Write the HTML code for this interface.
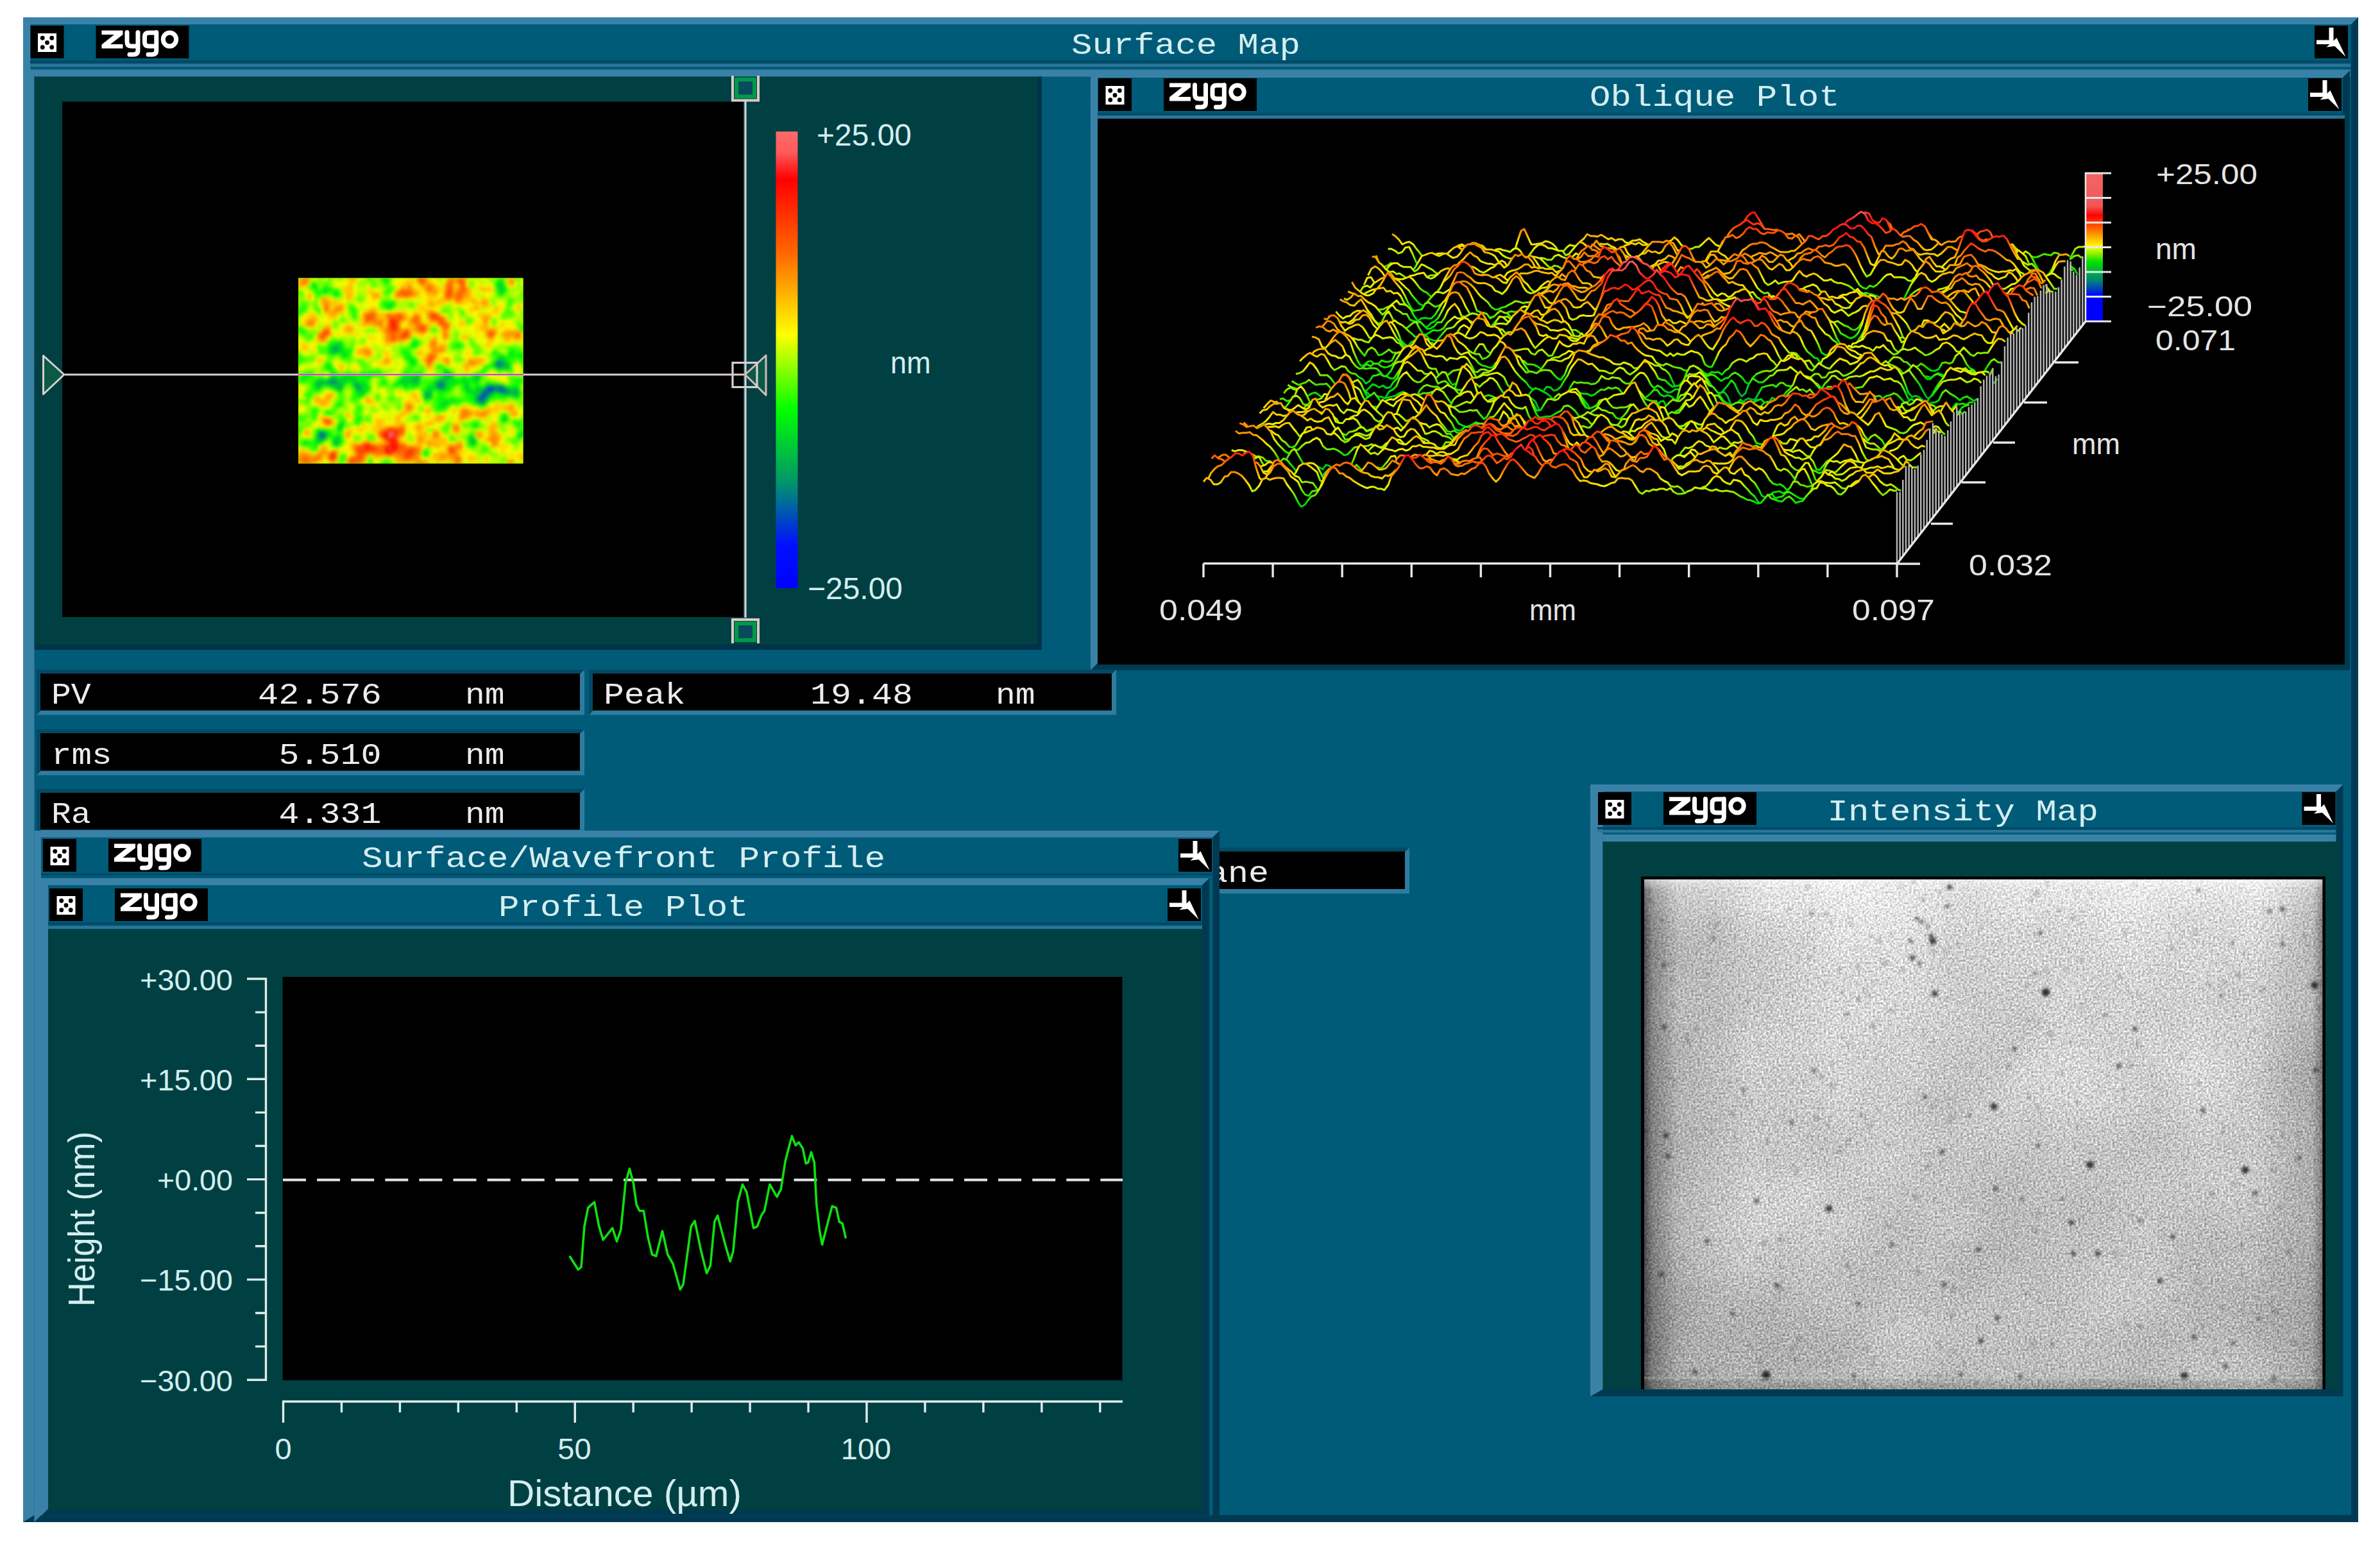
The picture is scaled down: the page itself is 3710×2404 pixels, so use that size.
<!DOCTYPE html>
<html><head><meta charset="utf-8"><title>Surface Map</title><style>html,body{margin:0;padding:0;background:#fff;overflow:hidden}svg{display:block}</style></head><body>
<svg width="3710" height="2404" viewBox="0 0 3710 2404" font-family="Liberation Sans, sans-serif">
<defs><clipPath id="hmc"><rect x="465" y="433.5" width="350.5" height="289.0"/></clipPath>
<filter id="hmb" x="-5%" y="-5%" width="110%" height="110%" color-interpolation-filters="sRGB"><feGaussianBlur stdDeviation="2.6"/></filter>
<linearGradient id="cb1" x1="0" y1="0" x2="0" y2="1"><stop offset="0" stop-color="#ff6a6a"/><stop offset="0.045" stop-color="#ff5a5a"/><stop offset="0.105" stop-color="#ff0000"/><stop offset="0.27" stop-color="#ff6a00"/><stop offset="0.445" stop-color="#ffff00"/><stop offset="0.61" stop-color="#00ff00"/><stop offset="0.775" stop-color="#009070"/><stop offset="0.905" stop-color="#0010ff"/><stop offset="1" stop-color="#0000ff"/></linearGradient>
<linearGradient id="zg" gradientUnits="userSpaceOnUse" x1="0" y1="0" x2="0" y2="-231"><stop offset="0" stop-color="#0000ff"/><stop offset="0.17" stop-color="#0000ff"/><stop offset="0.27" stop-color="#008070"/><stop offset="0.415" stop-color="#00e000"/><stop offset="0.525" stop-color="#f0f000"/><stop offset="0.63" stop-color="#ff7800"/><stop offset="0.73" stop-color="#ff1010"/><stop offset="0.81" stop-color="#f45050"/><stop offset="1" stop-color="#f46464"/></linearGradient>
<linearGradient id="cb2" x1="0" y1="0" x2="0" y2="1"><stop offset="0" stop-color="#f46464"/><stop offset="0.22" stop-color="#f05858"/><stop offset="0.285" stop-color="#ff0000"/><stop offset="0.39" stop-color="#ff7800"/><stop offset="0.495" stop-color="#ffff00"/><stop offset="0.6" stop-color="#00e000"/><stop offset="0.73" stop-color="#00807a"/><stop offset="0.83" stop-color="#0000ff"/><stop offset="1" stop-color="#0000ff"/></linearGradient>
<linearGradient id="ig" x1="0" y1="0" x2="0" y2="1"><stop offset="0" stop-color="#e4e4e4"/><stop offset="0.12" stop-color="#d6d6d6"/><stop offset="0.5" stop-color="#c8c8c8"/><stop offset="1" stop-color="#b8b8b8"/></linearGradient>
<linearGradient id="ivl" x1="0" y1="0" x2="1" y2="0"><stop offset="0" stop-color="#000" stop-opacity="0.62"/><stop offset="0.012" stop-color="#000" stop-opacity="0.36"/><stop offset="0.05" stop-color="#000" stop-opacity="0.12"/><stop offset="0.16" stop-color="#000" stop-opacity="0"/><stop offset="0.90" stop-color="#000" stop-opacity="0"/><stop offset="0.985" stop-color="#000" stop-opacity="0.14"/><stop offset="1" stop-color="#000" stop-opacity="0.4"/></linearGradient>
<linearGradient id="ivt" x1="0" y1="0" x2="0" y2="1"><stop offset="0" stop-color="#fff" stop-opacity="0.55"/><stop offset="0.02" stop-color="#fff" stop-opacity="0.15"/><stop offset="0.08" stop-color="#fff" stop-opacity="0"/><stop offset="0.97" stop-color="#000" stop-opacity="0"/><stop offset="1" stop-color="#000" stop-opacity="0.18"/></linearGradient>
<filter id="inz" x="0" y="0" width="100%" height="100%" color-interpolation-filters="sRGB"><feTurbulence type="fractalNoise" baseFrequency="0.3" numOctaves="2" seed="4" result="n"/><feColorMatrix in="n" type="matrix" values="1 0 0 0 0 1 0 0 0 0 1 0 0 0 0 0 0 0 0 1" result="g"/><feGaussianBlur in="g" stdDeviation="0.6" result="gb"/><feComposite in="SourceGraphic" in2="gb" operator="arithmetic" k1="0" k2="1" k3="0.66" k4="-0.33" result="c1"/><feTurbulence type="fractalNoise" baseFrequency="0.005" numOctaves="3" seed="9" result="n2"/><feColorMatrix in="n2" type="matrix" values="1 0 0 0 0 1 0 0 0 0 1 0 0 0 0 0 0 0 0 1" result="g2"/><feComposite in="c1" in2="g2" operator="arithmetic" k1="0" k2="1" k3="0.16" k4="-0.08"/></filter>
<filter id="idb" x="-50%" y="-50%" width="200%" height="200%"><feGaussianBlur stdDeviation="2"/></filter>
<clipPath id="icp"><rect x="2563" y="1371" width="1057.5" height="795"/></clipPath></defs>
<rect x="0" y="0" width="3710" height="2404" fill="#fff"/>
<rect x="36" y="27" width="3640" height="2346" fill="#005b78"/>
<path d="M36 27H3676L3665 38H47V2362L36 2373Z" fill="#3a81a8"/>
<path d="M3676 2373H36L47 2362H3665V38L3676 27Z" fill="#003a52"/>
<rect x="36" y="27" width="11.5" height="2335" fill="#3a81a8"/>
<rect x="36" y="108.5" width="17.5" height="2253.5" fill="#3a81a8"/>
<path d="M36 2373L53.5 2362V2333H36Z" fill="#3a81a8"/>
<rect x="47" y="94" width="3617" height="4.5" fill="#034a66"/>
<rect x="47" y="99.5" width="3617" height="4.5" fill="#2a7698"/>
<rect x="53.5" y="108.5" width="3610.5" height="11" fill="#3a81a8"/>
<rect x="47.5" y="40" width="52" height="51" fill="#000"/>
<rect x="59" y="52" width="29" height="29" fill="#fff"/>
<circle cx="66.25" cy="59.25" r="3.4" fill="#000"/>
<circle cx="80.75" cy="59.25" r="3.4" fill="#000"/>
<circle cx="73.5" cy="66.5" r="3.4" fill="#000"/>
<circle cx="66.25" cy="73.75" r="3.4" fill="#000"/>
<circle cx="80.75" cy="73.75" r="3.4" fill="#000"/>
<rect x="149.5" y="40" width="145" height="51" fill="#000"/>
<g transform="translate(149.5,40)" fill="none" stroke="#fff" stroke-width="7" stroke-linejoin="round" stroke-linecap="round"><path d="M9 7.5H42V14L22.5 29H42V35.5H9V29.5L28.5 14H9Z" fill="#fff" stroke="none"/><path d="M48.5 10.5V25Q48.5 32 55 32H64M65.5 10.5V38.5Q65.5 45 58 45H52.5"/><path d="M94 32H82.5Q76 32 76 26V17Q76 11 82.5 11H94M94.3 10.5V38.5Q94.3 45 87 45H81.5"/><ellipse cx="115" cy="21.5" rx="10.2" ry="10.6"/></g>
<rect x="3608" y="40" width="52" height="51" fill="#000"/>
<g transform="translate(3608,40) scale(1)" fill="#fff"><path d="M22.5 3H29.5V29H3V22.5H22.5Z"/><path d="M34.5 19L48.5 48.5L31.5 32L18.5 33.5Z"/></g>
<text x="1670" y="84" font-family="Liberation Mono, monospace" font-size="46" fill="#d4eef0" textLength="356.864" lengthAdjust="spacingAndGlyphs">Surface Map</text>
<rect x="53.5" y="119.5" width="1569.5" height="892.5" fill="#004042"/>
<path d="M1617 119.5H1624V1013H53.5L60 1005H1617Z" fill="#00324a"/>
<rect x="97" y="158.5" width="1061.5" height="803.5" fill="#000"/>
<rect x="465" y="433.5" width="350.5" height="289" fill="#a0e800"/>
<g clip-path="url(#hmc)"><g filter="url(#hmb)">
<rect x="453" y="421.5" width="374.5" height="313" fill="#a0e800"/>
<path fill="#002ee1" d="M760.4 602.9h5.6v5.6h-5.6z"/>
<path fill="#0048c3" d="M765.4 602.9h5.6v5.6h-5.6zM775.4 602.9h10.6v5.6h-10.6zM750.4 612.9h5.6v5.6h-5.6zM750.4 617.9h5.6v5.6h-5.6z"/>
<path fill="#0062a6" d="M775.4 563.1h5.6v5.6h-5.6zM685.3 597.9h5.6v5.6h-5.6zM755.4 607.9h10.6v5.6h-10.6zM755.4 612.9h5.6v5.6h-5.6zM745.4 617.9h5.6v5.6h-5.6zM500.1 672.7h5.6v5.6h-5.6zM500.1 677.7h5.6v5.6h-5.6z"/>
<path fill="#007b88" d="M775.4 568.0h5.6v5.6h-5.6zM515.1 592.9h5.6v5.6h-5.6zM680.3 597.9h5.6v5.6h-5.6zM755.4 602.9h5.6v5.6h-5.6zM770.4 602.9h5.6v5.6h-5.6zM750.4 607.9h5.6v5.6h-5.6zM765.4 607.9h5.6v5.6h-5.6zM780.5 607.9h10.6v5.6h-10.6zM745.4 622.8h10.6v5.6h-10.6z"/>
<path fill="#00936d" d="M780.5 563.1h5.6v5.6h-5.6zM520.1 592.9h5.6v5.6h-5.6zM685.3 592.9h5.6v5.6h-5.6zM555.1 602.9h5.6v5.6h-5.6zM685.3 602.9h5.6v5.6h-5.6zM785.5 602.9h5.6v5.6h-5.6zM775.4 607.9h5.6v5.6h-5.6zM790.5 607.9h5.6v5.6h-5.6zM665.3 612.9h5.6v5.6h-5.6zM755.4 617.9h5.6v5.6h-5.6zM495.0 672.7h5.6v5.6h-5.6zM495.0 677.7h5.6v5.6h-5.6z"/>
<path fill="#00a45c" d="M520.1 543.1h5.6v5.6h-5.6zM770.4 563.1h5.6v5.6h-5.6zM780.5 568.0h5.6v5.6h-5.6zM515.1 588.0h5.6v5.6h-5.6zM510.1 592.9h5.6v5.6h-5.6zM680.3 592.9h5.6v5.6h-5.6zM555.1 597.9h5.6v5.6h-5.6zM690.3 597.9h5.6v5.6h-5.6zM760.4 597.9h5.6v5.6h-5.6zM525.1 602.9h5.6v5.6h-5.6zM800.5 607.9h5.6v5.6h-5.6zM745.4 612.9h5.6v5.6h-5.6zM760.4 612.9h5.6v5.6h-5.6zM740.4 617.9h5.6v5.6h-5.6zM505.1 677.7h5.6v5.6h-5.6zM495.0 682.6h10.6v5.6h-10.6zM520.1 687.6h5.6v5.6h-5.6z"/>
<path fill="#00b44c" d="M520.1 538.1h5.6v5.6h-5.6zM515.1 543.1h5.6v5.6h-5.6zM525.1 543.1h5.6v5.6h-5.6zM780.5 558.1h5.6v5.6h-5.6zM770.4 568.0h5.6v5.6h-5.6zM785.5 568.0h5.6v5.6h-5.6zM695.3 583.0h5.6v5.6h-5.6zM520.1 588.0h5.6v5.6h-5.6zM640.2 588.0h10.6v5.6h-10.6zM495.0 592.9h15.6v5.6h-15.6zM645.3 592.9h5.6v5.6h-5.6zM690.3 592.9h5.6v5.6h-5.6zM495.0 597.9h5.6v5.6h-5.6zM515.1 597.9h5.6v5.6h-5.6zM525.1 597.9h5.6v5.6h-5.6zM550.1 597.9h5.6v5.6h-5.6zM765.4 597.9h15.6v5.6h-15.6zM560.1 602.9h5.6v5.6h-5.6zM680.3 602.9h5.6v5.6h-5.6zM690.3 602.9h5.6v5.6h-5.6zM665.3 607.9h5.6v5.6h-5.6zM770.4 607.9h5.6v5.6h-5.6zM795.5 607.9h5.6v5.6h-5.6zM660.3 612.9h5.6v5.6h-5.6zM800.5 612.9h5.6v5.6h-5.6zM740.4 622.8h5.6v5.6h-5.6zM505.1 672.7h5.6v5.6h-5.6zM735.4 682.6h5.6v5.6h-5.6zM735.4 687.6h5.6v5.6h-5.6z"/>
<path fill="#00c43b" d="M525.1 533.2h5.6v5.6h-5.6zM515.1 538.1h5.6v5.6h-5.6zM525.1 538.1h5.6v5.6h-5.6zM775.4 558.1h5.6v5.6h-5.6zM785.5 563.1h5.6v5.6h-5.6zM790.5 568.0h5.6v5.6h-5.6zM650.3 583.0h5.6v5.6h-5.6zM700.3 583.0h5.6v5.6h-5.6zM740.4 583.0h5.6v5.6h-5.6zM535.1 588.0h5.6v5.6h-5.6zM650.3 588.0h5.6v5.6h-5.6zM685.3 588.0h15.6v5.6h-15.6zM740.4 588.0h5.6v5.6h-5.6zM525.1 592.9h10.6v5.6h-10.6zM550.1 592.9h5.6v5.6h-5.6zM625.2 592.9h5.6v5.6h-5.6zM490.0 597.9h5.6v5.6h-5.6zM520.1 597.9h5.6v5.6h-5.6zM530.1 597.9h5.6v5.6h-5.6zM560.1 597.9h5.6v5.6h-5.6zM675.3 597.9h5.6v5.6h-5.6zM725.4 597.9h5.6v5.6h-5.6zM780.5 597.9h5.6v5.6h-5.6zM530.1 602.9h5.6v5.6h-5.6zM725.4 602.9h5.6v5.6h-5.6zM750.4 602.9h5.6v5.6h-5.6zM790.5 602.9h5.6v5.6h-5.6zM800.5 602.9h5.6v5.6h-5.6zM560.1 607.9h5.6v5.6h-5.6zM745.4 607.9h5.6v5.6h-5.6zM805.5 607.9h5.6v5.6h-5.6zM740.4 612.9h5.6v5.6h-5.6zM785.5 612.9h5.6v5.6h-5.6zM805.5 612.9h5.6v5.6h-5.6zM660.3 617.9h10.6v5.6h-10.6zM755.4 622.8h5.6v5.6h-5.6zM750.4 627.8h5.6v5.6h-5.6zM520.1 682.6h5.6v5.6h-5.6zM730.4 682.6h5.6v5.6h-5.6zM525.1 687.6h5.6v5.6h-5.6z"/>
<path fill="#00d52b" d="M775.4 438.5h5.6v5.6h-5.6zM775.4 443.5h10.6v5.6h-10.6zM780.5 448.4h5.6v5.6h-5.6zM780.5 453.4h5.6v5.6h-5.6zM605.2 473.4h5.6v5.6h-5.6zM530.1 543.1h5.6v5.6h-5.6zM515.1 548.1h10.6v5.6h-10.6zM795.5 548.1h5.6v5.6h-5.6zM780.5 553.1h5.6v5.6h-5.6zM640.2 558.1h5.6v5.6h-5.6zM775.4 573.0h5.6v5.6h-5.6zM690.3 578.0h10.6v5.6h-10.6zM645.3 583.0h5.6v5.6h-5.6zM690.3 583.0h5.6v5.6h-5.6zM510.1 588.0h5.6v5.6h-5.6zM540.1 588.0h15.6v5.6h-15.6zM625.2 588.0h10.6v5.6h-10.6zM700.3 588.0h5.6v5.6h-5.6zM720.4 588.0h5.6v5.6h-5.6zM735.4 588.0h5.6v5.6h-5.6zM490.0 592.9h5.6v5.6h-5.6zM535.1 592.9h5.6v5.6h-5.6zM555.1 592.9h5.6v5.6h-5.6zM620.2 592.9h5.6v5.6h-5.6zM630.2 592.9h15.6v5.6h-15.6zM650.3 592.9h5.6v5.6h-5.6zM675.3 592.9h5.6v5.6h-5.6zM695.3 592.9h5.6v5.6h-5.6zM500.1 597.9h5.6v5.6h-5.6zM510.1 597.9h5.6v5.6h-5.6zM630.2 597.9h5.6v5.6h-5.6zM645.3 597.9h5.6v5.6h-5.6zM755.4 597.9h5.6v5.6h-5.6zM495.0 602.9h5.6v5.6h-5.6zM520.1 602.9h5.6v5.6h-5.6zM665.3 602.9h10.6v5.6h-10.6zM740.4 602.9h10.6v5.6h-10.6zM555.1 607.9h5.6v5.6h-5.6zM565.1 607.9h5.6v5.6h-5.6zM660.3 607.9h5.6v5.6h-5.6zM730.4 607.9h15.6v5.6h-15.6zM560.1 612.9h5.6v5.6h-5.6zM765.4 612.9h5.6v5.6h-5.6zM780.5 612.9h5.6v5.6h-5.6zM790.5 612.9h10.6v5.6h-10.6zM690.3 627.8h5.6v5.6h-5.6zM745.4 627.8h5.6v5.6h-5.6zM785.5 647.8h5.6v5.6h-5.6zM530.1 657.7h5.6v5.6h-5.6zM525.1 662.7h10.6v5.6h-10.6zM810.5 672.7h5.6v5.6h-5.6zM525.1 677.7h5.6v5.6h-5.6zM525.1 682.6h5.6v5.6h-5.6z"/>
<path fill="#00e51a" d="M595.2 433.5h10.6v5.6h-10.6zM780.5 438.5h5.6v5.6h-5.6zM485.0 443.5h5.6v5.6h-5.6zM505.1 448.4h5.6v5.6h-5.6zM775.4 448.4h5.6v5.6h-5.6zM505.1 453.4h5.6v5.6h-5.6zM520.1 453.4h5.6v5.6h-5.6zM775.4 453.4h5.6v5.6h-5.6zM600.2 473.4h5.6v5.6h-5.6zM605.2 478.3h5.6v5.6h-5.6zM520.1 533.2h5.6v5.6h-5.6zM645.3 533.2h5.6v5.6h-5.6zM530.1 538.1h5.6v5.6h-5.6zM510.1 543.1h5.6v5.6h-5.6zM530.1 548.1h10.6v5.6h-10.6zM535.1 553.1h5.6v5.6h-5.6zM775.4 553.1h5.6v5.6h-5.6zM810.5 553.1h5.6v5.6h-5.6zM785.5 558.1h5.6v5.6h-5.6zM640.2 563.1h5.6v5.6h-5.6zM790.5 563.1h5.6v5.6h-5.6zM510.1 568.0h5.6v5.6h-5.6zM765.4 568.0h5.6v5.6h-5.6zM690.3 573.0h5.6v5.6h-5.6zM780.5 573.0h15.6v5.6h-15.6zM515.1 578.0h5.6v5.6h-5.6zM475.0 583.0h5.6v5.6h-5.6zM515.1 583.0h5.6v5.6h-5.6zM535.1 583.0h20.6v5.6h-20.6zM570.1 583.0h5.6v5.6h-5.6zM630.2 583.0h15.6v5.6h-15.6zM745.4 583.0h5.6v5.6h-5.6zM470.0 588.0h5.6v5.6h-5.6zM500.1 588.0h5.6v5.6h-5.6zM525.1 588.0h10.6v5.6h-10.6zM635.2 588.0h5.6v5.6h-5.6zM705.3 588.0h5.6v5.6h-5.6zM725.4 588.0h5.6v5.6h-5.6zM745.4 588.0h5.6v5.6h-5.6zM560.1 592.9h10.6v5.6h-10.6zM700.3 592.9h15.6v5.6h-15.6zM720.4 592.9h10.6v5.6h-10.6zM740.4 592.9h5.6v5.6h-5.6zM505.1 597.9h5.6v5.6h-5.6zM565.1 597.9h10.6v5.6h-10.6zM615.2 597.9h5.6v5.6h-5.6zM640.2 597.9h5.6v5.6h-5.6zM695.3 597.9h5.6v5.6h-5.6zM740.4 597.9h5.6v5.6h-5.6zM490.0 602.9h5.6v5.6h-5.6zM565.1 602.9h10.6v5.6h-10.6zM675.3 602.9h5.6v5.6h-5.6zM695.3 602.9h5.6v5.6h-5.6zM730.4 602.9h5.6v5.6h-5.6zM795.5 602.9h5.6v5.6h-5.6zM805.5 602.9h5.6v5.6h-5.6zM670.3 607.9h5.6v5.6h-5.6zM725.4 607.9h5.6v5.6h-5.6zM670.3 612.9h5.6v5.6h-5.6zM735.4 612.9h5.6v5.6h-5.6zM670.3 617.9h5.6v5.6h-5.6zM760.4 617.9h5.6v5.6h-5.6zM690.3 622.8h20.6v5.6h-20.6zM525.1 627.8h5.6v5.6h-5.6zM685.3 627.8h5.6v5.6h-5.6zM695.3 627.8h5.6v5.6h-5.6zM685.3 632.8h5.6v5.6h-5.6zM780.5 652.7h10.6v5.6h-10.6zM495.0 667.7h5.6v5.6h-5.6zM525.1 667.7h5.6v5.6h-5.6zM510.1 672.7h5.6v5.6h-5.6zM490.0 677.7h5.6v5.6h-5.6zM730.4 677.7h5.6v5.6h-5.6zM805.5 677.7h10.6v5.6h-10.6zM490.0 682.6h5.6v5.6h-5.6zM505.1 682.6h5.6v5.6h-5.6zM470.0 687.6h10.6v5.6h-10.6zM490.0 687.6h10.6v5.6h-10.6zM730.4 687.6h5.6v5.6h-5.6zM490.0 692.6h5.6v5.6h-5.6zM520.1 692.6h5.6v5.6h-5.6zM660.3 702.6h5.6v5.6h-5.6z"/>
<path fill="#00f50a" d="M780.5 433.5h5.6v5.6h-5.6zM490.0 443.5h5.6v5.6h-5.6zM490.0 448.4h5.6v5.6h-5.6zM510.1 448.4h5.6v5.6h-5.6zM785.5 448.4h5.6v5.6h-5.6zM525.1 453.4h5.6v5.6h-5.6zM520.1 458.4h5.6v5.6h-5.6zM610.2 468.4h5.6v5.6h-5.6zM610.2 473.4h5.6v5.6h-5.6zM470.0 478.3h5.6v5.6h-5.6zM465.0 483.3h5.6v5.6h-5.6zM550.1 488.3h5.6v5.6h-5.6zM810.5 508.2h5.6v5.6h-5.6zM465.0 513.2h10.6v5.6h-10.6zM645.3 528.2h5.6v5.6h-5.6zM515.1 533.2h5.6v5.6h-5.6zM530.1 533.2h5.6v5.6h-5.6zM640.2 533.2h5.6v5.6h-5.6zM510.1 538.1h5.6v5.6h-5.6zM640.2 538.1h5.6v5.6h-5.6zM710.4 538.1h5.6v5.6h-5.6zM540.1 543.1h5.6v5.6h-5.6zM795.5 543.1h5.6v5.6h-5.6zM510.1 548.1h5.6v5.6h-5.6zM525.1 548.1h5.6v5.6h-5.6zM540.1 548.1h5.6v5.6h-5.6zM770.4 548.1h5.6v5.6h-5.6zM810.5 548.1h5.6v5.6h-5.6zM530.1 553.1h5.6v5.6h-5.6zM630.2 553.1h10.6v5.6h-10.6zM790.5 553.1h10.6v5.6h-10.6zM805.5 553.1h5.6v5.6h-5.6zM635.2 558.1h5.6v5.6h-5.6zM770.4 558.1h5.6v5.6h-5.6zM645.3 563.1h5.6v5.6h-5.6zM765.4 563.1h5.6v5.6h-5.6zM505.1 568.0h5.6v5.6h-5.6zM510.1 573.0h10.6v5.6h-10.6zM520.1 578.0h5.6v5.6h-5.6zM575.2 578.0h5.6v5.6h-5.6zM585.2 578.0h5.6v5.6h-5.6zM700.3 578.0h5.6v5.6h-5.6zM470.0 583.0h5.6v5.6h-5.6zM480.0 583.0h5.6v5.6h-5.6zM520.1 583.0h5.6v5.6h-5.6zM530.1 583.0h5.6v5.6h-5.6zM555.1 583.0h15.6v5.6h-15.6zM575.2 583.0h5.6v5.6h-5.6zM735.4 583.0h5.6v5.6h-5.6zM495.0 588.0h5.6v5.6h-5.6zM570.1 588.0h5.6v5.6h-5.6zM680.3 588.0h5.6v5.6h-5.6zM715.4 588.0h5.6v5.6h-5.6zM730.4 588.0h5.6v5.6h-5.6zM540.1 592.9h10.6v5.6h-10.6zM595.2 592.9h5.6v5.6h-5.6zM715.4 592.9h5.6v5.6h-5.6zM735.4 592.9h5.6v5.6h-5.6zM625.2 597.9h5.6v5.6h-5.6zM635.2 597.9h5.6v5.6h-5.6zM650.3 597.9h5.6v5.6h-5.6zM665.3 597.9h10.6v5.6h-10.6zM700.3 597.9h10.6v5.6h-10.6zM720.4 597.9h5.6v5.6h-5.6zM800.5 597.9h5.6v5.6h-5.6zM550.1 602.9h5.6v5.6h-5.6zM630.2 602.9h5.6v5.6h-5.6zM700.3 602.9h5.6v5.6h-5.6zM720.4 602.9h5.6v5.6h-5.6zM525.1 607.9h5.6v5.6h-5.6zM570.1 607.9h5.6v5.6h-5.6zM685.3 607.9h10.6v5.6h-10.6zM555.1 612.9h5.6v5.6h-5.6zM565.1 612.9h5.6v5.6h-5.6zM730.4 612.9h5.6v5.6h-5.6zM775.4 612.9h5.6v5.6h-5.6zM685.3 617.9h5.6v5.6h-5.6zM735.4 617.9h5.6v5.6h-5.6zM800.5 617.9h5.6v5.6h-5.6zM685.3 622.8h5.6v5.6h-5.6zM710.4 622.8h5.6v5.6h-5.6zM735.4 622.8h5.6v5.6h-5.6zM530.1 627.8h5.6v5.6h-5.6zM740.4 627.8h5.6v5.6h-5.6zM680.3 632.8h5.6v5.6h-5.6zM690.3 632.8h5.6v5.6h-5.6zM510.1 642.8h5.6v5.6h-5.6zM555.1 647.8h5.6v5.6h-5.6zM780.5 647.8h5.6v5.6h-5.6zM530.1 652.7h5.6v5.6h-5.6zM555.1 652.7h5.6v5.6h-5.6zM735.4 657.7h10.6v5.6h-10.6zM805.5 657.7h5.6v5.6h-5.6zM740.4 662.7h5.6v5.6h-5.6zM500.1 667.7h5.6v5.6h-5.6zM530.1 667.7h5.6v5.6h-5.6zM510.1 677.7h5.6v5.6h-5.6zM520.1 677.7h5.6v5.6h-5.6zM480.0 687.6h5.6v5.6h-5.6zM735.4 692.6h5.6v5.6h-5.6zM575.2 717.5h5.6v5.6h-5.6zM600.2 717.5h5.6v5.6h-5.6z"/>
<path fill="#0fff00" d="M775.4 433.5h5.6v5.6h-5.6zM485.0 438.5h5.6v5.6h-5.6zM600.2 438.5h5.6v5.6h-5.6zM770.4 438.5h5.6v5.6h-5.6zM505.1 443.5h5.6v5.6h-5.6zM770.4 443.5h5.6v5.6h-5.6zM500.1 448.4h5.6v5.6h-5.6zM515.1 448.4h5.6v5.6h-5.6zM605.2 448.4h5.6v5.6h-5.6zM490.0 453.4h15.6v5.6h-15.6zM600.2 453.4h5.6v5.6h-5.6zM525.1 458.4h5.6v5.6h-5.6zM595.2 468.4h15.6v5.6h-15.6zM595.2 473.4h5.6v5.6h-5.6zM790.5 473.4h5.6v5.6h-5.6zM490.0 478.3h5.6v5.6h-5.6zM545.1 478.3h10.6v5.6h-10.6zM600.2 478.3h5.6v5.6h-5.6zM550.1 483.3h5.6v5.6h-5.6zM550.1 493.3h5.6v5.6h-5.6zM465.0 508.2h5.6v5.6h-5.6zM470.0 518.2h5.6v5.6h-5.6zM480.0 523.2h5.6v5.6h-5.6zM515.1 528.2h5.6v5.6h-5.6zM510.1 533.2h5.6v5.6h-5.6zM650.3 533.2h5.6v5.6h-5.6zM710.4 533.2h10.6v5.6h-10.6zM535.1 538.1h5.6v5.6h-5.6zM645.3 538.1h5.6v5.6h-5.6zM705.3 538.1h5.6v5.6h-5.6zM715.4 538.1h5.6v5.6h-5.6zM535.1 543.1h5.6v5.6h-5.6zM545.1 543.1h5.6v5.6h-5.6zM625.2 543.1h10.6v5.6h-10.6zM625.2 548.1h15.6v5.6h-15.6zM765.4 548.1h5.6v5.6h-5.6zM790.5 548.1h5.6v5.6h-5.6zM800.5 548.1h10.6v5.6h-10.6zM465.0 553.1h5.6v5.6h-5.6zM540.1 553.1h5.6v5.6h-5.6zM785.5 553.1h5.6v5.6h-5.6zM800.5 553.1h5.6v5.6h-5.6zM465.0 558.1h10.6v5.6h-10.6zM630.2 558.1h5.6v5.6h-5.6zM645.3 558.1h5.6v5.6h-5.6zM790.5 558.1h5.6v5.6h-5.6zM800.5 558.1h5.6v5.6h-5.6zM810.5 558.1h5.6v5.6h-5.6zM465.0 563.1h5.6v5.6h-5.6zM510.1 563.1h5.6v5.6h-5.6zM635.2 563.1h5.6v5.6h-5.6zM810.5 563.1h5.6v5.6h-5.6zM640.2 568.0h5.6v5.6h-5.6zM680.3 568.0h10.6v5.6h-10.6zM755.4 568.0h10.6v5.6h-10.6zM505.1 573.0h5.6v5.6h-5.6zM750.4 573.0h10.6v5.6h-10.6zM770.4 573.0h5.6v5.6h-5.6zM480.0 578.0h5.6v5.6h-5.6zM565.1 578.0h5.6v5.6h-5.6zM580.2 578.0h5.6v5.6h-5.6zM590.2 578.0h5.6v5.6h-5.6zM630.2 578.0h5.6v5.6h-5.6zM650.3 578.0h5.6v5.6h-5.6zM750.4 578.0h5.6v5.6h-5.6zM525.1 583.0h5.6v5.6h-5.6zM580.2 583.0h5.6v5.6h-5.6zM625.2 583.0h5.6v5.6h-5.6zM685.3 583.0h5.6v5.6h-5.6zM465.0 588.0h5.6v5.6h-5.6zM475.0 588.0h5.6v5.6h-5.6zM490.0 588.0h5.6v5.6h-5.6zM505.1 588.0h5.6v5.6h-5.6zM555.1 588.0h15.6v5.6h-15.6zM595.2 588.0h5.6v5.6h-5.6zM620.2 588.0h5.6v5.6h-5.6zM710.4 588.0h5.6v5.6h-5.6zM800.5 588.0h10.6v5.6h-10.6zM470.0 592.9h5.6v5.6h-5.6zM485.0 592.9h5.6v5.6h-5.6zM570.1 592.9h5.6v5.6h-5.6zM615.2 592.9h5.6v5.6h-5.6zM660.3 592.9h5.6v5.6h-5.6zM670.3 592.9h5.6v5.6h-5.6zM730.4 592.9h5.6v5.6h-5.6zM760.4 592.9h5.6v5.6h-5.6zM805.5 592.9h10.6v5.6h-10.6zM485.0 597.9h5.6v5.6h-5.6zM535.1 597.9h5.6v5.6h-5.6zM545.1 597.9h5.6v5.6h-5.6zM595.2 597.9h5.6v5.6h-5.6zM610.2 597.9h5.6v5.6h-5.6zM620.2 597.9h5.6v5.6h-5.6zM730.4 597.9h5.6v5.6h-5.6zM745.4 597.9h5.6v5.6h-5.6zM795.5 597.9h5.6v5.6h-5.6zM805.5 597.9h5.6v5.6h-5.6zM485.0 602.9h5.6v5.6h-5.6zM515.1 602.9h5.6v5.6h-5.6zM640.2 602.9h5.6v5.6h-5.6zM660.3 602.9h5.6v5.6h-5.6zM735.4 602.9h5.6v5.6h-5.6zM530.1 607.9h5.6v5.6h-5.6zM550.1 607.9h5.6v5.6h-5.6zM680.3 607.9h5.6v5.6h-5.6zM695.3 607.9h5.6v5.6h-5.6zM720.4 607.9h5.6v5.6h-5.6zM475.0 612.9h10.6v5.6h-10.6zM550.1 612.9h5.6v5.6h-5.6zM680.3 612.9h10.6v5.6h-10.6zM725.4 612.9h5.6v5.6h-5.6zM770.4 612.9h5.6v5.6h-5.6zM550.1 617.9h10.6v5.6h-10.6zM585.2 617.9h5.6v5.6h-5.6zM680.3 617.9h5.6v5.6h-5.6zM690.3 617.9h5.6v5.6h-5.6zM700.3 617.9h10.6v5.6h-10.6zM725.4 617.9h10.6v5.6h-10.6zM765.4 617.9h20.6v5.6h-20.6zM805.5 617.9h5.6v5.6h-5.6zM660.3 622.8h5.6v5.6h-5.6zM680.3 622.8h5.6v5.6h-5.6zM715.4 622.8h5.6v5.6h-5.6zM730.4 622.8h5.6v5.6h-5.6zM680.3 627.8h5.6v5.6h-5.6zM755.4 627.8h5.6v5.6h-5.6zM555.1 632.8h10.6v5.6h-10.6zM485.0 637.8h10.6v5.6h-10.6zM490.0 642.8h5.6v5.6h-5.6zM785.5 642.8h5.6v5.6h-5.6zM465.0 647.8h5.6v5.6h-5.6zM485.0 647.8h5.6v5.6h-5.6zM560.1 647.8h5.6v5.6h-5.6zM645.3 647.8h5.6v5.6h-5.6zM800.5 652.7h5.6v5.6h-5.6zM525.1 657.7h5.6v5.6h-5.6zM555.1 657.7h5.6v5.6h-5.6zM800.5 657.7h5.6v5.6h-5.6zM735.4 662.7h5.6v5.6h-5.6zM805.5 662.7h5.6v5.6h-5.6zM465.0 667.7h5.6v5.6h-5.6zM505.1 667.7h5.6v5.6h-5.6zM810.5 667.7h5.6v5.6h-5.6zM490.0 672.7h5.6v5.6h-5.6zM525.1 672.7h5.6v5.6h-5.6zM805.5 672.7h5.6v5.6h-5.6zM515.1 677.7h5.6v5.6h-5.6zM530.1 677.7h5.6v5.6h-5.6zM735.4 677.7h5.6v5.6h-5.6zM515.1 682.6h5.6v5.6h-5.6zM530.1 682.6h5.6v5.6h-5.6zM485.0 687.6h5.6v5.6h-5.6zM500.1 687.6h5.6v5.6h-5.6zM515.1 687.6h5.6v5.6h-5.6zM530.1 687.6h5.6v5.6h-5.6zM740.4 687.6h5.6v5.6h-5.6zM525.1 692.6h5.6v5.6h-5.6zM730.4 692.6h5.6v5.6h-5.6zM490.0 697.6h5.6v5.6h-5.6zM530.1 707.6h5.6v5.6h-5.6zM660.3 707.6h5.6v5.6h-5.6zM530.1 712.5h5.6v5.6h-5.6zM595.2 717.5h5.6v5.6h-5.6z"/>
<path fill="#34ff00" d="M575.2 433.5h5.6v5.6h-5.6zM605.2 433.5h5.6v5.6h-5.6zM490.0 438.5h5.6v5.6h-5.6zM580.2 438.5h5.6v5.6h-5.6zM595.2 438.5h5.6v5.6h-5.6zM580.2 443.5h5.6v5.6h-5.6zM785.5 443.5h5.6v5.6h-5.6zM485.0 448.4h5.6v5.6h-5.6zM520.1 448.4h5.6v5.6h-5.6zM465.0 453.4h5.6v5.6h-5.6zM510.1 453.4h10.6v5.6h-10.6zM605.2 453.4h5.6v5.6h-5.6zM785.5 453.4h5.6v5.6h-5.6zM490.0 458.4h10.6v5.6h-10.6zM775.4 458.4h10.6v5.6h-10.6zM560.1 463.4h5.6v5.6h-5.6zM790.5 463.4h5.6v5.6h-5.6zM490.0 468.4h5.6v5.6h-5.6zM790.5 468.4h10.6v5.6h-10.6zM470.0 473.4h10.6v5.6h-10.6zM545.1 473.4h5.6v5.6h-5.6zM640.2 473.4h5.6v5.6h-5.6zM465.0 478.3h5.6v5.6h-5.6zM475.0 478.3h5.6v5.6h-5.6zM470.0 483.3h5.6v5.6h-5.6zM495.0 483.3h5.6v5.6h-5.6zM545.1 483.3h5.6v5.6h-5.6zM715.4 483.3h5.6v5.6h-5.6zM785.5 483.3h10.6v5.6h-10.6zM465.0 488.3h5.6v5.6h-5.6zM795.5 488.3h5.6v5.6h-5.6zM730.4 498.3h5.6v5.6h-5.6zM520.1 503.3h5.6v5.6h-5.6zM475.0 513.2h5.6v5.6h-5.6zM675.3 513.2h5.6v5.6h-5.6zM520.1 528.2h15.6v5.6h-15.6zM640.2 528.2h5.6v5.6h-5.6zM545.1 533.2h5.6v5.6h-5.6zM705.3 533.2h5.6v5.6h-5.6zM735.4 533.2h5.6v5.6h-5.6zM495.0 538.1h5.6v5.6h-5.6zM545.1 538.1h5.6v5.6h-5.6zM635.2 538.1h5.6v5.6h-5.6zM740.4 538.1h5.6v5.6h-5.6zM795.5 538.1h5.6v5.6h-5.6zM500.1 543.1h10.6v5.6h-10.6zM635.2 543.1h5.6v5.6h-5.6zM770.4 543.1h5.6v5.6h-5.6zM790.5 543.1h5.6v5.6h-5.6zM800.5 543.1h10.6v5.6h-10.6zM500.1 548.1h5.6v5.6h-5.6zM545.1 548.1h5.6v5.6h-5.6zM740.4 548.1h5.6v5.6h-5.6zM775.4 548.1h5.6v5.6h-5.6zM515.1 553.1h5.6v5.6h-5.6zM640.2 553.1h5.6v5.6h-5.6zM770.4 553.1h5.6v5.6h-5.6zM475.0 558.1h5.6v5.6h-5.6zM485.0 558.1h5.6v5.6h-5.6zM540.1 558.1h5.6v5.6h-5.6zM795.5 558.1h5.6v5.6h-5.6zM505.1 563.1h5.6v5.6h-5.6zM560.1 563.1h5.6v5.6h-5.6zM795.5 563.1h5.6v5.6h-5.6zM515.1 568.0h5.6v5.6h-5.6zM565.1 568.0h5.6v5.6h-5.6zM635.2 568.0h5.6v5.6h-5.6zM645.3 568.0h5.6v5.6h-5.6zM585.2 573.0h5.6v5.6h-5.6zM630.2 573.0h15.6v5.6h-15.6zM655.3 573.0h5.6v5.6h-5.6zM680.3 573.0h5.6v5.6h-5.6zM695.3 573.0h5.6v5.6h-5.6zM795.5 573.0h5.6v5.6h-5.6zM475.0 578.0h5.6v5.6h-5.6zM485.0 578.0h5.6v5.6h-5.6zM540.1 578.0h5.6v5.6h-5.6zM560.1 578.0h5.6v5.6h-5.6zM570.1 578.0h5.6v5.6h-5.6zM635.2 578.0h5.6v5.6h-5.6zM645.3 578.0h5.6v5.6h-5.6zM655.3 578.0h5.6v5.6h-5.6zM745.4 578.0h5.6v5.6h-5.6zM485.0 583.0h5.6v5.6h-5.6zM585.2 583.0h10.6v5.6h-10.6zM655.3 583.0h5.6v5.6h-5.6zM680.3 583.0h5.6v5.6h-5.6zM705.3 583.0h5.6v5.6h-5.6zM720.4 583.0h5.6v5.6h-5.6zM480.0 588.0h10.6v5.6h-10.6zM575.2 588.0h5.6v5.6h-5.6zM675.3 588.0h5.6v5.6h-5.6zM795.5 588.0h5.6v5.6h-5.6zM810.5 588.0h5.6v5.6h-5.6zM465.0 592.9h5.6v5.6h-5.6zM475.0 592.9h10.6v5.6h-10.6zM600.2 592.9h5.6v5.6h-5.6zM655.3 592.9h5.6v5.6h-5.6zM665.3 592.9h5.6v5.6h-5.6zM745.4 592.9h5.6v5.6h-5.6zM755.4 592.9h5.6v5.6h-5.6zM795.5 592.9h10.6v5.6h-10.6zM590.2 597.9h5.6v5.6h-5.6zM600.2 597.9h5.6v5.6h-5.6zM660.3 597.9h5.6v5.6h-5.6zM710.4 597.9h10.6v5.6h-10.6zM735.4 597.9h5.6v5.6h-5.6zM750.4 597.9h5.6v5.6h-5.6zM785.5 597.9h10.6v5.6h-10.6zM500.1 602.9h5.6v5.6h-5.6zM575.2 602.9h5.6v5.6h-5.6zM635.2 602.9h5.6v5.6h-5.6zM655.3 602.9h5.6v5.6h-5.6zM480.0 607.9h20.6v5.6h-20.6zM655.3 607.9h5.6v5.6h-5.6zM675.3 607.9h5.6v5.6h-5.6zM700.3 607.9h5.6v5.6h-5.6zM530.1 612.9h5.6v5.6h-5.6zM690.3 612.9h5.6v5.6h-5.6zM480.0 617.9h5.6v5.6h-5.6zM530.1 617.9h5.6v5.6h-5.6zM545.1 617.9h5.6v5.6h-5.6zM560.1 617.9h5.6v5.6h-5.6zM605.2 617.9h10.6v5.6h-10.6zM695.3 617.9h5.6v5.6h-5.6zM710.4 617.9h15.6v5.6h-15.6zM785.5 617.9h5.6v5.6h-5.6zM795.5 617.9h5.6v5.6h-5.6zM475.0 622.8h5.6v5.6h-5.6zM525.1 622.8h10.6v5.6h-10.6zM550.1 622.8h5.6v5.6h-5.6zM665.3 622.8h5.6v5.6h-5.6zM675.3 622.8h5.6v5.6h-5.6zM720.4 622.8h10.6v5.6h-10.6zM760.4 622.8h5.6v5.6h-5.6zM520.1 627.8h5.6v5.6h-5.6zM675.3 627.8h5.6v5.6h-5.6zM700.3 627.8h5.6v5.6h-5.6zM710.4 627.8h5.6v5.6h-5.6zM735.4 627.8h5.6v5.6h-5.6zM490.0 632.8h5.6v5.6h-5.6zM520.1 632.8h10.6v5.6h-10.6zM620.2 632.8h5.6v5.6h-5.6zM675.3 632.8h5.6v5.6h-5.6zM695.3 632.8h5.6v5.6h-5.6zM505.1 637.8h15.6v5.6h-15.6zM555.1 637.8h10.6v5.6h-10.6zM680.3 637.8h10.6v5.6h-10.6zM485.0 642.8h5.6v5.6h-5.6zM505.1 642.8h5.6v5.6h-5.6zM515.1 642.8h5.6v5.6h-5.6zM555.1 642.8h5.6v5.6h-5.6zM780.5 642.8h5.6v5.6h-5.6zM470.0 647.8h10.6v5.6h-10.6zM490.0 647.8h5.6v5.6h-5.6zM530.1 647.8h5.6v5.6h-5.6zM570.1 647.8h5.6v5.6h-5.6zM465.0 652.7h10.6v5.6h-10.6zM535.1 652.7h5.6v5.6h-5.6zM550.1 652.7h5.6v5.6h-5.6zM560.1 652.7h5.6v5.6h-5.6zM570.1 652.7h5.6v5.6h-5.6zM810.5 652.7h5.6v5.6h-5.6zM535.1 657.7h5.6v5.6h-5.6zM695.3 657.7h5.6v5.6h-5.6zM730.4 657.7h5.6v5.6h-5.6zM780.5 657.7h5.6v5.6h-5.6zM810.5 657.7h5.6v5.6h-5.6zM465.0 662.7h5.6v5.6h-5.6zM695.3 662.7h5.6v5.6h-5.6zM810.5 662.7h5.6v5.6h-5.6zM490.0 667.7h5.6v5.6h-5.6zM510.1 667.7h5.6v5.6h-5.6zM690.3 667.7h5.6v5.6h-5.6zM465.0 672.7h5.6v5.6h-5.6zM515.1 672.7h5.6v5.6h-5.6zM730.4 672.7h5.6v5.6h-5.6zM575.2 677.7h5.6v5.6h-5.6zM475.0 682.6h5.6v5.6h-5.6zM700.3 682.6h10.6v5.6h-10.6zM740.4 682.6h5.6v5.6h-5.6zM805.5 682.6h5.6v5.6h-5.6zM465.0 687.6h5.6v5.6h-5.6zM800.5 687.6h5.6v5.6h-5.6zM470.0 692.6h20.6v5.6h-20.6zM485.0 697.6h5.6v5.6h-5.6zM750.4 697.6h10.6v5.6h-10.6zM665.3 702.6h5.6v5.6h-5.6zM535.1 707.6h5.6v5.6h-5.6zM575.2 712.5h5.6v5.6h-5.6zM530.1 717.5h5.6v5.6h-5.6zM605.2 717.5h5.6v5.6h-5.6z"/>
<path fill="#5aff00" d="M510.1 433.5h5.6v5.6h-5.6zM570.1 433.5h5.6v5.6h-5.6zM590.2 433.5h5.6v5.6h-5.6zM805.5 433.5h5.6v5.6h-5.6zM505.1 438.5h10.6v5.6h-10.6zM605.2 438.5h5.6v5.6h-5.6zM730.4 438.5h5.6v5.6h-5.6zM480.0 443.5h5.6v5.6h-5.6zM500.1 443.5h5.6v5.6h-5.6zM510.1 443.5h5.6v5.6h-5.6zM600.2 443.5h10.6v5.6h-10.6zM495.0 448.4h5.6v5.6h-5.6zM525.1 448.4h5.6v5.6h-5.6zM600.2 448.4h5.6v5.6h-5.6zM610.2 448.4h5.6v5.6h-5.6zM770.4 448.4h5.6v5.6h-5.6zM595.2 453.4h5.6v5.6h-5.6zM770.4 453.4h5.6v5.6h-5.6zM810.5 453.4h5.6v5.6h-5.6zM515.1 458.4h5.6v5.6h-5.6zM600.2 458.4h5.6v5.6h-5.6zM810.5 458.4h5.6v5.6h-5.6zM490.0 463.4h5.6v5.6h-5.6zM555.1 463.4h5.6v5.6h-5.6zM795.5 463.4h5.6v5.6h-5.6zM470.0 468.4h10.6v5.6h-10.6zM465.0 473.4h5.6v5.6h-5.6zM490.0 473.4h5.6v5.6h-5.6zM590.2 473.4h5.6v5.6h-5.6zM615.2 473.4h5.6v5.6h-5.6zM635.2 473.4h5.6v5.6h-5.6zM495.0 478.3h5.6v5.6h-5.6zM595.2 478.3h5.6v5.6h-5.6zM610.2 478.3h5.6v5.6h-5.6zM690.3 478.3h5.6v5.6h-5.6zM790.5 478.3h5.6v5.6h-5.6zM690.3 483.3h10.6v5.6h-10.6zM720.4 483.3h5.6v5.6h-5.6zM795.5 483.3h5.6v5.6h-5.6zM545.1 488.3h5.6v5.6h-5.6zM720.4 488.3h5.6v5.6h-5.6zM780.5 488.3h15.6v5.6h-15.6zM530.1 493.3h5.6v5.6h-5.6zM700.3 493.3h5.6v5.6h-5.6zM780.5 493.3h10.6v5.6h-10.6zM530.1 498.3h10.6v5.6h-10.6zM725.4 498.3h5.6v5.6h-5.6zM765.4 498.3h5.6v5.6h-5.6zM805.5 503.3h10.6v5.6h-10.6zM675.3 508.2h5.6v5.6h-5.6zM580.2 513.2h5.6v5.6h-5.6zM670.3 513.2h5.6v5.6h-5.6zM810.5 513.2h5.6v5.6h-5.6zM475.0 518.2h15.6v5.6h-15.6zM710.4 518.2h5.6v5.6h-5.6zM475.0 523.2h5.6v5.6h-5.6zM485.0 523.2h5.6v5.6h-5.6zM565.1 528.2h5.6v5.6h-5.6zM650.3 528.2h5.6v5.6h-5.6zM730.4 528.2h5.6v5.6h-5.6zM535.1 533.2h5.6v5.6h-5.6zM700.3 533.2h5.6v5.6h-5.6zM500.1 538.1h10.6v5.6h-10.6zM625.2 538.1h5.6v5.6h-5.6zM700.3 538.1h5.6v5.6h-5.6zM720.4 538.1h5.6v5.6h-5.6zM735.4 538.1h5.6v5.6h-5.6zM785.5 538.1h10.6v5.6h-10.6zM800.5 538.1h10.6v5.6h-10.6zM495.0 543.1h5.6v5.6h-5.6zM710.4 543.1h5.6v5.6h-5.6zM740.4 543.1h10.6v5.6h-10.6zM810.5 543.1h5.6v5.6h-5.6zM465.0 548.1h5.6v5.6h-5.6zM495.0 548.1h5.6v5.6h-5.6zM505.1 548.1h5.6v5.6h-5.6zM620.2 548.1h5.6v5.6h-5.6zM780.5 548.1h5.6v5.6h-5.6zM470.0 553.1h5.6v5.6h-5.6zM485.0 553.1h5.6v5.6h-5.6zM510.1 553.1h5.6v5.6h-5.6zM520.1 553.1h5.6v5.6h-5.6zM545.1 553.1h5.6v5.6h-5.6zM625.2 553.1h5.6v5.6h-5.6zM765.4 553.1h5.6v5.6h-5.6zM480.0 558.1h5.6v5.6h-5.6zM510.1 558.1h5.6v5.6h-5.6zM530.1 558.1h10.6v5.6h-10.6zM545.1 558.1h5.6v5.6h-5.6zM555.1 558.1h10.6v5.6h-10.6zM710.4 558.1h10.6v5.6h-10.6zM765.4 558.1h5.6v5.6h-5.6zM805.5 558.1h5.6v5.6h-5.6zM565.1 563.1h5.6v5.6h-5.6zM560.1 568.0h5.6v5.6h-5.6zM570.1 568.0h5.6v5.6h-5.6zM655.3 568.0h5.6v5.6h-5.6zM795.5 568.0h5.6v5.6h-5.6zM500.1 573.0h5.6v5.6h-5.6zM540.1 573.0h5.6v5.6h-5.6zM565.1 573.0h5.6v5.6h-5.6zM575.2 573.0h5.6v5.6h-5.6zM685.3 573.0h5.6v5.6h-5.6zM760.4 573.0h5.6v5.6h-5.6zM470.0 578.0h5.6v5.6h-5.6zM525.1 578.0h5.6v5.6h-5.6zM535.1 578.0h5.6v5.6h-5.6zM545.1 578.0h5.6v5.6h-5.6zM625.2 578.0h5.6v5.6h-5.6zM640.2 578.0h5.6v5.6h-5.6zM740.4 578.0h5.6v5.6h-5.6zM775.4 578.0h5.6v5.6h-5.6zM795.5 578.0h5.6v5.6h-5.6zM465.0 583.0h5.6v5.6h-5.6zM495.0 583.0h5.6v5.6h-5.6zM595.2 583.0h5.6v5.6h-5.6zM675.3 583.0h5.6v5.6h-5.6zM730.4 583.0h5.6v5.6h-5.6zM750.4 583.0h5.6v5.6h-5.6zM590.2 588.0h5.6v5.6h-5.6zM655.3 588.0h20.6v5.6h-20.6zM790.5 588.0h5.6v5.6h-5.6zM590.2 592.9h5.6v5.6h-5.6zM765.4 592.9h10.6v5.6h-10.6zM480.0 597.9h5.6v5.6h-5.6zM540.1 597.9h5.6v5.6h-5.6zM575.2 597.9h5.6v5.6h-5.6zM655.3 597.9h5.6v5.6h-5.6zM480.0 602.9h5.6v5.6h-5.6zM510.1 602.9h5.6v5.6h-5.6zM535.1 602.9h5.6v5.6h-5.6zM545.1 602.9h5.6v5.6h-5.6zM605.2 602.9h10.6v5.6h-10.6zM625.2 602.9h5.6v5.6h-5.6zM645.3 602.9h5.6v5.6h-5.6zM705.3 602.9h5.6v5.6h-5.6zM715.4 602.9h5.6v5.6h-5.6zM475.0 607.9h5.6v5.6h-5.6zM715.4 607.9h5.6v5.6h-5.6zM810.5 607.9h5.6v5.6h-5.6zM485.0 612.9h5.6v5.6h-5.6zM525.1 612.9h5.6v5.6h-5.6zM585.2 612.9h5.6v5.6h-5.6zM655.3 612.9h5.6v5.6h-5.6zM695.3 612.9h5.6v5.6h-5.6zM720.4 612.9h5.6v5.6h-5.6zM810.5 612.9h5.6v5.6h-5.6zM475.0 617.9h5.6v5.6h-5.6zM525.1 617.9h5.6v5.6h-5.6zM675.3 617.9h5.6v5.6h-5.6zM790.5 617.9h5.6v5.6h-5.6zM465.0 622.8h10.6v5.6h-10.6zM480.0 622.8h5.6v5.6h-5.6zM545.1 622.8h5.6v5.6h-5.6zM555.1 622.8h5.6v5.6h-5.6zM605.2 622.8h10.6v5.6h-10.6zM780.5 622.8h5.6v5.6h-5.6zM810.5 622.8h5.6v5.6h-5.6zM475.0 627.8h5.6v5.6h-5.6zM555.1 627.8h5.6v5.6h-5.6zM620.2 627.8h5.6v5.6h-5.6zM670.3 627.8h5.6v5.6h-5.6zM705.3 627.8h5.6v5.6h-5.6zM485.0 632.8h5.6v5.6h-5.6zM595.2 632.8h10.6v5.6h-10.6zM655.3 632.8h5.6v5.6h-5.6zM750.4 632.8h5.6v5.6h-5.6zM520.1 637.8h5.6v5.6h-5.6zM550.1 637.8h5.6v5.6h-5.6zM580.2 637.8h5.6v5.6h-5.6zM675.3 637.8h5.6v5.6h-5.6zM690.3 637.8h5.6v5.6h-5.6zM475.0 642.8h5.6v5.6h-5.6zM550.1 642.8h5.6v5.6h-5.6zM560.1 642.8h5.6v5.6h-5.6zM525.1 647.8h5.6v5.6h-5.6zM640.2 647.8h5.6v5.6h-5.6zM650.3 647.8h5.6v5.6h-5.6zM790.5 647.8h5.6v5.6h-5.6zM485.0 652.7h5.6v5.6h-5.6zM740.4 652.7h5.6v5.6h-5.6zM790.5 652.7h5.6v5.6h-5.6zM805.5 652.7h5.6v5.6h-5.6zM475.0 657.7h10.6v5.6h-10.6zM550.1 657.7h5.6v5.6h-5.6zM720.4 657.7h10.6v5.6h-10.6zM745.4 657.7h5.6v5.6h-5.6zM470.0 662.7h5.6v5.6h-5.6zM535.1 662.7h5.6v5.6h-5.6zM690.3 662.7h5.6v5.6h-5.6zM720.4 662.7h5.6v5.6h-5.6zM745.4 662.7h10.6v5.6h-10.6zM800.5 662.7h5.6v5.6h-5.6zM515.1 667.7h10.6v5.6h-10.6zM695.3 667.7h5.6v5.6h-5.6zM805.5 667.7h5.6v5.6h-5.6zM520.1 672.7h5.6v5.6h-5.6zM530.1 672.7h5.6v5.6h-5.6zM735.4 672.7h5.6v5.6h-5.6zM580.2 677.7h5.6v5.6h-5.6zM700.3 677.7h5.6v5.6h-5.6zM725.4 677.7h5.6v5.6h-5.6zM470.0 682.6h5.6v5.6h-5.6zM480.0 682.6h10.6v5.6h-10.6zM555.1 682.6h5.6v5.6h-5.6zM575.2 682.6h5.6v5.6h-5.6zM725.4 682.6h5.6v5.6h-5.6zM790.5 682.6h15.6v5.6h-15.6zM725.4 687.6h5.6v5.6h-5.6zM795.5 687.6h5.6v5.6h-5.6zM515.1 692.6h5.6v5.6h-5.6zM725.4 692.6h5.6v5.6h-5.6zM740.4 692.6h5.6v5.6h-5.6zM750.4 692.6h10.6v5.6h-10.6zM480.0 697.6h5.6v5.6h-5.6zM660.3 697.6h5.6v5.6h-5.6zM750.4 702.6h10.6v5.6h-10.6zM665.3 707.6h5.6v5.6h-5.6zM535.1 712.5h5.6v5.6h-5.6zM785.5 712.5h5.6v5.6h-5.6zM780.5 717.5h5.6v5.6h-5.6z"/>
<path fill="#80ff00" d="M495.0 433.5h10.6v5.6h-10.6zM515.1 433.5h5.6v5.6h-5.6zM525.1 433.5h5.6v5.6h-5.6zM580.2 433.5h10.6v5.6h-10.6zM765.4 433.5h10.6v5.6h-10.6zM495.0 438.5h10.6v5.6h-10.6zM560.1 438.5h10.6v5.6h-10.6zM575.2 438.5h5.6v5.6h-5.6zM735.4 438.5h5.6v5.6h-5.6zM785.5 438.5h5.6v5.6h-5.6zM805.5 438.5h5.6v5.6h-5.6zM495.0 443.5h5.6v5.6h-5.6zM515.1 443.5h5.6v5.6h-5.6zM585.2 443.5h5.6v5.6h-5.6zM595.2 443.5h5.6v5.6h-5.6zM610.2 443.5h5.6v5.6h-5.6zM735.4 443.5h5.6v5.6h-5.6zM805.5 443.5h5.6v5.6h-5.6zM480.0 448.4h5.6v5.6h-5.6zM790.5 448.4h5.6v5.6h-5.6zM800.5 448.4h5.6v5.6h-5.6zM470.0 453.4h5.6v5.6h-5.6zM465.0 458.4h10.6v5.6h-10.6zM500.1 458.4h5.6v5.6h-5.6zM530.1 458.4h5.6v5.6h-5.6zM770.4 458.4h5.6v5.6h-5.6zM785.5 458.4h10.6v5.6h-10.6zM465.0 463.4h10.6v5.6h-10.6zM565.1 463.4h5.6v5.6h-5.6zM595.2 463.4h15.6v5.6h-15.6zM765.4 463.4h5.6v5.6h-5.6zM800.5 463.4h15.6v5.6h-15.6zM465.0 468.4h5.6v5.6h-5.6zM480.0 468.4h5.6v5.6h-5.6zM560.1 468.4h5.6v5.6h-5.6zM590.2 468.4h5.6v5.6h-5.6zM615.2 468.4h5.6v5.6h-5.6zM635.2 468.4h5.6v5.6h-5.6zM765.4 468.4h5.6v5.6h-5.6zM800.5 468.4h5.6v5.6h-5.6zM810.5 468.4h5.6v5.6h-5.6zM485.0 473.4h5.6v5.6h-5.6zM540.1 473.4h5.6v5.6h-5.6zM695.3 473.4h5.6v5.6h-5.6zM795.5 473.4h5.6v5.6h-5.6zM540.1 478.3h5.6v5.6h-5.6zM590.2 478.3h5.6v5.6h-5.6zM695.3 478.3h5.6v5.6h-5.6zM710.4 478.3h10.6v5.6h-10.6zM785.5 478.3h5.6v5.6h-5.6zM475.0 483.3h5.6v5.6h-5.6zM490.0 483.3h5.6v5.6h-5.6zM555.1 483.3h5.6v5.6h-5.6zM685.3 483.3h5.6v5.6h-5.6zM700.3 483.3h5.6v5.6h-5.6zM810.5 483.3h5.6v5.6h-5.6zM495.0 488.3h5.6v5.6h-5.6zM555.1 488.3h5.6v5.6h-5.6zM700.3 488.3h5.6v5.6h-5.6zM715.4 488.3h5.6v5.6h-5.6zM810.5 488.3h5.6v5.6h-5.6zM545.1 493.3h5.6v5.6h-5.6zM555.1 493.3h5.6v5.6h-5.6zM725.4 493.3h10.6v5.6h-10.6zM790.5 493.3h5.6v5.6h-5.6zM520.1 498.3h5.6v5.6h-5.6zM770.4 498.3h5.6v5.6h-5.6zM805.5 498.3h5.6v5.6h-5.6zM765.4 503.3h5.6v5.6h-5.6zM470.0 508.2h5.6v5.6h-5.6zM495.0 508.2h5.6v5.6h-5.6zM520.1 508.2h5.6v5.6h-5.6zM670.3 508.2h5.6v5.6h-5.6zM805.5 508.2h5.6v5.6h-5.6zM480.0 513.2h15.6v5.6h-15.6zM570.1 513.2h10.6v5.6h-10.6zM465.0 518.2h5.6v5.6h-5.6zM705.3 518.2h5.6v5.6h-5.6zM470.0 523.2h5.6v5.6h-5.6zM645.3 523.2h5.6v5.6h-5.6zM705.3 523.2h10.6v5.6h-10.6zM475.0 528.2h10.6v5.6h-10.6zM545.1 528.2h10.6v5.6h-10.6zM560.1 528.2h5.6v5.6h-5.6zM705.3 528.2h10.6v5.6h-10.6zM735.4 528.2h5.6v5.6h-5.6zM550.1 533.2h5.6v5.6h-5.6zM560.1 533.2h5.6v5.6h-5.6zM635.2 533.2h5.6v5.6h-5.6zM655.3 533.2h5.6v5.6h-5.6zM720.4 533.2h5.6v5.6h-5.6zM730.4 533.2h5.6v5.6h-5.6zM540.1 538.1h5.6v5.6h-5.6zM620.2 538.1h5.6v5.6h-5.6zM630.2 538.1h5.6v5.6h-5.6zM650.3 538.1h5.6v5.6h-5.6zM745.4 538.1h5.6v5.6h-5.6zM780.5 538.1h5.6v5.6h-5.6zM610.2 543.1h5.6v5.6h-5.6zM620.2 543.1h5.6v5.6h-5.6zM640.2 543.1h5.6v5.6h-5.6zM700.3 543.1h10.6v5.6h-10.6zM715.4 543.1h5.6v5.6h-5.6zM765.4 543.1h5.6v5.6h-5.6zM640.2 548.1h5.6v5.6h-5.6zM715.4 548.1h5.6v5.6h-5.6zM735.4 548.1h5.6v5.6h-5.6zM745.4 548.1h5.6v5.6h-5.6zM475.0 553.1h10.6v5.6h-10.6zM525.1 553.1h5.6v5.6h-5.6zM585.2 553.1h10.6v5.6h-10.6zM645.3 553.1h5.6v5.6h-5.6zM710.4 553.1h5.6v5.6h-5.6zM760.4 553.1h5.6v5.6h-5.6zM515.1 558.1h5.6v5.6h-5.6zM550.1 558.1h5.6v5.6h-5.6zM705.3 558.1h5.6v5.6h-5.6zM720.4 558.1h5.6v5.6h-5.6zM470.0 563.1h10.6v5.6h-10.6zM515.1 563.1h5.6v5.6h-5.6zM540.1 563.1h5.6v5.6h-5.6zM555.1 563.1h5.6v5.6h-5.6zM570.1 563.1h5.6v5.6h-5.6zM650.3 563.1h5.6v5.6h-5.6zM760.4 563.1h5.6v5.6h-5.6zM800.5 563.1h5.6v5.6h-5.6zM500.1 568.0h5.6v5.6h-5.6zM630.2 568.0h5.6v5.6h-5.6zM650.3 568.0h5.6v5.6h-5.6zM675.3 568.0h5.6v5.6h-5.6zM690.3 568.0h5.6v5.6h-5.6zM810.5 568.0h5.6v5.6h-5.6zM485.0 573.0h5.6v5.6h-5.6zM520.1 573.0h5.6v5.6h-5.6zM570.1 573.0h5.6v5.6h-5.6zM580.2 573.0h5.6v5.6h-5.6zM590.2 573.0h5.6v5.6h-5.6zM645.3 573.0h10.6v5.6h-10.6zM660.3 573.0h5.6v5.6h-5.6zM765.4 573.0h5.6v5.6h-5.6zM465.0 578.0h5.6v5.6h-5.6zM500.1 578.0h5.6v5.6h-5.6zM510.1 578.0h5.6v5.6h-5.6zM550.1 578.0h5.6v5.6h-5.6zM595.2 578.0h10.6v5.6h-10.6zM680.3 578.0h10.6v5.6h-10.6zM705.3 578.0h5.6v5.6h-5.6zM755.4 578.0h5.6v5.6h-5.6zM790.5 578.0h5.6v5.6h-5.6zM500.1 583.0h5.6v5.6h-5.6zM510.1 583.0h5.6v5.6h-5.6zM620.2 583.0h5.6v5.6h-5.6zM715.4 583.0h5.6v5.6h-5.6zM725.4 583.0h5.6v5.6h-5.6zM790.5 583.0h10.6v5.6h-10.6zM805.5 583.0h5.6v5.6h-5.6zM600.2 588.0h5.6v5.6h-5.6zM615.2 588.0h5.6v5.6h-5.6zM750.4 588.0h10.6v5.6h-10.6zM575.2 592.9h5.6v5.6h-5.6zM585.2 592.9h5.6v5.6h-5.6zM610.2 592.9h5.6v5.6h-5.6zM750.4 592.9h5.6v5.6h-5.6zM775.4 592.9h5.6v5.6h-5.6zM585.2 597.9h5.6v5.6h-5.6zM605.2 597.9h5.6v5.6h-5.6zM810.5 597.9h5.6v5.6h-5.6zM505.1 602.9h5.6v5.6h-5.6zM600.2 602.9h5.6v5.6h-5.6zM615.2 602.9h10.6v5.6h-10.6zM650.3 602.9h5.6v5.6h-5.6zM520.1 607.9h5.6v5.6h-5.6zM545.1 607.9h5.6v5.6h-5.6zM575.2 607.9h5.6v5.6h-5.6zM605.2 607.9h10.6v5.6h-10.6zM630.2 607.9h5.6v5.6h-5.6zM535.1 612.9h5.6v5.6h-5.6zM545.1 612.9h5.6v5.6h-5.6zM590.2 612.9h5.6v5.6h-5.6zM605.2 612.9h10.6v5.6h-10.6zM675.3 612.9h5.6v5.6h-5.6zM700.3 612.9h10.6v5.6h-10.6zM715.4 612.9h5.6v5.6h-5.6zM535.1 617.9h5.6v5.6h-5.6zM590.2 617.9h5.6v5.6h-5.6zM600.2 617.9h5.6v5.6h-5.6zM615.2 617.9h10.6v5.6h-10.6zM655.3 617.9h5.6v5.6h-5.6zM810.5 617.9h5.6v5.6h-5.6zM520.1 622.8h5.6v5.6h-5.6zM535.1 622.8h5.6v5.6h-5.6zM585.2 622.8h5.6v5.6h-5.6zM615.2 622.8h10.6v5.6h-10.6zM670.3 622.8h5.6v5.6h-5.6zM765.4 622.8h10.6v5.6h-10.6zM785.5 622.8h5.6v5.6h-5.6zM805.5 622.8h5.6v5.6h-5.6zM480.0 627.8h5.6v5.6h-5.6zM535.1 627.8h5.6v5.6h-5.6zM550.1 627.8h5.6v5.6h-5.6zM560.1 627.8h5.6v5.6h-5.6zM595.2 627.8h5.6v5.6h-5.6zM615.2 627.8h5.6v5.6h-5.6zM715.4 627.8h5.6v5.6h-5.6zM730.4 627.8h5.6v5.6h-5.6zM805.5 627.8h10.6v5.6h-10.6zM480.0 632.8h5.6v5.6h-5.6zM515.1 632.8h5.6v5.6h-5.6zM530.1 632.8h10.6v5.6h-10.6zM615.2 632.8h5.6v5.6h-5.6zM650.3 632.8h5.6v5.6h-5.6zM670.3 632.8h5.6v5.6h-5.6zM745.4 632.8h5.6v5.6h-5.6zM480.0 637.8h5.6v5.6h-5.6zM495.0 637.8h5.6v5.6h-5.6zM535.1 637.8h5.6v5.6h-5.6zM655.3 637.8h5.6v5.6h-5.6zM465.0 642.8h10.6v5.6h-10.6zM480.0 642.8h5.6v5.6h-5.6zM520.1 642.8h15.6v5.6h-15.6zM480.0 647.8h5.6v5.6h-5.6zM520.1 647.8h5.6v5.6h-5.6zM535.1 647.8h5.6v5.6h-5.6zM550.1 647.8h5.6v5.6h-5.6zM565.1 647.8h5.6v5.6h-5.6zM575.2 647.8h5.6v5.6h-5.6zM775.4 647.8h5.6v5.6h-5.6zM810.5 647.8h5.6v5.6h-5.6zM475.0 652.7h5.6v5.6h-5.6zM490.0 652.7h5.6v5.6h-5.6zM525.1 652.7h5.6v5.6h-5.6zM565.1 652.7h5.6v5.6h-5.6zM575.2 652.7h5.6v5.6h-5.6zM645.3 652.7h10.6v5.6h-10.6zM735.4 652.7h5.6v5.6h-5.6zM775.4 652.7h5.6v5.6h-5.6zM795.5 652.7h5.6v5.6h-5.6zM465.0 657.7h10.6v5.6h-10.6zM540.1 657.7h10.6v5.6h-10.6zM560.1 657.7h5.6v5.6h-5.6zM785.5 657.7h5.6v5.6h-5.6zM795.5 657.7h5.6v5.6h-5.6zM475.0 662.7h5.6v5.6h-5.6zM520.1 662.7h5.6v5.6h-5.6zM540.1 662.7h5.6v5.6h-5.6zM725.4 662.7h10.6v5.6h-10.6zM780.5 662.7h5.6v5.6h-5.6zM665.3 667.7h10.6v5.6h-10.6zM685.3 667.7h5.6v5.6h-5.6zM735.4 667.7h5.6v5.6h-5.6zM780.5 667.7h10.6v5.6h-10.6zM690.3 672.7h10.6v5.6h-10.6zM465.0 677.7h5.6v5.6h-5.6zM485.0 677.7h5.6v5.6h-5.6zM550.1 677.7h10.6v5.6h-10.6zM570.1 677.7h5.6v5.6h-5.6zM635.2 677.7h5.6v5.6h-5.6zM720.4 677.7h5.6v5.6h-5.6zM800.5 677.7h5.6v5.6h-5.6zM465.0 682.6h5.6v5.6h-5.6zM510.1 682.6h5.6v5.6h-5.6zM550.1 682.6h5.6v5.6h-5.6zM580.2 682.6h5.6v5.6h-5.6zM635.2 682.6h10.6v5.6h-10.6zM810.5 682.6h5.6v5.6h-5.6zM535.1 687.6h5.6v5.6h-5.6zM805.5 687.6h5.6v5.6h-5.6zM530.1 692.6h5.6v5.6h-5.6zM800.5 692.6h5.6v5.6h-5.6zM665.3 697.6h5.6v5.6h-5.6zM735.4 697.6h5.6v5.6h-5.6zM745.4 697.6h5.6v5.6h-5.6zM760.4 697.6h5.6v5.6h-5.6zM655.3 702.6h5.6v5.6h-5.6zM745.4 702.6h5.6v5.6h-5.6zM760.4 702.6h5.6v5.6h-5.6zM765.4 707.6h10.6v5.6h-10.6zM780.5 712.5h5.6v5.6h-5.6zM525.1 717.5h5.6v5.6h-5.6zM590.2 717.5h5.6v5.6h-5.6z"/>
<path fill="#a5ff00" d="M530.1 433.5h5.6v5.6h-5.6zM610.2 433.5h5.6v5.6h-5.6zM685.3 433.5h5.6v5.6h-5.6zM745.4 433.5h5.6v5.6h-5.6zM760.4 433.5h5.6v5.6h-5.6zM785.5 433.5h5.6v5.6h-5.6zM800.5 433.5h5.6v5.6h-5.6zM515.1 438.5h5.6v5.6h-5.6zM555.1 438.5h5.6v5.6h-5.6zM570.1 438.5h5.6v5.6h-5.6zM585.2 438.5h10.6v5.6h-10.6zM685.3 438.5h5.6v5.6h-5.6zM750.4 438.5h5.6v5.6h-5.6zM765.4 438.5h5.6v5.6h-5.6zM560.1 443.5h10.6v5.6h-10.6zM575.2 443.5h5.6v5.6h-5.6zM590.2 443.5h5.6v5.6h-5.6zM730.4 443.5h5.6v5.6h-5.6zM810.5 443.5h5.6v5.6h-5.6zM465.0 448.4h5.6v5.6h-5.6zM595.2 448.4h5.6v5.6h-5.6zM795.5 448.4h5.6v5.6h-5.6zM805.5 448.4h10.6v5.6h-10.6zM485.0 453.4h5.6v5.6h-5.6zM530.1 453.4h5.6v5.6h-5.6zM555.1 453.4h15.6v5.6h-15.6zM790.5 453.4h10.6v5.6h-10.6zM505.1 458.4h10.6v5.6h-10.6zM555.1 458.4h15.6v5.6h-15.6zM595.2 458.4h5.6v5.6h-5.6zM605.2 458.4h5.6v5.6h-5.6zM745.4 458.4h10.6v5.6h-10.6zM795.5 458.4h5.6v5.6h-5.6zM805.5 458.4h5.6v5.6h-5.6zM520.1 463.4h5.6v5.6h-5.6zM530.1 463.4h5.6v5.6h-5.6zM550.1 463.4h5.6v5.6h-5.6zM590.2 463.4h5.6v5.6h-5.6zM760.4 463.4h5.6v5.6h-5.6zM775.4 463.4h15.6v5.6h-15.6zM485.0 468.4h5.6v5.6h-5.6zM540.1 468.4h5.6v5.6h-5.6zM625.2 468.4h10.6v5.6h-10.6zM640.2 468.4h5.6v5.6h-5.6zM770.4 468.4h5.6v5.6h-5.6zM785.5 468.4h5.6v5.6h-5.6zM805.5 468.4h5.6v5.6h-5.6zM480.0 473.4h5.6v5.6h-5.6zM550.1 473.4h5.6v5.6h-5.6zM620.2 473.4h15.6v5.6h-15.6zM645.3 473.4h5.6v5.6h-5.6zM700.3 473.4h5.6v5.6h-5.6zM765.4 473.4h5.6v5.6h-5.6zM785.5 473.4h5.6v5.6h-5.6zM485.0 478.3h5.6v5.6h-5.6zM555.1 478.3h5.6v5.6h-5.6zM625.2 478.3h5.6v5.6h-5.6zM640.2 478.3h5.6v5.6h-5.6zM685.3 478.3h5.6v5.6h-5.6zM700.3 478.3h5.6v5.6h-5.6zM750.4 478.3h5.6v5.6h-5.6zM795.5 478.3h5.6v5.6h-5.6zM540.1 483.3h5.6v5.6h-5.6zM800.5 483.3h5.6v5.6h-5.6zM530.1 488.3h5.6v5.6h-5.6zM695.3 488.3h5.6v5.6h-5.6zM725.4 488.3h5.6v5.6h-5.6zM800.5 488.3h5.6v5.6h-5.6zM465.0 493.3h5.6v5.6h-5.6zM535.1 493.3h5.6v5.6h-5.6zM715.4 493.3h5.6v5.6h-5.6zM735.4 493.3h5.6v5.6h-5.6zM765.4 493.3h10.6v5.6h-10.6zM795.5 493.3h5.6v5.6h-5.6zM805.5 493.3h10.6v5.6h-10.6zM525.1 498.3h5.6v5.6h-5.6zM540.1 498.3h5.6v5.6h-5.6zM550.1 498.3h10.6v5.6h-10.6zM735.4 498.3h5.6v5.6h-5.6zM800.5 498.3h5.6v5.6h-5.6zM810.5 498.3h5.6v5.6h-5.6zM465.0 503.3h5.6v5.6h-5.6zM495.0 503.3h5.6v5.6h-5.6zM515.1 503.3h5.6v5.6h-5.6zM525.1 503.3h5.6v5.6h-5.6zM725.4 503.3h10.6v5.6h-10.6zM770.4 503.3h5.6v5.6h-5.6zM800.5 503.3h5.6v5.6h-5.6zM525.1 508.2h5.6v5.6h-5.6zM580.2 508.2h5.6v5.6h-5.6zM705.3 508.2h5.6v5.6h-5.6zM565.1 513.2h5.6v5.6h-5.6zM680.3 513.2h5.6v5.6h-5.6zM705.3 513.2h10.6v5.6h-10.6zM490.0 518.2h5.6v5.6h-5.6zM515.1 523.2h10.6v5.6h-10.6zM530.1 523.2h10.6v5.6h-10.6zM545.1 523.2h10.6v5.6h-10.6zM640.2 523.2h5.6v5.6h-5.6zM665.3 523.2h5.6v5.6h-5.6zM730.4 523.2h5.6v5.6h-5.6zM510.1 528.2h5.6v5.6h-5.6zM535.1 528.2h10.6v5.6h-10.6zM655.3 528.2h5.6v5.6h-5.6zM700.3 528.2h5.6v5.6h-5.6zM715.4 528.2h5.6v5.6h-5.6zM495.0 533.2h5.6v5.6h-5.6zM540.1 533.2h5.6v5.6h-5.6zM620.2 533.2h5.6v5.6h-5.6zM740.4 533.2h5.6v5.6h-5.6zM780.5 533.2h5.6v5.6h-5.6zM800.5 533.2h5.6v5.6h-5.6zM490.0 538.1h5.6v5.6h-5.6zM550.1 538.1h5.6v5.6h-5.6zM580.2 538.1h10.6v5.6h-10.6zM595.2 538.1h5.6v5.6h-5.6zM610.2 538.1h10.6v5.6h-10.6zM695.3 538.1h5.6v5.6h-5.6zM730.4 538.1h5.6v5.6h-5.6zM770.4 538.1h10.6v5.6h-10.6zM810.5 538.1h5.6v5.6h-5.6zM585.2 543.1h10.6v5.6h-10.6zM615.2 543.1h5.6v5.6h-5.6zM645.3 543.1h5.6v5.6h-5.6zM735.4 543.1h5.6v5.6h-5.6zM750.4 543.1h5.6v5.6h-5.6zM775.4 543.1h5.6v5.6h-5.6zM785.5 543.1h5.6v5.6h-5.6zM490.0 548.1h5.6v5.6h-5.6zM585.2 548.1h10.6v5.6h-10.6zM615.2 548.1h5.6v5.6h-5.6zM710.4 548.1h5.6v5.6h-5.6zM750.4 548.1h15.6v5.6h-15.6zM785.5 548.1h5.6v5.6h-5.6zM490.0 553.1h5.6v5.6h-5.6zM505.1 553.1h5.6v5.6h-5.6zM610.2 553.1h15.6v5.6h-15.6zM705.3 553.1h5.6v5.6h-5.6zM715.4 553.1h5.6v5.6h-5.6zM505.1 558.1h5.6v5.6h-5.6zM525.1 558.1h5.6v5.6h-5.6zM565.1 558.1h5.6v5.6h-5.6zM575.2 558.1h15.6v5.6h-15.6zM625.2 558.1h5.6v5.6h-5.6zM650.3 558.1h5.6v5.6h-5.6zM485.0 563.1h5.6v5.6h-5.6zM535.1 563.1h5.6v5.6h-5.6zM545.1 563.1h5.6v5.6h-5.6zM575.2 563.1h5.6v5.6h-5.6zM630.2 563.1h5.6v5.6h-5.6zM680.3 563.1h5.6v5.6h-5.6zM715.4 563.1h5.6v5.6h-5.6zM805.5 563.1h5.6v5.6h-5.6zM465.0 568.0h5.6v5.6h-5.6zM540.1 568.0h5.6v5.6h-5.6zM575.2 568.0h5.6v5.6h-5.6zM750.4 568.0h5.6v5.6h-5.6zM475.0 573.0h10.6v5.6h-10.6zM490.0 573.0h10.6v5.6h-10.6zM560.1 573.0h5.6v5.6h-5.6zM595.2 573.0h5.6v5.6h-5.6zM605.2 573.0h10.6v5.6h-10.6zM625.2 573.0h5.6v5.6h-5.6zM675.3 573.0h5.6v5.6h-5.6zM700.3 573.0h10.6v5.6h-10.6zM495.0 578.0h5.6v5.6h-5.6zM530.1 578.0h5.6v5.6h-5.6zM555.1 578.0h5.6v5.6h-5.6zM605.2 578.0h5.6v5.6h-5.6zM660.3 578.0h5.6v5.6h-5.6zM735.4 578.0h5.6v5.6h-5.6zM780.5 578.0h10.6v5.6h-10.6zM810.5 578.0h5.6v5.6h-5.6zM490.0 583.0h5.6v5.6h-5.6zM660.3 583.0h15.6v5.6h-15.6zM710.4 583.0h5.6v5.6h-5.6zM755.4 583.0h5.6v5.6h-5.6zM800.5 583.0h5.6v5.6h-5.6zM810.5 583.0h5.6v5.6h-5.6zM585.2 588.0h5.6v5.6h-5.6zM760.4 588.0h5.6v5.6h-5.6zM605.2 592.9h5.6v5.6h-5.6zM780.5 592.9h5.6v5.6h-5.6zM790.5 592.9h5.6v5.6h-5.6zM470.0 597.9h10.6v5.6h-10.6zM475.0 602.9h5.6v5.6h-5.6zM540.1 602.9h5.6v5.6h-5.6zM585.2 602.9h10.6v5.6h-10.6zM810.5 602.9h5.6v5.6h-5.6zM500.1 607.9h5.6v5.6h-5.6zM535.1 607.9h5.6v5.6h-5.6zM600.2 607.9h5.6v5.6h-5.6zM705.3 607.9h10.6v5.6h-10.6zM470.0 612.9h5.6v5.6h-5.6zM490.0 612.9h5.6v5.6h-5.6zM570.1 612.9h5.6v5.6h-5.6zM580.2 612.9h5.6v5.6h-5.6zM710.4 612.9h5.6v5.6h-5.6zM485.0 617.9h5.6v5.6h-5.6zM520.1 617.9h5.6v5.6h-5.6zM540.1 617.9h5.6v5.6h-5.6zM580.2 617.9h5.6v5.6h-5.6zM540.1 622.8h5.6v5.6h-5.6zM590.2 622.8h5.6v5.6h-5.6zM600.2 622.8h5.6v5.6h-5.6zM790.5 622.8h5.6v5.6h-5.6zM800.5 622.8h5.6v5.6h-5.6zM465.0 627.8h10.6v5.6h-10.6zM590.2 627.8h5.6v5.6h-5.6zM600.2 627.8h15.6v5.6h-15.6zM660.3 627.8h5.6v5.6h-5.6zM475.0 632.8h5.6v5.6h-5.6zM495.0 632.8h5.6v5.6h-5.6zM540.1 632.8h5.6v5.6h-5.6zM550.1 632.8h5.6v5.6h-5.6zM565.1 632.8h20.6v5.6h-20.6zM605.2 632.8h5.6v5.6h-5.6zM710.4 632.8h5.6v5.6h-5.6zM805.5 632.8h5.6v5.6h-5.6zM475.0 637.8h5.6v5.6h-5.6zM500.1 637.8h5.6v5.6h-5.6zM525.1 637.8h5.6v5.6h-5.6zM575.2 637.8h5.6v5.6h-5.6zM585.2 637.8h5.6v5.6h-5.6zM600.2 637.8h5.6v5.6h-5.6zM620.2 637.8h5.6v5.6h-5.6zM575.2 642.8h5.6v5.6h-5.6zM645.3 642.8h5.6v5.6h-5.6zM680.3 642.8h5.6v5.6h-5.6zM605.2 647.8h5.6v5.6h-5.6zM635.2 647.8h5.6v5.6h-5.6zM700.3 647.8h5.6v5.6h-5.6zM480.0 652.7h5.6v5.6h-5.6zM630.2 652.7h15.6v5.6h-15.6zM745.4 652.7h5.6v5.6h-5.6zM755.4 652.7h5.6v5.6h-5.6zM485.0 657.7h5.6v5.6h-5.6zM575.2 657.7h5.6v5.6h-5.6zM700.3 657.7h5.6v5.6h-5.6zM715.4 657.7h5.6v5.6h-5.6zM775.4 657.7h5.6v5.6h-5.6zM790.5 657.7h5.6v5.6h-5.6zM480.0 662.7h5.6v5.6h-5.6zM495.0 662.7h5.6v5.6h-5.6zM555.1 662.7h5.6v5.6h-5.6zM685.3 662.7h5.6v5.6h-5.6zM700.3 662.7h5.6v5.6h-5.6zM775.4 662.7h5.6v5.6h-5.6zM470.0 667.7h5.6v5.6h-5.6zM485.0 667.7h5.6v5.6h-5.6zM730.4 667.7h5.6v5.6h-5.6zM485.0 672.7h5.6v5.6h-5.6zM575.2 672.7h5.6v5.6h-5.6zM635.2 672.7h5.6v5.6h-5.6zM720.4 672.7h5.6v5.6h-5.6zM800.5 672.7h5.6v5.6h-5.6zM560.1 677.7h5.6v5.6h-5.6zM705.3 677.7h15.6v5.6h-15.6zM535.1 682.6h5.6v5.6h-5.6zM570.1 682.6h5.6v5.6h-5.6zM720.4 682.6h5.6v5.6h-5.6zM785.5 682.6h5.6v5.6h-5.6zM745.4 687.6h10.6v5.6h-10.6zM465.0 692.6h5.6v5.6h-5.6zM495.0 692.6h5.6v5.6h-5.6zM745.4 692.6h5.6v5.6h-5.6zM805.5 692.6h5.6v5.6h-5.6zM730.4 697.6h5.6v5.6h-5.6zM740.4 697.6h5.6v5.6h-5.6zM800.5 697.6h5.6v5.6h-5.6zM740.4 702.6h5.6v5.6h-5.6zM765.4 702.6h10.6v5.6h-10.6zM655.3 707.6h5.6v5.6h-5.6zM745.4 707.6h10.6v5.6h-10.6zM760.4 707.6h5.6v5.6h-5.6zM775.4 707.6h5.6v5.6h-5.6zM785.5 707.6h5.6v5.6h-5.6zM525.1 712.5h5.6v5.6h-5.6zM600.2 712.5h5.6v5.6h-5.6zM745.4 712.5h5.6v5.6h-5.6zM770.4 712.5h5.6v5.6h-5.6zM535.1 717.5h5.6v5.6h-5.6zM570.1 717.5h5.6v5.6h-5.6zM610.2 717.5h5.6v5.6h-5.6zM765.4 717.5h5.6v5.6h-5.6zM775.4 717.5h5.6v5.6h-5.6z"/>
<path fill="#caff00" d="M485.0 433.5h10.6v5.6h-10.6zM505.1 433.5h5.6v5.6h-5.6zM520.1 433.5h5.6v5.6h-5.6zM535.1 433.5h5.6v5.6h-5.6zM560.1 433.5h10.6v5.6h-10.6zM730.4 433.5h15.6v5.6h-15.6zM810.5 433.5h5.6v5.6h-5.6zM480.0 438.5h5.6v5.6h-5.6zM745.4 438.5h5.6v5.6h-5.6zM755.4 438.5h10.6v5.6h-10.6zM530.1 443.5h5.6v5.6h-5.6zM555.1 443.5h5.6v5.6h-5.6zM615.2 443.5h5.6v5.6h-5.6zM645.3 443.5h5.6v5.6h-5.6zM475.0 448.4h5.6v5.6h-5.6zM530.1 448.4h5.6v5.6h-5.6zM555.1 448.4h15.6v5.6h-15.6zM590.2 448.4h5.6v5.6h-5.6zM615.2 448.4h5.6v5.6h-5.6zM740.4 448.4h5.6v5.6h-5.6zM610.2 453.4h5.6v5.6h-5.6zM740.4 453.4h5.6v5.6h-5.6zM800.5 453.4h10.6v5.6h-10.6zM570.1 458.4h5.6v5.6h-5.6zM740.4 458.4h5.6v5.6h-5.6zM765.4 458.4h5.6v5.6h-5.6zM800.5 458.4h5.6v5.6h-5.6zM475.0 463.4h5.6v5.6h-5.6zM495.0 463.4h5.6v5.6h-5.6zM525.1 463.4h5.6v5.6h-5.6zM610.2 463.4h5.6v5.6h-5.6zM650.3 463.4h10.6v5.6h-10.6zM770.4 463.4h5.6v5.6h-5.6zM545.1 468.4h15.6v5.6h-15.6zM565.1 468.4h5.6v5.6h-5.6zM620.2 468.4h5.6v5.6h-5.6zM645.3 468.4h10.6v5.6h-10.6zM700.3 468.4h5.6v5.6h-5.6zM495.0 473.4h5.6v5.6h-5.6zM560.1 473.4h5.6v5.6h-5.6zM690.3 473.4h5.6v5.6h-5.6zM770.4 473.4h5.6v5.6h-5.6zM480.0 478.3h5.6v5.6h-5.6zM560.1 478.3h15.6v5.6h-15.6zM585.2 478.3h5.6v5.6h-5.6zM615.2 478.3h10.6v5.6h-10.6zM630.2 478.3h10.6v5.6h-10.6zM645.3 478.3h5.6v5.6h-5.6zM705.3 478.3h5.6v5.6h-5.6zM755.4 478.3h5.6v5.6h-5.6zM810.5 478.3h5.6v5.6h-5.6zM480.0 483.3h5.6v5.6h-5.6zM705.3 483.3h10.6v5.6h-10.6zM750.4 483.3h5.6v5.6h-5.6zM780.5 483.3h5.6v5.6h-5.6zM470.0 488.3h5.6v5.6h-5.6zM500.1 488.3h5.6v5.6h-5.6zM535.1 488.3h10.6v5.6h-10.6zM705.3 488.3h5.6v5.6h-5.6zM775.4 488.3h5.6v5.6h-5.6zM805.5 488.3h5.6v5.6h-5.6zM500.1 493.3h5.6v5.6h-5.6zM540.1 493.3h5.6v5.6h-5.6zM660.3 493.3h5.6v5.6h-5.6zM695.3 493.3h5.6v5.6h-5.6zM720.4 493.3h5.6v5.6h-5.6zM800.5 493.3h5.6v5.6h-5.6zM465.0 498.3h5.6v5.6h-5.6zM515.1 498.3h5.6v5.6h-5.6zM545.1 498.3h5.6v5.6h-5.6zM700.3 498.3h5.6v5.6h-5.6zM500.1 503.3h5.6v5.6h-5.6zM550.1 503.3h10.6v5.6h-10.6zM705.3 503.3h5.6v5.6h-5.6zM475.0 508.2h5.6v5.6h-5.6zM500.1 508.2h5.6v5.6h-5.6zM515.1 508.2h5.6v5.6h-5.6zM555.1 508.2h5.6v5.6h-5.6zM570.1 508.2h10.6v5.6h-10.6zM775.4 508.2h5.6v5.6h-5.6zM495.0 513.2h5.6v5.6h-5.6zM520.1 513.2h5.6v5.6h-5.6zM560.1 513.2h5.6v5.6h-5.6zM585.2 513.2h5.6v5.6h-5.6zM700.3 513.2h5.6v5.6h-5.6zM720.4 513.2h10.6v5.6h-10.6zM545.1 518.2h5.6v5.6h-5.6zM570.1 518.2h5.6v5.6h-5.6zM670.3 518.2h15.6v5.6h-15.6zM700.3 518.2h5.6v5.6h-5.6zM715.4 518.2h5.6v5.6h-5.6zM730.4 518.2h5.6v5.6h-5.6zM465.0 523.2h5.6v5.6h-5.6zM540.1 523.2h5.6v5.6h-5.6zM560.1 523.2h15.6v5.6h-15.6zM680.3 523.2h5.6v5.6h-5.6zM700.3 523.2h5.6v5.6h-5.6zM735.4 523.2h10.6v5.6h-10.6zM750.4 523.2h5.6v5.6h-5.6zM775.4 523.2h5.6v5.6h-5.6zM470.0 528.2h5.6v5.6h-5.6zM485.0 528.2h5.6v5.6h-5.6zM555.1 528.2h5.6v5.6h-5.6zM660.3 528.2h10.6v5.6h-10.6zM725.4 528.2h5.6v5.6h-5.6zM810.5 528.2h5.6v5.6h-5.6zM480.0 533.2h5.6v5.6h-5.6zM500.1 533.2h10.6v5.6h-10.6zM555.1 533.2h5.6v5.6h-5.6zM565.1 533.2h5.6v5.6h-5.6zM580.2 533.2h5.6v5.6h-5.6zM625.2 533.2h10.6v5.6h-10.6zM660.3 533.2h5.6v5.6h-5.6zM695.3 533.2h5.6v5.6h-5.6zM745.4 533.2h5.6v5.6h-5.6zM775.4 533.2h5.6v5.6h-5.6zM795.5 533.2h5.6v5.6h-5.6zM805.5 533.2h10.6v5.6h-10.6zM750.4 538.1h5.6v5.6h-5.6zM765.4 538.1h5.6v5.6h-5.6zM465.0 543.1h5.6v5.6h-5.6zM480.0 543.1h5.6v5.6h-5.6zM550.1 543.1h5.6v5.6h-5.6zM595.2 543.1h5.6v5.6h-5.6zM695.3 543.1h5.6v5.6h-5.6zM720.4 543.1h5.6v5.6h-5.6zM780.5 543.1h5.6v5.6h-5.6zM480.0 548.1h10.6v5.6h-10.6zM610.2 548.1h5.6v5.6h-5.6zM645.3 548.1h5.6v5.6h-5.6zM660.3 548.1h5.6v5.6h-5.6zM695.3 548.1h15.6v5.6h-15.6zM550.1 553.1h5.6v5.6h-5.6zM580.2 553.1h5.6v5.6h-5.6zM735.4 553.1h10.6v5.6h-10.6zM755.4 553.1h5.6v5.6h-5.6zM490.0 558.1h5.6v5.6h-5.6zM520.1 558.1h5.6v5.6h-5.6zM570.1 558.1h5.6v5.6h-5.6zM590.2 558.1h5.6v5.6h-5.6zM610.2 558.1h10.6v5.6h-10.6zM760.4 558.1h5.6v5.6h-5.6zM480.0 563.1h5.6v5.6h-5.6zM500.1 563.1h5.6v5.6h-5.6zM530.1 563.1h5.6v5.6h-5.6zM550.1 563.1h5.6v5.6h-5.6zM615.2 563.1h10.6v5.6h-10.6zM685.3 563.1h5.6v5.6h-5.6zM705.3 563.1h10.6v5.6h-10.6zM720.4 563.1h5.6v5.6h-5.6zM755.4 563.1h5.6v5.6h-5.6zM475.0 568.0h10.6v5.6h-10.6zM490.0 568.0h10.6v5.6h-10.6zM545.1 568.0h5.6v5.6h-5.6zM585.2 568.0h5.6v5.6h-5.6zM615.2 568.0h5.6v5.6h-5.6zM625.2 568.0h5.6v5.6h-5.6zM660.3 568.0h5.6v5.6h-5.6zM695.3 568.0h10.6v5.6h-10.6zM710.4 568.0h5.6v5.6h-5.6zM470.0 573.0h5.6v5.6h-5.6zM600.2 573.0h5.6v5.6h-5.6zM615.2 573.0h5.6v5.6h-5.6zM710.4 573.0h10.6v5.6h-10.6zM745.4 573.0h5.6v5.6h-5.6zM810.5 573.0h5.6v5.6h-5.6zM490.0 578.0h5.6v5.6h-5.6zM505.1 578.0h5.6v5.6h-5.6zM610.2 578.0h5.6v5.6h-5.6zM620.2 578.0h5.6v5.6h-5.6zM675.3 578.0h5.6v5.6h-5.6zM715.4 578.0h10.6v5.6h-10.6zM770.4 578.0h5.6v5.6h-5.6zM600.2 583.0h5.6v5.6h-5.6zM615.2 583.0h5.6v5.6h-5.6zM775.4 583.0h5.6v5.6h-5.6zM580.2 588.0h5.6v5.6h-5.6zM605.2 588.0h10.6v5.6h-10.6zM765.4 588.0h10.6v5.6h-10.6zM465.0 597.9h5.6v5.6h-5.6zM710.4 602.9h5.6v5.6h-5.6zM470.0 607.9h5.6v5.6h-5.6zM515.1 607.9h5.6v5.6h-5.6zM540.1 607.9h5.6v5.6h-5.6zM585.2 607.9h5.6v5.6h-5.6zM635.2 607.9h10.6v5.6h-10.6zM495.0 612.9h5.6v5.6h-5.6zM540.1 612.9h5.6v5.6h-5.6zM575.2 612.9h5.6v5.6h-5.6zM600.2 612.9h5.6v5.6h-5.6zM635.2 612.9h5.6v5.6h-5.6zM465.0 617.9h10.6v5.6h-10.6zM565.1 617.9h5.6v5.6h-5.6zM595.2 617.9h5.6v5.6h-5.6zM625.2 617.9h5.6v5.6h-5.6zM515.1 622.8h5.6v5.6h-5.6zM560.1 622.8h5.6v5.6h-5.6zM595.2 622.8h5.6v5.6h-5.6zM625.2 622.8h5.6v5.6h-5.6zM775.4 622.8h5.6v5.6h-5.6zM795.5 622.8h5.6v5.6h-5.6zM515.1 627.8h5.6v5.6h-5.6zM540.1 627.8h10.6v5.6h-10.6zM565.1 627.8h5.6v5.6h-5.6zM625.2 627.8h5.6v5.6h-5.6zM655.3 627.8h5.6v5.6h-5.6zM665.3 627.8h5.6v5.6h-5.6zM720.4 627.8h10.6v5.6h-10.6zM780.5 627.8h5.6v5.6h-5.6zM800.5 627.8h5.6v5.6h-5.6zM585.2 632.8h10.6v5.6h-10.6zM610.2 632.8h5.6v5.6h-5.6zM625.2 632.8h5.6v5.6h-5.6zM645.3 632.8h5.6v5.6h-5.6zM700.3 632.8h5.6v5.6h-5.6zM755.4 632.8h5.6v5.6h-5.6zM810.5 632.8h5.6v5.6h-5.6zM530.1 637.8h5.6v5.6h-5.6zM540.1 637.8h10.6v5.6h-10.6zM565.1 637.8h5.6v5.6h-5.6zM605.2 637.8h5.6v5.6h-5.6zM615.2 637.8h5.6v5.6h-5.6zM650.3 637.8h5.6v5.6h-5.6zM670.3 637.8h5.6v5.6h-5.6zM695.3 637.8h5.6v5.6h-5.6zM495.0 642.8h10.6v5.6h-10.6zM535.1 642.8h5.6v5.6h-5.6zM565.1 642.8h10.6v5.6h-10.6zM595.2 642.8h5.6v5.6h-5.6zM605.2 642.8h5.6v5.6h-5.6zM635.2 642.8h10.6v5.6h-10.6zM650.3 642.8h5.6v5.6h-5.6zM675.3 642.8h5.6v5.6h-5.6zM775.4 642.8h5.6v5.6h-5.6zM790.5 642.8h5.6v5.6h-5.6zM810.5 642.8h5.6v5.6h-5.6zM515.1 647.8h5.6v5.6h-5.6zM595.2 647.8h5.6v5.6h-5.6zM660.3 647.8h10.6v5.6h-10.6zM705.3 647.8h5.6v5.6h-5.6zM760.4 647.8h10.6v5.6h-10.6zM520.1 652.7h5.6v5.6h-5.6zM605.2 652.7h5.6v5.6h-5.6zM695.3 652.7h10.6v5.6h-10.6zM730.4 652.7h5.6v5.6h-5.6zM760.4 652.7h5.6v5.6h-5.6zM630.2 657.7h5.6v5.6h-5.6zM690.3 657.7h5.6v5.6h-5.6zM750.4 657.7h10.6v5.6h-10.6zM485.0 662.7h5.6v5.6h-5.6zM515.1 662.7h5.6v5.6h-5.6zM545.1 662.7h5.6v5.6h-5.6zM680.3 662.7h5.6v5.6h-5.6zM755.4 662.7h5.6v5.6h-5.6zM785.5 662.7h15.6v5.6h-15.6zM570.1 667.7h5.6v5.6h-5.6zM720.4 667.7h10.6v5.6h-10.6zM740.4 667.7h5.6v5.6h-5.6zM750.4 667.7h10.6v5.6h-10.6zM775.4 667.7h5.6v5.6h-5.6zM800.5 667.7h5.6v5.6h-5.6zM570.1 672.7h5.6v5.6h-5.6zM665.3 672.7h5.6v5.6h-5.6zM700.3 672.7h5.6v5.6h-5.6zM715.4 672.7h5.6v5.6h-5.6zM725.4 672.7h5.6v5.6h-5.6zM780.5 672.7h10.6v5.6h-10.6zM565.1 677.7h5.6v5.6h-5.6zM640.2 677.7h5.6v5.6h-5.6zM695.3 677.7h5.6v5.6h-5.6zM785.5 677.7h15.6v5.6h-15.6zM560.1 682.6h5.6v5.6h-5.6zM585.2 682.6h5.6v5.6h-5.6zM630.2 682.6h5.6v5.6h-5.6zM710.4 682.6h10.6v5.6h-10.6zM505.1 687.6h10.6v5.6h-10.6zM785.5 687.6h10.6v5.6h-10.6zM810.5 687.6h5.6v5.6h-5.6zM510.1 692.6h5.6v5.6h-5.6zM760.4 692.6h5.6v5.6h-5.6zM475.0 697.6h5.6v5.6h-5.6zM520.1 697.6h10.6v5.6h-10.6zM670.3 697.6h5.6v5.6h-5.6zM725.4 697.6h5.6v5.6h-5.6zM765.4 697.6h5.6v5.6h-5.6zM795.5 697.6h5.6v5.6h-5.6zM805.5 697.6h5.6v5.6h-5.6zM485.0 702.6h10.6v5.6h-10.6zM530.1 702.6h10.6v5.6h-10.6zM670.3 702.6h5.6v5.6h-5.6zM735.4 702.6h5.6v5.6h-5.6zM525.1 707.6h5.6v5.6h-5.6zM575.2 707.6h5.6v5.6h-5.6zM740.4 707.6h5.6v5.6h-5.6zM780.5 707.6h5.6v5.6h-5.6zM570.1 712.5h5.6v5.6h-5.6zM595.2 712.5h5.6v5.6h-5.6zM605.2 712.5h5.6v5.6h-5.6zM720.4 712.5h5.6v5.6h-5.6zM765.4 712.5h5.6v5.6h-5.6zM775.4 712.5h5.6v5.6h-5.6zM580.2 717.5h5.6v5.6h-5.6zM745.4 717.5h5.6v5.6h-5.6zM760.4 717.5h5.6v5.6h-5.6zM770.4 717.5h5.6v5.6h-5.6zM785.5 717.5h5.6v5.6h-5.6zM800.5 717.5h10.6v5.6h-10.6z"/>
<path fill="#f0ff00" d="M555.1 433.5h5.6v5.6h-5.6zM615.2 433.5h5.6v5.6h-5.6zM690.3 433.5h5.6v5.6h-5.6zM750.4 433.5h5.6v5.6h-5.6zM520.1 438.5h20.6v5.6h-20.6zM610.2 438.5h5.6v5.6h-5.6zM680.3 438.5h5.6v5.6h-5.6zM740.4 438.5h5.6v5.6h-5.6zM800.5 438.5h5.6v5.6h-5.6zM810.5 438.5h5.6v5.6h-5.6zM520.1 443.5h5.6v5.6h-5.6zM550.1 443.5h5.6v5.6h-5.6zM570.1 443.5h5.6v5.6h-5.6zM685.3 443.5h5.6v5.6h-5.6zM740.4 443.5h5.6v5.6h-5.6zM750.4 443.5h10.6v5.6h-10.6zM765.4 443.5h5.6v5.6h-5.6zM790.5 443.5h5.6v5.6h-5.6zM800.5 443.5h5.6v5.6h-5.6zM470.0 448.4h5.6v5.6h-5.6zM550.1 448.4h5.6v5.6h-5.6zM580.2 448.4h10.6v5.6h-10.6zM735.4 448.4h5.6v5.6h-5.6zM475.0 453.4h5.6v5.6h-5.6zM550.1 453.4h5.6v5.6h-5.6zM685.3 453.4h5.6v5.6h-5.6zM745.4 453.4h5.6v5.6h-5.6zM485.0 458.4h5.6v5.6h-5.6zM550.1 458.4h5.6v5.6h-5.6zM610.2 458.4h5.6v5.6h-5.6zM655.3 458.4h5.6v5.6h-5.6zM685.3 458.4h5.6v5.6h-5.6zM755.4 458.4h10.6v5.6h-10.6zM485.0 463.4h5.6v5.6h-5.6zM515.1 463.4h5.6v5.6h-5.6zM645.3 463.4h5.6v5.6h-5.6zM495.0 468.4h5.6v5.6h-5.6zM535.1 468.4h5.6v5.6h-5.6zM575.2 468.4h5.6v5.6h-5.6zM585.2 468.4h5.6v5.6h-5.6zM655.3 468.4h5.6v5.6h-5.6zM760.4 468.4h5.6v5.6h-5.6zM775.4 468.4h5.6v5.6h-5.6zM555.1 473.4h5.6v5.6h-5.6zM565.1 473.4h15.6v5.6h-15.6zM585.2 473.4h5.6v5.6h-5.6zM705.3 473.4h5.6v5.6h-5.6zM725.4 473.4h10.6v5.6h-10.6zM800.5 473.4h5.6v5.6h-5.6zM810.5 473.4h5.6v5.6h-5.6zM680.3 478.3h5.6v5.6h-5.6zM720.4 478.3h5.6v5.6h-5.6zM765.4 478.3h5.6v5.6h-5.6zM500.1 483.3h5.6v5.6h-5.6zM535.1 483.3h5.6v5.6h-5.6zM560.1 483.3h5.6v5.6h-5.6zM595.2 483.3h15.6v5.6h-15.6zM635.2 483.3h5.6v5.6h-5.6zM725.4 483.3h5.6v5.6h-5.6zM735.4 483.3h5.6v5.6h-5.6zM755.4 483.3h10.6v5.6h-10.6zM805.5 483.3h5.6v5.6h-5.6zM490.0 488.3h5.6v5.6h-5.6zM525.1 488.3h5.6v5.6h-5.6zM560.1 488.3h5.6v5.6h-5.6zM635.2 488.3h5.6v5.6h-5.6zM735.4 488.3h10.6v5.6h-10.6zM765.4 488.3h5.6v5.6h-5.6zM495.0 493.3h5.6v5.6h-5.6zM505.1 493.3h5.6v5.6h-5.6zM525.1 493.3h5.6v5.6h-5.6zM705.3 493.3h10.6v5.6h-10.6zM740.4 493.3h5.6v5.6h-5.6zM775.4 493.3h5.6v5.6h-5.6zM500.1 498.3h15.6v5.6h-15.6zM660.3 498.3h5.6v5.6h-5.6zM705.3 498.3h10.6v5.6h-10.6zM760.4 498.3h5.6v5.6h-5.6zM775.4 498.3h25.6v5.6h-25.6zM530.1 503.3h10.6v5.6h-10.6zM625.2 503.3h10.6v5.6h-10.6zM710.4 503.3h5.6v5.6h-5.6zM760.4 503.3h5.6v5.6h-5.6zM775.4 503.3h5.6v5.6h-5.6zM480.0 508.2h5.6v5.6h-5.6zM490.0 508.2h5.6v5.6h-5.6zM550.1 508.2h5.6v5.6h-5.6zM560.1 508.2h5.6v5.6h-5.6zM680.3 508.2h5.6v5.6h-5.6zM710.4 508.2h5.6v5.6h-5.6zM720.4 508.2h20.6v5.6h-20.6zM785.5 508.2h5.6v5.6h-5.6zM795.5 508.2h10.6v5.6h-10.6zM515.1 513.2h5.6v5.6h-5.6zM525.1 513.2h10.6v5.6h-10.6zM555.1 513.2h5.6v5.6h-5.6zM715.4 513.2h5.6v5.6h-5.6zM730.4 513.2h10.6v5.6h-10.6zM775.4 513.2h5.6v5.6h-5.6zM520.1 518.2h5.6v5.6h-5.6zM530.1 518.2h5.6v5.6h-5.6zM560.1 518.2h10.6v5.6h-10.6zM575.2 518.2h20.6v5.6h-20.6zM665.3 518.2h5.6v5.6h-5.6zM735.4 518.2h5.6v5.6h-5.6zM745.4 518.2h5.6v5.6h-5.6zM525.1 523.2h5.6v5.6h-5.6zM590.2 523.2h5.6v5.6h-5.6zM650.3 523.2h5.6v5.6h-5.6zM660.3 523.2h5.6v5.6h-5.6zM715.4 523.2h5.6v5.6h-5.6zM770.4 523.2h5.6v5.6h-5.6zM465.0 528.2h5.6v5.6h-5.6zM570.1 528.2h5.6v5.6h-5.6zM585.2 528.2h10.6v5.6h-10.6zM685.3 528.2h5.6v5.6h-5.6zM695.3 528.2h5.6v5.6h-5.6zM720.4 528.2h5.6v5.6h-5.6zM740.4 528.2h5.6v5.6h-5.6zM750.4 528.2h10.6v5.6h-10.6zM770.4 528.2h10.6v5.6h-10.6zM490.0 533.2h5.6v5.6h-5.6zM575.2 533.2h5.6v5.6h-5.6zM585.2 533.2h5.6v5.6h-5.6zM615.2 533.2h5.6v5.6h-5.6zM725.4 533.2h5.6v5.6h-5.6zM750.4 533.2h5.6v5.6h-5.6zM770.4 533.2h5.6v5.6h-5.6zM785.5 533.2h5.6v5.6h-5.6zM480.0 538.1h5.6v5.6h-5.6zM555.1 538.1h10.6v5.6h-10.6zM575.2 538.1h5.6v5.6h-5.6zM590.2 538.1h5.6v5.6h-5.6zM600.2 538.1h10.6v5.6h-10.6zM725.4 538.1h5.6v5.6h-5.6zM490.0 543.1h5.6v5.6h-5.6zM605.2 543.1h5.6v5.6h-5.6zM660.3 543.1h5.6v5.6h-5.6zM755.4 543.1h10.6v5.6h-10.6zM470.0 548.1h10.6v5.6h-10.6zM550.1 548.1h5.6v5.6h-5.6zM580.2 548.1h5.6v5.6h-5.6zM720.4 548.1h5.6v5.6h-5.6zM495.0 553.1h10.6v5.6h-10.6zM555.1 553.1h5.6v5.6h-5.6zM595.2 553.1h5.6v5.6h-5.6zM650.3 553.1h5.6v5.6h-5.6zM685.3 553.1h5.6v5.6h-5.6zM695.3 553.1h10.6v5.6h-10.6zM720.4 553.1h5.6v5.6h-5.6zM745.4 553.1h10.6v5.6h-10.6zM620.2 558.1h5.6v5.6h-5.6zM490.0 563.1h5.6v5.6h-5.6zM625.2 563.1h5.6v5.6h-5.6zM655.3 563.1h5.6v5.6h-5.6zM675.3 563.1h5.6v5.6h-5.6zM470.0 568.0h5.6v5.6h-5.6zM485.0 568.0h5.6v5.6h-5.6zM520.1 568.0h5.6v5.6h-5.6zM535.1 568.0h5.6v5.6h-5.6zM580.2 568.0h5.6v5.6h-5.6zM605.2 568.0h5.6v5.6h-5.6zM620.2 568.0h5.6v5.6h-5.6zM705.3 568.0h5.6v5.6h-5.6zM715.4 568.0h5.6v5.6h-5.6zM745.4 568.0h5.6v5.6h-5.6zM465.0 573.0h5.6v5.6h-5.6zM525.1 573.0h5.6v5.6h-5.6zM535.1 573.0h5.6v5.6h-5.6zM545.1 573.0h5.6v5.6h-5.6zM620.2 573.0h5.6v5.6h-5.6zM735.4 573.0h5.6v5.6h-5.6zM800.5 573.0h5.6v5.6h-5.6zM615.2 578.0h5.6v5.6h-5.6zM665.3 578.0h5.6v5.6h-5.6zM760.4 578.0h10.6v5.6h-10.6zM800.5 578.0h10.6v5.6h-10.6zM505.1 583.0h5.6v5.6h-5.6zM605.2 583.0h10.6v5.6h-10.6zM770.4 583.0h5.6v5.6h-5.6zM785.5 583.0h5.6v5.6h-5.6zM775.4 588.0h5.6v5.6h-5.6zM785.5 588.0h5.6v5.6h-5.6zM580.2 597.9h5.6v5.6h-5.6zM580.2 602.9h5.6v5.6h-5.6zM595.2 602.9h5.6v5.6h-5.6zM505.1 607.9h10.6v5.6h-10.6zM580.2 607.9h5.6v5.6h-5.6zM590.2 607.9h5.6v5.6h-5.6zM625.2 607.9h5.6v5.6h-5.6zM650.3 607.9h5.6v5.6h-5.6zM465.0 612.9h5.6v5.6h-5.6zM500.1 612.9h5.6v5.6h-5.6zM520.1 612.9h5.6v5.6h-5.6zM595.2 612.9h5.6v5.6h-5.6zM615.2 612.9h10.6v5.6h-10.6zM630.2 612.9h5.6v5.6h-5.6zM635.2 617.9h5.6v5.6h-5.6zM485.0 622.8h5.6v5.6h-5.6zM655.3 622.8h5.6v5.6h-5.6zM485.0 627.8h10.6v5.6h-10.6zM570.1 627.8h5.6v5.6h-5.6zM585.2 627.8h5.6v5.6h-5.6zM645.3 627.8h5.6v5.6h-5.6zM760.4 627.8h10.6v5.6h-10.6zM785.5 627.8h5.6v5.6h-5.6zM500.1 632.8h15.6v5.6h-15.6zM545.1 632.8h5.6v5.6h-5.6zM660.3 632.8h5.6v5.6h-5.6zM705.3 632.8h5.6v5.6h-5.6zM715.4 632.8h5.6v5.6h-5.6zM740.4 632.8h5.6v5.6h-5.6zM465.0 637.8h10.6v5.6h-10.6zM570.1 637.8h5.6v5.6h-5.6zM590.2 637.8h10.6v5.6h-10.6zM610.2 637.8h5.6v5.6h-5.6zM645.3 637.8h5.6v5.6h-5.6zM710.4 637.8h5.6v5.6h-5.6zM780.5 637.8h5.6v5.6h-5.6zM810.5 637.8h5.6v5.6h-5.6zM545.1 642.8h5.6v5.6h-5.6zM580.2 642.8h5.6v5.6h-5.6zM590.2 642.8h5.6v5.6h-5.6zM600.2 642.8h5.6v5.6h-5.6zM610.2 642.8h10.6v5.6h-10.6zM655.3 642.8h5.6v5.6h-5.6zM670.3 642.8h5.6v5.6h-5.6zM685.3 642.8h5.6v5.6h-5.6zM695.3 642.8h20.6v5.6h-20.6zM510.1 647.8h5.6v5.6h-5.6zM590.2 647.8h5.6v5.6h-5.6zM630.2 647.8h5.6v5.6h-5.6zM655.3 647.8h5.6v5.6h-5.6zM695.3 647.8h5.6v5.6h-5.6zM735.4 647.8h5.6v5.6h-5.6zM800.5 647.8h10.6v5.6h-10.6zM540.1 652.7h10.6v5.6h-10.6zM625.2 652.7h5.6v5.6h-5.6zM655.3 652.7h10.6v5.6h-10.6zM705.3 652.7h5.6v5.6h-5.6zM725.4 652.7h5.6v5.6h-5.6zM750.4 652.7h5.6v5.6h-5.6zM770.4 652.7h5.6v5.6h-5.6zM520.1 657.7h5.6v5.6h-5.6zM570.1 657.7h5.6v5.6h-5.6zM580.2 657.7h5.6v5.6h-5.6zM600.2 657.7h10.6v5.6h-10.6zM635.2 657.7h5.6v5.6h-5.6zM675.3 657.7h10.6v5.6h-10.6zM490.0 662.7h5.6v5.6h-5.6zM510.1 662.7h5.6v5.6h-5.6zM550.1 662.7h5.6v5.6h-5.6zM560.1 662.7h5.6v5.6h-5.6zM670.3 662.7h10.6v5.6h-10.6zM715.4 662.7h5.6v5.6h-5.6zM535.1 667.7h5.6v5.6h-5.6zM635.2 667.7h10.6v5.6h-10.6zM700.3 667.7h5.6v5.6h-5.6zM745.4 667.7h5.6v5.6h-5.6zM790.5 667.7h5.6v5.6h-5.6zM550.1 672.7h5.6v5.6h-5.6zM565.1 672.7h5.6v5.6h-5.6zM580.2 672.7h5.6v5.6h-5.6zM630.2 672.7h5.6v5.6h-5.6zM640.2 672.7h5.6v5.6h-5.6zM685.3 672.7h5.6v5.6h-5.6zM755.4 672.7h5.6v5.6h-5.6zM480.0 677.7h5.6v5.6h-5.6zM545.1 677.7h5.6v5.6h-5.6zM630.2 677.7h5.6v5.6h-5.6zM755.4 677.7h5.6v5.6h-5.6zM545.1 682.6h5.6v5.6h-5.6zM565.1 682.6h5.6v5.6h-5.6zM695.3 682.6h5.6v5.6h-5.6zM745.4 682.6h5.6v5.6h-5.6zM540.1 687.6h5.6v5.6h-5.6zM635.2 687.6h5.6v5.6h-5.6zM700.3 687.6h10.6v5.6h-10.6zM720.4 687.6h5.6v5.6h-5.6zM755.4 687.6h5.6v5.6h-5.6zM780.5 687.6h5.6v5.6h-5.6zM535.1 692.6h10.6v5.6h-10.6zM660.3 692.6h5.6v5.6h-5.6zM720.4 692.6h5.6v5.6h-5.6zM795.5 692.6h5.6v5.6h-5.6zM810.5 692.6h5.6v5.6h-5.6zM495.0 697.6h5.6v5.6h-5.6zM510.1 697.6h10.6v5.6h-10.6zM675.3 697.6h5.6v5.6h-5.6zM770.4 697.6h5.6v5.6h-5.6zM790.5 697.6h5.6v5.6h-5.6zM810.5 697.6h5.6v5.6h-5.6zM545.1 702.6h5.6v5.6h-5.6zM675.3 702.6h5.6v5.6h-5.6zM725.4 702.6h10.6v5.6h-10.6zM775.4 702.6h5.6v5.6h-5.6zM790.5 702.6h15.6v5.6h-15.6zM810.5 702.6h5.6v5.6h-5.6zM720.4 707.6h5.6v5.6h-5.6zM755.4 707.6h5.6v5.6h-5.6zM590.2 712.5h5.6v5.6h-5.6zM610.2 712.5h5.6v5.6h-5.6zM660.3 712.5h5.6v5.6h-5.6zM750.4 712.5h5.6v5.6h-5.6zM760.4 712.5h5.6v5.6h-5.6zM790.5 712.5h5.6v5.6h-5.6zM505.1 717.5h5.6v5.6h-5.6zM585.2 717.5h5.6v5.6h-5.6zM675.3 717.5h5.6v5.6h-5.6zM720.4 717.5h10.6v5.6h-10.6z"/>
<path fill="#fff100" d="M620.2 433.5h15.6v5.6h-15.6zM670.3 433.5h10.6v5.6h-10.6zM755.4 433.5h5.6v5.6h-5.6zM540.1 438.5h5.6v5.6h-5.6zM550.1 438.5h5.6v5.6h-5.6zM615.2 438.5h15.6v5.6h-15.6zM645.3 438.5h5.6v5.6h-5.6zM675.3 438.5h5.6v5.6h-5.6zM690.3 438.5h5.6v5.6h-5.6zM725.4 438.5h5.6v5.6h-5.6zM525.1 443.5h5.6v5.6h-5.6zM535.1 443.5h5.6v5.6h-5.6zM620.2 443.5h5.6v5.6h-5.6zM650.3 443.5h5.6v5.6h-5.6zM760.4 443.5h5.6v5.6h-5.6zM655.3 448.4h5.6v5.6h-5.6zM480.0 453.4h5.6v5.6h-5.6zM570.1 453.4h5.6v5.6h-5.6zM590.2 453.4h5.6v5.6h-5.6zM655.3 453.4h5.6v5.6h-5.6zM735.4 453.4h5.6v5.6h-5.6zM750.4 453.4h20.6v5.6h-20.6zM475.0 458.4h5.6v5.6h-5.6zM535.1 458.4h5.6v5.6h-5.6zM575.2 458.4h5.6v5.6h-5.6zM660.3 458.4h5.6v5.6h-5.6zM680.3 458.4h5.6v5.6h-5.6zM735.4 458.4h5.6v5.6h-5.6zM535.1 463.4h5.6v5.6h-5.6zM570.1 463.4h10.6v5.6h-10.6zM585.2 463.4h5.6v5.6h-5.6zM625.2 463.4h5.6v5.6h-5.6zM635.2 463.4h10.6v5.6h-10.6zM660.3 463.4h5.6v5.6h-5.6zM675.3 463.4h5.6v5.6h-5.6zM740.4 463.4h10.6v5.6h-10.6zM530.1 468.4h5.6v5.6h-5.6zM570.1 468.4h5.6v5.6h-5.6zM580.2 468.4h5.6v5.6h-5.6zM660.3 468.4h5.6v5.6h-5.6zM695.3 468.4h5.6v5.6h-5.6zM780.5 468.4h5.6v5.6h-5.6zM580.2 473.4h5.6v5.6h-5.6zM660.3 473.4h5.6v5.6h-5.6zM710.4 473.4h15.6v5.6h-15.6zM735.4 473.4h5.6v5.6h-5.6zM775.4 473.4h10.6v5.6h-10.6zM500.1 478.3h5.6v5.6h-5.6zM535.1 478.3h5.6v5.6h-5.6zM665.3 478.3h15.6v5.6h-15.6zM725.4 478.3h5.6v5.6h-5.6zM760.4 478.3h5.6v5.6h-5.6zM780.5 478.3h5.6v5.6h-5.6zM800.5 478.3h5.6v5.6h-5.6zM485.0 483.3h5.6v5.6h-5.6zM590.2 483.3h5.6v5.6h-5.6zM610.2 483.3h5.6v5.6h-5.6zM630.2 483.3h5.6v5.6h-5.6zM640.2 483.3h5.6v5.6h-5.6zM655.3 483.3h5.6v5.6h-5.6zM680.3 483.3h5.6v5.6h-5.6zM740.4 483.3h10.6v5.6h-10.6zM775.4 483.3h5.6v5.6h-5.6zM475.0 488.3h5.6v5.6h-5.6zM505.1 488.3h5.6v5.6h-5.6zM655.3 488.3h10.6v5.6h-10.6zM690.3 488.3h5.6v5.6h-5.6zM710.4 488.3h5.6v5.6h-5.6zM730.4 488.3h5.6v5.6h-5.6zM770.4 488.3h5.6v5.6h-5.6zM470.0 493.3h5.6v5.6h-5.6zM745.4 493.3h5.6v5.6h-5.6zM470.0 498.3h5.6v5.6h-5.6zM495.0 498.3h5.6v5.6h-5.6zM630.2 498.3h5.6v5.6h-5.6zM740.4 498.3h10.6v5.6h-10.6zM490.0 503.3h5.6v5.6h-5.6zM545.1 503.3h5.6v5.6h-5.6zM675.3 503.3h5.6v5.6h-5.6zM735.4 503.3h5.6v5.6h-5.6zM745.4 503.3h5.6v5.6h-5.6zM785.5 503.3h15.6v5.6h-15.6zM530.1 508.2h5.6v5.6h-5.6zM565.1 508.2h5.6v5.6h-5.6zM585.2 508.2h5.6v5.6h-5.6zM625.2 508.2h5.6v5.6h-5.6zM700.3 508.2h5.6v5.6h-5.6zM715.4 508.2h5.6v5.6h-5.6zM740.4 508.2h5.6v5.6h-5.6zM780.5 508.2h5.6v5.6h-5.6zM790.5 508.2h5.6v5.6h-5.6zM745.4 513.2h5.6v5.6h-5.6zM780.5 513.2h5.6v5.6h-5.6zM535.1 518.2h5.6v5.6h-5.6zM550.1 518.2h5.6v5.6h-5.6zM645.3 518.2h5.6v5.6h-5.6zM660.3 518.2h5.6v5.6h-5.6zM685.3 518.2h5.6v5.6h-5.6zM720.4 518.2h10.6v5.6h-10.6zM740.4 518.2h5.6v5.6h-5.6zM750.4 518.2h5.6v5.6h-5.6zM775.4 518.2h5.6v5.6h-5.6zM490.0 523.2h5.6v5.6h-5.6zM510.1 523.2h5.6v5.6h-5.6zM555.1 523.2h5.6v5.6h-5.6zM585.2 523.2h5.6v5.6h-5.6zM670.3 523.2h5.6v5.6h-5.6zM685.3 523.2h5.6v5.6h-5.6zM745.4 523.2h5.6v5.6h-5.6zM575.2 528.2h10.6v5.6h-10.6zM635.2 528.2h5.6v5.6h-5.6zM680.3 528.2h5.6v5.6h-5.6zM745.4 528.2h5.6v5.6h-5.6zM780.5 528.2h5.6v5.6h-5.6zM795.5 528.2h5.6v5.6h-5.6zM465.0 533.2h5.6v5.6h-5.6zM475.0 533.2h5.6v5.6h-5.6zM485.0 533.2h5.6v5.6h-5.6zM570.1 533.2h5.6v5.6h-5.6zM590.2 533.2h10.6v5.6h-10.6zM765.4 533.2h5.6v5.6h-5.6zM790.5 533.2h5.6v5.6h-5.6zM465.0 538.1h5.6v5.6h-5.6zM485.0 538.1h5.6v5.6h-5.6zM655.3 538.1h10.6v5.6h-10.6zM580.2 543.1h5.6v5.6h-5.6zM600.2 543.1h5.6v5.6h-5.6zM650.3 543.1h5.6v5.6h-5.6zM665.3 543.1h5.6v5.6h-5.6zM725.4 543.1h10.6v5.6h-10.6zM605.2 548.1h5.6v5.6h-5.6zM690.3 548.1h5.6v5.6h-5.6zM730.4 548.1h5.6v5.6h-5.6zM560.1 553.1h5.6v5.6h-5.6zM605.2 553.1h5.6v5.6h-5.6zM690.3 553.1h5.6v5.6h-5.6zM725.4 553.1h10.6v5.6h-10.6zM700.3 558.1h5.6v5.6h-5.6zM725.4 558.1h5.6v5.6h-5.6zM755.4 558.1h5.6v5.6h-5.6zM520.1 563.1h10.6v5.6h-10.6zM580.2 563.1h10.6v5.6h-10.6zM610.2 563.1h5.6v5.6h-5.6zM700.3 563.1h5.6v5.6h-5.6zM550.1 568.0h10.6v5.6h-10.6zM590.2 568.0h15.6v5.6h-15.6zM610.2 568.0h5.6v5.6h-5.6zM800.5 568.0h10.6v5.6h-10.6zM555.1 573.0h5.6v5.6h-5.6zM720.4 573.0h5.6v5.6h-5.6zM730.4 573.0h5.6v5.6h-5.6zM740.4 573.0h5.6v5.6h-5.6zM805.5 573.0h5.6v5.6h-5.6zM670.3 578.0h5.6v5.6h-5.6zM710.4 578.0h5.6v5.6h-5.6zM730.4 578.0h5.6v5.6h-5.6zM760.4 583.0h10.6v5.6h-10.6zM780.5 583.0h5.6v5.6h-5.6zM780.5 588.0h5.6v5.6h-5.6zM580.2 592.9h5.6v5.6h-5.6zM785.5 592.9h5.6v5.6h-5.6zM465.0 602.9h10.6v5.6h-10.6zM595.2 607.9h5.6v5.6h-5.6zM615.2 607.9h5.6v5.6h-5.6zM645.3 607.9h5.6v5.6h-5.6zM625.2 612.9h5.6v5.6h-5.6zM650.3 612.9h5.6v5.6h-5.6zM500.1 617.9h5.6v5.6h-5.6zM515.1 617.9h5.6v5.6h-5.6zM575.2 617.9h5.6v5.6h-5.6zM630.2 617.9h5.6v5.6h-5.6zM650.3 617.9h5.6v5.6h-5.6zM565.1 622.8h5.6v5.6h-5.6zM580.2 622.8h5.6v5.6h-5.6zM630.2 622.8h5.6v5.6h-5.6zM640.2 622.8h5.6v5.6h-5.6zM575.2 627.8h5.6v5.6h-5.6zM650.3 627.8h5.6v5.6h-5.6zM465.0 632.8h10.6v5.6h-10.6zM730.4 632.8h10.6v5.6h-10.6zM765.4 632.8h5.6v5.6h-5.6zM800.5 632.8h5.6v5.6h-5.6zM625.2 637.8h5.6v5.6h-5.6zM700.3 637.8h5.6v5.6h-5.6zM785.5 637.8h5.6v5.6h-5.6zM805.5 637.8h5.6v5.6h-5.6zM585.2 642.8h5.6v5.6h-5.6zM660.3 642.8h5.6v5.6h-5.6zM690.3 642.8h5.6v5.6h-5.6zM765.4 642.8h10.6v5.6h-10.6zM805.5 642.8h5.6v5.6h-5.6zM495.0 647.8h5.6v5.6h-5.6zM580.2 647.8h10.6v5.6h-10.6zM600.2 647.8h5.6v5.6h-5.6zM610.2 647.8h5.6v5.6h-5.6zM625.2 647.8h5.6v5.6h-5.6zM670.3 647.8h5.6v5.6h-5.6zM710.4 647.8h5.6v5.6h-5.6zM740.4 647.8h5.6v5.6h-5.6zM770.4 647.8h5.6v5.6h-5.6zM795.5 647.8h5.6v5.6h-5.6zM495.0 652.7h5.6v5.6h-5.6zM580.2 652.7h5.6v5.6h-5.6zM600.2 652.7h5.6v5.6h-5.6zM610.2 652.7h5.6v5.6h-5.6zM665.3 652.7h5.6v5.6h-5.6zM690.3 652.7h5.6v5.6h-5.6zM710.4 652.7h5.6v5.6h-5.6zM720.4 652.7h5.6v5.6h-5.6zM765.4 652.7h5.6v5.6h-5.6zM490.0 657.7h10.6v5.6h-10.6zM610.2 657.7h5.6v5.6h-5.6zM640.2 657.7h10.6v5.6h-10.6zM685.3 657.7h5.6v5.6h-5.6zM760.4 657.7h5.6v5.6h-5.6zM500.1 662.7h5.6v5.6h-5.6zM570.1 662.7h10.6v5.6h-10.6zM635.2 662.7h10.6v5.6h-10.6zM665.3 662.7h5.6v5.6h-5.6zM480.0 667.7h5.6v5.6h-5.6zM550.1 667.7h5.6v5.6h-5.6zM565.1 667.7h5.6v5.6h-5.6zM575.2 667.7h5.6v5.6h-5.6zM660.3 667.7h5.6v5.6h-5.6zM680.3 667.7h5.6v5.6h-5.6zM470.0 672.7h5.6v5.6h-5.6zM555.1 672.7h10.6v5.6h-10.6zM645.3 672.7h5.6v5.6h-5.6zM670.3 672.7h5.6v5.6h-5.6zM775.4 672.7h5.6v5.6h-5.6zM790.5 672.7h10.6v5.6h-10.6zM470.0 677.7h10.6v5.6h-10.6zM585.2 677.7h5.6v5.6h-5.6zM690.3 677.7h5.6v5.6h-5.6zM780.5 677.7h5.6v5.6h-5.6zM540.1 682.6h5.6v5.6h-5.6zM590.2 682.6h5.6v5.6h-5.6zM625.2 682.6h5.6v5.6h-5.6zM645.3 682.6h5.6v5.6h-5.6zM750.4 682.6h5.6v5.6h-5.6zM780.5 682.6h5.6v5.6h-5.6zM555.1 687.6h5.6v5.6h-5.6zM640.2 687.6h5.6v5.6h-5.6zM760.4 687.6h5.6v5.6h-5.6zM790.5 692.6h5.6v5.6h-5.6zM465.0 697.6h5.6v5.6h-5.6zM530.1 697.6h15.6v5.6h-15.6zM680.3 697.6h15.6v5.6h-15.6zM720.4 697.6h5.6v5.6h-5.6zM775.4 697.6h5.6v5.6h-5.6zM785.5 697.6h5.6v5.6h-5.6zM540.1 702.6h5.6v5.6h-5.6zM785.5 702.6h5.6v5.6h-5.6zM805.5 702.6h5.6v5.6h-5.6zM540.1 707.6h5.6v5.6h-5.6zM670.3 707.6h5.6v5.6h-5.6zM725.4 707.6h5.6v5.6h-5.6zM735.4 707.6h5.6v5.6h-5.6zM790.5 707.6h5.6v5.6h-5.6zM800.5 707.6h5.6v5.6h-5.6zM505.1 712.5h5.6v5.6h-5.6zM580.2 712.5h5.6v5.6h-5.6zM655.3 712.5h5.6v5.6h-5.6zM665.3 712.5h5.6v5.6h-5.6zM725.4 712.5h5.6v5.6h-5.6zM800.5 712.5h10.6v5.6h-10.6zM500.1 717.5h5.6v5.6h-5.6zM510.1 717.5h5.6v5.6h-5.6zM670.3 717.5h5.6v5.6h-5.6zM685.3 717.5h5.6v5.6h-5.6zM730.4 717.5h15.6v5.6h-15.6zM750.4 717.5h10.6v5.6h-10.6zM810.5 717.5h5.6v5.6h-5.6z"/>
<path fill="#ffda00" d="M540.1 433.5h5.6v5.6h-5.6zM635.2 433.5h15.6v5.6h-15.6zM665.3 433.5h5.6v5.6h-5.6zM680.3 433.5h5.6v5.6h-5.6zM725.4 433.5h5.6v5.6h-5.6zM475.0 443.5h5.6v5.6h-5.6zM640.2 443.5h5.6v5.6h-5.6zM680.3 443.5h5.6v5.6h-5.6zM710.4 443.5h5.6v5.6h-5.6zM725.4 443.5h5.6v5.6h-5.6zM745.4 443.5h5.6v5.6h-5.6zM795.5 443.5h5.6v5.6h-5.6zM570.1 448.4h10.6v5.6h-10.6zM645.3 448.4h10.6v5.6h-10.6zM685.3 448.4h5.6v5.6h-5.6zM745.4 448.4h5.6v5.6h-5.6zM765.4 448.4h5.6v5.6h-5.6zM535.1 453.4h5.6v5.6h-5.6zM585.2 453.4h5.6v5.6h-5.6zM660.3 453.4h5.6v5.6h-5.6zM590.2 458.4h5.6v5.6h-5.6zM650.3 458.4h5.6v5.6h-5.6zM730.4 458.4h5.6v5.6h-5.6zM480.0 463.4h5.6v5.6h-5.6zM510.1 463.4h5.6v5.6h-5.6zM545.1 463.4h5.6v5.6h-5.6zM615.2 463.4h10.6v5.6h-10.6zM630.2 463.4h5.6v5.6h-5.6zM665.3 463.4h10.6v5.6h-10.6zM680.3 463.4h5.6v5.6h-5.6zM755.4 463.4h5.6v5.6h-5.6zM525.1 468.4h5.6v5.6h-5.6zM675.3 468.4h5.6v5.6h-5.6zM690.3 468.4h5.6v5.6h-5.6zM705.3 468.4h5.6v5.6h-5.6zM725.4 468.4h10.6v5.6h-10.6zM745.4 468.4h5.6v5.6h-5.6zM500.1 473.4h5.6v5.6h-5.6zM515.1 473.4h5.6v5.6h-5.6zM535.1 473.4h5.6v5.6h-5.6zM650.3 473.4h10.6v5.6h-10.6zM680.3 473.4h10.6v5.6h-10.6zM745.4 473.4h5.6v5.6h-5.6zM760.4 473.4h5.6v5.6h-5.6zM805.5 473.4h5.6v5.6h-5.6zM515.1 478.3h5.6v5.6h-5.6zM575.2 478.3h5.6v5.6h-5.6zM650.3 478.3h5.6v5.6h-5.6zM660.3 478.3h5.6v5.6h-5.6zM730.4 478.3h5.6v5.6h-5.6zM745.4 478.3h5.6v5.6h-5.6zM775.4 478.3h5.6v5.6h-5.6zM565.1 483.3h5.6v5.6h-5.6zM585.2 483.3h5.6v5.6h-5.6zM615.2 483.3h15.6v5.6h-15.6zM645.3 483.3h10.6v5.6h-10.6zM730.4 483.3h5.6v5.6h-5.6zM765.4 483.3h5.6v5.6h-5.6zM480.0 488.3h5.6v5.6h-5.6zM640.2 488.3h5.6v5.6h-5.6zM685.3 488.3h5.6v5.6h-5.6zM475.0 493.3h10.6v5.6h-10.6zM510.1 493.3h15.6v5.6h-15.6zM560.1 493.3h5.6v5.6h-5.6zM635.2 493.3h5.6v5.6h-5.6zM655.3 493.3h5.6v5.6h-5.6zM560.1 498.3h5.6v5.6h-5.6zM655.3 498.3h5.6v5.6h-5.6zM665.3 498.3h5.6v5.6h-5.6zM695.3 498.3h5.6v5.6h-5.6zM715.4 498.3h10.6v5.6h-10.6zM470.0 503.3h5.6v5.6h-5.6zM505.1 503.3h10.6v5.6h-10.6zM540.1 503.3h5.6v5.6h-5.6zM560.1 503.3h5.6v5.6h-5.6zM670.3 503.3h5.6v5.6h-5.6zM700.3 503.3h5.6v5.6h-5.6zM720.4 503.3h5.6v5.6h-5.6zM740.4 503.3h5.6v5.6h-5.6zM485.0 508.2h5.6v5.6h-5.6zM760.4 508.2h15.6v5.6h-15.6zM550.1 513.2h5.6v5.6h-5.6zM590.2 513.2h5.6v5.6h-5.6zM665.3 513.2h5.6v5.6h-5.6zM685.3 513.2h5.6v5.6h-5.6zM740.4 513.2h5.6v5.6h-5.6zM750.4 513.2h5.6v5.6h-5.6zM515.1 518.2h5.6v5.6h-5.6zM525.1 518.2h5.6v5.6h-5.6zM540.1 518.2h5.6v5.6h-5.6zM555.1 518.2h5.6v5.6h-5.6zM595.2 518.2h5.6v5.6h-5.6zM640.2 518.2h5.6v5.6h-5.6zM650.3 518.2h5.6v5.6h-5.6zM810.5 518.2h5.6v5.6h-5.6zM575.2 523.2h10.6v5.6h-10.6zM595.2 523.2h5.6v5.6h-5.6zM655.3 523.2h5.6v5.6h-5.6zM755.4 523.2h5.6v5.6h-5.6zM780.5 523.2h5.6v5.6h-5.6zM810.5 523.2h5.6v5.6h-5.6zM490.0 528.2h5.6v5.6h-5.6zM595.2 528.2h5.6v5.6h-5.6zM630.2 528.2h5.6v5.6h-5.6zM690.3 528.2h5.6v5.6h-5.6zM760.4 528.2h10.6v5.6h-10.6zM800.5 528.2h10.6v5.6h-10.6zM470.0 533.2h5.6v5.6h-5.6zM610.2 533.2h5.6v5.6h-5.6zM665.3 533.2h5.6v5.6h-5.6zM680.3 533.2h15.6v5.6h-15.6zM755.4 533.2h5.6v5.6h-5.6zM565.1 538.1h10.6v5.6h-10.6zM665.3 538.1h5.6v5.6h-5.6zM755.4 538.1h10.6v5.6h-10.6zM470.0 543.1h10.6v5.6h-10.6zM485.0 543.1h5.6v5.6h-5.6zM555.1 543.1h5.6v5.6h-5.6zM655.3 543.1h5.6v5.6h-5.6zM595.2 548.1h5.6v5.6h-5.6zM655.3 548.1h5.6v5.6h-5.6zM685.3 548.1h5.6v5.6h-5.6zM725.4 548.1h5.6v5.6h-5.6zM565.1 553.1h5.6v5.6h-5.6zM575.2 553.1h5.6v5.6h-5.6zM600.2 553.1h5.6v5.6h-5.6zM655.3 553.1h10.6v5.6h-10.6zM680.3 553.1h5.6v5.6h-5.6zM500.1 558.1h5.6v5.6h-5.6zM595.2 558.1h5.6v5.6h-5.6zM655.3 558.1h5.6v5.6h-5.6zM680.3 558.1h10.6v5.6h-10.6zM495.0 563.1h5.6v5.6h-5.6zM590.2 563.1h5.6v5.6h-5.6zM605.2 563.1h5.6v5.6h-5.6zM690.3 563.1h5.6v5.6h-5.6zM750.4 563.1h5.6v5.6h-5.6zM525.1 568.0h5.6v5.6h-5.6zM670.3 568.0h5.6v5.6h-5.6zM730.4 568.0h5.6v5.6h-5.6zM740.4 568.0h5.6v5.6h-5.6zM550.1 573.0h5.6v5.6h-5.6zM665.3 573.0h10.6v5.6h-10.6zM725.4 578.0h5.6v5.6h-5.6zM465.0 607.9h5.6v5.6h-5.6zM620.2 607.9h5.6v5.6h-5.6zM505.1 612.9h5.6v5.6h-5.6zM640.2 617.9h5.6v5.6h-5.6zM510.1 622.8h5.6v5.6h-5.6zM635.2 622.8h5.6v5.6h-5.6zM645.3 622.8h5.6v5.6h-5.6zM495.0 627.8h5.6v5.6h-5.6zM510.1 627.8h5.6v5.6h-5.6zM580.2 627.8h5.6v5.6h-5.6zM770.4 627.8h10.6v5.6h-10.6zM790.5 627.8h5.6v5.6h-5.6zM665.3 632.8h5.6v5.6h-5.6zM725.4 632.8h5.6v5.6h-5.6zM775.4 632.8h5.6v5.6h-5.6zM640.2 637.8h5.6v5.6h-5.6zM660.3 637.8h5.6v5.6h-5.6zM735.4 637.8h5.6v5.6h-5.6zM745.4 637.8h5.6v5.6h-5.6zM765.4 637.8h5.6v5.6h-5.6zM775.4 637.8h5.6v5.6h-5.6zM620.2 642.8h5.6v5.6h-5.6zM630.2 642.8h5.6v5.6h-5.6zM665.3 642.8h5.6v5.6h-5.6zM760.4 642.8h5.6v5.6h-5.6zM505.1 647.8h5.6v5.6h-5.6zM540.1 647.8h10.6v5.6h-10.6zM675.3 647.8h5.6v5.6h-5.6zM730.4 647.8h5.6v5.6h-5.6zM755.4 647.8h5.6v5.6h-5.6zM595.2 652.7h5.6v5.6h-5.6zM670.3 652.7h5.6v5.6h-5.6zM500.1 657.7h5.6v5.6h-5.6zM565.1 657.7h5.6v5.6h-5.6zM595.2 657.7h5.6v5.6h-5.6zM615.2 657.7h5.6v5.6h-5.6zM650.3 657.7h15.6v5.6h-15.6zM710.4 657.7h5.6v5.6h-5.6zM505.1 662.7h5.6v5.6h-5.6zM565.1 662.7h5.6v5.6h-5.6zM580.2 662.7h5.6v5.6h-5.6zM630.2 662.7h5.6v5.6h-5.6zM660.3 662.7h5.6v5.6h-5.6zM475.0 667.7h5.6v5.6h-5.6zM540.1 667.7h10.6v5.6h-10.6zM555.1 667.7h5.6v5.6h-5.6zM585.2 667.7h5.6v5.6h-5.6zM630.2 667.7h5.6v5.6h-5.6zM645.3 667.7h5.6v5.6h-5.6zM655.3 667.7h5.6v5.6h-5.6zM715.4 667.7h5.6v5.6h-5.6zM770.4 667.7h5.6v5.6h-5.6zM795.5 667.7h5.6v5.6h-5.6zM480.0 672.7h5.6v5.6h-5.6zM535.1 672.7h5.6v5.6h-5.6zM545.1 672.7h5.6v5.6h-5.6zM705.3 672.7h10.6v5.6h-10.6zM750.4 672.7h5.6v5.6h-5.6zM535.1 677.7h5.6v5.6h-5.6zM645.3 677.7h5.6v5.6h-5.6zM665.3 677.7h5.6v5.6h-5.6zM685.3 677.7h5.6v5.6h-5.6zM740.4 677.7h5.6v5.6h-5.6zM750.4 677.7h5.6v5.6h-5.6zM660.3 682.6h15.6v5.6h-15.6zM545.1 687.6h10.6v5.6h-10.6zM560.1 687.6h5.6v5.6h-5.6zM580.2 687.6h10.6v5.6h-10.6zM630.2 687.6h5.6v5.6h-5.6zM645.3 687.6h5.6v5.6h-5.6zM660.3 687.6h5.6v5.6h-5.6zM695.3 687.6h5.6v5.6h-5.6zM775.4 687.6h5.6v5.6h-5.6zM500.1 692.6h10.6v5.6h-10.6zM655.3 692.6h5.6v5.6h-5.6zM685.3 692.6h10.6v5.6h-10.6zM775.4 692.6h15.6v5.6h-15.6zM470.0 697.6h5.6v5.6h-5.6zM545.1 697.6h5.6v5.6h-5.6zM655.3 697.6h5.6v5.6h-5.6zM780.5 697.6h5.6v5.6h-5.6zM475.0 702.6h10.6v5.6h-10.6zM525.1 702.6h5.6v5.6h-5.6zM680.3 702.6h5.6v5.6h-5.6zM690.3 702.6h5.6v5.6h-5.6zM715.4 702.6h10.6v5.6h-10.6zM780.5 702.6h5.6v5.6h-5.6zM545.1 707.6h5.6v5.6h-5.6zM715.4 707.6h5.6v5.6h-5.6zM730.4 707.6h5.6v5.6h-5.6zM795.5 707.6h5.6v5.6h-5.6zM805.5 707.6h5.6v5.6h-5.6zM585.2 712.5h5.6v5.6h-5.6zM670.3 712.5h5.6v5.6h-5.6zM740.4 712.5h5.6v5.6h-5.6zM795.5 712.5h5.6v5.6h-5.6zM495.0 717.5h5.6v5.6h-5.6zM520.1 717.5h5.6v5.6h-5.6zM615.2 717.5h5.6v5.6h-5.6zM665.3 717.5h5.6v5.6h-5.6zM690.3 717.5h15.6v5.6h-15.6z"/>
<path fill="#ffc200" d="M465.0 433.5h5.6v5.6h-5.6zM480.0 433.5h5.6v5.6h-5.6zM550.1 433.5h5.6v5.6h-5.6zM790.5 433.5h5.6v5.6h-5.6zM545.1 438.5h5.6v5.6h-5.6zM630.2 438.5h15.6v5.6h-15.6zM670.3 438.5h5.6v5.6h-5.6zM790.5 438.5h5.6v5.6h-5.6zM465.0 443.5h10.6v5.6h-10.6zM540.1 443.5h10.6v5.6h-10.6zM625.2 443.5h10.6v5.6h-10.6zM675.3 443.5h5.6v5.6h-5.6zM690.3 443.5h5.6v5.6h-5.6zM705.3 443.5h5.6v5.6h-5.6zM535.1 448.4h15.6v5.6h-15.6zM620.2 448.4h5.6v5.6h-5.6zM680.3 448.4h5.6v5.6h-5.6zM690.3 448.4h5.6v5.6h-5.6zM730.4 448.4h5.6v5.6h-5.6zM755.4 448.4h10.6v5.6h-10.6zM540.1 453.4h10.6v5.6h-10.6zM575.2 453.4h10.6v5.6h-10.6zM650.3 453.4h5.6v5.6h-5.6zM680.3 453.4h5.6v5.6h-5.6zM730.4 453.4h5.6v5.6h-5.6zM545.1 458.4h5.6v5.6h-5.6zM665.3 458.4h15.6v5.6h-15.6zM540.1 463.4h5.6v5.6h-5.6zM580.2 463.4h5.6v5.6h-5.6zM685.3 463.4h5.6v5.6h-5.6zM720.4 463.4h20.6v5.6h-20.6zM750.4 463.4h5.6v5.6h-5.6zM515.1 468.4h10.6v5.6h-10.6zM665.3 468.4h5.6v5.6h-5.6zM680.3 468.4h10.6v5.6h-10.6zM720.4 468.4h5.6v5.6h-5.6zM740.4 468.4h5.6v5.6h-5.6zM520.1 473.4h10.6v5.6h-10.6zM665.3 473.4h5.6v5.6h-5.6zM675.3 473.4h5.6v5.6h-5.6zM740.4 473.4h5.6v5.6h-5.6zM750.4 473.4h5.6v5.6h-5.6zM580.2 478.3h5.6v5.6h-5.6zM655.3 478.3h5.6v5.6h-5.6zM735.4 478.3h5.6v5.6h-5.6zM770.4 478.3h5.6v5.6h-5.6zM805.5 478.3h5.6v5.6h-5.6zM530.1 483.3h5.6v5.6h-5.6zM570.1 483.3h5.6v5.6h-5.6zM660.3 483.3h5.6v5.6h-5.6zM675.3 483.3h5.6v5.6h-5.6zM770.4 483.3h5.6v5.6h-5.6zM485.0 488.3h5.6v5.6h-5.6zM510.1 488.3h5.6v5.6h-5.6zM590.2 488.3h10.6v5.6h-10.6zM745.4 488.3h20.6v5.6h-20.6zM490.0 493.3h5.6v5.6h-5.6zM590.2 493.3h10.6v5.6h-10.6zM760.4 493.3h5.6v5.6h-5.6zM475.0 498.3h5.6v5.6h-5.6zM490.0 498.3h5.6v5.6h-5.6zM600.2 498.3h5.6v5.6h-5.6zM625.2 498.3h5.6v5.6h-5.6zM750.4 498.3h5.6v5.6h-5.6zM570.1 503.3h10.6v5.6h-10.6zM595.2 503.3h10.6v5.6h-10.6zM635.2 503.3h5.6v5.6h-5.6zM665.3 503.3h5.6v5.6h-5.6zM715.4 503.3h5.6v5.6h-5.6zM750.4 503.3h5.6v5.6h-5.6zM780.5 503.3h5.6v5.6h-5.6zM535.1 508.2h5.6v5.6h-5.6zM630.2 508.2h15.6v5.6h-15.6zM665.3 508.2h5.6v5.6h-5.6zM685.3 508.2h5.6v5.6h-5.6zM745.4 508.2h5.6v5.6h-5.6zM755.4 508.2h5.6v5.6h-5.6zM535.1 513.2h5.6v5.6h-5.6zM640.2 513.2h5.6v5.6h-5.6zM695.3 513.2h5.6v5.6h-5.6zM785.5 513.2h5.6v5.6h-5.6zM795.5 513.2h5.6v5.6h-5.6zM805.5 513.2h5.6v5.6h-5.6zM655.3 518.2h5.6v5.6h-5.6zM770.4 518.2h5.6v5.6h-5.6zM675.3 523.2h5.6v5.6h-5.6zM725.4 523.2h5.6v5.6h-5.6zM795.5 523.2h5.6v5.6h-5.6zM495.0 528.2h5.6v5.6h-5.6zM505.1 528.2h5.6v5.6h-5.6zM785.5 528.2h10.6v5.6h-10.6zM600.2 533.2h10.6v5.6h-10.6zM760.4 533.2h5.6v5.6h-5.6zM470.0 538.1h10.6v5.6h-10.6zM680.3 538.1h5.6v5.6h-5.6zM575.2 543.1h5.6v5.6h-5.6zM555.1 548.1h10.6v5.6h-10.6zM600.2 548.1h5.6v5.6h-5.6zM665.3 548.1h5.6v5.6h-5.6zM680.3 548.1h5.6v5.6h-5.6zM570.1 553.1h5.6v5.6h-5.6zM495.0 558.1h5.6v5.6h-5.6zM605.2 558.1h5.6v5.6h-5.6zM675.3 558.1h5.6v5.6h-5.6zM735.4 558.1h5.6v5.6h-5.6zM750.4 558.1h5.6v5.6h-5.6zM595.2 563.1h5.6v5.6h-5.6zM660.3 563.1h5.6v5.6h-5.6zM725.4 563.1h5.6v5.6h-5.6zM530.1 568.0h5.6v5.6h-5.6zM720.4 568.0h5.6v5.6h-5.6zM735.4 568.0h5.6v5.6h-5.6zM530.1 573.0h5.6v5.6h-5.6zM640.2 612.9h10.6v5.6h-10.6zM490.0 617.9h10.6v5.6h-10.6zM505.1 617.9h5.6v5.6h-5.6zM570.1 617.9h5.6v5.6h-5.6zM645.3 617.9h5.6v5.6h-5.6zM650.3 622.8h5.6v5.6h-5.6zM505.1 627.8h5.6v5.6h-5.6zM640.2 627.8h5.6v5.6h-5.6zM795.5 627.8h5.6v5.6h-5.6zM720.4 632.8h5.6v5.6h-5.6zM760.4 632.8h5.6v5.6h-5.6zM770.4 632.8h5.6v5.6h-5.6zM780.5 632.8h5.6v5.6h-5.6zM705.3 637.8h5.6v5.6h-5.6zM740.4 637.8h5.6v5.6h-5.6zM750.4 637.8h5.6v5.6h-5.6zM770.4 637.8h5.6v5.6h-5.6zM790.5 637.8h15.6v5.6h-15.6zM540.1 642.8h5.6v5.6h-5.6zM735.4 642.8h5.6v5.6h-5.6zM500.1 647.8h5.6v5.6h-5.6zM615.2 647.8h10.6v5.6h-10.6zM690.3 647.8h5.6v5.6h-5.6zM745.4 647.8h10.6v5.6h-10.6zM515.1 652.7h5.6v5.6h-5.6zM585.2 652.7h10.6v5.6h-10.6zM615.2 652.7h10.6v5.6h-10.6zM675.3 652.7h5.6v5.6h-5.6zM685.3 652.7h5.6v5.6h-5.6zM715.4 652.7h5.6v5.6h-5.6zM585.2 657.7h10.6v5.6h-10.6zM620.2 657.7h10.6v5.6h-10.6zM670.3 657.7h5.6v5.6h-5.6zM705.3 657.7h5.6v5.6h-5.6zM765.4 657.7h10.6v5.6h-10.6zM585.2 662.7h20.6v5.6h-20.6zM645.3 662.7h5.6v5.6h-5.6zM655.3 662.7h5.6v5.6h-5.6zM760.4 662.7h5.6v5.6h-5.6zM770.4 662.7h5.6v5.6h-5.6zM560.1 667.7h5.6v5.6h-5.6zM580.2 667.7h5.6v5.6h-5.6zM675.3 667.7h5.6v5.6h-5.6zM760.4 667.7h5.6v5.6h-5.6zM585.2 672.7h5.6v5.6h-5.6zM650.3 672.7h15.6v5.6h-15.6zM760.4 672.7h5.6v5.6h-5.6zM625.2 677.7h5.6v5.6h-5.6zM660.3 677.7h5.6v5.6h-5.6zM670.3 677.7h5.6v5.6h-5.6zM760.4 677.7h5.6v5.6h-5.6zM620.2 682.6h5.6v5.6h-5.6zM675.3 682.6h20.6v5.6h-20.6zM755.4 682.6h5.6v5.6h-5.6zM775.4 682.6h5.6v5.6h-5.6zM575.2 687.6h5.6v5.6h-5.6zM590.2 687.6h10.6v5.6h-10.6zM650.3 687.6h5.6v5.6h-5.6zM680.3 687.6h15.6v5.6h-15.6zM710.4 687.6h5.6v5.6h-5.6zM545.1 692.6h5.6v5.6h-5.6zM645.3 692.6h5.6v5.6h-5.6zM665.3 692.6h15.6v5.6h-15.6zM695.3 692.6h5.6v5.6h-5.6zM770.4 692.6h5.6v5.6h-5.6zM465.0 702.6h5.6v5.6h-5.6zM510.1 702.6h5.6v5.6h-5.6zM685.3 702.6h5.6v5.6h-5.6zM485.0 707.6h5.6v5.6h-5.6zM505.1 707.6h5.6v5.6h-5.6zM570.1 707.6h5.6v5.6h-5.6zM580.2 707.6h5.6v5.6h-5.6zM680.3 707.6h5.6v5.6h-5.6zM810.5 707.6h5.6v5.6h-5.6zM540.1 712.5h5.6v5.6h-5.6zM675.3 712.5h10.6v5.6h-10.6zM695.3 712.5h5.6v5.6h-5.6zM735.4 712.5h5.6v5.6h-5.6zM755.4 712.5h5.6v5.6h-5.6zM810.5 712.5h5.6v5.6h-5.6zM565.1 717.5h5.6v5.6h-5.6zM625.2 717.5h20.6v5.6h-20.6zM680.3 717.5h5.6v5.6h-5.6z"/>
<path fill="#ffab00" d="M545.1 433.5h5.6v5.6h-5.6zM695.3 433.5h5.6v5.6h-5.6zM795.5 433.5h5.6v5.6h-5.6zM465.0 438.5h5.6v5.6h-5.6zM650.3 438.5h5.6v5.6h-5.6zM665.3 438.5h5.6v5.6h-5.6zM705.3 438.5h10.6v5.6h-10.6zM655.3 443.5h10.6v5.6h-10.6zM630.2 448.4h5.6v5.6h-5.6zM640.2 448.4h5.6v5.6h-5.6zM660.3 448.4h5.6v5.6h-5.6zM675.3 448.4h5.6v5.6h-5.6zM705.3 448.4h10.6v5.6h-10.6zM750.4 448.4h5.6v5.6h-5.6zM615.2 453.4h5.6v5.6h-5.6zM645.3 453.4h5.6v5.6h-5.6zM665.3 453.4h10.6v5.6h-10.6zM690.3 453.4h5.6v5.6h-5.6zM705.3 453.4h5.6v5.6h-5.6zM725.4 453.4h5.6v5.6h-5.6zM480.0 458.4h5.6v5.6h-5.6zM540.1 458.4h5.6v5.6h-5.6zM580.2 458.4h5.6v5.6h-5.6zM645.3 458.4h5.6v5.6h-5.6zM690.3 458.4h5.6v5.6h-5.6zM500.1 463.4h10.6v5.6h-10.6zM690.3 463.4h5.6v5.6h-5.6zM700.3 463.4h10.6v5.6h-10.6zM500.1 468.4h5.6v5.6h-5.6zM510.1 468.4h5.6v5.6h-5.6zM670.3 468.4h5.6v5.6h-5.6zM715.4 468.4h5.6v5.6h-5.6zM735.4 468.4h5.6v5.6h-5.6zM510.1 473.4h5.6v5.6h-5.6zM530.1 473.4h5.6v5.6h-5.6zM670.3 473.4h5.6v5.6h-5.6zM755.4 473.4h5.6v5.6h-5.6zM510.1 478.3h5.6v5.6h-5.6zM740.4 478.3h5.6v5.6h-5.6zM505.1 483.3h15.6v5.6h-15.6zM525.1 483.3h5.6v5.6h-5.6zM665.3 483.3h5.6v5.6h-5.6zM515.1 488.3h10.6v5.6h-10.6zM585.2 488.3h5.6v5.6h-5.6zM630.2 488.3h5.6v5.6h-5.6zM650.3 488.3h5.6v5.6h-5.6zM485.0 493.3h5.6v5.6h-5.6zM565.1 493.3h5.6v5.6h-5.6zM585.2 493.3h5.6v5.6h-5.6zM600.2 493.3h5.6v5.6h-5.6zM630.2 493.3h5.6v5.6h-5.6zM665.3 493.3h5.6v5.6h-5.6zM690.3 493.3h5.6v5.6h-5.6zM750.4 493.3h5.6v5.6h-5.6zM565.1 498.3h5.6v5.6h-5.6zM595.2 498.3h5.6v5.6h-5.6zM635.2 498.3h5.6v5.6h-5.6zM670.3 498.3h10.6v5.6h-10.6zM475.0 503.3h5.6v5.6h-5.6zM565.1 503.3h5.6v5.6h-5.6zM580.2 503.3h5.6v5.6h-5.6zM620.2 503.3h5.6v5.6h-5.6zM640.2 503.3h5.6v5.6h-5.6zM660.3 503.3h5.6v5.6h-5.6zM680.3 503.3h5.6v5.6h-5.6zM755.4 503.3h5.6v5.6h-5.6zM505.1 508.2h10.6v5.6h-10.6zM540.1 508.2h10.6v5.6h-10.6zM590.2 508.2h10.6v5.6h-10.6zM750.4 508.2h5.6v5.6h-5.6zM500.1 513.2h5.6v5.6h-5.6zM540.1 513.2h10.6v5.6h-10.6zM595.2 513.2h5.6v5.6h-5.6zM645.3 513.2h5.6v5.6h-5.6zM755.4 513.2h5.6v5.6h-5.6zM770.4 513.2h5.6v5.6h-5.6zM790.5 513.2h5.6v5.6h-5.6zM800.5 513.2h5.6v5.6h-5.6zM695.3 518.2h5.6v5.6h-5.6zM755.4 518.2h5.6v5.6h-5.6zM780.5 518.2h5.6v5.6h-5.6zM695.3 523.2h5.6v5.6h-5.6zM720.4 523.2h5.6v5.6h-5.6zM785.5 523.2h10.6v5.6h-10.6zM620.2 528.2h10.6v5.6h-10.6zM670.3 528.2h5.6v5.6h-5.6zM690.3 538.1h5.6v5.6h-5.6zM560.1 543.1h5.6v5.6h-5.6zM670.3 543.1h5.6v5.6h-5.6zM690.3 543.1h5.6v5.6h-5.6zM565.1 548.1h5.6v5.6h-5.6zM575.2 548.1h5.6v5.6h-5.6zM650.3 548.1h5.6v5.6h-5.6zM660.3 558.1h5.6v5.6h-5.6zM730.4 558.1h5.6v5.6h-5.6zM740.4 558.1h10.6v5.6h-10.6zM600.2 563.1h5.6v5.6h-5.6zM740.4 563.1h10.6v5.6h-10.6zM725.4 568.0h5.6v5.6h-5.6zM725.4 573.0h5.6v5.6h-5.6zM510.1 612.9h10.6v5.6h-10.6zM490.0 622.8h20.6v5.6h-20.6zM570.1 622.8h10.6v5.6h-10.6zM500.1 627.8h5.6v5.6h-5.6zM630.2 627.8h5.6v5.6h-5.6zM630.2 632.8h5.6v5.6h-5.6zM640.2 632.8h5.6v5.6h-5.6zM785.5 632.8h10.6v5.6h-10.6zM630.2 637.8h10.6v5.6h-10.6zM665.3 637.8h5.6v5.6h-5.6zM715.4 637.8h5.6v5.6h-5.6zM730.4 637.8h5.6v5.6h-5.6zM755.4 637.8h10.6v5.6h-10.6zM625.2 642.8h5.6v5.6h-5.6zM715.4 642.8h5.6v5.6h-5.6zM795.5 642.8h5.6v5.6h-5.6zM680.3 647.8h5.6v5.6h-5.6zM725.4 647.8h5.6v5.6h-5.6zM500.1 652.7h5.6v5.6h-5.6zM680.3 652.7h5.6v5.6h-5.6zM515.1 657.7h5.6v5.6h-5.6zM665.3 657.7h5.6v5.6h-5.6zM605.2 662.7h15.6v5.6h-15.6zM765.4 662.7h5.6v5.6h-5.6zM590.2 667.7h5.6v5.6h-5.6zM650.3 667.7h5.6v5.6h-5.6zM765.4 667.7h5.6v5.6h-5.6zM740.4 672.7h5.6v5.6h-5.6zM770.4 672.7h5.6v5.6h-5.6zM540.1 677.7h5.6v5.6h-5.6zM650.3 677.7h10.6v5.6h-10.6zM680.3 677.7h5.6v5.6h-5.6zM775.4 677.7h5.6v5.6h-5.6zM625.2 687.6h5.6v5.6h-5.6zM655.3 687.6h5.6v5.6h-5.6zM670.3 687.6h10.6v5.6h-10.6zM715.4 687.6h5.6v5.6h-5.6zM635.2 692.6h10.6v5.6h-10.6zM650.3 692.6h5.6v5.6h-5.6zM680.3 692.6h5.6v5.6h-5.6zM765.4 692.6h5.6v5.6h-5.6zM505.1 697.6h5.6v5.6h-5.6zM715.4 697.6h5.6v5.6h-5.6zM470.0 702.6h5.6v5.6h-5.6zM495.0 702.6h5.6v5.6h-5.6zM505.1 702.6h5.6v5.6h-5.6zM550.1 702.6h5.6v5.6h-5.6zM695.3 702.6h5.6v5.6h-5.6zM710.4 702.6h5.6v5.6h-5.6zM490.0 707.6h5.6v5.6h-5.6zM500.1 707.6h5.6v5.6h-5.6zM550.1 707.6h5.6v5.6h-5.6zM590.2 707.6h15.6v5.6h-15.6zM610.2 707.6h5.6v5.6h-5.6zM650.3 707.6h5.6v5.6h-5.6zM675.3 707.6h5.6v5.6h-5.6zM695.3 707.6h5.6v5.6h-5.6zM500.1 712.5h5.6v5.6h-5.6zM615.2 712.5h10.6v5.6h-10.6zM650.3 712.5h5.6v5.6h-5.6zM690.3 712.5h5.6v5.6h-5.6zM700.3 712.5h5.6v5.6h-5.6zM730.4 712.5h5.6v5.6h-5.6zM490.0 717.5h5.6v5.6h-5.6zM620.2 717.5h5.6v5.6h-5.6zM645.3 717.5h5.6v5.6h-5.6zM705.3 717.5h5.6v5.6h-5.6zM715.4 717.5h5.6v5.6h-5.6z"/>
<path fill="#ff9400" d="M470.0 433.5h5.6v5.6h-5.6zM705.3 433.5h5.6v5.6h-5.6zM475.0 438.5h5.6v5.6h-5.6zM660.3 438.5h5.6v5.6h-5.6zM635.2 443.5h5.6v5.6h-5.6zM670.3 443.5h5.6v5.6h-5.6zM725.4 448.4h5.6v5.6h-5.6zM675.3 453.4h5.6v5.6h-5.6zM585.2 458.4h5.6v5.6h-5.6zM615.2 458.4h5.6v5.6h-5.6zM640.2 458.4h5.6v5.6h-5.6zM705.3 458.4h5.6v5.6h-5.6zM720.4 458.4h10.6v5.6h-10.6zM505.1 468.4h5.6v5.6h-5.6zM710.4 468.4h5.6v5.6h-5.6zM750.4 468.4h10.6v5.6h-10.6zM520.1 478.3h5.6v5.6h-5.6zM530.1 478.3h5.6v5.6h-5.6zM520.1 483.3h5.6v5.6h-5.6zM575.2 483.3h10.6v5.6h-10.6zM670.3 483.3h5.6v5.6h-5.6zM565.1 488.3h5.6v5.6h-5.6zM600.2 488.3h5.6v5.6h-5.6zM610.2 488.3h5.6v5.6h-5.6zM625.2 488.3h5.6v5.6h-5.6zM645.3 488.3h5.6v5.6h-5.6zM665.3 488.3h5.6v5.6h-5.6zM640.2 493.3h5.6v5.6h-5.6zM755.4 493.3h5.6v5.6h-5.6zM485.0 498.3h5.6v5.6h-5.6zM575.2 498.3h5.6v5.6h-5.6zM585.2 498.3h5.6v5.6h-5.6zM755.4 498.3h5.6v5.6h-5.6zM485.0 503.3h5.6v5.6h-5.6zM585.2 503.3h5.6v5.6h-5.6zM645.3 503.3h5.6v5.6h-5.6zM655.3 503.3h5.6v5.6h-5.6zM600.2 508.2h5.6v5.6h-5.6zM645.3 508.2h5.6v5.6h-5.6zM625.2 513.2h5.6v5.6h-5.6zM635.2 513.2h5.6v5.6h-5.6zM495.0 518.2h5.6v5.6h-5.6zM600.2 518.2h5.6v5.6h-5.6zM620.2 518.2h5.6v5.6h-5.6zM785.5 518.2h20.6v5.6h-20.6zM505.1 523.2h5.6v5.6h-5.6zM600.2 523.2h5.6v5.6h-5.6zM635.2 523.2h5.6v5.6h-5.6zM765.4 523.2h5.6v5.6h-5.6zM800.5 523.2h5.6v5.6h-5.6zM500.1 528.2h5.6v5.6h-5.6zM600.2 528.2h10.6v5.6h-10.6zM615.2 528.2h5.6v5.6h-5.6zM675.3 528.2h5.6v5.6h-5.6zM670.3 538.1h10.6v5.6h-10.6zM685.3 538.1h5.6v5.6h-5.6zM565.1 543.1h10.6v5.6h-10.6zM680.3 543.1h5.6v5.6h-5.6zM670.3 548.1h10.6v5.6h-10.6zM600.2 558.1h5.6v5.6h-5.6zM690.3 558.1h10.6v5.6h-10.6zM670.3 563.1h5.6v5.6h-5.6zM695.3 563.1h5.6v5.6h-5.6zM665.3 568.0h5.6v5.6h-5.6zM510.1 617.9h5.6v5.6h-5.6zM635.2 627.8h5.6v5.6h-5.6zM795.5 632.8h5.6v5.6h-5.6zM725.4 637.8h5.6v5.6h-5.6zM730.4 642.8h5.6v5.6h-5.6zM740.4 642.8h10.6v5.6h-10.6zM755.4 642.8h5.6v5.6h-5.6zM800.5 642.8h5.6v5.6h-5.6zM685.3 647.8h5.6v5.6h-5.6zM715.4 647.8h5.6v5.6h-5.6zM620.2 662.7h5.6v5.6h-5.6zM650.3 662.7h5.6v5.6h-5.6zM705.3 662.7h5.6v5.6h-5.6zM705.3 667.7h5.6v5.6h-5.6zM475.0 672.7h5.6v5.6h-5.6zM540.1 672.7h5.6v5.6h-5.6zM680.3 672.7h5.6v5.6h-5.6zM745.4 672.7h5.6v5.6h-5.6zM765.4 672.7h5.6v5.6h-5.6zM620.2 677.7h5.6v5.6h-5.6zM745.4 677.7h5.6v5.6h-5.6zM765.4 677.7h10.6v5.6h-10.6zM595.2 682.6h5.6v5.6h-5.6zM650.3 682.6h10.6v5.6h-10.6zM760.4 682.6h5.6v5.6h-5.6zM770.4 682.6h5.6v5.6h-5.6zM565.1 687.6h5.6v5.6h-5.6zM600.2 687.6h5.6v5.6h-5.6zM620.2 687.6h5.6v5.6h-5.6zM665.3 687.6h5.6v5.6h-5.6zM765.4 687.6h5.6v5.6h-5.6zM630.2 692.6h5.6v5.6h-5.6zM700.3 692.6h10.6v5.6h-10.6zM500.1 697.6h5.6v5.6h-5.6zM550.1 697.6h5.6v5.6h-5.6zM695.3 697.6h5.6v5.6h-5.6zM710.4 697.6h5.6v5.6h-5.6zM500.1 702.6h5.6v5.6h-5.6zM650.3 702.6h5.6v5.6h-5.6zM465.0 707.6h10.6v5.6h-10.6zM480.0 707.6h5.6v5.6h-5.6zM585.2 707.6h5.6v5.6h-5.6zM605.2 707.6h5.6v5.6h-5.6zM615.2 707.6h5.6v5.6h-5.6zM685.3 707.6h10.6v5.6h-10.6zM700.3 707.6h10.6v5.6h-10.6zM480.0 712.5h5.6v5.6h-5.6zM565.1 712.5h5.6v5.6h-5.6zM645.3 712.5h5.6v5.6h-5.6zM685.3 712.5h5.6v5.6h-5.6zM705.3 712.5h5.6v5.6h-5.6zM715.4 712.5h5.6v5.6h-5.6zM465.0 717.5h5.6v5.6h-5.6zM485.0 717.5h5.6v5.6h-5.6zM515.1 717.5h5.6v5.6h-5.6zM540.1 717.5h5.6v5.6h-5.6zM655.3 717.5h10.6v5.6h-10.6zM790.5 717.5h10.6v5.6h-10.6z"/>
<path fill="#ff7d00" d="M475.0 433.5h5.6v5.6h-5.6zM660.3 433.5h5.6v5.6h-5.6zM700.3 433.5h5.6v5.6h-5.6zM710.4 433.5h5.6v5.6h-5.6zM720.4 433.5h5.6v5.6h-5.6zM470.0 438.5h5.6v5.6h-5.6zM695.3 438.5h5.6v5.6h-5.6zM795.5 438.5h5.6v5.6h-5.6zM665.3 443.5h5.6v5.6h-5.6zM715.4 443.5h5.6v5.6h-5.6zM625.2 448.4h5.6v5.6h-5.6zM635.2 448.4h5.6v5.6h-5.6zM670.3 448.4h5.6v5.6h-5.6zM640.2 453.4h5.6v5.6h-5.6zM710.4 453.4h5.6v5.6h-5.6zM720.4 453.4h5.6v5.6h-5.6zM620.2 458.4h10.6v5.6h-10.6zM635.2 458.4h5.6v5.6h-5.6zM695.3 463.4h5.6v5.6h-5.6zM715.4 463.4h5.6v5.6h-5.6zM505.1 473.4h5.6v5.6h-5.6zM525.1 478.3h5.6v5.6h-5.6zM615.2 488.3h5.6v5.6h-5.6zM680.3 488.3h5.6v5.6h-5.6zM625.2 493.3h5.6v5.6h-5.6zM650.3 493.3h5.6v5.6h-5.6zM480.0 498.3h5.6v5.6h-5.6zM580.2 498.3h5.6v5.6h-5.6zM590.2 498.3h5.6v5.6h-5.6zM620.2 498.3h5.6v5.6h-5.6zM640.2 498.3h5.6v5.6h-5.6zM650.3 498.3h5.6v5.6h-5.6zM680.3 498.3h5.6v5.6h-5.6zM690.3 498.3h5.6v5.6h-5.6zM480.0 503.3h5.6v5.6h-5.6zM590.2 503.3h5.6v5.6h-5.6zM620.2 508.2h5.6v5.6h-5.6zM695.3 508.2h5.6v5.6h-5.6zM510.1 513.2h5.6v5.6h-5.6zM600.2 513.2h5.6v5.6h-5.6zM620.2 513.2h5.6v5.6h-5.6zM650.3 513.2h5.6v5.6h-5.6zM660.3 513.2h5.6v5.6h-5.6zM690.3 513.2h5.6v5.6h-5.6zM760.4 513.2h10.6v5.6h-10.6zM510.1 518.2h5.6v5.6h-5.6zM605.2 518.2h5.6v5.6h-5.6zM615.2 518.2h5.6v5.6h-5.6zM635.2 518.2h5.6v5.6h-5.6zM690.3 518.2h5.6v5.6h-5.6zM495.0 523.2h5.6v5.6h-5.6zM605.2 523.2h5.6v5.6h-5.6zM615.2 523.2h5.6v5.6h-5.6zM690.3 523.2h5.6v5.6h-5.6zM760.4 523.2h5.6v5.6h-5.6zM805.5 523.2h5.6v5.6h-5.6zM670.3 533.2h10.6v5.6h-10.6zM675.3 543.1h5.6v5.6h-5.6zM685.3 543.1h5.6v5.6h-5.6zM570.1 548.1h5.6v5.6h-5.6zM665.3 553.1h5.6v5.6h-5.6zM675.3 553.1h5.6v5.6h-5.6zM730.4 563.1h10.6v5.6h-10.6zM720.4 637.8h5.6v5.6h-5.6zM720.4 642.8h10.6v5.6h-10.6zM750.4 642.8h5.6v5.6h-5.6zM720.4 647.8h5.6v5.6h-5.6zM505.1 657.7h5.6v5.6h-5.6zM625.2 662.7h5.6v5.6h-5.6zM710.4 662.7h5.6v5.6h-5.6zM595.2 667.7h5.6v5.6h-5.6zM710.4 667.7h5.6v5.6h-5.6zM675.3 672.7h5.6v5.6h-5.6zM590.2 677.7h5.6v5.6h-5.6zM675.3 677.7h5.6v5.6h-5.6zM765.4 682.6h5.6v5.6h-5.6zM570.1 687.6h5.6v5.6h-5.6zM770.4 687.6h5.6v5.6h-5.6zM550.1 692.6h5.6v5.6h-5.6zM585.2 692.6h10.6v5.6h-10.6zM710.4 692.6h10.6v5.6h-10.6zM650.3 697.6h5.6v5.6h-5.6zM575.2 702.6h5.6v5.6h-5.6zM585.2 702.6h5.6v5.6h-5.6zM475.0 707.6h5.6v5.6h-5.6zM495.0 707.6h5.6v5.6h-5.6zM510.1 707.6h5.6v5.6h-5.6zM565.1 707.6h5.6v5.6h-5.6zM620.2 707.6h10.6v5.6h-10.6zM645.3 707.6h5.6v5.6h-5.6zM710.4 707.6h5.6v5.6h-5.6zM465.0 712.5h5.6v5.6h-5.6zM485.0 712.5h5.6v5.6h-5.6zM495.0 712.5h5.6v5.6h-5.6zM510.1 712.5h5.6v5.6h-5.6zM520.1 712.5h5.6v5.6h-5.6zM625.2 712.5h5.6v5.6h-5.6zM640.2 712.5h5.6v5.6h-5.6zM470.0 717.5h5.6v5.6h-5.6zM480.0 717.5h5.6v5.6h-5.6zM560.1 717.5h5.6v5.6h-5.6zM650.3 717.5h5.6v5.6h-5.6z"/>
<path fill="#ff6700" d="M650.3 433.5h5.6v5.6h-5.6zM715.4 433.5h5.6v5.6h-5.6zM655.3 438.5h5.6v5.6h-5.6zM700.3 438.5h5.6v5.6h-5.6zM720.4 438.5h5.6v5.6h-5.6zM695.3 443.5h10.6v5.6h-10.6zM720.4 443.5h5.6v5.6h-5.6zM665.3 448.4h5.6v5.6h-5.6zM695.3 448.4h5.6v5.6h-5.6zM715.4 448.4h5.6v5.6h-5.6zM620.2 453.4h5.6v5.6h-5.6zM715.4 453.4h5.6v5.6h-5.6zM630.2 458.4h5.6v5.6h-5.6zM700.3 458.4h5.6v5.6h-5.6zM710.4 458.4h10.6v5.6h-10.6zM710.4 463.4h5.6v5.6h-5.6zM570.1 488.3h5.6v5.6h-5.6zM580.2 488.3h5.6v5.6h-5.6zM605.2 488.3h5.6v5.6h-5.6zM580.2 493.3h5.6v5.6h-5.6zM615.2 493.3h5.6v5.6h-5.6zM685.3 493.3h5.6v5.6h-5.6zM570.1 498.3h5.6v5.6h-5.6zM645.3 498.3h5.6v5.6h-5.6zM650.3 503.3h5.6v5.6h-5.6zM685.3 503.3h15.6v5.6h-15.6zM650.3 508.2h5.6v5.6h-5.6zM660.3 508.2h5.6v5.6h-5.6zM690.3 508.2h5.6v5.6h-5.6zM610.2 518.2h5.6v5.6h-5.6zM805.5 518.2h5.6v5.6h-5.6zM620.2 523.2h5.6v5.6h-5.6zM610.2 528.2h5.6v5.6h-5.6zM670.3 558.1h5.6v5.6h-5.6zM665.3 563.1h5.6v5.6h-5.6zM635.2 632.8h5.6v5.6h-5.6zM510.1 657.7h5.6v5.6h-5.6zM590.2 672.7h5.6v5.6h-5.6zM625.2 672.7h5.6v5.6h-5.6zM555.1 692.6h10.6v5.6h-10.6zM580.2 692.6h5.6v5.6h-5.6zM595.2 692.6h5.6v5.6h-5.6zM590.2 697.6h10.6v5.6h-10.6zM620.2 697.6h5.6v5.6h-5.6zM630.2 697.6h5.6v5.6h-5.6zM645.3 697.6h5.6v5.6h-5.6zM705.3 697.6h5.6v5.6h-5.6zM515.1 702.6h10.6v5.6h-10.6zM570.1 702.6h5.6v5.6h-5.6zM580.2 702.6h5.6v5.6h-5.6zM590.2 702.6h10.6v5.6h-10.6zM615.2 702.6h15.6v5.6h-15.6zM645.3 702.6h5.6v5.6h-5.6zM705.3 702.6h5.6v5.6h-5.6zM555.1 707.6h5.6v5.6h-5.6zM640.2 707.6h5.6v5.6h-5.6zM470.0 712.5h10.6v5.6h-10.6zM490.0 712.5h5.6v5.6h-5.6zM550.1 712.5h5.6v5.6h-5.6zM635.2 712.5h5.6v5.6h-5.6zM710.4 712.5h5.6v5.6h-5.6zM475.0 717.5h5.6v5.6h-5.6zM555.1 717.5h5.6v5.6h-5.6zM710.4 717.5h5.6v5.6h-5.6z"/>
<path fill="#ff5700" d="M700.3 448.4h5.6v5.6h-5.6zM720.4 448.4h5.6v5.6h-5.6zM625.2 453.4h15.6v5.6h-15.6zM700.3 453.4h5.6v5.6h-5.6zM505.1 478.3h5.6v5.6h-5.6zM575.2 488.3h5.6v5.6h-5.6zM620.2 488.3h5.6v5.6h-5.6zM575.2 493.3h5.6v5.6h-5.6zM605.2 493.3h10.6v5.6h-10.6zM645.3 493.3h5.6v5.6h-5.6zM670.3 493.3h5.6v5.6h-5.6zM680.3 493.3h5.6v5.6h-5.6zM605.2 513.2h5.6v5.6h-5.6zM615.2 513.2h5.6v5.6h-5.6zM630.2 513.2h5.6v5.6h-5.6zM655.3 513.2h5.6v5.6h-5.6zM500.1 518.2h5.6v5.6h-5.6zM625.2 518.2h5.6v5.6h-5.6zM760.4 518.2h10.6v5.6h-10.6zM500.1 523.2h5.6v5.6h-5.6zM630.2 523.2h5.6v5.6h-5.6zM670.3 553.1h5.6v5.6h-5.6zM665.3 558.1h5.6v5.6h-5.6zM505.1 652.7h10.6v5.6h-10.6zM600.2 667.7h5.6v5.6h-5.6zM620.2 667.7h10.6v5.6h-10.6zM620.2 672.7h5.6v5.6h-5.6zM615.2 682.6h5.6v5.6h-5.6zM620.2 692.6h10.6v5.6h-10.6zM585.2 697.6h5.6v5.6h-5.6zM625.2 697.6h5.6v5.6h-5.6zM635.2 697.6h5.6v5.6h-5.6zM555.1 702.6h5.6v5.6h-5.6zM565.1 702.6h5.6v5.6h-5.6zM610.2 702.6h5.6v5.6h-5.6zM630.2 702.6h5.6v5.6h-5.6zM700.3 702.6h5.6v5.6h-5.6zM520.1 707.6h5.6v5.6h-5.6zM560.1 707.6h5.6v5.6h-5.6zM545.1 712.5h5.6v5.6h-5.6zM555.1 712.5h10.6v5.6h-10.6zM630.2 712.5h5.6v5.6h-5.6zM550.1 717.5h5.6v5.6h-5.6z"/>
<path fill="#ff4800" d="M655.3 433.5h5.6v5.6h-5.6zM715.4 438.5h5.6v5.6h-5.6zM695.3 453.4h5.6v5.6h-5.6zM695.3 458.4h5.6v5.6h-5.6zM670.3 488.3h10.6v5.6h-10.6zM570.1 493.3h5.6v5.6h-5.6zM620.2 493.3h5.6v5.6h-5.6zM675.3 493.3h5.6v5.6h-5.6zM605.2 498.3h5.6v5.6h-5.6zM615.2 498.3h5.6v5.6h-5.6zM685.3 498.3h5.6v5.6h-5.6zM605.2 503.3h5.6v5.6h-5.6zM615.2 503.3h5.6v5.6h-5.6zM605.2 508.2h5.6v5.6h-5.6zM655.3 508.2h5.6v5.6h-5.6zM505.1 513.2h5.6v5.6h-5.6zM610.2 513.2h5.6v5.6h-5.6zM505.1 518.2h5.6v5.6h-5.6zM610.2 523.2h5.6v5.6h-5.6zM625.2 523.2h5.6v5.6h-5.6zM615.2 667.7h5.6v5.6h-5.6zM595.2 672.7h5.6v5.6h-5.6zM615.2 677.7h5.6v5.6h-5.6zM600.2 682.6h5.6v5.6h-5.6zM605.2 687.6h5.6v5.6h-5.6zM600.2 692.6h5.6v5.6h-5.6zM555.1 697.6h10.6v5.6h-10.6zM640.2 697.6h5.6v5.6h-5.6zM560.1 702.6h5.6v5.6h-5.6zM640.2 702.6h5.6v5.6h-5.6zM630.2 707.6h10.6v5.6h-10.6zM545.1 717.5h5.6v5.6h-5.6z"/>
<path fill="#ff3800" d="M615.2 508.2h5.6v5.6h-5.6zM630.2 518.2h5.6v5.6h-5.6zM595.2 677.7h5.6v5.6h-5.6zM565.1 692.6h5.6v5.6h-5.6zM575.2 692.6h5.6v5.6h-5.6zM565.1 697.6h5.6v5.6h-5.6zM575.2 697.6h10.6v5.6h-10.6zM700.3 697.6h5.6v5.6h-5.6zM515.1 712.5h5.6v5.6h-5.6z"/>
<path fill="#ff2900" d="M605.2 667.7h10.6v5.6h-10.6zM615.2 672.7h5.6v5.6h-5.6zM615.2 687.6h5.6v5.6h-5.6zM605.2 692.6h5.6v5.6h-5.6zM570.1 697.6h5.6v5.6h-5.6zM615.2 697.6h5.6v5.6h-5.6zM600.2 702.6h5.6v5.6h-5.6zM635.2 702.6h5.6v5.6h-5.6zM515.1 707.6h5.6v5.6h-5.6z"/>
<path fill="#ff1900" d="M610.2 498.3h5.6v5.6h-5.6zM610.2 503.3h5.6v5.6h-5.6zM610.2 508.2h5.6v5.6h-5.6zM605.2 682.6h5.6v5.6h-5.6zM610.2 687.6h5.6v5.6h-5.6zM570.1 692.6h5.6v5.6h-5.6zM615.2 692.6h5.6v5.6h-5.6zM605.2 702.6h5.6v5.6h-5.6z"/>
<path fill="#ff0900" d="M610.2 682.6h5.6v5.6h-5.6zM610.2 692.6h5.6v5.6h-5.6zM600.2 697.6h5.6v5.6h-5.6zM610.2 697.6h5.6v5.6h-5.6z"/>
<path fill="#ff0d0d" d="M600.2 672.7h5.6v5.6h-5.6zM600.2 677.7h5.6v5.6h-5.6z"/>
<path fill="#ff2d2d" d="M610.2 677.7h5.6v5.6h-5.6zM605.2 697.6h5.6v5.6h-5.6z"/>
<path fill="#ff4d4d" d="M610.2 672.7h5.6v5.6h-5.6z"/>
<path fill="#ff6060" d="M605.2 672.7h5.6v5.6h-5.6zM605.2 677.7h5.6v5.6h-5.6z"/>
</g></g>
<path d="M101 584L1160 584" stroke="#d8d0d0" stroke-width="3.2" fill="none"/>
<path d="M465 584L815.5 584" stroke="#d040d0" stroke-width="2.2" fill="none"/>
<path d="M1162 158L1162 963" stroke="#d8d0d0" stroke-width="3.2" fill="none"/>
<path d="M67.5 554.5L100 584L67.5 614.5Z" fill="#0a5a46" stroke="#d8d0d0" stroke-width="3" stroke-linejoin="round"/>
<path d="M1194 554L1161.5 584L1194 616Z" fill="#0a5a46" stroke="#d8b8b8" stroke-width="3" stroke-linejoin="round"/>
<rect x="1142" y="565.5" width="38" height="38" fill="none" stroke="#d8d0d0" stroke-width="3.2"/>
<path d="M1142 118V156.5H1182V118" fill="none" stroke="#dccaca" stroke-width="4"/>
<rect x="1148" y="124" width="28" height="26.5" fill="#0a4a5e" stroke="#009a48" stroke-width="6"/>
<path d="M1142 1003V966H1182V1003" fill="none" stroke="#dccaca" stroke-width="4"/>
<rect x="1148" y="972" width="28" height="26" fill="#0a4a5e" stroke="#009a48" stroke-width="6"/>
<rect x="1209.5" y="205" width="34" height="712" fill="url(#cb1)"/>
<text x="1273" y="227" font-family="Liberation Sans" font-size="48" fill="#d4eef0" textLength="148" lengthAdjust="spacingAndGlyphs">+25.00</text>
<text x="1388" y="581.5" font-family="Liberation Sans" font-size="48" fill="#d4eef0" textLength="63" lengthAdjust="spacingAndGlyphs">nm</text>
<text x="1259" y="934" font-family="Liberation Sans" font-size="48" fill="#d4eef0" textLength="148" lengthAdjust="spacingAndGlyphs">&#8722;25.00</text>
<rect x="1700" y="110" width="1963" height="935" fill="#005b78"/>
<path d="M1700 110H3663L3652 121H1711V1034L1700 1045Z" fill="#3a81a8"/>
<path d="M3663 1045H1700L1711 1034H3652V121L3663 110Z" fill="#003a52"/>
<rect x="1712" y="122" width="52" height="51" fill="#000"/>
<rect x="1723.5" y="134" width="29" height="29" fill="#fff"/>
<circle cx="1730.75" cy="141.25" r="3.4" fill="#000"/>
<circle cx="1745.25" cy="141.25" r="3.4" fill="#000"/>
<circle cx="1738" cy="148.5" r="3.4" fill="#000"/>
<circle cx="1730.75" cy="155.75" r="3.4" fill="#000"/>
<circle cx="1745.25" cy="155.75" r="3.4" fill="#000"/>
<rect x="1814" y="122" width="145" height="51" fill="#000"/>
<g transform="translate(1814,122)" fill="none" stroke="#fff" stroke-width="7" stroke-linejoin="round" stroke-linecap="round"><path d="M9 7.5H42V14L22.5 29H42V35.5H9V29.5L28.5 14H9Z" fill="#fff" stroke="none"/><path d="M48.5 10.5V25Q48.5 32 55 32H64M65.5 10.5V38.5Q65.5 45 58 45H52.5"/><path d="M94 32H82.5Q76 32 76 26V17Q76 11 82.5 11H94M94.3 10.5V38.5Q94.3 45 87 45H81.5"/><ellipse cx="115" cy="21.5" rx="10.2" ry="10.6"/></g>
<rect x="3598" y="122" width="52" height="51" fill="#000"/>
<g transform="translate(3598,122) scale(1)" fill="#fff"><path d="M22.5 3H29.5V29H3V22.5H22.5Z"/><path d="M34.5 19L48.5 48.5L31.5 32L18.5 33.5Z"/></g>
<text x="2478" y="165" font-family="Liberation Mono, monospace" font-size="46" fill="#d4eef0" textLength="389.664" lengthAdjust="spacingAndGlyphs">Oblique Plot</text>
<rect x="1711" y="176.5" width="1944" height="3.5" fill="#034a66"/>
<rect x="1711" y="180" width="1944" height="5" fill="#2a7698"/>
<rect x="1711" y="185" width="1944" height="851" fill="#000"/>
<g stroke-linejoin="round">
<g transform="translate(2170.0,501.0)"><path d="M0 -136l5 3 6 6 5 7 6 -3 5 -1 6 4 5 7 5 6 6 8 5 3 6 -3 5 1 6 3 5 1 5 -3 6 -5 5 -4 6 -9 5 -3 6 -2 5 3 6 -2 5 -3 5 0 6 3 5 1 6 6 5 9 6 8 5 4 5 1 6 1 5 -5 6 -4 5 -9 6 -19 5 -15 5 -3 6 13 5 11 6 0 5 -1 6 -1 5 -3 5 1 6 3 5 5 6 9 5 -1 6 -7 5 -4 5 1 6 1 5 -7 6 -5 5 -7 6 3 5 0 5 1 6 -3 5 3 6 4 5 -2 6 4 5 -2 6 0 5 5 5 1 6 -4 5 0 6 -2 5 4 6 3 5 6 5 1 6 -3 5 -2 6 2 5 -7 6 -2 5 -5 5 4 6 8 5 3 6 3 5 0 6 -3 5 0 5 -4 6 -6 5 -4 6 6 5 5 6 2 5 -4 5 -3 6 2 5 -4 6 -14 5 -10 6 -6 5 -8 6 -5 5 -1 5 8 6 10 5 9 6 4 5 0 6 -4 5 1 5 8 6 6 5 5 6 -2 5 -3 6 1 5 1 5 0 6 7 5 2 6 -2 5 0 6 3 5 4 5 1 6 -3 5 -3 6 -6 5 -7 6 -6 5 3 5 2 6 -7 5 -5 6 -2 5 -4 6 -1 5 0 6 -3 5 -5 5 2 6 5 5 13 6 10 5 2 6 -9 5 -8 5 0 6 2 5 -1 6 4 5 -2 6 4 5 7 5 8 6 2 5 4 6 3 5 0 6 -4 5 -2 5 -5 6 -13 5 0 6 2 5 1 6 11 5 7 5 6 6 1 5 -8 6 -4 5 4 6 5 5 -3 5 -5 6 -1 5 6 6 5 5 4 6 3 5 -1 6 3 5 0 5 -2 6 -3 5 1 6 1 5 -4 6 1 5 4 5 5 6 0 5 -5 6 -11 5 -3 6 0 5 -1V0H0Z" fill="#000"/><path d="M0 -136l5 3 6 6 5 7 6 -3 5 -1 6 4 5 7 5 6 6 8 5 3 6 -3 5 1 6 3 5 1 5 -3 6 -5 5 -4 6 -9 5 -3 6 -2 5 3 6 -2 5 -3 5 0 6 3 5 1 6 6 5 9 6 8 5 4 5 1 6 1 5 -5 6 -4 5 -9 6 -19 5 -15 5 -3 6 13 5 11 6 0 5 -1 6 -1 5 -3 5 1 6 3 5 5 6 9 5 -1 6 -7 5 -4 5 1 6 1 5 -7 6 -5 5 -7 6 3 5 0 5 1 6 -3 5 3 6 4 5 -2 6 4 5 -2 6 0 5 5 5 1 6 -4 5 0 6 -2 5 4 6 3 5 6 5 1 6 -3 5 -2 6 2 5 -7 6 -2 5 -5 5 4 6 8 5 3 6 3 5 0 6 -3 5 0 5 -4 6 -6 5 -4 6 6 5 5 6 2 5 -4 5 -3 6 2 5 -4 6 -14 5 -10 6 -6 5 -8 6 -5 5 -1 5 8 6 10 5 9 6 4 5 0 6 -4 5 1 5 8 6 6 5 5 6 -2 5 -3 6 1 5 1 5 0 6 7 5 2 6 -2 5 0 6 3 5 4 5 1 6 -3 5 -3 6 -6 5 -7 6 -6 5 3 5 2 6 -7 5 -5 6 -2 5 -4 6 -1 5 0 6 -3 5 -5 5 2 6 5 5 13 6 10 5 2 6 -9 5 -8 5 0 6 2 5 -1 6 4 5 -2 6 4 5 7 5 8 6 2 5 4 6 3 5 0 6 -4 5 -2 5 -5 6 -13 5 0 6 2 5 1 6 11 5 7 5 6 6 1 5 -8 6 -4 5 4 6 5 5 -3 5 -5 6 -1 5 6 6 5 5 4 6 3 5 -1 6 3 5 0 5 -2 6 -3 5 1 6 1 5 -4 6 1 5 4 5 5 6 0 5 -5 6 -11 5 -3 6 0 5 -1" fill="none" stroke="url(#zg)" stroke-width="3"/></g>
<g transform="translate(2163.7,509.0)"><path d="M0 -121l5 0 6 3 5 4 6 -2 5 -7 6 -1 5 10 5 12 6 12 5 4 6 -2 5 0 6 -9 5 -2 5 -4 6 -2 5 -2 6 -4 5 -4 6 -7 5 -4 6 1 5 -2 5 3 6 -3 5 5 6 0 5 4 6 5 5 -2 5 -5 6 -1 5 2 6 1 5 2 6 -5 5 -1 5 4 6 9 5 2 6 -8 5 -7 6 -5 5 -1 5 2 6 4 5 0 6 2 5 2 6 0 5 7 5 -2 6 -7 5 -6 6 -6 5 2 6 5 5 1 5 1 6 -3 5 -3 6 1 5 -1 6 4 5 2 6 5 5 -4 5 -4 6 -2 5 -2 6 2 5 -3 6 4 5 0 5 -1 6 -1 5 5 6 0 5 3 6 -1 5 0 5 1 6 3 5 -1 6 3 5 10 6 6 5 2 5 -2 6 -1 5 3 6 -2 5 -3 6 -7 5 -10 5 -12 6 -5 5 -9 6 -7 5 -3 6 -3 5 -4 6 -3 5 4 5 3 6 -2 5 2 6 7 5 0 6 1 5 1 5 7 6 3 5 -4 6 0 5 -1 6 4 5 -3 5 6 6 9 5 14 6 5 5 2 6 0 5 -7 5 -9 6 -5 5 -1 6 -4 5 -3 6 3 5 -5 5 -13 6 -11 5 -7 6 -6 5 -2 6 2 5 10 6 4 5 0 5 -7 6 3 5 11 6 12 5 0 6 1 5 -5 5 -2 6 -3 5 -4 6 -1 5 -3 6 4 5 10 5 10 6 1 5 4 6 6 5 0 6 -3 5 4 5 -2 6 -6 5 -5 6 -5 5 3 6 3 5 2 5 -5 6 -1 5 -4 6 4 5 1 6 5 5 -1 5 0 6 7 5 4 6 4 5 3 6 4 5 -4 6 4 5 8 5 10 6 9 5 7 6 0 5 -4 6 -4 5 -2 5 -8 6 -5 5 -1 6 -3 5 -4 6 -1 5 4V0H0Z" fill="#000"/><path d="M0 -121l5 0 6 3 5 4 6 -2 5 -7 6 -1 5 10 5 12 6 12 5 4 6 -2 5 0 6 -9 5 -2 5 -4 6 -2 5 -2 6 -4 5 -4 6 -7 5 -4 6 1 5 -2 5 3 6 -3 5 5 6 0 5 4 6 5 5 -2 5 -5 6 -1 5 2 6 1 5 2 6 -5 5 -1 5 4 6 9 5 2 6 -8 5 -7 6 -5 5 -1 5 2 6 4 5 0 6 2 5 2 6 0 5 7 5 -2 6 -7 5 -6 6 -6 5 2 6 5 5 1 5 1 6 -3 5 -3 6 1 5 -1 6 4 5 2 6 5 5 -4 5 -4 6 -2 5 -2 6 2 5 -3 6 4 5 0 5 -1 6 -1 5 5 6 0 5 3 6 -1 5 0 5 1 6 3 5 -1 6 3 5 10 6 6 5 2 5 -2 6 -1 5 3 6 -2 5 -3 6 -7 5 -10 5 -12 6 -5 5 -9 6 -7 5 -3 6 -3 5 -4 6 -3 5 4 5 3 6 -2 5 2 6 7 5 0 6 1 5 1 5 7 6 3 5 -4 6 0 5 -1 6 4 5 -3 5 6 6 9 5 14 6 5 5 2 6 0 5 -7 5 -9 6 -5 5 -1 6 -4 5 -3 6 3 5 -5 5 -13 6 -11 5 -7 6 -6 5 -2 6 2 5 10 6 4 5 0 5 -7 6 3 5 11 6 12 5 0 6 1 5 -5 5 -2 6 -3 5 -4 6 -1 5 -3 6 4 5 10 5 10 6 1 5 4 6 6 5 0 6 -3 5 4 5 -2 6 -6 5 -5 6 -5 5 3 6 3 5 2 5 -5 6 -1 5 -4 6 4 5 1 6 5 5 -1 5 0 6 7 5 4 6 4 5 3 6 4 5 -4 6 4 5 8 5 10 6 9 5 7 6 0 5 -4 6 -4 5 -2 5 -8 6 -5 5 -1 6 -3 5 -4 6 -1 5 4" fill="none" stroke="url(#zg)" stroke-width="3"/></g>
<g transform="translate(2157.5,517.1)"><path d="M0 -101l5 -2 6 -4 5 6 6 5 5 -1 6 -4 5 4 5 9 6 7 5 0 6 -5 5 -9 6 -8 5 -8 5 -10 6 -1 5 0 6 1 5 -5 6 -5 5 -2 6 4 5 2 5 -2 6 -6 5 -2 6 1 5 2 6 6 5 0 5 0 6 2 5 1 6 6 5 3 6 2 5 0 5 0 6 -1 5 -2 6 1 5 -2 6 3 5 4 5 -4 6 1 5 2 6 0 5 -6 6 -2 5 3 5 2 6 2 5 -3 6 -6 5 2 6 1 5 0 5 -4 6 -12 5 -7 6 8 5 2 6 3 5 3 6 1 5 -2 5 -5 6 0 5 10 6 6 5 2 6 -2 5 -6 5 -6 6 -7 5 -5 6 0 5 0 6 1 5 -3 5 2 6 2 5 9 6 8 5 3 6 7 5 11 5 1 6 2 5 6 6 -3 5 -1 6 -8 5 -14 5 -10 6 -10 5 -10 6 -1 5 -3 6 5 5 -2 6 -5 5 -7 5 -3 6 3 5 0 6 6 5 2 6 -3 5 1 5 0 6 -4 5 1 6 4 5 7 6 1 5 -5 5 3 6 11 5 9 6 1 5 -5 6 0 5 -2 5 -4 6 -7 5 0 6 2 5 -4 6 -8 5 -12 5 -7 6 -3 5 -3 6 -5 5 -3 6 4 5 10 6 4 5 0 5 3 6 6 5 6 6 -2 5 -5 6 4 5 6 5 3 6 -1 5 0 6 6 5 3 6 7 5 5 5 1 6 -1 5 -4 6 -6 5 3 6 -4 5 -2 5 1 6 -1 5 -6 6 -2 5 -2 6 2 5 4 5 -5 6 -6 5 -1 6 -2 5 4 6 13 5 11 5 4 6 3 5 7 6 1 5 -4 6 -7 5 4 6 5 5 11 5 10 6 8 5 7 6 7 5 9 6 -2 5 -9 5 -12 6 -15 5 1 6 -1 5 2 6 4 5 9V0H0Z" fill="#000"/><path d="M0 -101l5 -2 6 -4 5 6 6 5 5 -1 6 -4 5 4 5 9 6 7 5 0 6 -5 5 -9 6 -8 5 -8 5 -10 6 -1 5 0 6 1 5 -5 6 -5 5 -2 6 4 5 2 5 -2 6 -6 5 -2 6 1 5 2 6 6 5 0 5 0 6 2 5 1 6 6 5 3 6 2 5 0 5 0 6 -1 5 -2 6 1 5 -2 6 3 5 4 5 -4 6 1 5 2 6 0 5 -6 6 -2 5 3 5 2 6 2 5 -3 6 -6 5 2 6 1 5 0 5 -4 6 -12 5 -7 6 8 5 2 6 3 5 3 6 1 5 -2 5 -5 6 0 5 10 6 6 5 2 6 -2 5 -6 5 -6 6 -7 5 -5 6 0 5 0 6 1 5 -3 5 2 6 2 5 9 6 8 5 3 6 7 5 11 5 1 6 2 5 6 6 -3 5 -1 6 -8 5 -14 5 -10 6 -10 5 -10 6 -1 5 -3 6 5 5 -2 6 -5 5 -7 5 -3 6 3 5 0 6 6 5 2 6 -3 5 1 5 0 6 -4 5 1 6 4 5 7 6 1 5 -5 5 3 6 11 5 9 6 1 5 -5 6 0 5 -2 5 -4 6 -7 5 0 6 2 5 -4 6 -8 5 -12 5 -7 6 -3 5 -3 6 -5 5 -3 6 4 5 10 6 4 5 0 5 3 6 6 5 6 6 -2 5 -5 6 4 5 6 5 3 6 -1 5 0 6 6 5 3 6 7 5 5 5 1 6 -1 5 -4 6 -6 5 3 6 -4 5 -2 5 1 6 -1 5 -6 6 -2 5 -2 6 2 5 4 5 -5 6 -6 5 -1 6 -2 5 4 6 13 5 11 5 4 6 3 5 7 6 1 5 -4 6 -7 5 4 6 5 5 11 5 10 6 8 5 7 6 7 5 9 6 -2 5 -9 5 -12 6 -15 5 1 6 -1 5 2 6 4 5 9" fill="none" stroke="url(#zg)" stroke-width="3"/></g>
<g transform="translate(2151.2,525.1)"><path d="M0 -111l5 6 6 0 5 1 6 8 5 -3 6 -7 5 -2 5 3 6 4 5 -6 6 -10 5 -9 6 -2 5 -2 5 -1 6 3 5 2 6 -3 5 -1 6 4 5 3 6 -2 5 -5 5 -8 6 -6 5 0 6 -1 5 3 6 3 5 7 5 1 6 2 5 3 6 9 5 4 6 4 5 0 5 -1 6 -2 5 -2 6 -5 5 -2 6 -4 5 0 5 1 6 2 5 5 6 6 5 4 6 -4 5 1 5 3 6 4 5 -2 6 1 5 -3 6 -8 5 -2 5 -8 6 -9 5 -10 6 4 5 4 6 1 5 -3 6 0 5 1 5 6 6 0 5 3 6 3 5 4 6 -3 5 -1 5 -4 6 -1 5 -5 6 3 5 -1 6 3 5 -3 5 -9 6 -5 5 6 6 11 5 9 6 7 5 4 5 10 6 5 5 -1 6 -7 5 -11 6 -11 5 -8 5 0 6 0 5 4 6 3 5 6 6 1 5 -1 6 -7 5 -8 5 -3 6 -5 5 -2 6 0 5 -2 6 0 5 2 5 4 6 3 5 3 6 3 5 0 6 0 5 -2 5 0 6 -5 5 -5 6 -5 5 -8 6 0 5 3 5 2 6 -5 5 0 6 -4 5 -6 6 -3 5 -4 5 -2 6 2 5 5 6 0 5 -4 6 0 5 5 6 8 5 4 5 14 6 13 5 -2 6 -11 5 0 6 0 5 -2 5 -1 6 -4 5 3 6 8 5 1 6 7 5 2 5 -1 6 -1 5 1 6 0 5 3 6 -4 5 -5 5 -5 6 0 5 3 6 3 5 -6 6 -12 5 -10 5 -4 6 5 5 8 6 3 5 -2 6 1 5 1 5 2 6 2 5 2 6 4 5 -3 6 6 5 11 6 8 5 3 5 3 6 -2 5 5 6 9 5 9 6 -2 5 -5 5 -8 6 -13 5 -2 6 5 5 6 6 5 5 1V0H0Z" fill="#000"/><path d="M0 -111l5 6 6 0 5 1 6 8 5 -3 6 -7 5 -2 5 3 6 4 5 -6 6 -10 5 -9 6 -2 5 -2 5 -1 6 3 5 2 6 -3 5 -1 6 4 5 3 6 -2 5 -5 5 -8 6 -6 5 0 6 -1 5 3 6 3 5 7 5 1 6 2 5 3 6 9 5 4 6 4 5 0 5 -1 6 -2 5 -2 6 -5 5 -2 6 -4 5 0 5 1 6 2 5 5 6 6 5 4 6 -4 5 1 5 3 6 4 5 -2 6 1 5 -3 6 -8 5 -2 5 -8 6 -9 5 -10 6 4 5 4 6 1 5 -3 6 0 5 1 5 6 6 0 5 3 6 3 5 4 6 -3 5 -1 5 -4 6 -1 5 -5 6 3 5 -1 6 3 5 -3 5 -9 6 -5 5 6 6 11 5 9 6 7 5 4 5 10 6 5 5 -1 6 -7 5 -11 6 -11 5 -8 5 0 6 0 5 4 6 3 5 6 6 1 5 -1 6 -7 5 -8 5 -3 6 -5 5 -2 6 0 5 -2 6 0 5 2 5 4 6 3 5 3 6 3 5 0 6 0 5 -2 5 0 6 -5 5 -5 6 -5 5 -8 6 0 5 3 5 2 6 -5 5 0 6 -4 5 -6 6 -3 5 -4 5 -2 6 2 5 5 6 0 5 -4 6 0 5 5 6 8 5 4 5 14 6 13 5 -2 6 -11 5 0 6 0 5 -2 5 -1 6 -4 5 3 6 8 5 1 6 7 5 2 5 -1 6 -1 5 1 6 0 5 3 6 -4 5 -5 5 -5 6 0 5 3 6 3 5 -6 6 -12 5 -10 5 -4 6 5 5 8 6 3 5 -2 6 1 5 1 5 2 6 2 5 2 6 4 5 -3 6 6 5 11 6 8 5 3 5 3 6 -2 5 5 6 9 5 9 6 -2 5 -5 5 -8 6 -13 5 -2 6 5 5 6 6 5 5 1" fill="none" stroke="url(#zg)" stroke-width="3"/></g>
<g transform="translate(2145.0,533.2)"><path d="M0 -135l5 13 6 6 5 3 6 -7 5 -3 6 0 5 4 5 2 6 0 5 0 6 7 5 -3 6 -8 5 2 5 3 6 3 5 4 6 4 5 0 6 -3 5 -2 6 -2 5 -6 5 -6 6 -5 5 -6 6 -5 5 5 6 3 5 6 5 2 6 2 5 0 6 2 5 -2 6 -5 5 3 5 9 6 1 5 -2 6 -4 5 -3 6 -7 5 -5 5 2 6 8 5 8 6 4 5 1 6 10 5 2 5 -3 6 -7 5 0 6 0 5 -4 6 -11 5 -9 5 -8 6 -4 5 -4 6 6 5 1 6 4 5 0 6 3 5 1 5 -5 6 -4 5 -2 6 8 5 10 6 -1 5 -3 5 -2 6 7 5 8 6 3 5 -2 6 -3 5 -6 5 0 6 -3 5 -5 6 2 5 4 6 3 5 0 5 3 6 3 5 -4 6 2 5 1 6 0 5 -7 5 -8 6 0 5 6 6 6 5 8 6 2 5 1 6 -2 5 -4 5 -4 6 -2 5 -5 6 -4 5 -2 6 -3 5 1 5 1 6 -3 5 2 6 4 5 1 6 3 5 4 5 -3 6 -3 5 -6 6 -1 5 -4 6 -3 5 2 5 2 6 -7 5 0 6 -2 5 2 6 -2 5 -5 5 -7 6 -3 5 -4 6 6 5 1 6 6 5 1 6 9 5 13 5 12 6 3 5 -10 6 -13 5 1 6 8 5 3 5 -5 6 -10 5 -1 6 4 5 -1 6 -1 5 6 5 7 6 6 5 1 6 -1 5 4 6 8 5 -2 5 -5 6 -6 5 -4 6 -2 5 -11 6 -17 5 -13 5 -2 6 2 5 6 6 7 5 3 6 0 5 -3 5 -3 6 -2 5 1 6 -2 5 5 6 12 5 9 6 10 5 1 5 10 6 5 5 3 6 11 5 4 6 1 5 -1 5 -2 6 -13 5 -15 6 -10 5 0 6 -1 5 3V0H0Z" fill="#000"/><path d="M0 -135l5 13 6 6 5 3 6 -7 5 -3 6 0 5 4 5 2 6 0 5 0 6 7 5 -3 6 -8 5 2 5 3 6 3 5 4 6 4 5 0 6 -3 5 -2 6 -2 5 -6 5 -6 6 -5 5 -6 6 -5 5 5 6 3 5 6 5 2 6 2 5 0 6 2 5 -2 6 -5 5 3 5 9 6 1 5 -2 6 -4 5 -3 6 -7 5 -5 5 2 6 8 5 8 6 4 5 1 6 10 5 2 5 -3 6 -7 5 0 6 0 5 -4 6 -11 5 -9 5 -8 6 -4 5 -4 6 6 5 1 6 4 5 0 6 3 5 1 5 -5 6 -4 5 -2 6 8 5 10 6 -1 5 -3 5 -2 6 7 5 8 6 3 5 -2 6 -3 5 -6 5 0 6 -3 5 -5 6 2 5 4 6 3 5 0 5 3 6 3 5 -4 6 2 5 1 6 0 5 -7 5 -8 6 0 5 6 6 6 5 8 6 2 5 1 6 -2 5 -4 5 -4 6 -2 5 -5 6 -4 5 -2 6 -3 5 1 5 1 6 -3 5 2 6 4 5 1 6 3 5 4 5 -3 6 -3 5 -6 6 -1 5 -4 6 -3 5 2 5 2 6 -7 5 0 6 -2 5 2 6 -2 5 -5 5 -7 6 -3 5 -4 6 6 5 1 6 6 5 1 6 9 5 13 5 12 6 3 5 -10 6 -13 5 1 6 8 5 3 5 -5 6 -10 5 -1 6 4 5 -1 6 -1 5 6 5 7 6 6 5 1 6 -1 5 4 6 8 5 -2 5 -5 6 -6 5 -4 6 -2 5 -11 6 -17 5 -13 5 -2 6 2 5 6 6 7 5 3 6 0 5 -3 5 -3 6 -2 5 1 6 -2 5 5 6 12 5 9 6 10 5 1 5 10 6 5 5 3 6 11 5 4 6 1 5 -1 5 -2 6 -13 5 -15 6 -10 5 0 6 -1 5 3" fill="none" stroke="url(#zg)" stroke-width="3"/></g>
<g transform="translate(2138.7,541.2)"><path d="M0 -141l5 0 6 9 5 4 6 7 5 4 6 -1 5 4 5 -1 6 4 5 4 6 4 5 -5 6 -5 5 2 5 1 6 0 5 -2 6 0 5 -3 6 1 5 -1 6 0 5 -3 5 1 6 1 5 -3 6 -5 5 -2 6 1 5 3 5 4 6 2 5 -3 6 -4 5 -2 6 -6 5 1 5 6 6 -4 5 -8 6 -8 5 2 6 -3 5 5 5 0 6 7 5 10 6 5 5 3 6 7 5 1 5 -6 6 -4 5 -2 6 -3 5 -1 6 -4 5 -4 5 -6 6 -4 5 -7 6 6 5 0 6 -1 5 -5 6 1 5 2 5 -1 6 -3 5 2 6 7 5 15 6 7 5 -4 5 -6 6 2 5 2 6 6 5 -3 6 -1 5 -4 5 -2 6 -3 5 -2 6 1 5 3 6 -9 5 -9 5 -9 6 -2 5 5 6 13 5 9 6 3 5 -6 5 0 6 6 5 -5 6 -2 5 -1 6 1 5 0 6 -6 5 -4 5 2 6 1 5 -4 6 3 5 4 6 6 5 -4 5 -6 6 4 5 6 6 0 5 -5 6 -6 5 1 5 7 6 5 5 8 6 -6 5 -10 6 -6 5 -1 5 -1 6 -5 5 3 6 6 5 3 6 -6 5 -3 5 -5 6 -3 5 0 6 -2 5 1 6 7 5 9 6 14 5 10 5 8 6 -3 5 -9 6 -9 5 -5 6 0 5 3 5 1 6 2 5 2 6 -1 5 -7 6 3 5 5 5 8 6 5 5 -12 6 -11 5 -3 6 9 5 6 5 0 6 3 5 5 6 3 5 -10 6 -15 5 -3 5 -7 6 -7 5 -5 6 4 5 4 6 3 5 2 5 -3 6 1 5 2 6 4 5 4 6 5 5 1 6 5 5 7 5 6 6 3 5 5 6 5 5 0 6 -2 5 -5 5 0 6 0 5 -4 6 -11 5 -7 6 -1 5 0V0H0Z" fill="#000"/><path d="M0 -141l5 0 6 9 5 4 6 7 5 4 6 -1 5 4 5 -1 6 4 5 4 6 4 5 -5 6 -5 5 2 5 1 6 0 5 -2 6 0 5 -3 6 1 5 -1 6 0 5 -3 5 1 6 1 5 -3 6 -5 5 -2 6 1 5 3 5 4 6 2 5 -3 6 -4 5 -2 6 -6 5 1 5 6 6 -4 5 -8 6 -8 5 2 6 -3 5 5 5 0 6 7 5 10 6 5 5 3 6 7 5 1 5 -6 6 -4 5 -2 6 -3 5 -1 6 -4 5 -4 5 -6 6 -4 5 -7 6 6 5 0 6 -1 5 -5 6 1 5 2 5 -1 6 -3 5 2 6 7 5 15 6 7 5 -4 5 -6 6 2 5 2 6 6 5 -3 6 -1 5 -4 5 -2 6 -3 5 -2 6 1 5 3 6 -9 5 -9 5 -9 6 -2 5 5 6 13 5 9 6 3 5 -6 5 0 6 6 5 -5 6 -2 5 -1 6 1 5 0 6 -6 5 -4 5 2 6 1 5 -4 6 3 5 4 6 6 5 -4 5 -6 6 4 5 6 6 0 5 -5 6 -6 5 1 5 7 6 5 5 8 6 -6 5 -10 6 -6 5 -1 5 -1 6 -5 5 3 6 6 5 3 6 -6 5 -3 5 -5 6 -3 5 0 6 -2 5 1 6 7 5 9 6 14 5 10 5 8 6 -3 5 -9 6 -9 5 -5 6 0 5 3 5 1 6 2 5 2 6 -1 5 -7 6 3 5 5 5 8 6 5 5 -12 6 -11 5 -3 6 9 5 6 5 0 6 3 5 5 6 3 5 -10 6 -15 5 -3 5 -7 6 -7 5 -5 6 4 5 4 6 3 5 2 5 -3 6 1 5 2 6 4 5 4 6 5 5 1 6 5 5 7 5 6 6 3 5 5 6 5 5 0 6 -2 5 -5 5 0 6 0 5 -4 6 -11 5 -7 6 -1 5 0" fill="none" stroke="url(#zg)" stroke-width="3"/></g>
<g transform="translate(2132.5,549.3)"><path d="M0 -120l5 -10 6 -4 5 3 6 6 5 8 6 7 5 1 5 -1 6 -1 5 3 6 -3 5 -8 6 -1 5 -2 5 -1 6 -1 5 7 6 2 5 -2 6 -5 5 -5 6 -3 5 -1 5 3 6 6 5 6 6 1 5 1 6 -1 5 -4 5 -2 6 2 5 -2 6 6 5 5 6 8 5 1 5 -9 6 -6 5 -8 6 -3 5 -1 6 -2 5 -3 5 -4 6 0 5 5 6 -1 5 2 6 -1 5 2 5 0 6 0 5 5 6 0 5 -6 6 -15 5 -5 5 5 6 1 5 4 6 0 5 -1 6 -3 5 -5 6 1 5 -12 5 -3 6 4 5 4 6 -1 5 11 6 11 5 11 5 -2 6 -3 5 -2 6 2 5 8 6 5 5 -6 5 -12 6 -3 5 9 6 8 5 -1 6 -2 5 -9 5 -9 6 -11 5 3 6 2 5 3 6 3 5 0 5 1 6 8 5 -3 6 -6 5 -5 6 4 5 5 6 -5 5 0 5 -2 6 -3 5 -5 6 5 5 8 6 -1 5 -2 5 -3 6 1 5 6 6 7 5 2 6 -5 5 -4 5 2 6 8 5 0 6 -5 5 -6 6 -5 5 -2 5 2 6 1 5 -5 6 -2 5 3 6 7 5 1 5 1 6 3 5 0 6 -2 5 0 6 6 5 8 6 10 5 8 5 4 6 2 5 -5 6 2 5 -3 6 -6 5 -6 5 -4 6 -1 5 5 6 0 5 0 6 1 5 4 5 1 6 -6 5 -11 6 -7 5 -7 6 4 5 7 5 5 6 0 5 0 6 -4 5 -6 6 0 5 0 5 -2 6 -11 5 -2 6 -1 5 5 6 10 5 1 5 2 6 4 5 2 6 2 5 1 6 -1 5 0 6 -2 5 1 5 -3 6 8 5 12 6 8 5 -8 6 -10 5 -3 5 3 6 4 5 -4 6 -3 5 1 6 5 5 2V0H0Z" fill="#000"/><path d="M0 -120l5 -10 6 -4 5 3 6 6 5 8 6 7 5 1 5 -1 6 -1 5 3 6 -3 5 -8 6 -1 5 -2 5 -1 6 -1 5 7 6 2 5 -2 6 -5 5 -5 6 -3 5 -1 5 3 6 6 5 6 6 1 5 1 6 -1 5 -4 5 -2 6 2 5 -2 6 6 5 5 6 8 5 1 5 -9 6 -6 5 -8 6 -3 5 -1 6 -2 5 -3 5 -4 6 0 5 5 6 -1 5 2 6 -1 5 2 5 0 6 0 5 5 6 0 5 -6 6 -15 5 -5 5 5 6 1 5 4 6 0 5 -1 6 -3 5 -5 6 1 5 -12 5 -3 6 4 5 4 6 -1 5 11 6 11 5 11 5 -2 6 -3 5 -2 6 2 5 8 6 5 5 -6 5 -12 6 -3 5 9 6 8 5 -1 6 -2 5 -9 5 -9 6 -11 5 3 6 2 5 3 6 3 5 0 5 1 6 8 5 -3 6 -6 5 -5 6 4 5 5 6 -5 5 0 5 -2 6 -3 5 -5 6 5 5 8 6 -1 5 -2 5 -3 6 1 5 6 6 7 5 2 6 -5 5 -4 5 2 6 8 5 0 6 -5 5 -6 6 -5 5 -2 5 2 6 1 5 -5 6 -2 5 3 6 7 5 1 5 1 6 3 5 0 6 -2 5 0 6 6 5 8 6 10 5 8 5 4 6 2 5 -5 6 2 5 -3 6 -6 5 -6 5 -4 6 -1 5 5 6 0 5 0 6 1 5 4 5 1 6 -6 5 -11 6 -7 5 -7 6 4 5 7 5 5 6 0 5 0 6 -4 5 -6 6 0 5 0 5 -2 6 -11 5 -2 6 -1 5 5 6 10 5 1 5 2 6 4 5 2 6 2 5 1 6 -1 5 0 6 -2 5 1 5 -3 6 8 5 12 6 8 5 -8 6 -10 5 -3 5 3 6 4 5 -4 6 -3 5 1 6 5 5 2" fill="none" stroke="url(#zg)" stroke-width="3"/></g>
<g transform="translate(2126.2,557.3)"><path d="M0 -113l5 -11 6 -1 5 8 6 3 5 -2 6 0 5 0 5 -5 6 -2 5 1 6 0 5 -2 6 -2 5 4 5 6 6 8 5 4 6 3 5 5 6 3 5 -6 6 -11 5 -11 5 -9 6 -10 5 -4 6 0 5 1 6 -3 5 1 5 8 6 8 5 1 6 8 5 3 6 -4 5 -2 5 -4 6 -2 5 3 6 5 5 0 6 -1 5 -5 5 -4 6 0 5 0 6 -2 5 -2 6 0 5 2 5 1 6 1 5 -1 6 5 5 -6 6 -6 5 -10 5 -1 6 7 5 6 6 -2 5 -7 6 -3 5 0 6 2 5 -2 5 -7 6 -2 5 5 6 -4 5 7 6 5 5 5 5 5 6 5 5 3 6 6 5 16 6 4 5 -3 5 -10 6 -7 5 3 6 4 5 3 6 -1 5 -1 5 -10 6 -11 5 -7 6 3 5 7 6 10 5 2 5 -3 6 -6 5 -4 6 -3 5 -2 6 -3 5 4 6 6 5 -1 5 -1 6 -6 5 -12 6 -1 5 4 6 1 5 -2 5 5 6 4 5 10 6 12 5 4 6 -3 5 -4 5 5 6 -2 5 -1 6 0 5 -2 6 -9 5 -6 5 6 6 3 5 -3 6 -2 5 2 6 5 5 4 5 0 6 -2 5 4 6 2 5 0 6 2 5 2 6 4 5 5 5 5 6 0 5 -3 6 2 5 1 6 2 5 2 5 8 6 6 5 1 6 -4 5 -4 6 -4 5 -1 5 -10 6 -12 5 -7 6 -8 5 -3 6 3 5 8 5 3 6 -3 5 -5 6 -4 5 -1 6 -2 5 1 5 -7 6 -3 5 -2 6 -3 5 4 6 3 5 -2 5 -1 6 5 5 5 6 3 5 5 6 3 5 -2 6 -2 5 -7 5 2 6 7 5 8 6 0 5 -8 6 -11 5 -1 5 -1 6 2 5 3 6 9 5 7 6 9 5 0V0H0Z" fill="#000"/><path d="M0 -113l5 -11 6 -1 5 8 6 3 5 -2 6 0 5 0 5 -5 6 -2 5 1 6 0 5 -2 6 -2 5 4 5 6 6 8 5 4 6 3 5 5 6 3 5 -6 6 -11 5 -11 5 -9 6 -10 5 -4 6 0 5 1 6 -3 5 1 5 8 6 8 5 1 6 8 5 3 6 -4 5 -2 5 -4 6 -2 5 3 6 5 5 0 6 -1 5 -5 5 -4 6 0 5 0 6 -2 5 -2 6 0 5 2 5 1 6 1 5 -1 6 5 5 -6 6 -6 5 -10 5 -1 6 7 5 6 6 -2 5 -7 6 -3 5 0 6 2 5 -2 5 -7 6 -2 5 5 6 -4 5 7 6 5 5 5 5 5 6 5 5 3 6 6 5 16 6 4 5 -3 5 -10 6 -7 5 3 6 4 5 3 6 -1 5 -1 5 -10 6 -11 5 -7 6 3 5 7 6 10 5 2 5 -3 6 -6 5 -4 6 -3 5 -2 6 -3 5 4 6 6 5 -1 5 -1 6 -6 5 -12 6 -1 5 4 6 1 5 -2 5 5 6 4 5 10 6 12 5 4 6 -3 5 -4 5 5 6 -2 5 -1 6 0 5 -2 6 -9 5 -6 5 6 6 3 5 -3 6 -2 5 2 6 5 5 4 5 0 6 -2 5 4 6 2 5 0 6 2 5 2 6 4 5 5 5 5 6 0 5 -3 6 2 5 1 6 2 5 2 5 8 6 6 5 1 6 -4 5 -4 6 -4 5 -1 5 -10 6 -12 5 -7 6 -8 5 -3 6 3 5 8 5 3 6 -3 5 -5 6 -4 5 -1 6 -2 5 1 5 -7 6 -3 5 -2 6 -3 5 4 6 3 5 -2 5 -1 6 5 5 5 6 3 5 5 6 3 5 -2 6 -2 5 -7 5 2 6 7 5 8 6 0 5 -8 6 -11 5 -1 5 -1 6 2 5 3 6 9 5 7 6 9 5 0" fill="none" stroke="url(#zg)" stroke-width="3"/></g>
<g transform="translate(2120.0,565.3)"><path d="M0 -110l5 -8 6 -2 5 3 6 -7 5 -3 6 -4 5 -2 5 -5 6 0 5 7 6 3 5 5 6 6 5 4 5 8 6 7 5 6 6 3 5 2 6 -6 5 -9 6 -8 5 -6 5 -10 6 -5 5 -5 6 -10 5 -4 6 -7 5 0 5 3 6 6 5 9 6 2 5 1 6 -1 5 1 5 3 6 0 5 3 6 5 5 1 6 -9 5 -4 5 -4 6 6 5 8 6 5 5 7 6 5 5 -3 5 -6 6 -5 5 -3 6 2 5 -1 6 -6 5 -6 5 4 6 2 5 -5 6 -10 5 -7 6 3 5 7 6 3 5 7 5 1 6 1 5 -3 6 3 5 2 6 0 5 4 5 3 6 6 5 8 6 8 5 8 6 1 5 -11 5 -18 6 -12 5 0 6 7 5 3 6 3 5 -3 5 -6 6 -5 5 -6 6 5 5 4 6 6 5 0 5 4 6 -3 5 -6 6 -3 5 -3 6 2 5 -3 6 -1 5 -1 5 5 6 3 5 -1 6 -7 5 -6 6 -1 5 2 5 8 6 10 5 9 6 6 5 3 6 -1 5 7 5 3 6 -8 5 -2 6 2 5 1 6 -4 5 -2 5 -2 6 -1 5 -3 6 -2 5 -2 6 3 5 7 5 4 6 5 5 2 6 4 5 5 6 1 5 -4 6 -4 5 0 5 -3 6 -2 5 -5 6 3 5 6 6 1 5 6 5 6 6 12 5 8 6 -5 5 -4 6 -5 5 -1 5 -5 6 -7 5 -11 6 -5 5 -3 6 -3 5 6 5 9 6 -2 5 -4 6 -7 5 -1 6 -2 5 -2 5 -4 6 -2 5 -2 6 -5 5 -6 6 -4 5 -8 5 -1 6 6 5 4 6 7 5 6 6 11 5 3 6 -1 5 0 5 -3 6 -4 5 -1 6 -5 5 -6 6 -4 5 -2 5 -2 6 -2 5 6 6 12 5 8 6 7 5 1V0H0Z" fill="#000"/><path d="M0 -110l5 -8 6 -2 5 3 6 -7 5 -3 6 -4 5 -2 5 -5 6 0 5 7 6 3 5 5 6 6 5 4 5 8 6 7 5 6 6 3 5 2 6 -6 5 -9 6 -8 5 -6 5 -10 6 -5 5 -5 6 -10 5 -4 6 -7 5 0 5 3 6 6 5 9 6 2 5 1 6 -1 5 1 5 3 6 0 5 3 6 5 5 1 6 -9 5 -4 5 -4 6 6 5 8 6 5 5 7 6 5 5 -3 5 -6 6 -5 5 -3 6 2 5 -1 6 -6 5 -6 5 4 6 2 5 -5 6 -10 5 -7 6 3 5 7 6 3 5 7 5 1 6 1 5 -3 6 3 5 2 6 0 5 4 5 3 6 6 5 8 6 8 5 8 6 1 5 -11 5 -18 6 -12 5 0 6 7 5 3 6 3 5 -3 5 -6 6 -5 5 -6 6 5 5 4 6 6 5 0 5 4 6 -3 5 -6 6 -3 5 -3 6 2 5 -3 6 -1 5 -1 5 5 6 3 5 -1 6 -7 5 -6 6 -1 5 2 5 8 6 10 5 9 6 6 5 3 6 -1 5 7 5 3 6 -8 5 -2 6 2 5 1 6 -4 5 -2 5 -2 6 -1 5 -3 6 -2 5 -2 6 3 5 7 5 4 6 5 5 2 6 4 5 5 6 1 5 -4 6 -4 5 0 5 -3 6 -2 5 -5 6 3 5 6 6 1 5 6 5 6 6 12 5 8 6 -5 5 -4 6 -5 5 -1 5 -5 6 -7 5 -11 6 -5 5 -3 6 -3 5 6 5 9 6 -2 5 -4 6 -7 5 -1 6 -2 5 -2 5 -4 6 -2 5 -2 6 -5 5 -6 6 -4 5 -8 5 -1 6 6 5 4 6 7 5 6 6 11 5 3 6 -1 5 0 5 -3 6 -4 5 -1 6 -5 5 -6 6 -4 5 -2 5 -2 6 -2 5 6 6 12 5 8 6 7 5 1" fill="none" stroke="url(#zg)" stroke-width="3"/></g>
<g transform="translate(2113.7,573.4)"><path d="M0 -120l5 4 6 2 5 -3 6 -3 5 -2 6 -1 5 -6 5 -8 6 -11 5 5 6 8 5 6 6 7 5 9 5 11 6 10 5 6 6 1 5 -8 6 -7 5 -6 6 -7 5 -5 5 0 6 2 5 -3 6 -4 5 -12 6 -13 5 -1 5 1 6 5 5 3 6 6 5 2 6 0 5 0 5 2 6 3 5 7 6 2 5 3 6 -6 5 -8 5 -9 6 -5 5 4 6 13 5 7 6 3 5 -1 5 -3 6 -4 5 -1 6 -1 5 -9 6 -5 5 -2 5 4 6 1 5 -10 6 -5 5 4 6 10 5 6 6 0 5 1 5 5 6 -2 5 -7 6 -9 5 -3 6 3 5 5 5 6 6 4 5 6 6 8 5 7 6 -3 5 -8 5 -5 6 -11 5 -8 6 -3 5 3 6 3 5 -6 5 -4 6 -4 5 9 6 8 5 -1 6 1 5 1 5 3 6 0 5 -2 6 -3 5 -1 6 -2 5 -4 6 -4 5 -1 5 6 6 6 5 6 6 -2 5 3 6 2 5 0 5 7 6 5 5 -1 6 8 5 3 6 5 5 -3 5 0 6 2 5 -3 6 4 5 4 6 0 5 -6 5 -5 6 -2 5 -3 6 -2 5 -4 6 5 5 8 5 8 6 4 5 -5 6 -6 5 8 6 1 5 -6 6 -5 5 -5 5 -2 6 -4 5 -4 6 7 5 11 6 3 5 0 5 3 6 6 5 11 6 4 5 0 6 -2 5 -2 5 -7 6 -4 5 -5 6 -7 5 -6 6 2 5 6 5 3 6 -4 5 -9 6 -1 5 -3 6 -1 5 -2 5 -5 6 -9 5 -8 6 -4 5 1 6 -3 5 5 5 1 6 -2 5 6 6 2 5 4 6 7 5 5 6 1 5 2 5 1 6 0 5 -7 6 -1 5 -3 6 3 5 -5 5 -7 6 -11 5 0 6 10 5 16 6 5 5 -6V0H0Z" fill="#000"/><path d="M0 -120l5 4 6 2 5 -3 6 -3 5 -2 6 -1 5 -6 5 -8 6 -11 5 5 6 8 5 6 6 7 5 9 5 11 6 10 5 6 6 1 5 -8 6 -7 5 -6 6 -7 5 -5 5 0 6 2 5 -3 6 -4 5 -12 6 -13 5 -1 5 1 6 5 5 3 6 6 5 2 6 0 5 0 5 2 6 3 5 7 6 2 5 3 6 -6 5 -8 5 -9 6 -5 5 4 6 13 5 7 6 3 5 -1 5 -3 6 -4 5 -1 6 -1 5 -9 6 -5 5 -2 5 4 6 1 5 -10 6 -5 5 4 6 10 5 6 6 0 5 1 5 5 6 -2 5 -7 6 -9 5 -3 6 3 5 5 5 6 6 4 5 6 6 8 5 7 6 -3 5 -8 5 -5 6 -11 5 -8 6 -3 5 3 6 3 5 -6 5 -4 6 -4 5 9 6 8 5 -1 6 1 5 1 5 3 6 0 5 -2 6 -3 5 -1 6 -2 5 -4 6 -4 5 -1 5 6 6 6 5 6 6 -2 5 3 6 2 5 0 5 7 6 5 5 -1 6 8 5 3 6 5 5 -3 5 0 6 2 5 -3 6 4 5 4 6 0 5 -6 5 -5 6 -2 5 -3 6 -2 5 -4 6 5 5 8 5 8 6 4 5 -5 6 -6 5 8 6 1 5 -6 6 -5 5 -5 5 -2 6 -4 5 -4 6 7 5 11 6 3 5 0 5 3 6 6 5 11 6 4 5 0 6 -2 5 -2 5 -7 6 -4 5 -5 6 -7 5 -6 6 2 5 6 5 3 6 -4 5 -9 6 -1 5 -3 6 -1 5 -2 5 -5 6 -9 5 -8 6 -4 5 1 6 -3 5 5 5 1 6 -2 5 6 6 2 5 4 6 7 5 5 6 1 5 2 5 1 6 0 5 -7 6 -1 5 -3 6 3 5 -5 5 -7 6 -11 5 0 6 10 5 16 6 5 5 -6" fill="none" stroke="url(#zg)" stroke-width="3"/></g>
<g transform="translate(2107.4,581.4)"><path d="M0 -142l5 9 6 5 5 4 6 3 5 0 6 -3 5 -7 5 -1 6 -1 5 6 6 -1 5 4 6 -1 5 5 5 10 6 7 5 5 6 1 5 -1 6 -1 5 -9 6 -2 5 4 5 3 6 -2 5 -3 6 -3 5 -7 6 -9 5 -9 5 -6 6 -1 5 1 6 4 5 5 6 8 5 6 5 4 6 5 5 7 6 4 5 0 6 -3 5 -1 5 -3 6 -3 5 -3 6 1 5 2 6 -1 5 0 5 -3 6 -3 5 -7 6 -3 5 -4 6 -6 5 -2 5 1 6 1 5 -3 6 -1 5 4 6 1 5 2 6 0 5 0 5 2 6 2 5 -8 6 -6 5 -3 6 2 5 -1 5 -3 6 1 5 3 6 5 5 6 6 -1 5 -5 5 -1 6 -2 5 -8 6 2 5 1 6 -1 5 -2 5 -11 6 -6 5 -4 6 4 5 8 6 10 5 7 5 -2 6 -5 5 -7 6 -6 5 6 6 12 5 5 6 8 5 7 5 4 6 -4 5 1 6 5 5 -2 6 -6 5 -1 5 -3 6 -1 5 6 6 10 5 12 6 1 5 -6 5 -5 6 -5 5 -2 6 5 5 10 6 4 5 0 5 -4 6 -6 5 -6 6 -7 5 -6 6 4 5 9 5 11 6 9 5 0 6 -9 5 -5 6 -1 5 -2 6 -6 5 -2 5 0 6 -3 5 -1 6 -1 5 7 6 1 5 0 5 -2 6 2 5 8 6 11 5 7 6 13 5 3 5 -7 6 -5 5 -1 6 1 5 -1 6 -6 5 -6 5 -3 6 -5 5 1 6 5 5 -4 6 -8 5 -7 5 -3 6 -4 5 -2 6 -10 5 -2 6 -4 5 4 5 5 6 2 5 -2 6 1 5 6 6 12 5 8 6 1 5 -3 5 -2 6 -6 5 -1 6 0 5 5 6 0 5 -3 5 -12 6 -13 5 -5 6 2 5 7 6 2 5 -5V0H0Z" fill="#000"/><path d="M0 -142l5 9 6 5 5 4 6 3 5 0 6 -3 5 -7 5 -1 6 -1 5 6 6 -1 5 4 6 -1 5 5 5 10 6 7 5 5 6 1 5 -1 6 -1 5 -9 6 -2 5 4 5 3 6 -2 5 -3 6 -3 5 -7 6 -9 5 -9 5 -6 6 -1 5 1 6 4 5 5 6 8 5 6 5 4 6 5 5 7 6 4 5 0 6 -3 5 -1 5 -3 6 -3 5 -3 6 1 5 2 6 -1 5 0 5 -3 6 -3 5 -7 6 -3 5 -4 6 -6 5 -2 5 1 6 1 5 -3 6 -1 5 4 6 1 5 2 6 0 5 0 5 2 6 2 5 -8 6 -6 5 -3 6 2 5 -1 5 -3 6 1 5 3 6 5 5 6 6 -1 5 -5 5 -1 6 -2 5 -8 6 2 5 1 6 -1 5 -2 5 -11 6 -6 5 -4 6 4 5 8 6 10 5 7 5 -2 6 -5 5 -7 6 -6 5 6 6 12 5 5 6 8 5 7 5 4 6 -4 5 1 6 5 5 -2 6 -6 5 -1 5 -3 6 -1 5 6 6 10 5 12 6 1 5 -6 5 -5 6 -5 5 -2 6 5 5 10 6 4 5 0 5 -4 6 -6 5 -6 6 -7 5 -6 6 4 5 9 5 11 6 9 5 0 6 -9 5 -5 6 -1 5 -2 6 -6 5 -2 5 0 6 -3 5 -1 6 -1 5 7 6 1 5 0 5 -2 6 2 5 8 6 11 5 7 6 13 5 3 5 -7 6 -5 5 -1 6 1 5 -1 6 -6 5 -6 5 -3 6 -5 5 1 6 5 5 -4 6 -8 5 -7 5 -3 6 -4 5 -2 6 -10 5 -2 6 -4 5 4 5 5 6 2 5 -2 6 1 5 6 6 12 5 8 6 1 5 -3 5 -2 6 -6 5 -1 6 0 5 5 6 0 5 -3 5 -12 6 -13 5 -5 6 2 5 7 6 2 5 -5" fill="none" stroke="url(#zg)" stroke-width="3"/></g>
<g transform="translate(2101.2,589.5)"><path d="M0 -135l5 2 6 2 5 5 6 9 5 0 6 3 5 5 5 2 6 0 5 0 6 -3 5 -2 6 -5 5 -4 5 6 6 0 5 2 6 6 5 10 6 8 5 -4 6 -1 5 1 5 0 6 -6 5 -8 6 -10 5 -5 6 -11 5 -11 5 -5 6 -1 5 4 6 4 5 9 6 14 5 14 5 2 6 5 5 3 6 0 5 -1 6 -2 5 0 5 1 6 -6 5 -1 6 1 5 -1 6 -6 5 -1 5 0 6 3 5 -7 6 -12 5 -5 6 -3 5 -1 5 2 6 -5 5 -7 6 1 5 -1 6 3 5 4 6 3 5 2 5 -1 6 -4 5 -3 6 -3 5 -5 6 -3 5 -7 5 -9 6 -2 5 7 6 0 5 0 6 -3 5 -6 5 1 6 1 5 8 6 4 5 -1 6 -1 5 -1 5 -3 6 0 5 -4 6 -7 5 -2 6 10 5 9 5 -7 6 -8 5 -1 6 8 5 6 6 7 5 5 6 12 5 9 5 5 6 0 5 2 6 0 5 -2 6 -1 5 -2 5 4 6 3 5 6 6 6 5 5 6 -1 5 -3 5 -6 6 -8 5 -10 6 7 5 11 6 9 5 -3 5 -7 6 -4 5 -4 6 0 5 -2 6 3 5 5 5 1 6 -4 5 -10 6 -7 5 0 6 9 5 -1 6 2 5 0 5 -2 6 5 5 5 6 0 5 -5 6 -4 5 -2 5 3 6 5 5 3 6 1 5 5 6 11 5 3 5 -4 6 -4 5 4 6 2 5 8 6 0 5 -9 5 -10 6 -3 5 3 6 0 5 -1 6 -3 5 -6 5 -10 6 1 5 3 6 -5 5 -3 6 -2 5 0 5 -1 6 3 5 -4 6 -2 5 10 6 11 5 8 6 1 5 0 5 -7 6 -3 5 1 6 -1 5 3 6 5 5 -4 5 -15 6 -13 5 -5 6 -3 5 -3 6 4 5 11V0H0Z" fill="#000"/><path d="M0 -135l5 2 6 2 5 5 6 9 5 0 6 3 5 5 5 2 6 0 5 0 6 -3 5 -2 6 -5 5 -4 5 6 6 0 5 2 6 6 5 10 6 8 5 -4 6 -1 5 1 5 0 6 -6 5 -8 6 -10 5 -5 6 -11 5 -11 5 -5 6 -1 5 4 6 4 5 9 6 14 5 14 5 2 6 5 5 3 6 0 5 -1 6 -2 5 0 5 1 6 -6 5 -1 6 1 5 -1 6 -6 5 -1 5 0 6 3 5 -7 6 -12 5 -5 6 -3 5 -1 5 2 6 -5 5 -7 6 1 5 -1 6 3 5 4 6 3 5 2 5 -1 6 -4 5 -3 6 -3 5 -5 6 -3 5 -7 5 -9 6 -2 5 7 6 0 5 0 6 -3 5 -6 5 1 6 1 5 8 6 4 5 -1 6 -1 5 -1 5 -3 6 0 5 -4 6 -7 5 -2 6 10 5 9 5 -7 6 -8 5 -1 6 8 5 6 6 7 5 5 6 12 5 9 5 5 6 0 5 2 6 0 5 -2 6 -1 5 -2 5 4 6 3 5 6 6 6 5 5 6 -1 5 -3 5 -6 6 -8 5 -10 6 7 5 11 6 9 5 -3 5 -7 6 -4 5 -4 6 0 5 -2 6 3 5 5 5 1 6 -4 5 -10 6 -7 5 0 6 9 5 -1 6 2 5 0 5 -2 6 5 5 5 6 0 5 -5 6 -4 5 -2 5 3 6 5 5 3 6 1 5 5 6 11 5 3 5 -4 6 -4 5 4 6 2 5 8 6 0 5 -9 5 -10 6 -3 5 3 6 0 5 -1 6 -3 5 -6 5 -10 6 1 5 3 6 -5 5 -3 6 -2 5 0 5 -1 6 3 5 -4 6 -2 5 10 6 11 5 8 6 1 5 0 5 -7 6 -3 5 1 6 -1 5 3 6 5 5 -4 5 -15 6 -13 5 -5 6 -3 5 -3 6 4 5 11" fill="none" stroke="url(#zg)" stroke-width="3"/></g>
<g transform="translate(2094.9,597.5)"><path d="M0 -132l5 2 6 -4 5 -6 6 4 5 0 6 6 5 4 5 2 6 4 5 6 6 7 5 -4 6 -8 5 -3 5 7 6 3 5 4 6 0 5 9 6 2 5 2 6 6 5 2 5 -1 6 -6 5 -2 6 -6 5 -9 6 -12 5 -13 5 -5 6 -1 5 2 6 10 5 11 6 10 5 7 5 4 6 -5 5 -7 6 2 5 7 6 -3 5 -5 5 -4 6 3 5 1 6 7 5 -5 6 -4 5 -7 5 -2 6 2 5 -6 6 -11 5 -6 6 5 5 4 5 6 6 2 5 -9 6 -11 5 -7 6 -2 5 5 6 8 5 8 5 3 6 -1 5 -7 6 -7 5 -1 6 -6 5 -5 5 -13 6 -7 5 -2 6 3 5 -4 6 -9 5 -2 5 -6 6 -1 5 2 6 4 5 4 6 2 5 5 5 4 6 2 5 2 6 -3 5 1 6 3 5 6 5 -2 6 -3 5 1 6 2 5 11 6 12 5 10 6 2 5 3 5 0 6 -2 5 0 6 4 5 3 6 3 5 2 5 3 6 10 5 4 6 0 5 -9 6 -8 5 1 5 1 6 -1 5 -4 6 -1 5 4 6 -2 5 -6 5 -2 6 1 5 -8 6 -5 5 -2 6 -2 5 1 5 6 6 0 5 4 6 1 5 0 6 1 5 2 6 -1 5 7 5 2 6 4 5 1 6 -1 5 -7 6 -7 5 -2 5 -3 6 1 5 2 6 9 5 4 6 0 5 -3 5 3 6 7 5 8 6 -1 5 -9 6 -5 5 1 5 -6 6 -3 5 0 6 -4 5 0 6 1 5 5 5 1 6 -3 5 -5 6 3 5 1 6 -4 5 -7 5 -3 6 1 5 6 6 7 5 7 6 5 5 4 6 4 5 -3 5 -7 6 0 5 6 6 4 5 1 6 -7 5 -14 5 -6 6 -7 5 -1 6 -3 5 -2 6 1 5 11V0H0Z" fill="#000"/><path d="M0 -132l5 2 6 -4 5 -6 6 4 5 0 6 6 5 4 5 2 6 4 5 6 6 7 5 -4 6 -8 5 -3 5 7 6 3 5 4 6 0 5 9 6 2 5 2 6 6 5 2 5 -1 6 -6 5 -2 6 -6 5 -9 6 -12 5 -13 5 -5 6 -1 5 2 6 10 5 11 6 10 5 7 5 4 6 -5 5 -7 6 2 5 7 6 -3 5 -5 5 -4 6 3 5 1 6 7 5 -5 6 -4 5 -7 5 -2 6 2 5 -6 6 -11 5 -6 6 5 5 4 5 6 6 2 5 -9 6 -11 5 -7 6 -2 5 5 6 8 5 8 5 3 6 -1 5 -7 6 -7 5 -1 6 -6 5 -5 5 -13 6 -7 5 -2 6 3 5 -4 6 -9 5 -2 5 -6 6 -1 5 2 6 4 5 4 6 2 5 5 5 4 6 2 5 2 6 -3 5 1 6 3 5 6 5 -2 6 -3 5 1 6 2 5 11 6 12 5 10 6 2 5 3 5 0 6 -2 5 0 6 4 5 3 6 3 5 2 5 3 6 10 5 4 6 0 5 -9 6 -8 5 1 5 1 6 -1 5 -4 6 -1 5 4 6 -2 5 -6 5 -2 6 1 5 -8 6 -5 5 -2 6 -2 5 1 5 6 6 0 5 4 6 1 5 0 6 1 5 2 6 -1 5 7 5 2 6 4 5 1 6 -1 5 -7 6 -7 5 -2 5 -3 6 1 5 2 6 9 5 4 6 0 5 -3 5 3 6 7 5 8 6 -1 5 -9 6 -5 5 1 5 -6 6 -3 5 0 6 -4 5 0 6 1 5 5 5 1 6 -3 5 -5 6 3 5 1 6 -4 5 -7 5 -3 6 1 5 6 6 7 5 7 6 5 5 4 6 4 5 -3 5 -7 6 0 5 6 6 4 5 1 6 -7 5 -14 5 -6 6 -7 5 -1 6 -3 5 -2 6 1 5 11" fill="none" stroke="url(#zg)" stroke-width="3"/></g>
<g transform="translate(2088.7,605.6)"><path d="M0 -139l5 3 6 2 5 4 6 1 5 -5 6 -5 5 8 5 9 6 7 5 9 6 5 5 -2 6 -12 5 -5 5 9 6 13 5 8 6 3 5 1 6 -5 5 -4 6 -7 5 -2 5 5 6 6 5 0 6 -4 5 -6 6 0 5 -7 5 -11 6 -7 5 -4 6 8 5 12 6 0 5 -3 5 -2 6 1 5 2 6 10 5 10 6 -1 5 -5 5 -6 6 -3 5 -2 6 -1 5 4 6 1 5 -5 5 -2 6 -5 5 -7 6 -11 5 -8 6 -1 5 10 5 10 6 0 5 -2 6 -3 5 -4 6 -4 5 0 6 5 5 7 5 1 6 -1 5 -5 6 -3 5 5 6 7 5 -3 5 -15 6 -21 5 -12 6 -9 5 -1 6 0 5 0 5 -4 6 -9 5 -1 6 6 5 11 6 6 5 4 5 -2 6 -5 5 -7 6 8 5 4 6 9 5 7 5 5 6 5 5 0 6 4 5 10 6 13 5 5 6 -7 5 -11 5 5 6 3 5 2 6 -1 5 3 6 4 5 -1 5 -2 6 2 5 7 6 3 5 2 6 -1 5 1 5 -3 6 3 5 -4 6 -1 5 -5 6 -11 5 -10 5 -9 6 -8 5 -8 6 -3 5 2 6 3 5 7 5 1 6 2 5 -1 6 4 5 2 6 7 5 6 6 4 5 7 5 3 6 -3 5 -2 6 5 5 5 6 -4 5 -2 5 -3 6 -6 5 -1 6 3 5 1 6 -3 5 -5 5 -9 6 1 5 1 6 0 5 2 6 -3 5 3 5 -3 6 -3 5 0 6 -5 5 -7 6 -2 5 3 5 5 6 -1 5 0 6 4 5 5 6 4 5 6 5 6 6 6 5 1 6 2 5 -7 6 -2 5 5 6 4 5 5 5 2 6 -2 5 2 6 -1 5 0 6 -14 5 -15 5 -11 6 -7 5 -3 6 2 5 7 6 4 5 3V0H0Z" fill="#000"/><path d="M0 -139l5 3 6 2 5 4 6 1 5 -5 6 -5 5 8 5 9 6 7 5 9 6 5 5 -2 6 -12 5 -5 5 9 6 13 5 8 6 3 5 1 6 -5 5 -4 6 -7 5 -2 5 5 6 6 5 0 6 -4 5 -6 6 0 5 -7 5 -11 6 -7 5 -4 6 8 5 12 6 0 5 -3 5 -2 6 1 5 2 6 10 5 10 6 -1 5 -5 5 -6 6 -3 5 -2 6 -1 5 4 6 1 5 -5 5 -2 6 -5 5 -7 6 -11 5 -8 6 -1 5 10 5 10 6 0 5 -2 6 -3 5 -4 6 -4 5 0 6 5 5 7 5 1 6 -1 5 -5 6 -3 5 5 6 7 5 -3 5 -15 6 -21 5 -12 6 -9 5 -1 6 0 5 0 5 -4 6 -9 5 -1 6 6 5 11 6 6 5 4 5 -2 6 -5 5 -7 6 8 5 4 6 9 5 7 5 5 6 5 5 0 6 4 5 10 6 13 5 5 6 -7 5 -11 5 5 6 3 5 2 6 -1 5 3 6 4 5 -1 5 -2 6 2 5 7 6 3 5 2 6 -1 5 1 5 -3 6 3 5 -4 6 -1 5 -5 6 -11 5 -10 5 -9 6 -8 5 -8 6 -3 5 2 6 3 5 7 5 1 6 2 5 -1 6 4 5 2 6 7 5 6 6 4 5 7 5 3 6 -3 5 -2 6 5 5 5 6 -4 5 -2 5 -3 6 -6 5 -1 6 3 5 1 6 -3 5 -5 5 -9 6 1 5 1 6 0 5 2 6 -3 5 3 5 -3 6 -3 5 0 6 -5 5 -7 6 -2 5 3 5 5 6 -1 5 0 6 4 5 5 6 4 5 6 5 6 6 6 5 1 6 2 5 -7 6 -2 5 5 6 4 5 5 5 2 6 -2 5 2 6 -1 5 0 6 -14 5 -15 5 -11 6 -7 5 -3 6 2 5 7 6 4 5 3" fill="none" stroke="url(#zg)" stroke-width="3"/></g>
<g transform="translate(2082.4,613.6)"><path d="M0 -128l5 6 6 5 5 -3 6 -1 5 -5 6 -3 5 0 5 3 6 9 5 10 6 3 5 -3 6 -3 5 0 5 5 6 3 5 4 6 1 5 1 6 -5 5 -4 6 -5 5 -2 5 10 6 10 5 0 6 -4 5 -3 6 1 5 -1 5 -3 6 -9 5 -4 6 -5 5 3 6 0 5 -1 5 4 6 2 5 5 6 12 5 8 6 7 5 -8 5 -10 6 -15 5 -7 6 1 5 5 6 4 5 7 5 -3 6 -12 5 -9 6 2 5 1 6 -5 5 -1 5 7 6 0 5 -7 6 -9 5 -2 6 -4 5 4 6 8 5 15 5 3 6 -2 5 -4 6 -1 5 1 6 0 5 -1 5 -12 6 -14 5 -11 6 -2 5 -3 6 -1 5 2 5 -3 6 -4 5 2 6 6 5 -1 6 -4 5 -4 5 -4 6 -2 5 4 6 10 5 4 6 3 5 1 5 7 6 1 5 1 6 9 5 12 6 7 5 -1 6 -4 5 -6 5 4 6 -1 5 -4 6 -4 5 -6 6 0 5 5 5 7 6 5 5 5 6 -2 5 -2 6 1 5 0 5 0 6 -7 5 -6 6 -5 5 -3 6 -1 5 -3 5 -3 6 -6 5 -7 6 -1 5 7 6 8 5 7 5 0 6 2 5 -3 6 -3 5 5 6 7 5 5 6 7 5 4 5 6 6 0 5 -2 6 4 5 3 6 2 5 4 5 1 6 -4 5 -8 6 -10 5 -12 6 -7 5 -6 5 -3 6 -7 5 4 6 12 5 8 6 5 5 1 5 -2 6 -12 5 -9 6 7 5 10 6 0 5 -10 5 -10 6 0 5 5 6 4 5 2 6 -1 5 4 5 7 6 8 5 4 6 6 5 -1 6 -6 5 -3 6 4 5 6 5 3 6 -5 5 -12 6 -8 5 -5 6 -6 5 -3 5 -6 6 0 5 0 6 1 5 8 6 2 5 11V0H0Z" fill="#000"/><path d="M0 -128l5 6 6 5 5 -3 6 -1 5 -5 6 -3 5 0 5 3 6 9 5 10 6 3 5 -3 6 -3 5 0 5 5 6 3 5 4 6 1 5 1 6 -5 5 -4 6 -5 5 -2 5 10 6 10 5 0 6 -4 5 -3 6 1 5 -1 5 -3 6 -9 5 -4 6 -5 5 3 6 0 5 -1 5 4 6 2 5 5 6 12 5 8 6 7 5 -8 5 -10 6 -15 5 -7 6 1 5 5 6 4 5 7 5 -3 6 -12 5 -9 6 2 5 1 6 -5 5 -1 5 7 6 0 5 -7 6 -9 5 -2 6 -4 5 4 6 8 5 15 5 3 6 -2 5 -4 6 -1 5 1 6 0 5 -1 5 -12 6 -14 5 -11 6 -2 5 -3 6 -1 5 2 5 -3 6 -4 5 2 6 6 5 -1 6 -4 5 -4 5 -4 6 -2 5 4 6 10 5 4 6 3 5 1 5 7 6 1 5 1 6 9 5 12 6 7 5 -1 6 -4 5 -6 5 4 6 -1 5 -4 6 -4 5 -6 6 0 5 5 5 7 6 5 5 5 6 -2 5 -2 6 1 5 0 5 0 6 -7 5 -6 6 -5 5 -3 6 -1 5 -3 5 -3 6 -6 5 -7 6 -1 5 7 6 8 5 7 5 0 6 2 5 -3 6 -3 5 5 6 7 5 5 6 7 5 4 5 6 6 0 5 -2 6 4 5 3 6 2 5 4 5 1 6 -4 5 -8 6 -10 5 -12 6 -7 5 -6 5 -3 6 -7 5 4 6 12 5 8 6 5 5 1 5 -2 6 -12 5 -9 6 7 5 10 6 0 5 -10 5 -10 6 0 5 5 6 4 5 2 6 -1 5 4 5 7 6 8 5 4 6 6 5 -1 6 -6 5 -3 6 4 5 6 5 3 6 -5 5 -12 6 -8 5 -5 6 -6 5 -3 5 -6 6 0 5 0 6 1 5 8 6 2 5 11" fill="none" stroke="url(#zg)" stroke-width="3"/></g>
<g transform="translate(2076.2,621.6)"><path d="M0 -124l5 1 6 3 5 3 6 1 5 -3 6 -4 5 -7 5 -4 6 -4 5 3 6 6 5 6 6 7 5 5 5 0 6 -2 5 -5 6 -4 5 4 6 3 5 4 6 6 5 4 5 5 6 -2 5 0 6 0 5 5 6 2 5 1 5 -6 6 -7 5 -6 6 -1 5 -2 6 -7 5 -4 5 -3 6 2 5 6 6 8 5 0 6 -3 5 2 5 2 6 -1 5 -6 6 -1 5 0 6 1 5 -5 5 -8 6 -5 5 -5 6 3 5 8 6 6 5 5 5 -3 6 -4 5 -7 6 -4 5 -4 6 -1 5 4 6 10 5 13 5 6 6 0 5 0 6 4 5 5 6 0 5 -3 5 -10 6 -6 5 -7 6 -12 5 -10 6 -2 5 -1 5 -3 6 -1 5 1 6 0 5 -6 6 -9 5 -4 5 7 6 -2 5 -2 6 4 5 2 6 1 5 10 5 9 6 2 5 3 6 1 5 2 6 2 5 6 6 -5 5 -9 5 -8 6 1 5 1 6 -2 5 -1 6 6 5 5 5 1 6 -2 5 -2 6 5 5 -3 6 2 5 0 5 -1 6 -4 5 -1 6 0 5 -5 6 -11 5 0 5 4 6 0 5 -3 6 5 5 7 6 8 5 7 5 3 6 2 5 -4 6 -6 5 1 6 1 5 1 6 -1 5 -1 5 6 6 8 5 2 6 8 5 9 6 3 5 3 5 2 6 -3 5 -5 6 -13 5 -18 6 -14 5 -6 5 2 6 -1 5 8 6 4 5 4 6 3 5 0 5 4 6 6 5 6 6 11 5 9 6 -2 5 -12 5 -11 6 0 5 3 6 1 5 -4 6 -8 5 -5 5 1 6 4 5 9 6 6 5 -1 6 -4 5 -11 6 -12 5 -3 5 1 6 -6 5 -10 6 -11 5 -6 6 -2 5 8 5 7 6 6 5 12 6 15 5 9 6 6 5 3V0H0Z" fill="#000"/><path d="M0 -124l5 1 6 3 5 3 6 1 5 -3 6 -4 5 -7 5 -4 6 -4 5 3 6 6 5 6 6 7 5 5 5 0 6 -2 5 -5 6 -4 5 4 6 3 5 4 6 6 5 4 5 5 6 -2 5 0 6 0 5 5 6 2 5 1 5 -6 6 -7 5 -6 6 -1 5 -2 6 -7 5 -4 5 -3 6 2 5 6 6 8 5 0 6 -3 5 2 5 2 6 -1 5 -6 6 -1 5 0 6 1 5 -5 5 -8 6 -5 5 -5 6 3 5 8 6 6 5 5 5 -3 6 -4 5 -7 6 -4 5 -4 6 -1 5 4 6 10 5 13 5 6 6 0 5 0 6 4 5 5 6 0 5 -3 5 -10 6 -6 5 -7 6 -12 5 -10 6 -2 5 -1 5 -3 6 -1 5 1 6 0 5 -6 6 -9 5 -4 5 7 6 -2 5 -2 6 4 5 2 6 1 5 10 5 9 6 2 5 3 6 1 5 2 6 2 5 6 6 -5 5 -9 5 -8 6 1 5 1 6 -2 5 -1 6 6 5 5 5 1 6 -2 5 -2 6 5 5 -3 6 2 5 0 5 -1 6 -4 5 -1 6 0 5 -5 6 -11 5 0 5 4 6 0 5 -3 6 5 5 7 6 8 5 7 5 3 6 2 5 -4 6 -6 5 1 6 1 5 1 6 -1 5 -1 5 6 6 8 5 2 6 8 5 9 6 3 5 3 5 2 6 -3 5 -5 6 -13 5 -18 6 -14 5 -6 5 2 6 -1 5 8 6 4 5 4 6 3 5 0 5 4 6 6 5 6 6 11 5 9 6 -2 5 -12 5 -11 6 0 5 3 6 1 5 -4 6 -8 5 -5 5 1 6 4 5 9 6 6 5 -1 6 -4 5 -11 6 -12 5 -3 5 1 6 -6 5 -10 6 -11 5 -6 6 -2 5 8 5 7 6 6 5 12 6 15 5 9 6 6 5 3" fill="none" stroke="url(#zg)" stroke-width="3"/></g>
<g transform="translate(2069.9,629.7)"><path d="M0 -136l5 0 6 2 5 5 6 2 5 -1 6 3 5 -1 5 -5 6 -1 5 -6 6 -1 5 5 6 11 5 5 5 2 6 -5 5 -3 6 -4 5 5 6 11 5 13 6 6 5 3 5 -6 6 -3 5 3 6 9 5 11 6 2 5 -6 5 -8 6 -6 5 3 6 -6 5 -2 6 -6 5 -5 5 -9 6 -4 5 3 6 5 5 -9 6 -10 5 -9 5 7 6 10 5 10 6 0 5 -1 6 1 5 6 5 -2 6 0 5 -7 6 -9 5 -9 6 -4 5 1 5 4 6 0 5 5 6 2 5 3 6 -3 5 -2 6 1 5 3 5 -2 6 5 5 9 6 14 5 4 6 -4 5 -5 5 -7 6 -9 5 -5 6 -8 5 -7 6 -5 5 -5 5 -8 6 -4 5 8 6 4 5 4 6 2 5 4 5 1 6 -8 5 -6 6 -5 5 -7 6 5 5 9 5 15 6 8 5 -1 6 5 5 0 6 -3 5 2 6 3 5 -10 5 -8 6 -4 5 1 6 -2 5 1 6 11 5 7 5 -2 6 -6 5 3 6 7 5 6 6 0 5 -5 5 -8 6 -7 5 -10 6 -1 5 -6 6 -1 5 -7 5 5 6 11 5 5 6 2 5 3 6 -2 5 -1 5 -1 6 1 5 7 6 0 5 -1 6 -4 5 -3 6 -1 5 -4 5 0 6 10 5 8 6 15 5 12 6 10 5 8 5 2 6 -4 5 -5 6 -6 5 -7 6 -11 5 -18 5 -17 6 -11 5 1 6 4 5 3 6 7 5 9 5 9 6 11 5 13 6 13 5 -1 6 2 5 -4 5 -1 6 -2 5 -2 6 -4 5 -5 6 -7 5 -4 5 -5 6 6 5 6 6 5 5 -4 6 -12 5 -11 6 -11 5 -6 5 -7 6 -7 5 -7 6 -2 5 9 6 11 5 8 5 1 6 3 5 9 6 11 5 9 6 0 5 -5V0H0Z" fill="#000"/><path d="M0 -136l5 0 6 2 5 5 6 2 5 -1 6 3 5 -1 5 -5 6 -1 5 -6 6 -1 5 5 6 11 5 5 5 2 6 -5 5 -3 6 -4 5 5 6 11 5 13 6 6 5 3 5 -6 6 -3 5 3 6 9 5 11 6 2 5 -6 5 -8 6 -6 5 3 6 -6 5 -2 6 -6 5 -5 5 -9 6 -4 5 3 6 5 5 -9 6 -10 5 -9 5 7 6 10 5 10 6 0 5 -1 6 1 5 6 5 -2 6 0 5 -7 6 -9 5 -9 6 -4 5 1 5 4 6 0 5 5 6 2 5 3 6 -3 5 -2 6 1 5 3 5 -2 6 5 5 9 6 14 5 4 6 -4 5 -5 5 -7 6 -9 5 -5 6 -8 5 -7 6 -5 5 -5 5 -8 6 -4 5 8 6 4 5 4 6 2 5 4 5 1 6 -8 5 -6 6 -5 5 -7 6 5 5 9 5 15 6 8 5 -1 6 5 5 0 6 -3 5 2 6 3 5 -10 5 -8 6 -4 5 1 6 -2 5 1 6 11 5 7 5 -2 6 -6 5 3 6 7 5 6 6 0 5 -5 5 -8 6 -7 5 -10 6 -1 5 -6 6 -1 5 -7 5 5 6 11 5 5 6 2 5 3 6 -2 5 -1 5 -1 6 1 5 7 6 0 5 -1 6 -4 5 -3 6 -1 5 -4 5 0 6 10 5 8 6 15 5 12 6 10 5 8 5 2 6 -4 5 -5 6 -6 5 -7 6 -11 5 -18 5 -17 6 -11 5 1 6 4 5 3 6 7 5 9 5 9 6 11 5 13 6 13 5 -1 6 2 5 -4 5 -1 6 -2 5 -2 6 -4 5 -5 6 -7 5 -4 5 -5 6 6 5 6 6 5 5 -4 6 -12 5 -11 6 -11 5 -6 5 -7 6 -7 5 -7 6 -2 5 9 6 11 5 8 5 1 6 3 5 9 6 11 5 9 6 0 5 -5" fill="none" stroke="url(#zg)" stroke-width="3"/></g>
<g transform="translate(2063.7,637.7)"><path d="M0 -141l5 1 6 -6 5 0 6 5 5 11 6 8 5 -4 5 -2 6 -3 5 -1 6 4 5 7 6 10 5 0 5 -10 6 -8 5 -6 6 -3 5 8 6 11 5 9 6 6 5 6 5 2 6 1 5 6 6 7 5 2 6 -3 5 -9 5 -11 6 3 5 -2 6 2 5 4 6 -1 5 -2 5 -2 6 -3 5 -4 6 -10 5 -8 6 -11 5 -5 5 1 6 2 5 9 6 2 5 -1 6 3 5 8 5 7 6 5 5 -4 6 -13 5 -10 6 -7 5 -1 5 0 6 4 5 4 6 1 5 2 6 2 5 5 6 0 5 1 5 -1 6 -2 5 3 6 7 5 1 6 1 5 -5 5 6 6 -5 5 -14 6 -11 5 -6 6 2 5 -2 5 -3 6 -2 5 3 6 -1 5 1 6 4 5 3 5 -4 6 -4 5 -4 6 -7 5 -2 6 4 5 12 5 15 6 7 5 3 6 6 5 5 6 -3 5 -1 6 -2 5 -4 5 -8 6 -5 5 -2 6 0 5 2 6 -2 5 -1 5 8 6 1 5 -4 6 -10 5 -1 6 3 5 0 5 -5 6 -5 5 -4 6 -4 5 2 6 4 5 0 5 4 6 10 5 3 6 -1 5 0 6 -2 5 3 5 0 6 6 5 2 6 -7 5 -11 6 -3 5 2 6 4 5 1 5 12 6 7 5 6 6 3 5 6 6 4 5 13 5 4 6 3 5 -1 6 1 5 -3 6 -12 5 -12 5 -18 6 -19 5 -14 6 3 5 10 6 6 5 15 5 7 6 5 5 6 6 -2 5 3 6 -2 5 -2 5 -3 6 2 5 2 6 -1 5 -3 6 -6 5 -1 5 -2 6 2 5 9 6 4 5 -8 6 -6 5 -10 6 -9 5 -14 5 -8 6 1 5 9 6 8 5 7 6 2 5 -2 5 -1 6 2 5 9 6 9 5 2 6 -5 5 -6V0H0Z" fill="#000"/><path d="M0 -141l5 1 6 -6 5 0 6 5 5 11 6 8 5 -4 5 -2 6 -3 5 -1 6 4 5 7 6 10 5 0 5 -10 6 -8 5 -6 6 -3 5 8 6 11 5 9 6 6 5 6 5 2 6 1 5 6 6 7 5 2 6 -3 5 -9 5 -11 6 3 5 -2 6 2 5 4 6 -1 5 -2 5 -2 6 -3 5 -4 6 -10 5 -8 6 -11 5 -5 5 1 6 2 5 9 6 2 5 -1 6 3 5 8 5 7 6 5 5 -4 6 -13 5 -10 6 -7 5 -1 5 0 6 4 5 4 6 1 5 2 6 2 5 5 6 0 5 1 5 -1 6 -2 5 3 6 7 5 1 6 1 5 -5 5 6 6 -5 5 -14 6 -11 5 -6 6 2 5 -2 5 -3 6 -2 5 3 6 -1 5 1 6 4 5 3 5 -4 6 -4 5 -4 6 -7 5 -2 6 4 5 12 5 15 6 7 5 3 6 6 5 5 6 -3 5 -1 6 -2 5 -4 5 -8 6 -5 5 -2 6 0 5 2 6 -2 5 -1 5 8 6 1 5 -4 6 -10 5 -1 6 3 5 0 5 -5 6 -5 5 -4 6 -4 5 2 6 4 5 0 5 4 6 10 5 3 6 -1 5 0 6 -2 5 3 5 0 6 6 5 2 6 -7 5 -11 6 -3 5 2 6 4 5 1 5 12 6 7 5 6 6 3 5 6 6 4 5 13 5 4 6 3 5 -1 6 1 5 -3 6 -12 5 -12 5 -18 6 -19 5 -14 6 3 5 10 6 6 5 15 5 7 6 5 5 6 6 -2 5 3 6 -2 5 -2 5 -3 6 2 5 2 6 -1 5 -3 6 -6 5 -1 5 -2 6 2 5 9 6 4 5 -8 6 -6 5 -10 6 -9 5 -14 5 -8 6 1 5 9 6 8 5 7 6 2 5 -2 5 -1 6 2 5 9 6 9 5 2 6 -5 5 -6" fill="none" stroke="url(#zg)" stroke-width="3"/></g>
<g transform="translate(2057.4,645.8)"><path d="M0 -133l5 -5 6 -7 5 0 6 4 5 8 6 5 5 1 5 6 6 2 5 1 6 2 5 0 6 3 5 1 5 -7 6 -5 5 2 6 4 5 -1 6 -1 5 1 6 7 5 2 5 7 6 5 5 2 6 10 5 10 6 -4 5 -13 5 -11 6 -2 5 -2 6 -3 5 2 6 3 5 -5 5 -11 6 -4 5 -1 6 3 5 4 6 2 5 -1 5 -3 6 -6 5 1 6 4 5 0 6 -1 5 2 5 5 6 0 5 -3 6 -4 5 -10 6 -8 5 -6 5 -3 6 -2 5 7 6 9 5 13 6 2 5 -2 6 6 5 5 5 1 6 -7 5 0 6 -1 5 0 6 2 5 1 5 -1 6 -5 5 -5 6 -6 5 -7 6 0 5 -10 5 -2 6 2 5 11 6 7 5 1 6 -3 5 0 5 -1 6 0 5 -1 6 -2 5 -3 6 5 5 7 5 2 6 -2 5 -7 6 -7 5 3 6 3 5 6 6 3 5 -7 5 -2 6 -7 5 1 6 5 5 5 6 -1 5 -5 5 0 6 4 5 -4 6 -4 5 -5 6 1 5 -5 5 -13 6 -9 5 -2 6 3 5 0 6 -4 5 2 5 11 6 10 5 0 6 -5 5 6 6 9 5 9 5 8 6 2 5 1 6 -10 5 -8 6 -3 5 9 6 5 5 2 5 9 6 12 5 13 6 4 5 -1 6 -2 5 3 5 4 6 4 5 0 6 -7 5 -5 6 -5 5 -8 5 -15 6 -8 5 -14 6 -8 5 2 6 9 5 4 5 -2 6 0 5 10 6 9 5 10 6 -3 5 -9 5 -5 6 -3 5 -6 6 2 5 -7 6 -1 5 2 5 4 6 3 5 9 6 -4 5 -3 6 -9 5 2 6 3 5 -1 5 -6 6 4 5 3 6 -2 5 -5 6 3 5 6 5 7 6 1 5 -1 6 -6 5 2 6 6 5 -1V0H0Z" fill="#000"/><path d="M0 -133l5 -5 6 -7 5 0 6 4 5 8 6 5 5 1 5 6 6 2 5 1 6 2 5 0 6 3 5 1 5 -7 6 -5 5 2 6 4 5 -1 6 -1 5 1 6 7 5 2 5 7 6 5 5 2 6 10 5 10 6 -4 5 -13 5 -11 6 -2 5 -2 6 -3 5 2 6 3 5 -5 5 -11 6 -4 5 -1 6 3 5 4 6 2 5 -1 5 -3 6 -6 5 1 6 4 5 0 6 -1 5 2 5 5 6 0 5 -3 6 -4 5 -10 6 -8 5 -6 5 -3 6 -2 5 7 6 9 5 13 6 2 5 -2 6 6 5 5 5 1 6 -7 5 0 6 -1 5 0 6 2 5 1 5 -1 6 -5 5 -5 6 -6 5 -7 6 0 5 -10 5 -2 6 2 5 11 6 7 5 1 6 -3 5 0 5 -1 6 0 5 -1 6 -2 5 -3 6 5 5 7 5 2 6 -2 5 -7 6 -7 5 3 6 3 5 6 6 3 5 -7 5 -2 6 -7 5 1 6 5 5 5 6 -1 5 -5 5 0 6 4 5 -4 6 -4 5 -5 6 1 5 -5 5 -13 6 -9 5 -2 6 3 5 0 6 -4 5 2 5 11 6 10 5 0 6 -5 5 6 6 9 5 9 5 8 6 2 5 1 6 -10 5 -8 6 -3 5 9 6 5 5 2 5 9 6 12 5 13 6 4 5 -1 6 -2 5 3 5 4 6 4 5 0 6 -7 5 -5 6 -5 5 -8 5 -15 6 -8 5 -14 6 -8 5 2 6 9 5 4 5 -2 6 0 5 10 6 9 5 10 6 -3 5 -9 5 -5 6 -3 5 -6 6 2 5 -7 6 -1 5 2 5 4 6 3 5 9 6 -4 5 -3 6 -9 5 2 6 3 5 -1 5 -6 6 4 5 3 6 -2 5 -5 6 3 5 6 5 7 6 1 5 -1 6 -6 5 2 6 6 5 -1" fill="none" stroke="url(#zg)" stroke-width="3"/></g>
<g transform="translate(2051.1,653.8)"><path d="M0 -143l5 -2 6 1 5 5 6 2 5 -3 6 3 5 4 5 -1 6 2 5 3 6 7 5 9 6 8 5 6 5 -9 6 -4 5 3 6 9 5 -1 6 -4 5 -4 6 5 5 0 5 3 6 2 5 -4 6 -3 5 -1 6 -3 5 -9 5 -6 6 0 5 7 6 6 5 0 6 -6 5 -8 5 -4 6 5 5 7 6 6 5 -3 6 5 5 10 5 2 6 -12 5 -7 6 0 5 9 6 5 5 -2 5 -10 6 -10 5 -5 6 -4 5 2 6 -7 5 -1 5 -2 6 4 5 9 6 11 5 7 6 -6 5 -5 6 -5 5 -2 5 3 6 0 5 -6 6 1 5 1 6 6 5 2 5 0 6 -6 5 -2 6 -1 5 -3 6 -8 5 -7 5 6 6 11 5 9 6 0 5 0 6 4 5 3 5 3 6 -6 5 -2 6 -11 5 -9 6 -1 5 5 5 -1 6 -1 5 -8 6 0 5 1 6 6 5 1 6 3 5 0 5 2 6 4 5 5 6 8 5 3 6 -9 5 -8 5 -2 6 -2 5 -2 6 -5 5 1 6 -9 5 -11 5 -12 6 -10 5 -6 6 5 5 -2 6 0 5 -2 5 6 6 11 5 -1 6 -1 5 7 6 12 5 8 5 5 6 3 5 2 6 2 5 -3 6 3 5 6 6 14 5 8 5 4 6 6 5 1 6 9 5 7 6 5 5 -4 5 -6 6 -8 5 -7 6 -6 5 -4 6 -9 5 -1 5 -3 6 -3 5 -8 6 -3 5 -2 6 1 5 1 5 2 6 11 5 1 6 12 5 5 6 -2 5 -14 5 -10 6 -7 5 2 6 2 5 4 6 3 5 0 5 -1 6 -3 5 7 6 -1 5 0 6 -3 5 -3 6 1 5 3 5 2 6 -3 5 -3 6 -3 5 2 6 1 5 8 5 4 6 0 5 -12 6 -12 5 -3 6 4 5 7V0H0Z" fill="#000"/><path d="M0 -143l5 -2 6 1 5 5 6 2 5 -3 6 3 5 4 5 -1 6 2 5 3 6 7 5 9 6 8 5 6 5 -9 6 -4 5 3 6 9 5 -1 6 -4 5 -4 6 5 5 0 5 3 6 2 5 -4 6 -3 5 -1 6 -3 5 -9 5 -6 6 0 5 7 6 6 5 0 6 -6 5 -8 5 -4 6 5 5 7 6 6 5 -3 6 5 5 10 5 2 6 -12 5 -7 6 0 5 9 6 5 5 -2 5 -10 6 -10 5 -5 6 -4 5 2 6 -7 5 -1 5 -2 6 4 5 9 6 11 5 7 6 -6 5 -5 6 -5 5 -2 5 3 6 0 5 -6 6 1 5 1 6 6 5 2 5 0 6 -6 5 -2 6 -1 5 -3 6 -8 5 -7 5 6 6 11 5 9 6 0 5 0 6 4 5 3 5 3 6 -6 5 -2 6 -11 5 -9 6 -1 5 5 5 -1 6 -1 5 -8 6 0 5 1 6 6 5 1 6 3 5 0 5 2 6 4 5 5 6 8 5 3 6 -9 5 -8 5 -2 6 -2 5 -2 6 -5 5 1 6 -9 5 -11 5 -12 6 -10 5 -6 6 5 5 -2 6 0 5 -2 5 6 6 11 5 -1 6 -1 5 7 6 12 5 8 5 5 6 3 5 2 6 2 5 -3 6 3 5 6 6 14 5 8 5 4 6 6 5 1 6 9 5 7 6 5 5 -4 5 -6 6 -8 5 -7 6 -6 5 -4 6 -9 5 -1 5 -3 6 -3 5 -8 6 -3 5 -2 6 1 5 1 5 2 6 11 5 1 6 12 5 5 6 -2 5 -14 5 -10 6 -7 5 2 6 2 5 4 6 3 5 0 5 -1 6 -3 5 7 6 -1 5 0 6 -3 5 -3 6 1 5 3 5 2 6 -3 5 -3 6 -3 5 2 6 1 5 8 5 4 6 0 5 -12 6 -12 5 -3 6 4 5 7" fill="none" stroke="url(#zg)" stroke-width="3"/></g>
<g transform="translate(2044.9,661.9)"><path d="M0 -137l5 1 6 3 5 12 6 2 5 -7 6 -9 5 -6 5 -4 6 3 5 5 6 8 5 15 6 14 5 8 5 0 6 -6 5 -1 6 5 5 0 6 -6 5 2 6 0 5 -2 5 -10 6 -3 5 1 6 -2 5 -6 6 -6 5 -8 5 -7 6 1 5 14 6 6 5 -4 6 -7 5 0 5 -1 6 -7 5 -2 6 4 5 7 6 4 5 4 5 6 6 4 5 2 6 0 5 8 6 -2 5 -4 5 -9 6 -6 5 -7 6 3 5 7 6 3 5 2 5 -1 6 -1 5 -1 6 0 5 7 6 2 5 -6 6 -2 5 5 5 5 6 -1 5 -10 6 -12 5 5 6 3 5 0 5 -4 6 0 5 -2 6 2 5 -10 6 -3 5 2 5 8 6 11 5 4 6 0 5 -2 6 -3 5 -1 5 -2 6 -4 5 -7 6 -8 5 -4 6 1 5 3 5 7 6 0 5 2 6 -2 5 0 6 5 5 6 6 -4 5 -5 5 -1 6 6 5 2 6 1 5 -7 6 -6 5 -3 5 5 6 9 5 6 6 3 5 -8 6 -10 5 -12 5 -8 6 -8 5 -4 6 6 5 3 6 -3 5 -2 5 1 6 8 5 0 6 -5 5 2 6 7 5 9 5 3 6 3 5 9 6 8 5 6 6 0 5 1 6 7 5 12 5 7 6 -3 5 -3 6 0 5 4 6 -2 5 -8 5 -7 6 -3 5 -2 6 -8 5 -2 6 -4 5 3 5 -2 6 1 5 -2 6 3 5 1 6 4 5 -6 5 1 6 -4 5 6 6 5 5 4 6 -2 5 -5 5 -2 6 2 5 -1 6 -3 5 4 6 4 5 4 5 -1 6 -3 5 -4 6 -3 5 -7 6 -2 5 2 6 5 5 7 5 1 6 -7 5 5 6 6 5 2 6 -5 5 1 5 -1 6 0 5 -8 6 -9 5 -5 6 1 5 4V0H0Z" fill="#000"/><path d="M0 -137l5 1 6 3 5 12 6 2 5 -7 6 -9 5 -6 5 -4 6 3 5 5 6 8 5 15 6 14 5 8 5 0 6 -6 5 -1 6 5 5 0 6 -6 5 2 6 0 5 -2 5 -10 6 -3 5 1 6 -2 5 -6 6 -6 5 -8 5 -7 6 1 5 14 6 6 5 -4 6 -7 5 0 5 -1 6 -7 5 -2 6 4 5 7 6 4 5 4 5 6 6 4 5 2 6 0 5 8 6 -2 5 -4 5 -9 6 -6 5 -7 6 3 5 7 6 3 5 2 5 -1 6 -1 5 -1 6 0 5 7 6 2 5 -6 6 -2 5 5 5 5 6 -1 5 -10 6 -12 5 5 6 3 5 0 5 -4 6 0 5 -2 6 2 5 -10 6 -3 5 2 5 8 6 11 5 4 6 0 5 -2 6 -3 5 -1 5 -2 6 -4 5 -7 6 -8 5 -4 6 1 5 3 5 7 6 0 5 2 6 -2 5 0 6 5 5 6 6 -4 5 -5 5 -1 6 6 5 2 6 1 5 -7 6 -6 5 -3 5 5 6 9 5 6 6 3 5 -8 6 -10 5 -12 5 -8 6 -8 5 -4 6 6 5 3 6 -3 5 -2 5 1 6 8 5 0 6 -5 5 2 6 7 5 9 5 3 6 3 5 9 6 8 5 6 6 0 5 1 6 7 5 12 5 7 6 -3 5 -3 6 0 5 4 6 -2 5 -8 5 -7 6 -3 5 -2 6 -8 5 -2 6 -4 5 3 5 -2 6 1 5 -2 6 3 5 1 6 4 5 -6 5 1 6 -4 5 6 6 5 5 4 6 -2 5 -5 5 -2 6 2 5 -1 6 -3 5 4 6 4 5 4 5 -1 6 -3 5 -4 6 -3 5 -7 6 -2 5 2 6 5 5 7 5 1 6 -7 5 5 6 6 5 2 6 -5 5 1 5 -1 6 0 5 -8 6 -9 5 -5 6 1 5 4" fill="none" stroke="url(#zg)" stroke-width="3"/></g>
<g transform="translate(2038.6,669.9)"><path d="M0 -108l5 -7 6 -1 5 1 6 -4 5 -8 6 -6 5 -4 5 -3 6 5 5 5 6 14 5 11 6 8 5 5 5 -2 6 -4 5 -4 6 3 5 -4 6 0 5 4 6 2 5 -1 5 -2 6 -6 5 -8 6 -10 5 -5 6 -2 5 4 5 -4 6 4 5 6 6 -4 5 -2 6 -3 5 4 5 -5 6 -8 5 -8 6 3 5 13 6 10 5 4 5 -2 6 -2 5 7 6 4 5 6 6 4 5 1 5 2 6 0 5 -7 6 -5 5 -3 6 2 5 -1 5 2 6 1 5 -1 6 2 5 5 6 0 5 1 6 3 5 4 5 -3 6 -8 5 -6 6 -2 5 0 6 -4 5 -2 5 -4 6 2 5 4 6 0 5 -2 6 -3 5 -2 5 -7 6 -3 5 -2 6 -1 5 0 6 -2 5 -5 5 -2 6 -3 5 -1 6 -2 5 -8 6 4 5 8 5 10 6 7 5 4 6 2 5 1 6 1 5 4 6 4 5 -4 5 4 6 -4 5 2 6 0 5 -3 6 -3 5 2 5 1 6 5 5 13 6 4 5 0 6 -12 5 -11 5 -7 6 -5 5 -10 6 -5 5 -7 6 3 5 7 5 9 6 6 5 -5 6 -7 5 -6 6 2 5 5 5 3 6 10 5 11 6 10 5 -2 6 -4 5 -6 6 3 5 10 5 2 6 5 5 0 6 2 5 1 6 9 5 -11 5 -13 6 -13 5 -5 6 -4 5 -1 6 1 5 6 5 3 6 2 5 4 6 2 5 4 6 5 5 9 5 7 6 0 5 -3 6 -6 5 -7 6 -6 5 0 5 1 6 6 5 1 6 6 5 2 6 -2 5 -4 5 3 6 5 5 3 6 0 5 -2 6 -10 5 -1 6 2 5 -2 5 -10 6 -5 5 6 6 12 5 6 6 3 5 6 5 1 6 -4 5 -8 6 -9 5 -3 6 5 5 0V0H0Z" fill="#000"/><path d="M0 -108l5 -7 6 -1 5 1 6 -4 5 -8 6 -6 5 -4 5 -3 6 5 5 5 6 14 5 11 6 8 5 5 5 -2 6 -4 5 -4 6 3 5 -4 6 0 5 4 6 2 5 -1 5 -2 6 -6 5 -8 6 -10 5 -5 6 -2 5 4 5 -4 6 4 5 6 6 -4 5 -2 6 -3 5 4 5 -5 6 -8 5 -8 6 3 5 13 6 10 5 4 5 -2 6 -2 5 7 6 4 5 6 6 4 5 1 5 2 6 0 5 -7 6 -5 5 -3 6 2 5 -1 5 2 6 1 5 -1 6 2 5 5 6 0 5 1 6 3 5 4 5 -3 6 -8 5 -6 6 -2 5 0 6 -4 5 -2 5 -4 6 2 5 4 6 0 5 -2 6 -3 5 -2 5 -7 6 -3 5 -2 6 -1 5 0 6 -2 5 -5 5 -2 6 -3 5 -1 6 -2 5 -8 6 4 5 8 5 10 6 7 5 4 6 2 5 1 6 1 5 4 6 4 5 -4 5 4 6 -4 5 2 6 0 5 -3 6 -3 5 2 5 1 6 5 5 13 6 4 5 0 6 -12 5 -11 5 -7 6 -5 5 -10 6 -5 5 -7 6 3 5 7 5 9 6 6 5 -5 6 -7 5 -6 6 2 5 5 5 3 6 10 5 11 6 10 5 -2 6 -4 5 -6 6 3 5 10 5 2 6 5 5 0 6 2 5 1 6 9 5 -11 5 -13 6 -13 5 -5 6 -4 5 -1 6 1 5 6 5 3 6 2 5 4 6 2 5 4 6 5 5 9 5 7 6 0 5 -3 6 -6 5 -7 6 -6 5 0 5 1 6 6 5 1 6 6 5 2 6 -2 5 -4 5 3 6 5 5 3 6 0 5 -2 6 -10 5 -1 6 2 5 -2 5 -10 6 -5 5 6 6 12 5 6 6 3 5 6 5 1 6 -4 5 -8 6 -9 5 -3 6 5 5 0" fill="none" stroke="url(#zg)" stroke-width="3"/></g>
<g transform="translate(2032.4,677.9)"><path d="M0 -100l5 -11 6 -12 5 -7 6 -3 5 -1 6 0 5 7 5 3 6 1 5 3 6 0 5 -5 6 3 5 9 5 6 6 4 5 -1 6 1 5 -1 6 0 5 1 6 6 5 7 5 -3 6 -7 5 -10 6 -4 5 0 6 -5 5 -5 5 -7 6 -5 5 1 6 2 5 8 6 0 5 2 5 1 6 -1 5 1 6 6 5 -4 6 1 5 1 5 -3 6 -1 5 3 6 10 5 10 6 7 5 2 5 3 6 2 5 -2 6 -9 5 -10 6 -5 5 -6 5 -4 6 -5 5 2 6 3 5 9 6 9 5 8 6 2 5 -4 5 -4 6 -8 5 -7 6 -1 5 0 6 2 5 0 5 -3 6 -2 5 -6 6 -1 5 -1 6 0 5 1 5 -3 6 -7 5 -2 6 -4 5 -3 6 -4 5 -6 5 2 6 2 5 5 6 0 5 5 6 -2 5 7 5 5 6 5 5 3 6 1 5 1 6 9 5 3 6 2 5 -3 5 2 6 3 5 1 6 1 5 3 6 1 5 -2 5 -5 6 2 5 4 6 5 5 2 6 -4 5 1 5 -1 6 4 5 -6 6 -4 5 -8 6 -4 5 -2 5 1 6 3 5 -4 6 -2 5 -5 6 -1 5 -1 5 1 6 9 5 4 6 8 5 -4 6 -9 5 -6 6 0 5 6 5 4 6 1 5 -2 6 -1 5 7 6 8 5 -6 5 -11 6 -3 5 -4 6 -5 5 -8 6 1 5 2 5 6 6 5 5 2 6 3 5 -4 6 -1 5 6 5 10 6 3 5 -2 6 -4 5 -4 6 5 5 2 5 2 6 4 5 6 6 8 5 -2 6 -8 5 -2 5 4 6 5 5 0 6 2 5 -4 6 -3 5 2 6 2 5 1 5 -7 6 0 5 5 6 -2 5 1 6 2 5 7 5 5 6 -7 5 -3 6 2 5 7 6 0 5 -6V0H0Z" fill="#000"/><path d="M0 -100l5 -11 6 -12 5 -7 6 -3 5 -1 6 0 5 7 5 3 6 1 5 3 6 0 5 -5 6 3 5 9 5 6 6 4 5 -1 6 1 5 -1 6 0 5 1 6 6 5 7 5 -3 6 -7 5 -10 6 -4 5 0 6 -5 5 -5 5 -7 6 -5 5 1 6 2 5 8 6 0 5 2 5 1 6 -1 5 1 6 6 5 -4 6 1 5 1 5 -3 6 -1 5 3 6 10 5 10 6 7 5 2 5 3 6 2 5 -2 6 -9 5 -10 6 -5 5 -6 5 -4 6 -5 5 2 6 3 5 9 6 9 5 8 6 2 5 -4 5 -4 6 -8 5 -7 6 -1 5 0 6 2 5 0 5 -3 6 -2 5 -6 6 -1 5 -1 6 0 5 1 5 -3 6 -7 5 -2 6 -4 5 -3 6 -4 5 -6 5 2 6 2 5 5 6 0 5 5 6 -2 5 7 5 5 6 5 5 3 6 1 5 1 6 9 5 3 6 2 5 -3 5 2 6 3 5 1 6 1 5 3 6 1 5 -2 5 -5 6 2 5 4 6 5 5 2 6 -4 5 1 5 -1 6 4 5 -6 6 -4 5 -8 6 -4 5 -2 5 1 6 3 5 -4 6 -2 5 -5 6 -1 5 -1 5 1 6 9 5 4 6 8 5 -4 6 -9 5 -6 6 0 5 6 5 4 6 1 5 -2 6 -1 5 7 6 8 5 -6 5 -11 6 -3 5 -4 6 -5 5 -8 6 1 5 2 5 6 6 5 5 2 6 3 5 -4 6 -1 5 6 5 10 6 3 5 -2 6 -4 5 -4 6 5 5 2 5 2 6 4 5 6 6 8 5 -2 6 -8 5 -2 5 4 6 5 5 0 6 2 5 -4 6 -3 5 2 6 2 5 1 5 -7 6 0 5 5 6 -2 5 1 6 2 5 7 5 5 6 -7 5 -3 6 2 5 7 6 0 5 -6" fill="none" stroke="url(#zg)" stroke-width="3"/></g>
<g transform="translate(2026.1,686.0)"><path d="M0 -123l5 -5 6 -5 5 -3 6 4 5 2 6 -4 5 1 5 8 6 11 5 5 6 -3 5 -3 6 1 5 7 5 3 6 1 5 5 6 3 5 7 6 -4 5 -8 6 -1 5 -2 5 3 6 1 5 3 6 0 5 -8 6 -9 5 -11 5 -4 6 -4 5 -4 6 -5 5 6 6 13 5 9 5 2 6 0 5 11 6 5 5 -4 6 -5 5 -4 5 -1 6 -1 5 -5 6 5 5 4 6 0 5 0 5 -4 6 0 5 2 6 2 5 -7 6 -14 5 -9 5 -9 6 1 5 4 6 9 5 13 6 7 5 6 6 -2 5 1 5 2 6 -4 5 -1 6 0 5 1 6 7 5 5 5 2 6 -8 5 -13 6 -9 5 -12 6 -4 5 1 5 1 6 3 5 2 6 2 5 2 6 0 5 3 5 2 6 5 5 1 6 0 5 -3 6 2 5 2 5 5 6 0 5 -5 6 -8 5 3 6 3 5 3 6 0 5 5 5 2 6 6 5 11 6 13 5 -2 6 -11 5 -13 5 -9 6 -2 5 3 6 4 5 8 6 1 5 -2 5 1 6 5 5 4 6 -4 5 -1 6 -6 5 -2 5 3 6 5 5 7 6 3 5 -10 6 -6 5 -2 5 -2 6 -1 5 1 6 -3 5 -5 6 -9 5 1 6 -3 5 -4 5 2 6 2 5 -1 6 7 5 9 6 3 5 -6 5 -6 6 4 5 3 6 2 5 -6 6 -6 5 -4 5 2 6 2 5 5 6 -2 5 -2 6 -6 5 -7 5 -1 6 0 5 6 6 7 5 12 6 8 5 2 5 -3 6 1 5 3 6 -1 5 -5 6 -5 5 -6 5 3 6 6 5 7 6 6 5 0 6 -6 5 -2 6 3 5 3 5 1 6 -3 5 -4 6 -2 5 -5 6 -2 5 5 5 -2 6 4 5 3 6 5 5 1 6 -6 5 -10V0H0Z" fill="#000"/><path d="M0 -123l5 -5 6 -5 5 -3 6 4 5 2 6 -4 5 1 5 8 6 11 5 5 6 -3 5 -3 6 1 5 7 5 3 6 1 5 5 6 3 5 7 6 -4 5 -8 6 -1 5 -2 5 3 6 1 5 3 6 0 5 -8 6 -9 5 -11 5 -4 6 -4 5 -4 6 -5 5 6 6 13 5 9 5 2 6 0 5 11 6 5 5 -4 6 -5 5 -4 5 -1 6 -1 5 -5 6 5 5 4 6 0 5 0 5 -4 6 0 5 2 6 2 5 -7 6 -14 5 -9 5 -9 6 1 5 4 6 9 5 13 6 7 5 6 6 -2 5 1 5 2 6 -4 5 -1 6 0 5 1 6 7 5 5 5 2 6 -8 5 -13 6 -9 5 -12 6 -4 5 1 5 1 6 3 5 2 6 2 5 2 6 0 5 3 5 2 6 5 5 1 6 0 5 -3 6 2 5 2 5 5 6 0 5 -5 6 -8 5 3 6 3 5 3 6 0 5 5 5 2 6 6 5 11 6 13 5 -2 6 -11 5 -13 5 -9 6 -2 5 3 6 4 5 8 6 1 5 -2 5 1 6 5 5 4 6 -4 5 -1 6 -6 5 -2 5 3 6 5 5 7 6 3 5 -10 6 -6 5 -2 5 -2 6 -1 5 1 6 -3 5 -5 6 -9 5 1 6 -3 5 -4 5 2 6 2 5 -1 6 7 5 9 6 3 5 -6 5 -6 6 4 5 3 6 2 5 -6 6 -6 5 -4 5 2 6 2 5 5 6 -2 5 -2 6 -6 5 -7 5 -1 6 0 5 6 6 7 5 12 6 8 5 2 5 -3 6 1 5 3 6 -1 5 -5 6 -5 5 -6 5 3 6 6 5 7 6 6 5 0 6 -6 5 -2 6 3 5 3 5 1 6 -3 5 -4 6 -2 5 -5 6 -2 5 5 5 -2 6 4 5 3 6 5 5 1 6 -6 5 -10" fill="none" stroke="url(#zg)" stroke-width="3"/></g>
<g transform="translate(2019.9,694.0)"><path d="M0 -111l5 -1 6 -3 5 -6 6 -8 5 3 6 8 5 9 5 0 6 0 5 4 6 8 5 10 6 2 5 -4 5 -2 6 -2 5 3 6 1 5 3 6 2 5 -5 6 -6 5 2 5 3 6 -3 5 4 6 -1 5 -8 6 -6 5 -12 5 -11 6 -3 5 3 6 6 5 5 6 0 5 5 5 0 6 5 5 3 6 -6 5 -5 6 1 5 12 5 7 6 -2 5 -9 6 -15 5 -7 6 6 5 8 5 8 6 -4 5 -4 6 0 5 -3 6 -4 5 -8 5 -9 6 -1 5 5 6 10 5 8 6 7 5 5 6 5 5 7 5 4 6 0 5 4 6 -1 5 -7 6 1 5 5 5 -1 6 -5 5 -9 6 -9 5 -11 6 -8 5 -6 5 1 6 4 5 3 6 -1 5 5 6 6 5 0 5 1 6 3 5 0 6 -6 5 -3 6 2 5 6 5 3 6 -4 5 -4 6 -7 5 -6 6 2 5 7 6 8 5 10 5 2 6 1 5 5 6 5 5 -1 6 -1 5 -6 5 -8 6 -4 5 1 6 -1 5 -1 6 2 5 6 5 8 6 9 5 6 6 -1 5 -5 6 -7 5 -7 5 5 6 13 5 7 6 -5 5 -14 6 -9 5 3 5 3 6 0 5 -4 6 -6 5 -1 6 -7 5 -1 6 0 5 -1 5 -4 6 5 5 4 6 7 5 4 6 -2 5 -3 5 -4 6 0 5 6 6 -1 5 -7 6 -1 5 -2 5 2 6 6 5 -1 6 -3 5 -3 6 -6 5 -6 5 -2 6 -6 5 -2 6 3 5 4 6 4 5 2 5 -1 6 5 5 8 6 0 5 1 6 -3 5 -3 5 7 6 8 5 7 6 11 5 9 6 5 5 -7 6 -12 5 -3 5 -8 6 -11 5 -7 6 -1 5 -1 6 1 5 2 5 2 6 2 5 1 6 -1 5 -1 6 -1 5 2V0H0Z" fill="#000"/><path d="M0 -111l5 -1 6 -3 5 -6 6 -8 5 3 6 8 5 9 5 0 6 0 5 4 6 8 5 10 6 2 5 -4 5 -2 6 -2 5 3 6 1 5 3 6 2 5 -5 6 -6 5 2 5 3 6 -3 5 4 6 -1 5 -8 6 -6 5 -12 5 -11 6 -3 5 3 6 6 5 5 6 0 5 5 5 0 6 5 5 3 6 -6 5 -5 6 1 5 12 5 7 6 -2 5 -9 6 -15 5 -7 6 6 5 8 5 8 6 -4 5 -4 6 0 5 -3 6 -4 5 -8 5 -9 6 -1 5 5 6 10 5 8 6 7 5 5 6 5 5 7 5 4 6 0 5 4 6 -1 5 -7 6 1 5 5 5 -1 6 -5 5 -9 6 -9 5 -11 6 -8 5 -6 5 1 6 4 5 3 6 -1 5 5 6 6 5 0 5 1 6 3 5 0 6 -6 5 -3 6 2 5 6 5 3 6 -4 5 -4 6 -7 5 -6 6 2 5 7 6 8 5 10 5 2 6 1 5 5 6 5 5 -1 6 -1 5 -6 5 -8 6 -4 5 1 6 -1 5 -1 6 2 5 6 5 8 6 9 5 6 6 -1 5 -5 6 -7 5 -7 5 5 6 13 5 7 6 -5 5 -14 6 -9 5 3 5 3 6 0 5 -4 6 -6 5 -1 6 -7 5 -1 6 0 5 -1 5 -4 6 5 5 4 6 7 5 4 6 -2 5 -3 5 -4 6 0 5 6 6 -1 5 -7 6 -1 5 -2 5 2 6 6 5 -1 6 -3 5 -3 6 -6 5 -6 5 -2 6 -6 5 -2 6 3 5 4 6 4 5 2 5 -1 6 5 5 8 6 0 5 1 6 -3 5 -3 5 7 6 8 5 7 6 11 5 9 6 5 5 -7 6 -12 5 -3 5 -8 6 -11 5 -7 6 -1 5 -1 6 1 5 2 5 2 6 2 5 1 6 -1 5 -1 6 -1 5 2" fill="none" stroke="url(#zg)" stroke-width="3"/></g>
<g transform="translate(2013.6,702.1)"><path d="M0 -108l5 3 6 3 5 -2 6 -2 5 -4 6 5 5 3 5 -1 6 0 5 -1 6 6 5 11 6 7 5 1 5 3 6 0 5 -3 6 -6 5 -8 6 -5 5 5 6 5 5 7 5 5 6 1 5 0 6 -9 5 -8 6 -3 5 -5 5 -12 6 -7 5 -3 6 8 5 5 6 3 5 -1 5 -5 6 -5 5 -5 6 7 5 11 6 -3 5 -1 5 4 6 11 5 -5 6 -20 5 -13 6 4 5 5 5 9 6 0 5 -2 6 -3 5 1 6 -2 5 -1 5 -1 6 3 5 4 6 13 5 4 6 4 5 7 6 3 5 4 5 -7 6 -8 5 -3 6 2 5 3 6 3 5 4 5 5 6 1 5 4 6 -2 5 -10 6 -13 5 -7 5 2 6 -1 5 1 6 0 5 2 6 -1 5 -4 5 -8 6 4 5 1 6 -3 5 1 6 1 5 5 5 3 6 0 5 -6 6 -7 5 -4 6 1 5 6 6 12 5 5 5 -4 6 3 5 5 6 3 5 -1 6 -4 5 0 5 -1 6 -1 5 -6 6 -8 5 -7 6 -4 5 5 5 6 6 11 5 4 6 7 5 0 6 -2 5 6 5 12 6 12 5 0 6 -4 5 -13 6 -3 5 2 5 0 6 -10 5 -9 6 -2 5 -1 6 -1 5 3 6 -6 5 0 5 4 6 1 5 -1 6 -5 5 -8 6 -2 5 1 5 2 6 7 5 3 6 7 5 -8 6 -6 5 -6 5 0 6 5 5 2 6 -2 5 -3 6 -1 5 -1 5 1 6 -2 5 -3 6 -3 5 0 6 -3 5 -3 5 2 6 2 5 -1 6 -4 5 4 6 10 5 12 5 14 6 7 5 -2 6 2 5 4 6 7 5 -6 6 -12 5 -9 5 -7 6 -7 5 -10 6 -6 5 3 6 2 5 2 5 -3 6 3 5 3 6 1 5 -3 6 -1 5 5V0H0Z" fill="#000"/><path d="M0 -108l5 3 6 3 5 -2 6 -2 5 -4 6 5 5 3 5 -1 6 0 5 -1 6 6 5 11 6 7 5 1 5 3 6 0 5 -3 6 -6 5 -8 6 -5 5 5 6 5 5 7 5 5 6 1 5 0 6 -9 5 -8 6 -3 5 -5 5 -12 6 -7 5 -3 6 8 5 5 6 3 5 -1 5 -5 6 -5 5 -5 6 7 5 11 6 -3 5 -1 5 4 6 11 5 -5 6 -20 5 -13 6 4 5 5 5 9 6 0 5 -2 6 -3 5 1 6 -2 5 -1 5 -1 6 3 5 4 6 13 5 4 6 4 5 7 6 3 5 4 5 -7 6 -8 5 -3 6 2 5 3 6 3 5 4 5 5 6 1 5 4 6 -2 5 -10 6 -13 5 -7 5 2 6 -1 5 1 6 0 5 2 6 -1 5 -4 5 -8 6 4 5 1 6 -3 5 1 6 1 5 5 5 3 6 0 5 -6 6 -7 5 -4 6 1 5 6 6 12 5 5 5 -4 6 3 5 5 6 3 5 -1 6 -4 5 0 5 -1 6 -1 5 -6 6 -8 5 -7 6 -4 5 5 5 6 6 11 5 4 6 7 5 0 6 -2 5 6 5 12 6 12 5 0 6 -4 5 -13 6 -3 5 2 5 0 6 -10 5 -9 6 -2 5 -1 6 -1 5 3 6 -6 5 0 5 4 6 1 5 -1 6 -5 5 -8 6 -2 5 1 5 2 6 7 5 3 6 7 5 -8 6 -6 5 -6 5 0 6 5 5 2 6 -2 5 -3 6 -1 5 -1 5 1 6 -2 5 -3 6 -3 5 0 6 -3 5 -3 5 2 6 2 5 -1 6 -4 5 4 6 10 5 12 5 14 6 7 5 -2 6 2 5 4 6 7 5 -6 6 -12 5 -9 5 -7 6 -7 5 -10 6 -6 5 3 6 2 5 2 5 -3 6 3 5 3 6 1 5 -3 6 -1 5 5" fill="none" stroke="url(#zg)" stroke-width="3"/></g>
<g transform="translate(2007.4,710.1)"><path d="M0 -110l5 3 6 2 5 2 6 5 5 6 6 -2 5 -3 5 -1 6 4 5 4 6 4 5 2 6 -2 5 -5 5 -16 6 -8 5 4 6 -1 5 -3 6 -3 5 6 6 13 5 9 5 0 6 -2 5 0 6 1 5 2 6 -2 5 -1 5 -1 6 -4 5 -2 6 2 5 3 6 2 5 0 5 -10 6 -6 5 -2 6 2 5 1 6 0 5 4 5 5 6 2 5 -4 6 -4 5 2 6 0 5 -5 5 -2 6 -2 5 -1 6 5 5 -5 6 -4 5 -5 5 1 6 6 5 9 6 9 5 6 6 5 5 6 6 5 5 0 5 -5 6 -9 5 -1 6 5 5 11 6 8 5 0 5 5 6 3 5 1 6 -4 5 -11 6 -6 5 -9 5 -3 6 -4 5 -4 6 1 5 0 6 3 5 -2 5 -4 6 -4 5 1 6 -4 5 2 6 -2 5 2 5 6 6 7 5 3 6 -6 5 -2 6 3 5 5 6 -4 5 -4 5 -6 6 0 5 7 6 3 5 -2 6 2 5 5 5 0 6 -8 5 -14 6 -14 5 -1 6 1 5 0 5 5 6 3 5 6 6 2 5 6 6 8 5 7 5 4 6 3 5 9 6 2 5 -1 6 -6 5 -1 5 -2 6 -8 5 -1 6 6 5 0 6 -2 5 -7 6 3 5 0 5 -4 6 -8 5 -4 6 -8 5 -14 6 -6 5 6 5 4 6 2 5 4 6 7 5 6 6 0 5 -5 5 0 6 4 5 9 6 1 5 -5 6 1 5 -6 5 -2 6 -1 5 -1 6 -8 5 -6 6 -1 5 -2 5 2 6 4 5 -1 6 -1 5 4 6 1 5 4 5 9 6 13 5 6 6 2 5 5 6 3 5 -4 6 -13 5 -4 5 -7 6 -8 5 -6 6 -2 5 -1 6 0 5 -1 5 -2 6 4 5 3 6 -2 5 -4 6 2 5 5V0H0Z" fill="#000"/><path d="M0 -110l5 3 6 2 5 2 6 5 5 6 6 -2 5 -3 5 -1 6 4 5 4 6 4 5 2 6 -2 5 -5 5 -16 6 -8 5 4 6 -1 5 -3 6 -3 5 6 6 13 5 9 5 0 6 -2 5 0 6 1 5 2 6 -2 5 -1 5 -1 6 -4 5 -2 6 2 5 3 6 2 5 0 5 -10 6 -6 5 -2 6 2 5 1 6 0 5 4 5 5 6 2 5 -4 6 -4 5 2 6 0 5 -5 5 -2 6 -2 5 -1 6 5 5 -5 6 -4 5 -5 5 1 6 6 5 9 6 9 5 6 6 5 5 6 6 5 5 0 5 -5 6 -9 5 -1 6 5 5 11 6 8 5 0 5 5 6 3 5 1 6 -4 5 -11 6 -6 5 -9 5 -3 6 -4 5 -4 6 1 5 0 6 3 5 -2 5 -4 6 -4 5 1 6 -4 5 2 6 -2 5 2 5 6 6 7 5 3 6 -6 5 -2 6 3 5 5 6 -4 5 -4 5 -6 6 0 5 7 6 3 5 -2 6 2 5 5 5 0 6 -8 5 -14 6 -14 5 -1 6 1 5 0 5 5 6 3 5 6 6 2 5 6 6 8 5 7 5 4 6 3 5 9 6 2 5 -1 6 -6 5 -1 5 -2 6 -8 5 -1 6 6 5 0 6 -2 5 -7 6 3 5 0 5 -4 6 -8 5 -4 6 -8 5 -14 6 -6 5 6 5 4 6 2 5 4 6 7 5 6 6 0 5 -5 5 0 6 4 5 9 6 1 5 -5 6 1 5 -6 5 -2 6 -1 5 -1 6 -8 5 -6 6 -1 5 -2 5 2 6 4 5 -1 6 -1 5 4 6 1 5 4 5 9 6 13 5 6 6 2 5 5 6 3 5 -4 6 -13 5 -4 5 -7 6 -8 5 -6 6 -2 5 -1 6 0 5 -1 5 -2 6 4 5 3 6 -2 5 -4 6 2 5 5" fill="none" stroke="url(#zg)" stroke-width="3"/></g>
<g transform="translate(2001.1,718.1)"><path d="M0 -105l5 -6 6 -3 5 3 6 1 5 3 6 6 5 8 5 3 6 6 5 3 6 4 5 -7 6 -10 5 -12 5 -6 6 -12 5 -10 6 0 5 5 6 12 5 13 6 8 5 2 5 -4 6 -4 5 -4 6 8 5 7 6 2 5 2 5 -2 6 0 5 6 6 4 5 4 6 -6 5 -8 5 -7 6 -7 5 -2 6 0 5 -1 6 -2 5 -3 5 0 6 -3 5 -4 6 3 5 3 6 7 5 4 5 -3 6 -1 5 -3 6 -2 5 5 6 7 5 -3 5 -1 6 2 5 3 6 1 5 2 6 3 5 3 6 1 5 1 5 -2 6 3 5 6 6 0 5 2 6 5 5 2 5 4 6 4 5 7 6 -5 5 -9 6 -4 5 -6 5 -7 6 -9 5 -3 6 -2 5 4 6 8 5 8 5 1 6 -3 5 -5 6 -2 5 -3 6 -5 5 -3 5 0 6 7 5 3 6 3 5 4 6 -1 5 -7 6 -3 5 5 5 5 6 5 5 -5 6 -8 5 -1 6 11 5 6 5 -4 6 -20 5 -17 6 -8 5 1 6 6 5 -1 5 -5 6 -4 5 9 6 12 5 8 6 7 5 2 5 0 6 0 5 3 6 0 5 -2 6 -6 5 4 5 8 6 -1 5 -7 6 -3 5 -2 6 6 5 7 6 5 5 -4 5 -8 6 -6 5 -3 6 -7 5 -4 6 -5 5 5 5 -1 6 4 5 -4 6 7 5 6 6 4 5 1 5 3 6 6 5 5 6 -5 5 0 6 0 5 -3 5 0 6 0 5 -5 6 -8 5 -3 6 3 5 1 5 -1 6 -1 5 4 6 -4 5 -1 6 -3 5 2 5 5 6 7 5 0 6 -5 5 3 6 3 5 6 6 -4 5 -1 5 -1 6 -1 5 -3 6 -12 5 -4 6 5 5 3 5 3 6 5 5 -4 6 -2 5 3 6 4 5 -3V0H0Z" fill="#000"/><path d="M0 -105l5 -6 6 -3 5 3 6 1 5 3 6 6 5 8 5 3 6 6 5 3 6 4 5 -7 6 -10 5 -12 5 -6 6 -12 5 -10 6 0 5 5 6 12 5 13 6 8 5 2 5 -4 6 -4 5 -4 6 8 5 7 6 2 5 2 5 -2 6 0 5 6 6 4 5 4 6 -6 5 -8 5 -7 6 -7 5 -2 6 0 5 -1 6 -2 5 -3 5 0 6 -3 5 -4 6 3 5 3 6 7 5 4 5 -3 6 -1 5 -3 6 -2 5 5 6 7 5 -3 5 -1 6 2 5 3 6 1 5 2 6 3 5 3 6 1 5 1 5 -2 6 3 5 6 6 0 5 2 6 5 5 2 5 4 6 4 5 7 6 -5 5 -9 6 -4 5 -6 5 -7 6 -9 5 -3 6 -2 5 4 6 8 5 8 5 1 6 -3 5 -5 6 -2 5 -3 6 -5 5 -3 5 0 6 7 5 3 6 3 5 4 6 -1 5 -7 6 -3 5 5 5 5 6 5 5 -5 6 -8 5 -1 6 11 5 6 5 -4 6 -20 5 -17 6 -8 5 1 6 6 5 -1 5 -5 6 -4 5 9 6 12 5 8 6 7 5 2 5 0 6 0 5 3 6 0 5 -2 6 -6 5 4 5 8 6 -1 5 -7 6 -3 5 -2 6 6 5 7 6 5 5 -4 5 -8 6 -6 5 -3 6 -7 5 -4 6 -5 5 5 5 -1 6 4 5 -4 6 7 5 6 6 4 5 1 5 3 6 6 5 5 6 -5 5 0 6 0 5 -3 5 0 6 0 5 -5 6 -8 5 -3 6 3 5 1 5 -1 6 -1 5 4 6 -4 5 -1 6 -3 5 2 5 5 6 7 5 0 6 -5 5 3 6 3 5 6 6 -4 5 -1 5 -1 6 -1 5 -3 6 -12 5 -4 6 5 5 3 5 3 6 5 5 -4 6 -2 5 3 6 4 5 -3" fill="none" stroke="url(#zg)" stroke-width="3"/></g>
<g transform="translate(1994.9,726.2)"><path d="M0 -104l5 -1 6 4 5 -1 6 -3 5 -14 6 -5 5 6 5 10 6 13 5 3 6 2 5 -9 6 -5 5 -5 5 -3 6 -10 5 -5 6 -3 5 3 6 5 5 -2 6 2 5 4 5 11 6 10 5 3 6 2 5 0 6 -3 5 -1 5 -1 6 -1 5 7 6 6 5 0 6 -11 5 -12 5 -3 6 2 5 4 6 7 5 -1 6 -8 5 -8 5 -5 6 2 5 3 6 9 5 7 6 3 5 -7 5 -11 6 -9 5 -8 6 -6 5 10 6 20 5 14 5 10 6 -5 5 -3 6 -4 5 -6 6 -5 5 -2 6 0 5 1 5 4 6 1 5 1 6 2 5 9 6 8 5 4 5 2 6 -3 5 -6 6 -12 5 -10 6 -5 5 4 5 -4 6 -4 5 -3 6 -1 5 6 6 13 5 11 5 7 6 -3 5 -1 6 -2 5 -3 6 -4 5 -2 5 -6 6 -2 5 -1 6 4 5 -5 6 -7 5 -3 6 1 5 6 5 7 6 2 5 1 6 0 5 9 6 7 5 2 5 -1 6 -9 5 -7 6 -10 5 -1 6 -5 5 -7 5 -6 6 7 5 13 6 7 5 -5 6 -1 5 -2 5 1 6 8 5 5 6 5 5 -5 6 1 5 2 5 -2 6 0 5 -1 6 5 5 -1 6 -1 5 -5 6 -2 5 7 5 12 6 6 5 -5 6 -4 5 -6 6 -6 5 -7 5 2 6 5 5 3 6 3 5 6 6 7 5 2 5 -1 6 0 5 1 6 -1 5 1 6 -1 5 -1 5 4 6 9 5 10 6 0 5 -5 6 -3 5 -4 5 -4 6 -4 5 3 6 -7 5 -1 6 -5 5 4 5 1 6 2 5 -1 6 8 5 7 6 7 5 -5 6 -9 5 2 5 6 6 3 5 -8 6 -10 5 -6 6 4 5 -1 5 -9 6 -8 5 1 6 -1 5 2 6 -4 5 0V0H0Z" fill="#000"/><path d="M0 -104l5 -1 6 4 5 -1 6 -3 5 -14 6 -5 5 6 5 10 6 13 5 3 6 2 5 -9 6 -5 5 -5 5 -3 6 -10 5 -5 6 -3 5 3 6 5 5 -2 6 2 5 4 5 11 6 10 5 3 6 2 5 0 6 -3 5 -1 5 -1 6 -1 5 7 6 6 5 0 6 -11 5 -12 5 -3 6 2 5 4 6 7 5 -1 6 -8 5 -8 5 -5 6 2 5 3 6 9 5 7 6 3 5 -7 5 -11 6 -9 5 -8 6 -6 5 10 6 20 5 14 5 10 6 -5 5 -3 6 -4 5 -6 6 -5 5 -2 6 0 5 1 5 4 6 1 5 1 6 2 5 9 6 8 5 4 5 2 6 -3 5 -6 6 -12 5 -10 6 -5 5 4 5 -4 6 -4 5 -3 6 -1 5 6 6 13 5 11 5 7 6 -3 5 -1 6 -2 5 -3 6 -4 5 -2 5 -6 6 -2 5 -1 6 4 5 -5 6 -7 5 -3 6 1 5 6 5 7 6 2 5 1 6 0 5 9 6 7 5 2 5 -1 6 -9 5 -7 6 -10 5 -1 6 -5 5 -7 5 -6 6 7 5 13 6 7 5 -5 6 -1 5 -2 5 1 6 8 5 5 6 5 5 -5 6 1 5 2 5 -2 6 0 5 -1 6 5 5 -1 6 -1 5 -5 6 -2 5 7 5 12 6 6 5 -5 6 -4 5 -6 6 -6 5 -7 5 2 6 5 5 3 6 3 5 6 6 7 5 2 5 -1 6 0 5 1 6 -1 5 1 6 -1 5 -1 5 4 6 9 5 10 6 0 5 -5 6 -3 5 -4 5 -4 6 -4 5 3 6 -7 5 -1 6 -5 5 4 5 1 6 2 5 -1 6 8 5 7 6 7 5 -5 6 -9 5 2 5 6 6 3 5 -8 6 -10 5 -6 6 4 5 -1 5 -9 6 -8 5 1 6 -1 5 2 6 -4 5 0" fill="none" stroke="url(#zg)" stroke-width="3"/></g>
<g transform="translate(1988.6,734.2)"><path d="M0 -109l5 6 6 4 5 -1 6 -8 5 -8 6 -1 5 4 5 9 6 1 5 -4 6 -2 5 -2 6 -2 5 -7 5 1 6 -3 5 -9 6 -8 5 -9 6 -2 5 4 6 13 5 16 5 12 6 13 5 8 6 4 5 2 6 2 5 1 5 -1 6 -10 5 -6 6 -10 5 -6 6 -10 5 -4 5 4 6 11 5 5 6 -1 5 -4 6 -5 5 -1 5 8 6 0 5 6 6 3 5 -1 6 -4 5 -10 5 -5 6 -2 5 -4 6 -2 5 1 6 10 5 6 5 3 6 -1 5 -4 6 -3 5 -2 6 1 5 -2 6 -1 5 -10 5 -12 6 4 5 9 6 13 5 0 6 2 5 7 5 9 6 -1 5 -8 6 -9 5 0 6 2 5 -2 5 -6 6 -3 5 -3 6 1 5 0 6 6 5 11 5 7 6 2 5 -2 6 -3 5 -8 6 -1 5 0 5 -3 6 -4 5 -1 6 -1 5 -1 6 -9 5 -6 6 -2 5 11 5 11 6 11 5 6 6 3 5 6 6 2 5 -4 5 -9 6 -6 5 -4 6 2 5 0 6 -5 5 -7 5 2 6 8 5 4 6 -2 5 -7 6 -5 5 -1 5 6 6 15 5 4 6 1 5 -6 6 -1 5 -3 5 -1 6 2 5 8 6 10 5 0 6 -3 5 -5 6 0 5 11 5 13 6 1 5 -4 6 -7 5 -6 6 -9 5 -8 5 3 6 7 5 8 6 0 5 -3 6 2 5 3 5 8 6 8 5 6 6 0 5 -11 6 -9 5 -2 5 4 6 3 5 3 6 1 5 -1 6 3 5 8 5 3 6 -4 5 -8 6 0 5 -2 6 1 5 1 5 3 6 6 5 0 6 -2 5 -2 6 6 5 -1 6 -6 5 -7 5 0 6 -5 5 -1 6 -3 5 -5 6 4 5 3 5 2 6 -3 5 -2 6 -7 5 -7 6 -3 5 -1V0H0Z" fill="#000"/><path d="M0 -109l5 6 6 4 5 -1 6 -8 5 -8 6 -1 5 4 5 9 6 1 5 -4 6 -2 5 -2 6 -2 5 -7 5 1 6 -3 5 -9 6 -8 5 -9 6 -2 5 4 6 13 5 16 5 12 6 13 5 8 6 4 5 2 6 2 5 1 5 -1 6 -10 5 -6 6 -10 5 -6 6 -10 5 -4 5 4 6 11 5 5 6 -1 5 -4 6 -5 5 -1 5 8 6 0 5 6 6 3 5 -1 6 -4 5 -10 5 -5 6 -2 5 -4 6 -2 5 1 6 10 5 6 5 3 6 -1 5 -4 6 -3 5 -2 6 1 5 -2 6 -1 5 -10 5 -12 6 4 5 9 6 13 5 0 6 2 5 7 5 9 6 -1 5 -8 6 -9 5 0 6 2 5 -2 5 -6 6 -3 5 -3 6 1 5 0 6 6 5 11 5 7 6 2 5 -2 6 -3 5 -8 6 -1 5 0 5 -3 6 -4 5 -1 6 -1 5 -1 6 -9 5 -6 6 -2 5 11 5 11 6 11 5 6 6 3 5 6 6 2 5 -4 5 -9 6 -6 5 -4 6 2 5 0 6 -5 5 -7 5 2 6 8 5 4 6 -2 5 -7 6 -5 5 -1 5 6 6 15 5 4 6 1 5 -6 6 -1 5 -3 5 -1 6 2 5 8 6 10 5 0 6 -3 5 -5 6 0 5 11 5 13 6 1 5 -4 6 -7 5 -6 6 -9 5 -8 5 3 6 7 5 8 6 0 5 -3 6 2 5 3 5 8 6 8 5 6 6 0 5 -11 6 -9 5 -2 5 4 6 3 5 3 6 1 5 -1 6 3 5 8 5 3 6 -4 5 -8 6 0 5 -2 6 1 5 1 5 3 6 6 5 0 6 -2 5 -2 6 6 5 -1 6 -6 5 -7 5 0 6 -5 5 -1 6 -3 5 -5 6 4 5 3 5 2 6 -3 5 -2 6 -7 5 -7 6 -3 5 -1" fill="none" stroke="url(#zg)" stroke-width="3"/></g>
<g transform="translate(1982.3,742.3)"><path d="M0 -109l5 -2 6 4 5 4 6 7 5 8 6 6 5 1 5 -8 6 -15 5 -7 6 3 5 8 6 0 5 -4 5 -9 6 -13 5 -9 6 -7 5 -5 6 0 5 3 6 13 5 17 5 13 6 5 5 6 6 3 5 4 6 6 5 -4 5 -14 6 -14 5 -9 6 -2 5 1 6 -4 5 -4 5 -1 6 4 5 -2 6 -2 5 2 6 4 5 4 5 2 6 0 5 4 6 0 5 1 6 0 5 1 5 3 6 -2 5 -2 6 -3 5 -2 6 2 5 -6 5 -8 6 -3 5 9 6 6 5 0 6 -3 5 -4 6 0 5 -8 5 -4 6 3 5 6 6 1 5 -1 6 -1 5 3 5 14 6 14 5 5 6 -1 5 -1 6 0 5 -3 5 -3 6 -3 5 -7 6 -1 5 3 6 5 5 7 5 9 6 4 5 -2 6 -6 5 -13 6 -10 5 -6 5 -2 6 9 5 5 6 1 5 -1 6 0 5 -1 6 -4 5 4 5 6 6 8 5 1 6 -3 5 -1 6 2 5 8 5 -4 6 -3 5 -3 6 0 5 -4 6 -3 5 -7 5 -7 6 -1 5 -4 6 -11 5 -8 6 5 5 9 5 11 6 11 5 2 6 0 5 4 6 1 5 -2 5 -3 6 3 5 1 6 -3 5 -3 6 4 5 1 6 -2 5 7 5 6 6 2 5 -2 6 1 5 0 6 -11 5 -4 5 5 6 6 5 1 6 1 5 -3 6 1 5 4 5 9 6 7 5 0 6 -3 5 -7 6 -11 5 -5 5 -2 6 -5 5 -9 6 -1 5 2 6 9 5 6 5 0 6 -4 5 1 6 4 5 5 6 4 5 7 5 6 6 4 5 -7 6 -21 5 -13 6 -2 5 4 6 -3 5 -6 5 1 6 4 5 4 6 0 5 1 6 6 5 0 5 4 6 4 5 -1 6 -3 5 0 6 3 5 -4V0H0Z" fill="#000"/><path d="M0 -109l5 -2 6 4 5 4 6 7 5 8 6 6 5 1 5 -8 6 -15 5 -7 6 3 5 8 6 0 5 -4 5 -9 6 -13 5 -9 6 -7 5 -5 6 0 5 3 6 13 5 17 5 13 6 5 5 6 6 3 5 4 6 6 5 -4 5 -14 6 -14 5 -9 6 -2 5 1 6 -4 5 -4 5 -1 6 4 5 -2 6 -2 5 2 6 4 5 4 5 2 6 0 5 4 6 0 5 1 6 0 5 1 5 3 6 -2 5 -2 6 -3 5 -2 6 2 5 -6 5 -8 6 -3 5 9 6 6 5 0 6 -3 5 -4 6 0 5 -8 5 -4 6 3 5 6 6 1 5 -1 6 -1 5 3 5 14 6 14 5 5 6 -1 5 -1 6 0 5 -3 5 -3 6 -3 5 -7 6 -1 5 3 6 5 5 7 5 9 6 4 5 -2 6 -6 5 -13 6 -10 5 -6 5 -2 6 9 5 5 6 1 5 -1 6 0 5 -1 6 -4 5 4 5 6 6 8 5 1 6 -3 5 -1 6 2 5 8 5 -4 6 -3 5 -3 6 0 5 -4 6 -3 5 -7 5 -7 6 -1 5 -4 6 -11 5 -8 6 5 5 9 5 11 6 11 5 2 6 0 5 4 6 1 5 -2 5 -3 6 3 5 1 6 -3 5 -3 6 4 5 1 6 -2 5 7 5 6 6 2 5 -2 6 1 5 0 6 -11 5 -4 5 5 6 6 5 1 6 1 5 -3 6 1 5 4 5 9 6 7 5 0 6 -3 5 -7 6 -11 5 -5 5 -2 6 -5 5 -9 6 -1 5 2 6 9 5 6 5 0 6 -4 5 1 6 4 5 5 6 4 5 7 5 6 6 4 5 -7 6 -21 5 -13 6 -2 5 4 6 -3 5 -6 5 1 6 4 5 4 6 0 5 1 6 6 5 0 5 4 6 4 5 -1 6 -3 5 0 6 3 5 -4" fill="none" stroke="url(#zg)" stroke-width="3"/></g>
<g transform="translate(1976.1,750.3)"><path d="M0 -100l5 2 6 -1 5 -5 6 -2 5 4 6 8 5 -1 5 -9 6 -4 5 -4 6 3 5 2 6 1 5 -8 5 -9 6 -1 5 -3 6 -4 5 -1 6 -5 5 5 6 8 5 4 5 -8 6 -2 5 6 6 6 5 6 6 7 5 0 5 -6 6 -9 5 -7 6 4 5 3 6 3 5 -7 5 -3 6 -4 5 -3 6 1 5 5 6 4 5 6 5 8 6 2 5 -5 6 -1 5 -1 6 2 5 0 5 -3 6 0 5 3 6 5 5 0 6 -1 5 -2 5 1 6 -1 5 7 6 7 5 -4 6 -11 5 -12 6 -6 5 -4 5 3 6 0 5 9 6 6 5 2 6 1 5 -3 5 14 6 8 5 2 6 -3 5 0 6 6 5 2 5 -2 6 -3 5 -4 6 0 5 2 6 2 5 3 5 1 6 2 5 -8 6 -8 5 -6 6 -4 5 -3 5 4 6 1 5 3 6 1 5 7 6 2 5 -4 6 -7 5 -9 5 -3 6 7 5 7 6 6 5 4 6 3 5 5 5 -1 6 -2 5 -7 6 -7 5 -3 6 2 5 -1 5 -6 6 -9 5 6 6 -3 5 -7 6 -6 5 6 5 9 6 9 5 6 6 9 5 10 6 5 5 1 5 -4 6 -7 5 -7 6 -9 5 1 6 5 5 -5 6 -6 5 2 5 7 6 5 5 7 6 8 5 2 6 -3 5 -7 5 -4 6 -7 5 0 6 -4 5 -7 6 -2 5 7 5 3 6 2 5 -3 6 -2 5 -1 6 -7 5 -4 5 -1 6 -5 5 -15 6 -9 5 -6 6 7 5 5 5 5 6 0 5 -1 6 1 5 2 6 15 5 14 5 8 6 5 5 -3 6 -10 5 -9 6 -3 5 7 6 0 5 -4 5 -2 6 1 5 7 6 2 5 2 6 -6 5 -5 5 -2 6 0 5 5 6 8 5 2 6 -2 5 -5V0H0Z" fill="#000"/><path d="M0 -100l5 2 6 -1 5 -5 6 -2 5 4 6 8 5 -1 5 -9 6 -4 5 -4 6 3 5 2 6 1 5 -8 5 -9 6 -1 5 -3 6 -4 5 -1 6 -5 5 5 6 8 5 4 5 -8 6 -2 5 6 6 6 5 6 6 7 5 0 5 -6 6 -9 5 -7 6 4 5 3 6 3 5 -7 5 -3 6 -4 5 -3 6 1 5 5 6 4 5 6 5 8 6 2 5 -5 6 -1 5 -1 6 2 5 0 5 -3 6 0 5 3 6 5 5 0 6 -1 5 -2 5 1 6 -1 5 7 6 7 5 -4 6 -11 5 -12 6 -6 5 -4 5 3 6 0 5 9 6 6 5 2 6 1 5 -3 5 14 6 8 5 2 6 -3 5 0 6 6 5 2 5 -2 6 -3 5 -4 6 0 5 2 6 2 5 3 5 1 6 2 5 -8 6 -8 5 -6 6 -4 5 -3 5 4 6 1 5 3 6 1 5 7 6 2 5 -4 6 -7 5 -9 5 -3 6 7 5 7 6 6 5 4 6 3 5 5 5 -1 6 -2 5 -7 6 -7 5 -3 6 2 5 -1 5 -6 6 -9 5 6 6 -3 5 -7 6 -6 5 6 5 9 6 9 5 6 6 9 5 10 6 5 5 1 5 -4 6 -7 5 -7 6 -9 5 1 6 5 5 -5 6 -6 5 2 5 7 6 5 5 7 6 8 5 2 6 -3 5 -7 5 -4 6 -7 5 0 6 -4 5 -7 6 -2 5 7 5 3 6 2 5 -3 6 -2 5 -1 6 -7 5 -4 5 -1 6 -5 5 -15 6 -9 5 -6 6 7 5 5 5 5 6 0 5 -1 6 1 5 2 6 15 5 14 5 8 6 5 5 -3 6 -10 5 -9 6 -3 5 7 6 0 5 -4 5 -2 6 1 5 7 6 2 5 2 6 -6 5 -5 5 -2 6 0 5 5 6 8 5 2 6 -2 5 -5" fill="none" stroke="url(#zg)" stroke-width="3"/></g>
<g transform="translate(1969.8,758.4)"><path d="M0 -122l5 -6 6 -6 5 2 6 1 5 8 6 1 5 2 5 1 6 -4 5 -4 6 4 5 3 6 -3 5 -12 5 -2 6 10 5 4 6 -3 5 -1 6 1 5 -2 6 10 5 4 5 -6 6 1 5 2 6 2 5 -10 6 -9 5 1 5 7 6 6 5 5 6 5 5 10 6 2 5 -6 5 -6 6 -16 5 -10 6 1 5 1 6 11 5 7 5 2 6 -7 5 -9 6 -2 5 -2 6 2 5 -1 5 2 6 6 5 13 6 6 5 8 6 3 5 2 5 -1 6 -3 5 -3 6 2 5 2 6 -6 5 -6 6 -1 5 -6 5 -7 6 -8 5 6 6 6 5 14 6 4 5 2 5 0 6 0 5 0 6 -2 5 0 6 4 5 0 5 -6 6 -2 5 6 6 4 5 -7 6 -5 5 -3 5 3 6 2 5 -5 6 -3 5 -4 6 3 5 2 5 0 6 3 5 5 6 8 5 2 6 3 5 -6 6 -3 5 -5 5 -3 6 0 5 -2 6 2 5 5 6 5 5 0 5 -6 6 -12 5 -9 6 1 5 11 6 13 5 8 5 -2 6 -2 5 2 6 1 5 -3 6 -2 5 0 5 5 6 -3 5 -4 6 -4 5 -1 6 -1 5 4 5 4 6 -1 5 -5 6 -8 5 -3 6 -7 5 -4 6 2 5 2 5 -2 6 -1 5 7 6 9 5 3 6 -5 5 -12 5 -9 6 -6 5 1 6 4 5 -2 6 2 5 1 5 7 6 1 5 -3 6 -2 5 -5 6 -1 5 5 5 -1 6 -12 5 -15 6 -9 5 2 6 13 5 13 5 6 6 0 5 1 6 -9 5 -8 6 7 5 13 5 7 6 3 5 3 6 1 5 -8 6 -2 5 9 6 9 5 4 5 -1 6 -1 5 -2 6 -8 5 -7 6 -4 5 7 5 8 6 11 5 5 6 -7 5 -11 6 -9 5 -6V0H0Z" fill="#000"/><path d="M0 -122l5 -6 6 -6 5 2 6 1 5 8 6 1 5 2 5 1 6 -4 5 -4 6 4 5 3 6 -3 5 -12 5 -2 6 10 5 4 6 -3 5 -1 6 1 5 -2 6 10 5 4 5 -6 6 1 5 2 6 2 5 -10 6 -9 5 1 5 7 6 6 5 5 6 5 5 10 6 2 5 -6 5 -6 6 -16 5 -10 6 1 5 1 6 11 5 7 5 2 6 -7 5 -9 6 -2 5 -2 6 2 5 -1 5 2 6 6 5 13 6 6 5 8 6 3 5 2 5 -1 6 -3 5 -3 6 2 5 2 6 -6 5 -6 6 -1 5 -6 5 -7 6 -8 5 6 6 6 5 14 6 4 5 2 5 0 6 0 5 0 6 -2 5 0 6 4 5 0 5 -6 6 -2 5 6 6 4 5 -7 6 -5 5 -3 5 3 6 2 5 -5 6 -3 5 -4 6 3 5 2 5 0 6 3 5 5 6 8 5 2 6 3 5 -6 6 -3 5 -5 5 -3 6 0 5 -2 6 2 5 5 6 5 5 0 5 -6 6 -12 5 -9 6 1 5 11 6 13 5 8 5 -2 6 -2 5 2 6 1 5 -3 6 -2 5 0 5 5 6 -3 5 -4 6 -4 5 -1 6 -1 5 4 5 4 6 -1 5 -5 6 -8 5 -3 6 -7 5 -4 6 2 5 2 5 -2 6 -1 5 7 6 9 5 3 6 -5 5 -12 5 -9 6 -6 5 1 6 4 5 -2 6 2 5 1 5 7 6 1 5 -3 6 -2 5 -5 6 -1 5 5 5 -1 6 -12 5 -15 6 -9 5 2 6 13 5 13 5 6 6 0 5 1 6 -9 5 -8 6 7 5 13 5 7 6 3 5 3 6 1 5 -8 6 -2 5 9 6 9 5 4 5 -1 6 -1 5 -2 6 -8 5 -7 6 -4 5 7 5 8 6 11 5 5 6 -7 5 -11 6 -9 5 -6" fill="none" stroke="url(#zg)" stroke-width="3"/></g>
<g transform="translate(1963.6,766.4)"><path d="M0 -122l5 -5 6 -1 5 -5 6 -4 5 0 6 -1 5 8 5 2 6 5 5 0 6 -1 5 0 6 -1 5 -1 5 3 6 -1 5 0 6 1 5 -2 6 1 5 6 6 5 5 8 5 1 6 -5 5 -6 6 -3 5 -1 6 -7 5 -2 5 3 6 5 5 7 6 4 5 -2 6 -1 5 -1 5 -6 6 -2 5 1 6 5 5 5 6 -2 5 -4 5 0 6 -8 5 -14 6 -13 5 0 6 9 5 11 5 7 6 2 5 7 6 7 5 10 6 3 5 -1 5 -5 6 0 5 1 6 -5 5 -1 6 0 5 6 6 4 5 1 5 -9 6 -10 5 -11 6 6 5 10 6 5 5 -2 5 -2 6 1 5 3 6 3 5 1 6 6 5 -1 5 -7 6 -6 5 -3 6 3 5 -4 6 -6 5 -4 5 2 6 5 5 0 6 -2 5 2 6 3 5 6 5 1 6 -3 5 -1 6 -1 5 1 6 4 5 3 6 -4 5 -7 5 0 6 3 5 -2 6 -3 5 2 6 -1 5 -10 5 -12 6 -4 5 4 6 11 5 13 6 12 5 7 5 -1 6 1 5 -2 6 -10 5 -3 6 -2 5 8 5 5 6 -4 5 -11 6 -11 5 -7 6 -2 5 1 5 -1 6 -3 5 2 6 3 5 6 6 -4 5 -8 6 -4 5 -1 5 4 6 4 5 5 6 -4 5 -6 6 -3 5 -2 5 -5 6 -2 5 2 6 -2 5 1 6 -2 5 0 5 6 6 -3 5 -4 6 1 5 -1 6 -3 5 -6 5 1 6 0 5 -5 6 2 5 9 6 18 5 10 5 7 6 1 5 -4 6 -6 5 -7 6 -9 5 1 5 2 6 5 5 -4 6 -4 5 -2 6 11 5 6 6 7 5 0 5 -3 6 -2 5 -3 6 -5 5 -3 6 -4 5 6 5 12 6 7 5 -3 6 -11 5 -8 6 9 5 6V0H0Z" fill="#000"/><path d="M0 -122l5 -5 6 -1 5 -5 6 -4 5 0 6 -1 5 8 5 2 6 5 5 0 6 -1 5 0 6 -1 5 -1 5 3 6 -1 5 0 6 1 5 -2 6 1 5 6 6 5 5 8 5 1 6 -5 5 -6 6 -3 5 -1 6 -7 5 -2 5 3 6 5 5 7 6 4 5 -2 6 -1 5 -1 5 -6 6 -2 5 1 6 5 5 5 6 -2 5 -4 5 0 6 -8 5 -14 6 -13 5 0 6 9 5 11 5 7 6 2 5 7 6 7 5 10 6 3 5 -1 5 -5 6 0 5 1 6 -5 5 -1 6 0 5 6 6 4 5 1 5 -9 6 -10 5 -11 6 6 5 10 6 5 5 -2 5 -2 6 1 5 3 6 3 5 1 6 6 5 -1 5 -7 6 -6 5 -3 6 3 5 -4 6 -6 5 -4 5 2 6 5 5 0 6 -2 5 2 6 3 5 6 5 1 6 -3 5 -1 6 -1 5 1 6 4 5 3 6 -4 5 -7 5 0 6 3 5 -2 6 -3 5 2 6 -1 5 -10 5 -12 6 -4 5 4 6 11 5 13 6 12 5 7 5 -1 6 1 5 -2 6 -10 5 -3 6 -2 5 8 5 5 6 -4 5 -11 6 -11 5 -7 6 -2 5 1 5 -1 6 -3 5 2 6 3 5 6 6 -4 5 -8 6 -4 5 -1 5 4 6 4 5 5 6 -4 5 -6 6 -3 5 -2 5 -5 6 -2 5 2 6 -2 5 1 6 -2 5 0 5 6 6 -3 5 -4 6 1 5 -1 6 -3 5 -6 5 1 6 0 5 -5 6 2 5 9 6 18 5 10 5 7 6 1 5 -4 6 -6 5 -7 6 -9 5 1 5 2 6 5 5 -4 6 -4 5 -2 6 11 5 6 6 7 5 0 5 -3 6 -2 5 -3 6 -5 5 -3 6 -4 5 6 5 12 6 7 5 -3 6 -11 5 -8 6 9 5 6" fill="none" stroke="url(#zg)" stroke-width="3"/></g>
<g transform="translate(1957.3,774.4)"><path d="M0 -107l5 -4 6 -3 5 -4 6 -7 5 -7 6 4 5 0 5 2 6 -1 5 -4 6 2 5 4 6 -1 5 -2 5 -5 6 -3 5 -1 6 4 5 4 6 -8 5 1 6 7 5 12 5 2 6 0 5 -6 6 0 5 -2 6 4 5 8 5 5 6 3 5 -2 6 -2 5 -4 6 -5 5 -10 5 -6 6 1 5 8 6 8 5 6 6 2 5 -3 5 -9 6 -6 5 -4 6 -7 5 -7 6 8 5 5 5 4 6 10 5 6 6 8 5 1 6 -2 5 4 5 -1 6 3 5 -4 6 -3 5 -5 6 2 5 7 6 11 5 2 5 -5 6 -8 5 -2 6 3 5 -7 6 -7 5 -10 5 -6 6 4 5 7 6 6 5 6 6 10 5 2 5 -5 6 -7 5 -1 6 1 5 2 6 1 5 1 5 -4 6 -2 5 2 6 -2 5 -1 6 -1 5 2 5 0 6 -7 5 -8 6 -5 5 2 6 5 5 9 6 0 5 1 5 3 6 -4 5 -11 6 -7 5 -1 6 -3 5 -2 5 -2 6 1 5 2 6 4 5 10 6 9 5 0 5 -4 6 -1 5 6 6 2 5 -2 6 -4 5 -2 5 1 6 3 5 1 6 -6 5 -8 6 -8 5 -7 5 -6 6 2 5 1 6 5 5 3 6 4 5 3 6 -4 5 -2 5 -4 6 3 5 6 6 2 5 -4 6 2 5 -4 5 -7 6 -2 5 1 6 -5 5 -7 6 -7 5 0 5 1 6 3 5 -1 6 4 5 -1 6 -5 5 -7 5 1 6 4 5 5 6 1 5 8 6 4 5 5 5 5 6 6 5 7 6 0 5 -3 6 -8 5 -7 5 -9 6 0 5 -2 6 -3 5 7 6 9 5 2 6 -1 5 6 5 6 6 0 5 5 6 -1 5 -10 6 -10 5 -4 5 8 6 9 5 -4 6 -4 5 7 6 13 5 5V0H0Z" fill="#000"/><path d="M0 -107l5 -4 6 -3 5 -4 6 -7 5 -7 6 4 5 0 5 2 6 -1 5 -4 6 2 5 4 6 -1 5 -2 5 -5 6 -3 5 -1 6 4 5 4 6 -8 5 1 6 7 5 12 5 2 6 0 5 -6 6 0 5 -2 6 4 5 8 5 5 6 3 5 -2 6 -2 5 -4 6 -5 5 -10 5 -6 6 1 5 8 6 8 5 6 6 2 5 -3 5 -9 6 -6 5 -4 6 -7 5 -7 6 8 5 5 5 4 6 10 5 6 6 8 5 1 6 -2 5 4 5 -1 6 3 5 -4 6 -3 5 -5 6 2 5 7 6 11 5 2 5 -5 6 -8 5 -2 6 3 5 -7 6 -7 5 -10 5 -6 6 4 5 7 6 6 5 6 6 10 5 2 5 -5 6 -7 5 -1 6 1 5 2 6 1 5 1 5 -4 6 -2 5 2 6 -2 5 -1 6 -1 5 2 5 0 6 -7 5 -8 6 -5 5 2 6 5 5 9 6 0 5 1 5 3 6 -4 5 -11 6 -7 5 -1 6 -3 5 -2 5 -2 6 1 5 2 6 4 5 10 6 9 5 0 5 -4 6 -1 5 6 6 2 5 -2 6 -4 5 -2 5 1 6 3 5 1 6 -6 5 -8 6 -8 5 -7 5 -6 6 2 5 1 6 5 5 3 6 4 5 3 6 -4 5 -2 5 -4 6 3 5 6 6 2 5 -4 6 2 5 -4 5 -7 6 -2 5 1 6 -5 5 -7 6 -7 5 0 5 1 6 3 5 -1 6 4 5 -1 6 -5 5 -7 5 1 6 4 5 5 6 1 5 8 6 4 5 5 5 5 6 6 5 7 6 0 5 -3 6 -8 5 -7 5 -9 6 0 5 -2 6 -3 5 7 6 9 5 2 6 -1 5 6 5 6 6 0 5 5 6 -1 5 -10 6 -10 5 -4 5 8 6 9 5 -4 6 -4 5 7 6 13 5 5" fill="none" stroke="url(#zg)" stroke-width="3"/></g>
<g transform="translate(1951.1,782.5)"><path d="M0 -100l5 -1 6 -3 5 -11 6 -6 5 -1 6 1 5 -2 5 0 6 -4 5 -6 6 -7 5 -2 6 5 5 2 5 3 6 5 5 -3 6 4 5 1 6 -1 5 -4 6 -2 5 9 5 8 6 3 5 5 6 3 5 -5 6 -1 5 -2 5 -4 6 0 5 6 6 -2 5 -1 6 -4 5 0 5 0 6 2 5 6 6 9 5 -5 6 -8 5 -3 5 -1 6 -3 5 -3 6 -1 5 2 6 1 5 5 5 -3 6 -2 5 1 6 7 5 7 6 0 5 7 5 8 6 -1 5 -12 6 -3 5 2 6 0 5 4 6 4 5 8 5 -2 6 0 5 0 6 0 5 -12 6 -14 5 -13 5 -1 6 -4 5 0 6 10 5 15 6 0 5 -1 5 -8 6 -3 5 0 6 4 5 5 6 1 5 -4 5 -5 6 3 5 7 6 1 5 -6 6 0 5 9 5 4 6 2 5 1 6 -1 5 -2 6 7 5 -2 6 0 5 6 5 3 6 -2 5 -8 6 -8 5 -8 6 -12 5 -2 5 1 6 -2 5 -5 6 3 5 5 6 2 5 -2 5 -3 6 -1 5 3 6 8 5 5 6 2 5 -6 5 -7 6 3 5 9 6 -1 5 -13 6 -7 5 -3 5 1 6 6 5 2 6 6 5 -4 6 -2 5 -4 6 -4 5 -5 5 0 6 9 5 9 6 4 5 -8 6 2 5 0 5 -2 6 0 5 -1 6 -2 5 -7 6 -2 5 -5 5 -7 6 4 5 9 6 4 5 -2 6 -8 5 -7 5 -3 6 -4 5 -2 6 -3 5 0 6 9 5 11 5 5 6 2 5 -3 6 2 5 5 6 5 5 4 5 4 6 -7 5 -9 6 -3 5 9 6 12 5 2 6 2 5 2 5 4 6 1 5 -2 6 -7 5 -4 6 -2 5 -2 5 3 6 9 5 0 6 -6 5 1 6 8 5 4V0H0Z" fill="#000"/><path d="M0 -100l5 -1 6 -3 5 -11 6 -6 5 -1 6 1 5 -2 5 0 6 -4 5 -6 6 -7 5 -2 6 5 5 2 5 3 6 5 5 -3 6 4 5 1 6 -1 5 -4 6 -2 5 9 5 8 6 3 5 5 6 3 5 -5 6 -1 5 -2 5 -4 6 0 5 6 6 -2 5 -1 6 -4 5 0 5 0 6 2 5 6 6 9 5 -5 6 -8 5 -3 5 -1 6 -3 5 -3 6 -1 5 2 6 1 5 5 5 -3 6 -2 5 1 6 7 5 7 6 0 5 7 5 8 6 -1 5 -12 6 -3 5 2 6 0 5 4 6 4 5 8 5 -2 6 0 5 0 6 0 5 -12 6 -14 5 -13 5 -1 6 -4 5 0 6 10 5 15 6 0 5 -1 5 -8 6 -3 5 0 6 4 5 5 6 1 5 -4 5 -5 6 3 5 7 6 1 5 -6 6 0 5 9 5 4 6 2 5 1 6 -1 5 -2 6 7 5 -2 6 0 5 6 5 3 6 -2 5 -8 6 -8 5 -8 6 -12 5 -2 5 1 6 -2 5 -5 6 3 5 5 6 2 5 -2 5 -3 6 -1 5 3 6 8 5 5 6 2 5 -6 5 -7 6 3 5 9 6 -1 5 -13 6 -7 5 -3 5 1 6 6 5 2 6 6 5 -4 6 -2 5 -4 6 -4 5 -5 5 0 6 9 5 9 6 4 5 -8 6 2 5 0 5 -2 6 0 5 -1 6 -2 5 -7 6 -2 5 -5 5 -7 6 4 5 9 6 4 5 -2 6 -8 5 -7 5 -3 6 -4 5 -2 6 -3 5 0 6 9 5 11 5 5 6 2 5 -3 6 2 5 5 6 5 5 4 5 4 6 -7 5 -9 6 -3 5 9 6 12 5 2 6 2 5 2 5 4 6 1 5 -2 6 -7 5 -4 6 -2 5 -2 5 3 6 9 5 0 6 -6 5 1 6 8 5 4" fill="none" stroke="url(#zg)" stroke-width="3"/></g>
<g transform="translate(1944.8,790.5)"><path d="M0 -121l5 4 6 -1 5 2 6 -3 5 -5 6 -1 5 0 5 -1 6 2 5 -4 6 -3 5 0 6 8 5 6 5 7 6 -5 5 -9 6 -1 5 7 6 1 5 -2 6 3 5 7 5 -3 6 -8 5 -4 6 9 5 10 6 -1 5 -1 5 -7 6 -1 5 2 6 2 5 -2 6 -6 5 -5 5 -4 6 3 5 2 6 2 5 -1 6 -2 5 5 5 -5 6 -8 5 -6 6 0 5 4 6 9 5 11 5 -1 6 -3 5 0 6 3 5 4 6 1 5 2 5 5 6 -4 5 -6 6 -3 5 6 6 3 5 -5 6 -4 5 7 5 9 6 -2 5 -1 6 -3 5 -7 6 -9 5 -6 5 -3 6 -7 5 0 6 11 5 8 6 5 5 -3 5 1 6 1 5 -7 6 -2 5 -1 6 -4 5 -5 5 -2 6 -3 5 1 6 0 5 0 6 2 5 5 5 10 6 10 5 7 6 3 5 5 6 -3 5 -4 6 2 5 10 5 3 6 0 5 -8 6 -9 5 -7 6 -7 5 1 5 -4 6 -2 5 -6 6 -4 5 -3 6 2 5 -1 5 3 6 7 5 12 6 7 5 6 6 2 5 0 5 -10 6 -7 5 -1 6 -1 5 -1 6 -1 5 -8 5 -1 6 -1 5 5 6 4 5 7 6 -3 5 -9 6 -9 5 0 5 2 6 7 5 9 6 7 5 10 6 2 5 0 5 4 6 -4 5 -16 6 -13 5 -4 6 4 5 -2 5 -8 6 -4 5 6 6 -1 5 -3 6 -5 5 3 5 -1 6 -4 5 -6 6 -3 5 1 6 6 5 11 5 7 6 -1 5 2 6 4 5 -1 6 -1 5 5 5 10 6 8 5 -6 6 -3 5 4 6 5 5 9 6 2 5 -1 5 -1 6 -3 5 1 6 -7 5 1 6 -4 5 -3 5 -1 6 1 5 -2 6 -7 5 -1 6 2 5 2V0H0Z" fill="#000"/><path d="M0 -121l5 4 6 -1 5 2 6 -3 5 -5 6 -1 5 0 5 -1 6 2 5 -4 6 -3 5 0 6 8 5 6 5 7 6 -5 5 -9 6 -1 5 7 6 1 5 -2 6 3 5 7 5 -3 6 -8 5 -4 6 9 5 10 6 -1 5 -1 5 -7 6 -1 5 2 6 2 5 -2 6 -6 5 -5 5 -4 6 3 5 2 6 2 5 -1 6 -2 5 5 5 -5 6 -8 5 -6 6 0 5 4 6 9 5 11 5 -1 6 -3 5 0 6 3 5 4 6 1 5 2 5 5 6 -4 5 -6 6 -3 5 6 6 3 5 -5 6 -4 5 7 5 9 6 -2 5 -1 6 -3 5 -7 6 -9 5 -6 5 -3 6 -7 5 0 6 11 5 8 6 5 5 -3 5 1 6 1 5 -7 6 -2 5 -1 6 -4 5 -5 5 -2 6 -3 5 1 6 0 5 0 6 2 5 5 5 10 6 10 5 7 6 3 5 5 6 -3 5 -4 6 2 5 10 5 3 6 0 5 -8 6 -9 5 -7 6 -7 5 1 5 -4 6 -2 5 -6 6 -4 5 -3 6 2 5 -1 5 3 6 7 5 12 6 7 5 6 6 2 5 0 5 -10 6 -7 5 -1 6 -1 5 -1 6 -1 5 -8 5 -1 6 -1 5 5 6 4 5 7 6 -3 5 -9 6 -9 5 0 5 2 6 7 5 9 6 7 5 10 6 2 5 0 5 4 6 -4 5 -16 6 -13 5 -4 6 4 5 -2 5 -8 6 -4 5 6 6 -1 5 -3 6 -5 5 3 5 -1 6 -4 5 -6 6 -3 5 1 6 6 5 11 5 7 6 -1 5 2 6 4 5 -1 6 -1 5 5 5 10 6 8 5 -6 6 -3 5 4 6 5 5 9 6 2 5 -1 5 -1 6 -3 5 1 6 -7 5 1 6 -4 5 -3 5 -1 6 1 5 -2 6 -7 5 -1 6 2 5 2" fill="none" stroke="url(#zg)" stroke-width="3"/></g>
<g transform="translate(1938.6,798.6)"><path d="M0 -140l5 5 6 6 5 4 6 -1 5 -1 6 -1 5 2 5 -1 6 5 5 2 6 8 5 3 6 7 5 1 5 -3 6 -10 5 -9 6 -2 5 -2 6 -2 5 -3 6 1 5 2 5 7 6 1 5 -3 6 5 5 6 6 4 5 -2 5 -6 6 -3 5 0 6 3 5 3 6 -2 5 -10 5 -8 6 5 5 -1 6 -6 5 3 6 4 5 8 5 4 6 -1 5 -8 6 -4 5 1 6 7 5 6 5 2 6 3 5 10 6 4 5 0 6 -4 5 -8 5 0 6 0 5 -4 6 -2 5 0 6 1 5 -1 6 -4 5 2 5 -1 6 2 5 -5 6 -6 5 -3 6 -2 5 -4 5 1 6 0 5 1 6 0 5 -1 6 3 5 -2 5 -4 6 -2 5 1 6 2 5 -2 6 -1 5 3 5 3 6 -10 5 -7 6 -6 5 0 6 7 5 16 5 9 6 7 5 4 6 -1 5 -1 6 2 5 3 6 0 5 -3 5 -2 6 -1 5 1 6 -7 5 -3 6 1 5 4 5 5 6 1 5 -6 6 -10 5 -5 6 -4 5 7 5 7 6 8 5 2 6 -1 5 -6 6 3 5 6 5 -1 6 -3 5 -1 6 1 5 1 6 -7 5 -6 5 -2 6 4 5 2 6 3 5 2 6 -3 5 -3 6 -2 5 4 5 3 6 11 5 9 6 2 5 -2 6 -2 5 3 5 0 6 -3 5 -8 6 -7 5 -1 6 -1 5 -2 5 -5 6 -4 5 -6 6 -4 5 -3 6 1 5 6 5 8 6 2 5 -4 6 -3 5 -1 6 -1 5 1 5 5 6 6 5 4 6 1 5 5 6 9 5 -1 5 2 6 2 5 0 6 3 5 9 6 2 5 2 6 0 5 -1 5 -5 6 -9 5 -4 6 3 5 3 6 -3 5 -3 5 -4 6 -4 5 -2 6 -3 5 -2 6 -3 5 -6V0H0Z" fill="#000"/><path d="M0 -140l5 5 6 6 5 4 6 -1 5 -1 6 -1 5 2 5 -1 6 5 5 2 6 8 5 3 6 7 5 1 5 -3 6 -10 5 -9 6 -2 5 -2 6 -2 5 -3 6 1 5 2 5 7 6 1 5 -3 6 5 5 6 6 4 5 -2 5 -6 6 -3 5 0 6 3 5 3 6 -2 5 -10 5 -8 6 5 5 -1 6 -6 5 3 6 4 5 8 5 4 6 -1 5 -8 6 -4 5 1 6 7 5 6 5 2 6 3 5 10 6 4 5 0 6 -4 5 -8 5 0 6 0 5 -4 6 -2 5 0 6 1 5 -1 6 -4 5 2 5 -1 6 2 5 -5 6 -6 5 -3 6 -2 5 -4 5 1 6 0 5 1 6 0 5 -1 6 3 5 -2 5 -4 6 -2 5 1 6 2 5 -2 6 -1 5 3 5 3 6 -10 5 -7 6 -6 5 0 6 7 5 16 5 9 6 7 5 4 6 -1 5 -1 6 2 5 3 6 0 5 -3 5 -2 6 -1 5 1 6 -7 5 -3 6 1 5 4 5 5 6 1 5 -6 6 -10 5 -5 6 -4 5 7 5 7 6 8 5 2 6 -1 5 -6 6 3 5 6 5 -1 6 -3 5 -1 6 1 5 1 6 -7 5 -6 5 -2 6 4 5 2 6 3 5 2 6 -3 5 -3 6 -2 5 4 5 3 6 11 5 9 6 2 5 -2 6 -2 5 3 5 0 6 -3 5 -8 6 -7 5 -1 6 -1 5 -2 5 -5 6 -4 5 -6 6 -4 5 -3 6 1 5 6 5 8 6 2 5 -4 6 -3 5 -1 6 -1 5 1 5 5 6 6 5 4 6 1 5 5 6 9 5 -1 5 2 6 2 5 0 6 3 5 9 6 2 5 2 6 0 5 -1 5 -5 6 -9 5 -4 6 3 5 3 6 -3 5 -3 5 -4 6 -4 5 -2 6 -3 5 -2 6 -3 5 -6" fill="none" stroke="url(#zg)" stroke-width="3"/></g>
<g transform="translate(1932.3,806.6)"><path d="M0 -147l5 2 6 4 5 -1 6 -1 5 4 6 -3 5 -3 5 5 6 7 5 11 6 8 5 5 6 6 5 3 5 -2 6 -2 5 -2 6 -6 5 -4 6 -1 5 -4 6 -3 5 3 5 10 6 5 5 0 6 -1 5 2 6 4 5 4 5 -1 6 -6 5 -5 6 -1 5 -1 6 0 5 -1 5 -2 6 4 5 1 6 -1 5 -5 6 -3 5 3 5 -6 6 0 5 5 6 5 5 4 6 -3 5 -7 5 -3 6 2 5 9 6 4 5 -1 6 -3 5 4 5 6 6 -7 5 -12 6 -8 5 -3 6 -4 5 -3 6 3 5 9 5 -4 6 -6 5 -9 6 -10 5 -2 6 2 5 1 5 7 6 5 5 -6 6 -2 5 6 6 10 5 0 5 -9 6 -9 5 -2 6 1 5 -3 6 0 5 3 5 1 6 -6 5 -1 6 1 5 2 6 8 5 14 5 4 6 -1 5 1 6 -1 5 4 6 6 5 -2 6 -5 5 -8 5 -4 6 -3 5 0 6 5 5 3 6 2 5 4 5 3 6 2 5 -1 6 -4 5 -6 6 -1 5 3 5 1 6 3 5 8 6 -4 5 2 6 0 5 6 5 -11 6 -8 5 -2 6 3 5 -3 6 2 5 -3 5 3 6 3 5 5 6 9 5 -4 6 -5 5 0 6 6 5 6 5 -3 6 1 5 -2 6 5 5 2 6 7 5 8 5 -5 6 -9 5 -3 6 -5 5 1 6 1 5 -3 5 4 6 0 5 -7 6 1 5 2 6 -3 5 3 5 -1 6 -1 5 -5 6 0 5 -4 6 -6 5 -8 5 -3 6 6 5 4 6 3 5 5 6 11 5 0 5 2 6 -5 5 -2 6 6 5 2 6 0 5 4 6 6 5 -5 5 -6 6 -6 5 -9 6 5 5 5 6 7 5 -1 5 -7 6 -7 5 -5 6 -4 5 -10 6 -1 5 -1V0H0Z" fill="#000"/><path d="M0 -147l5 2 6 4 5 -1 6 -1 5 4 6 -3 5 -3 5 5 6 7 5 11 6 8 5 5 6 6 5 3 5 -2 6 -2 5 -2 6 -6 5 -4 6 -1 5 -4 6 -3 5 3 5 10 6 5 5 0 6 -1 5 2 6 4 5 4 5 -1 6 -6 5 -5 6 -1 5 -1 6 0 5 -1 5 -2 6 4 5 1 6 -1 5 -5 6 -3 5 3 5 -6 6 0 5 5 6 5 5 4 6 -3 5 -7 5 -3 6 2 5 9 6 4 5 -1 6 -3 5 4 5 6 6 -7 5 -12 6 -8 5 -3 6 -4 5 -3 6 3 5 9 5 -4 6 -6 5 -9 6 -10 5 -2 6 2 5 1 5 7 6 5 5 -6 6 -2 5 6 6 10 5 0 5 -9 6 -9 5 -2 6 1 5 -3 6 0 5 3 5 1 6 -6 5 -1 6 1 5 2 6 8 5 14 5 4 6 -1 5 1 6 -1 5 4 6 6 5 -2 6 -5 5 -8 5 -4 6 -3 5 0 6 5 5 3 6 2 5 4 5 3 6 2 5 -1 6 -4 5 -6 6 -1 5 3 5 1 6 3 5 8 6 -4 5 2 6 0 5 6 5 -11 6 -8 5 -2 6 3 5 -3 6 2 5 -3 5 3 6 3 5 5 6 9 5 -4 6 -5 5 0 6 6 5 6 5 -3 6 1 5 -2 6 5 5 2 6 7 5 8 5 -5 6 -9 5 -3 6 -5 5 1 6 1 5 -3 5 4 6 0 5 -7 6 1 5 2 6 -3 5 3 5 -1 6 -1 5 -5 6 0 5 -4 6 -6 5 -8 5 -3 6 6 5 4 6 3 5 5 6 11 5 0 5 2 6 -5 5 -2 6 6 5 2 6 0 5 4 6 6 5 -5 5 -6 6 -6 5 -9 6 5 5 5 6 7 5 -1 5 -7 6 -7 5 -5 6 -4 5 -10 6 -1 5 -1" fill="none" stroke="url(#zg)" stroke-width="3"/></g>
<g transform="translate(1926.0,814.7)"><path d="M0 -143l5 4 6 -1 5 0 6 -1 5 4 6 1 5 4 5 4 6 6 5 4 6 7 5 8 6 12 5 -2 5 -9 6 -10 5 -3 6 10 5 9 6 9 5 1 6 -3 5 1 5 2 6 3 5 -7 6 2 5 6 6 9 5 3 5 -4 6 -7 5 -4 6 -9 5 -11 6 -5 5 2 5 -3 6 -6 5 -4 6 3 5 2 6 -3 5 -8 5 -6 6 3 5 6 6 2 5 0 6 -5 5 -5 5 -3 6 4 5 7 6 0 5 0 6 2 5 6 5 0 6 -2 5 -2 6 -4 5 -6 6 -7 5 -4 6 1 5 1 5 0 6 -5 5 -2 6 -4 5 -2 6 -2 5 2 5 5 6 2 5 -3 6 -2 5 4 6 3 5 2 5 -3 6 -3 5 -7 6 -6 5 -5 6 4 5 0 5 -1 6 0 5 3 6 5 5 6 6 7 5 10 5 8 6 3 5 -5 6 7 5 9 6 6 5 -6 6 -12 5 -10 5 -5 6 -2 5 1 6 3 5 4 6 -2 5 -2 5 0 6 4 5 1 6 -4 5 -6 6 -6 5 2 5 7 6 5 5 1 6 12 5 9 6 11 5 2 5 0 6 -5 5 -9 6 -7 5 1 6 -2 5 -5 5 -4 6 2 5 5 6 2 5 8 6 -4 5 -3 6 2 5 0 5 -4 6 -2 5 4 6 4 5 8 6 4 5 1 5 -4 6 -3 5 -7 6 -10 5 -5 6 6 5 8 5 4 6 2 5 -1 6 -2 5 -3 6 -10 5 -6 5 0 6 8 5 5 6 1 5 -1 6 -6 5 -9 5 -6 6 -8 5 -4 6 3 5 2 6 -3 5 -2 5 -6 6 3 5 10 6 15 5 12 6 2 5 1 6 0 5 3 5 -3 6 -8 5 -2 6 -3 5 -3 6 0 5 1 5 -5 6 -2 5 4 6 2 5 -4 6 -9 5 -3V0H0Z" fill="#000"/><path d="M0 -143l5 4 6 -1 5 0 6 -1 5 4 6 1 5 4 5 4 6 6 5 4 6 7 5 8 6 12 5 -2 5 -9 6 -10 5 -3 6 10 5 9 6 9 5 1 6 -3 5 1 5 2 6 3 5 -7 6 2 5 6 6 9 5 3 5 -4 6 -7 5 -4 6 -9 5 -11 6 -5 5 2 5 -3 6 -6 5 -4 6 3 5 2 6 -3 5 -8 5 -6 6 3 5 6 6 2 5 0 6 -5 5 -5 5 -3 6 4 5 7 6 0 5 0 6 2 5 6 5 0 6 -2 5 -2 6 -4 5 -6 6 -7 5 -4 6 1 5 1 5 0 6 -5 5 -2 6 -4 5 -2 6 -2 5 2 5 5 6 2 5 -3 6 -2 5 4 6 3 5 2 5 -3 6 -3 5 -7 6 -6 5 -5 6 4 5 0 5 -1 6 0 5 3 6 5 5 6 6 7 5 10 5 8 6 3 5 -5 6 7 5 9 6 6 5 -6 6 -12 5 -10 5 -5 6 -2 5 1 6 3 5 4 6 -2 5 -2 5 0 6 4 5 1 6 -4 5 -6 6 -6 5 2 5 7 6 5 5 1 6 12 5 9 6 11 5 2 5 0 6 -5 5 -9 6 -7 5 1 6 -2 5 -5 5 -4 6 2 5 5 6 2 5 8 6 -4 5 -3 6 2 5 0 5 -4 6 -2 5 4 6 4 5 8 6 4 5 1 5 -4 6 -3 5 -7 6 -10 5 -5 6 6 5 8 5 4 6 2 5 -1 6 -2 5 -3 6 -10 5 -6 5 0 6 8 5 5 6 1 5 -1 6 -6 5 -9 5 -6 6 -8 5 -4 6 3 5 2 6 -3 5 -2 5 -6 6 3 5 10 6 15 5 12 6 2 5 1 6 0 5 3 5 -3 6 -8 5 -2 6 -3 5 -3 6 0 5 1 5 -5 6 -2 5 4 6 2 5 -4 6 -9 5 -3" fill="none" stroke="url(#zg)" stroke-width="3"/></g>
<g transform="translate(1919.8,822.7)"><path d="M0 -121l5 2 6 -2 5 0 6 2 5 2 6 3 5 3 5 0 6 2 5 5 6 0 5 5 6 1 5 -5 5 -5 6 3 5 6 6 7 5 8 6 6 5 -1 6 -7 5 -1 5 4 6 5 5 -3 6 -6 5 -5 6 3 5 4 5 0 6 -2 5 -1 6 -6 5 -12 6 -16 5 -8 5 4 6 6 5 5 6 -2 5 3 6 -6 5 -4 5 2 6 1 5 2 6 -3 5 -1 6 3 5 -2 5 -5 6 0 5 -2 6 3 5 0 6 1 5 0 5 2 6 0 5 0 6 -4 5 -2 6 0 5 -10 6 -6 5 -5 5 -1 6 -7 5 -2 6 2 5 3 6 -5 5 -2 5 4 6 6 5 2 6 3 5 0 6 0 5 -6 5 -3 6 0 5 0 6 -10 5 -2 6 5 5 1 5 -4 6 -1 5 3 6 11 5 5 6 4 5 5 5 11 6 8 5 7 6 2 5 6 6 -2 5 -6 6 -11 5 -11 5 -7 6 3 5 -4 6 4 5 8 6 5 5 -4 5 -5 6 4 5 3 6 -2 5 -6 6 -13 5 -3 5 1 6 10 5 9 6 3 5 -1 6 8 5 15 5 10 6 -3 5 -10 6 -2 5 0 6 -3 5 -7 5 1 6 6 5 8 6 2 5 -5 6 -8 5 -6 6 8 5 6 5 -3 6 -4 5 7 6 9 5 2 6 -3 5 -4 5 7 6 -2 5 -9 6 -16 5 -9 6 -3 5 8 5 3 6 4 5 0 6 2 5 0 6 3 5 -2 5 -1 6 4 5 5 6 1 5 -9 6 -8 5 -1 5 -8 6 -1 5 -3 6 -6 5 -3 6 4 5 0 5 0 6 3 5 0 6 12 5 13 6 11 5 3 6 3 5 6 5 -2 6 -4 5 -10 6 -9 5 -1 6 -3 5 -6 5 -7 6 -1 5 7 6 5 5 2 6 -4 5 2V0H0Z" fill="#000"/><path d="M0 -121l5 2 6 -2 5 0 6 2 5 2 6 3 5 3 5 0 6 2 5 5 6 0 5 5 6 1 5 -5 5 -5 6 3 5 6 6 7 5 8 6 6 5 -1 6 -7 5 -1 5 4 6 5 5 -3 6 -6 5 -5 6 3 5 4 5 0 6 -2 5 -1 6 -6 5 -12 6 -16 5 -8 5 4 6 6 5 5 6 -2 5 3 6 -6 5 -4 5 2 6 1 5 2 6 -3 5 -1 6 3 5 -2 5 -5 6 0 5 -2 6 3 5 0 6 1 5 0 5 2 6 0 5 0 6 -4 5 -2 6 0 5 -10 6 -6 5 -5 5 -1 6 -7 5 -2 6 2 5 3 6 -5 5 -2 5 4 6 6 5 2 6 3 5 0 6 0 5 -6 5 -3 6 0 5 0 6 -10 5 -2 6 5 5 1 5 -4 6 -1 5 3 6 11 5 5 6 4 5 5 5 11 6 8 5 7 6 2 5 6 6 -2 5 -6 6 -11 5 -11 5 -7 6 3 5 -4 6 4 5 8 6 5 5 -4 5 -5 6 4 5 3 6 -2 5 -6 6 -13 5 -3 5 1 6 10 5 9 6 3 5 -1 6 8 5 15 5 10 6 -3 5 -10 6 -2 5 0 6 -3 5 -7 5 1 6 6 5 8 6 2 5 -5 6 -8 5 -6 6 8 5 6 5 -3 6 -4 5 7 6 9 5 2 6 -3 5 -4 5 7 6 -2 5 -9 6 -16 5 -9 6 -3 5 8 5 3 6 4 5 0 6 2 5 0 6 3 5 -2 5 -1 6 4 5 5 6 1 5 -9 6 -8 5 -1 5 -8 6 -1 5 -3 6 -6 5 -3 6 4 5 0 5 0 6 3 5 0 6 12 5 13 6 11 5 3 6 3 5 6 5 -2 6 -4 5 -10 6 -9 5 -1 6 -3 5 -6 5 -7 6 -1 5 7 6 5 5 2 6 -4 5 2" fill="none" stroke="url(#zg)" stroke-width="3"/></g>
<g transform="translate(1913.5,830.7)"><path d="M0 -117l5 2 6 8 5 0 6 -9 5 -9 6 2 5 4 5 3 6 -3 5 10 6 8 5 5 6 1 5 -1 5 7 6 13 5 8 6 -2 5 -3 6 -1 5 -2 6 -3 5 -6 5 6 6 3 5 -5 6 -5 5 -2 6 1 5 -2 5 1 6 1 5 -1 6 0 5 0 6 -12 5 -6 5 5 6 8 5 1 6 -5 5 -5 6 0 5 2 5 -5 6 -7 5 -7 6 -1 5 11 6 6 5 0 5 -6 6 0 5 -1 6 2 5 -2 6 -12 5 -6 5 1 6 4 5 -3 6 0 5 3 6 0 5 -3 6 -4 5 -9 5 -8 6 -4 5 -5 6 0 5 -1 6 0 5 -6 5 -2 6 6 5 5 6 3 5 -3 6 2 5 0 5 1 6 -3 5 -6 6 -4 5 3 6 -2 5 -2 5 0 6 4 5 1 6 -4 5 -2 6 -4 5 1 5 7 6 17 5 15 6 11 5 -1 6 -4 5 -8 6 -9 5 -6 5 -6 6 -5 5 1 6 7 5 6 6 4 5 -1 5 -3 6 2 5 1 6 3 5 0 6 -4 5 -9 5 -2 6 4 5 10 6 4 5 1 6 6 5 8 5 11 6 -1 5 -7 6 -4 5 0 6 3 5 -5 5 -3 6 7 5 8 6 -4 5 -7 6 -6 5 -7 6 1 5 9 5 13 6 8 5 -1 6 -4 5 -7 6 -1 5 3 5 3 6 -3 5 -13 6 -7 5 1 6 1 5 -7 5 -5 6 -5 5 4 6 11 5 8 6 4 5 2 5 3 6 0 5 3 6 -2 5 -2 6 7 5 12 5 1 6 -7 5 -6 6 -4 5 -4 6 -5 5 -7 5 -7 6 3 5 1 6 10 5 11 6 9 5 3 6 -5 5 -6 5 -2 6 0 5 -1 6 -5 5 -1 6 5 5 4 5 -5 6 -3 5 6 6 1 5 -3 6 -5 5 -4V0H0Z" fill="#000"/><path d="M0 -117l5 2 6 8 5 0 6 -9 5 -9 6 2 5 4 5 3 6 -3 5 10 6 8 5 5 6 1 5 -1 5 7 6 13 5 8 6 -2 5 -3 6 -1 5 -2 6 -3 5 -6 5 6 6 3 5 -5 6 -5 5 -2 6 1 5 -2 5 1 6 1 5 -1 6 0 5 0 6 -12 5 -6 5 5 6 8 5 1 6 -5 5 -5 6 0 5 2 5 -5 6 -7 5 -7 6 -1 5 11 6 6 5 0 5 -6 6 0 5 -1 6 2 5 -2 6 -12 5 -6 5 1 6 4 5 -3 6 0 5 3 6 0 5 -3 6 -4 5 -9 5 -8 6 -4 5 -5 6 0 5 -1 6 0 5 -6 5 -2 6 6 5 5 6 3 5 -3 6 2 5 0 5 1 6 -3 5 -6 6 -4 5 3 6 -2 5 -2 5 0 6 4 5 1 6 -4 5 -2 6 -4 5 1 5 7 6 17 5 15 6 11 5 -1 6 -4 5 -8 6 -9 5 -6 5 -6 6 -5 5 1 6 7 5 6 6 4 5 -1 5 -3 6 2 5 1 6 3 5 0 6 -4 5 -9 5 -2 6 4 5 10 6 4 5 1 6 6 5 8 5 11 6 -1 5 -7 6 -4 5 0 6 3 5 -5 5 -3 6 7 5 8 6 -4 5 -7 6 -6 5 -7 6 1 5 9 5 13 6 8 5 -1 6 -4 5 -7 6 -1 5 3 5 3 6 -3 5 -13 6 -7 5 1 6 1 5 -7 5 -5 6 -5 5 4 6 11 5 8 6 4 5 2 5 3 6 0 5 3 6 -2 5 -2 6 7 5 12 5 1 6 -7 5 -6 6 -4 5 -4 6 -5 5 -7 5 -7 6 3 5 1 6 10 5 11 6 9 5 3 6 -5 5 -6 5 -2 6 0 5 -1 6 -5 5 -1 6 5 5 4 5 -5 6 -3 5 6 6 1 5 -3 6 -5 5 -4" fill="none" stroke="url(#zg)" stroke-width="3"/></g>
<g transform="translate(1907.3,838.8)"><path d="M0 -107l5 -8 6 -4 5 -2 6 -4 5 -3 6 0 5 -1 5 6 6 8 5 4 6 1 5 7 6 4 5 0 5 0 6 12 5 4 6 -5 5 -6 6 1 5 -1 6 2 5 -1 5 -3 6 0 5 -1 6 5 5 5 6 -3 5 1 5 0 6 1 5 1 6 6 5 7 6 7 5 3 5 1 6 -3 5 -7 6 -3 5 -6 6 -1 5 0 5 1 6 -9 5 -7 6 -7 5 2 6 0 5 -4 5 -4 6 -1 5 -2 6 2 5 -1 6 -2 5 -8 5 -5 6 0 5 -1 6 0 5 1 6 -2 5 5 6 2 5 1 5 -4 6 -2 5 -1 6 -7 5 -7 6 -6 5 -11 5 -4 6 -1 5 5 6 1 5 -3 6 0 5 4 5 4 6 2 5 2 6 -2 5 -3 6 -3 5 -3 5 1 6 7 5 -4 6 -2 5 -1 6 -1 5 1 5 9 6 6 5 1 6 6 5 8 6 2 5 -6 6 -11 5 -7 5 -5 6 -1 5 7 6 11 5 8 6 -8 5 -12 5 0 6 2 5 8 6 5 5 7 6 4 5 0 5 -4 6 -3 5 4 6 5 5 0 6 -2 5 5 5 3 6 0 5 6 6 2 5 0 6 -2 5 1 5 -5 6 -3 5 -4 6 -8 5 0 6 -3 5 -2 6 -2 5 -1 5 4 6 4 5 3 6 -3 5 4 6 -9 5 -5 5 -8 6 3 5 1 6 3 5 5 6 0 5 -6 5 -7 6 -7 5 2 6 13 5 12 6 2 5 7 5 9 6 5 5 2 6 -4 5 -4 6 2 5 5 5 2 6 3 5 -2 6 -12 5 -6 6 2 5 -1 5 3 6 -3 5 -1 6 -2 5 3 6 1 5 1 6 1 5 0 5 -6 6 -2 5 -4 6 -8 5 1 6 3 5 4 5 4 6 7 5 5 6 3 5 0 6 0 5 0V0H0Z" fill="#000"/><path d="M0 -107l5 -8 6 -4 5 -2 6 -4 5 -3 6 0 5 -1 5 6 6 8 5 4 6 1 5 7 6 4 5 0 5 0 6 12 5 4 6 -5 5 -6 6 1 5 -1 6 2 5 -1 5 -3 6 0 5 -1 6 5 5 5 6 -3 5 1 5 0 6 1 5 1 6 6 5 7 6 7 5 3 5 1 6 -3 5 -7 6 -3 5 -6 6 -1 5 0 5 1 6 -9 5 -7 6 -7 5 2 6 0 5 -4 5 -4 6 -1 5 -2 6 2 5 -1 6 -2 5 -8 5 -5 6 0 5 -1 6 0 5 1 6 -2 5 5 6 2 5 1 5 -4 6 -2 5 -1 6 -7 5 -7 6 -6 5 -11 5 -4 6 -1 5 5 6 1 5 -3 6 0 5 4 5 4 6 2 5 2 6 -2 5 -3 6 -3 5 -3 5 1 6 7 5 -4 6 -2 5 -1 6 -1 5 1 5 9 6 6 5 1 6 6 5 8 6 2 5 -6 6 -11 5 -7 5 -5 6 -1 5 7 6 11 5 8 6 -8 5 -12 5 0 6 2 5 8 6 5 5 7 6 4 5 0 5 -4 6 -3 5 4 6 5 5 0 6 -2 5 5 5 3 6 0 5 6 6 2 5 0 6 -2 5 1 5 -5 6 -3 5 -4 6 -8 5 0 6 -3 5 -2 6 -2 5 -1 5 4 6 4 5 3 6 -3 5 4 6 -9 5 -5 5 -8 6 3 5 1 6 3 5 5 6 0 5 -6 5 -7 6 -7 5 2 6 13 5 12 6 2 5 7 5 9 6 5 5 2 6 -4 5 -4 6 2 5 5 5 2 6 3 5 -2 6 -12 5 -6 6 2 5 -1 5 3 6 -3 5 -1 6 -2 5 3 6 1 5 1 6 1 5 0 5 -6 6 -2 5 -4 6 -8 5 1 6 3 5 4 5 4 6 7 5 5 6 3 5 0 6 0 5 0" fill="none" stroke="url(#zg)" stroke-width="3"/></g>
<g transform="translate(1901.0,846.8)"><path d="M0 -109l5 -5 6 -9 5 -6 6 -6 5 -1 6 6 5 7 5 5 6 7 5 0 6 -4 5 -5 6 -2 5 -4 5 0 6 4 5 3 6 5 5 7 6 1 5 1 6 -1 5 -3 5 -3 6 -12 5 -1 6 1 5 4 6 11 5 11 5 4 6 -4 5 -2 6 7 5 8 6 1 5 -5 5 0 6 2 5 -4 6 -6 5 -5 6 -4 5 6 5 3 6 1 5 -3 6 -2 5 -2 6 0 5 -6 5 -6 6 -6 5 -8 6 -6 5 -3 6 1 5 1 5 -2 6 2 5 7 6 1 5 1 6 1 5 1 6 -1 5 -4 5 2 6 2 5 1 6 -1 5 3 6 -2 5 -11 5 -12 6 -8 5 -5 6 -7 5 0 6 11 5 7 5 8 6 7 5 4 6 0 5 -4 6 -2 5 -5 5 -6 6 -13 5 -5 6 -3 5 6 6 5 5 6 5 12 6 1 5 -1 6 0 5 3 6 1 5 -5 6 -8 5 -7 5 -2 6 3 5 5 6 7 5 8 6 -3 5 -7 5 -3 6 4 5 4 6 5 5 -1 6 -4 5 6 5 6 6 0 5 -8 6 0 5 3 6 3 5 6 5 -5 6 -4 5 5 6 6 5 4 6 -4 5 4 5 4 6 1 5 -1 6 -1 5 -5 6 -1 5 -2 6 -1 5 3 5 -4 6 1 5 0 6 0 5 -1 6 -4 5 -10 5 -5 6 -5 5 1 6 2 5 -1 6 -1 5 3 5 1 6 5 5 3 6 10 5 10 6 3 5 -3 5 2 6 6 5 7 6 -5 5 -11 6 -8 5 0 5 10 6 16 5 4 6 -11 5 -8 6 1 5 3 5 -1 6 -6 5 -5 6 -5 5 -1 6 3 5 6 6 3 5 -9 5 -3 6 -2 5 -3 6 -1 5 -2 6 3 5 2 5 8 6 11 5 -2 6 -3 5 -11 6 6 5 5V0H0Z" fill="#000"/><path d="M0 -109l5 -5 6 -9 5 -6 6 -6 5 -1 6 6 5 7 5 5 6 7 5 0 6 -4 5 -5 6 -2 5 -4 5 0 6 4 5 3 6 5 5 7 6 1 5 1 6 -1 5 -3 5 -3 6 -12 5 -1 6 1 5 4 6 11 5 11 5 4 6 -4 5 -2 6 7 5 8 6 1 5 -5 5 0 6 2 5 -4 6 -6 5 -5 6 -4 5 6 5 3 6 1 5 -3 6 -2 5 -2 6 0 5 -6 5 -6 6 -6 5 -8 6 -6 5 -3 6 1 5 1 5 -2 6 2 5 7 6 1 5 1 6 1 5 1 6 -1 5 -4 5 2 6 2 5 1 6 -1 5 3 6 -2 5 -11 5 -12 6 -8 5 -5 6 -7 5 0 6 11 5 7 5 8 6 7 5 4 6 0 5 -4 6 -2 5 -5 5 -6 6 -13 5 -5 6 -3 5 6 6 5 5 6 5 12 6 1 5 -1 6 0 5 3 6 1 5 -5 6 -8 5 -7 5 -2 6 3 5 5 6 7 5 8 6 -3 5 -7 5 -3 6 4 5 4 6 5 5 -1 6 -4 5 6 5 6 6 0 5 -8 6 0 5 3 6 3 5 6 5 -5 6 -4 5 5 6 6 5 4 6 -4 5 4 5 4 6 1 5 -1 6 -1 5 -5 6 -1 5 -2 6 -1 5 3 5 -4 6 1 5 0 6 0 5 -1 6 -4 5 -10 5 -5 6 -5 5 1 6 2 5 -1 6 -1 5 3 5 1 6 5 5 3 6 10 5 10 6 3 5 -3 5 2 6 6 5 7 6 -5 5 -11 6 -8 5 0 5 10 6 16 5 4 6 -11 5 -8 6 1 5 3 5 -1 6 -6 5 -5 6 -5 5 -1 6 3 5 6 6 3 5 -9 5 -3 6 -2 5 -3 6 -1 5 -2 6 3 5 2 5 8 6 11 5 -2 6 -3 5 -11 6 6 5 5" fill="none" stroke="url(#zg)" stroke-width="3"/></g>
<g transform="translate(1894.8,854.9)"><path d="M0 -135l5 -7 6 -4 5 0 6 5 5 6 6 4 5 8 5 4 6 5 5 6 6 -3 5 -4 6 -2 5 -3 5 0 6 -8 5 -4 6 -3 5 5 6 8 5 7 6 3 5 -6 5 -10 6 -4 5 0 6 4 5 4 6 5 5 13 5 3 6 0 5 -7 6 -4 5 0 6 -5 5 -10 5 2 6 4 5 8 6 2 5 -3 6 -6 5 -2 5 2 6 3 5 6 6 1 5 6 6 -6 5 -13 5 -14 6 -6 5 0 6 4 5 5 6 4 5 -1 5 -1 6 -1 5 -2 6 -2 5 2 6 3 5 -3 6 -2 5 0 5 8 6 0 5 -2 6 0 5 4 6 7 5 -4 5 -13 6 -12 5 -5 6 1 5 6 6 5 5 2 5 -2 6 0 5 3 6 -2 5 -3 6 -2 5 -5 5 0 6 -11 5 -6 6 8 5 12 6 12 5 3 5 -3 6 -1 5 -5 6 -6 5 -4 6 -1 5 1 6 -7 5 1 5 8 6 3 5 -5 6 -5 5 4 6 14 5 6 5 -1 6 2 5 5 6 7 5 2 6 -3 5 -2 5 -1 6 -7 5 -12 6 -6 5 4 6 -1 5 2 5 2 6 -7 5 2 6 6 5 5 6 2 5 5 5 7 6 -1 5 -3 6 -4 5 -5 6 -1 5 3 6 1 5 -3 5 1 6 6 5 6 6 10 5 1 6 -7 5 -10 5 -8 6 -5 5 0 6 6 5 6 6 5 5 4 5 -3 6 3 5 6 6 10 5 5 6 2 5 -1 5 3 6 6 5 -2 6 -11 5 -13 6 -6 5 -1 5 9 6 14 5 11 6 -1 5 -9 6 -10 5 -6 5 -4 6 5 5 0 6 -1 5 -4 6 -5 5 -1 6 -1 5 1 5 3 6 -1 5 -2 6 0 5 -2 6 3 5 -1 5 -2 6 1 5 3 6 2 5 -3 6 -10 5 2V0H0Z" fill="#000"/><path d="M0 -135l5 -7 6 -4 5 0 6 5 5 6 6 4 5 8 5 4 6 5 5 6 6 -3 5 -4 6 -2 5 -3 5 0 6 -8 5 -4 6 -3 5 5 6 8 5 7 6 3 5 -6 5 -10 6 -4 5 0 6 4 5 4 6 5 5 13 5 3 6 0 5 -7 6 -4 5 0 6 -5 5 -10 5 2 6 4 5 8 6 2 5 -3 6 -6 5 -2 5 2 6 3 5 6 6 1 5 6 6 -6 5 -13 5 -14 6 -6 5 0 6 4 5 5 6 4 5 -1 5 -1 6 -1 5 -2 6 -2 5 2 6 3 5 -3 6 -2 5 0 5 8 6 0 5 -2 6 0 5 4 6 7 5 -4 5 -13 6 -12 5 -5 6 1 5 6 6 5 5 2 5 -2 6 0 5 3 6 -2 5 -3 6 -2 5 -5 5 0 6 -11 5 -6 6 8 5 12 6 12 5 3 5 -3 6 -1 5 -5 6 -6 5 -4 6 -1 5 1 6 -7 5 1 5 8 6 3 5 -5 6 -5 5 4 6 14 5 6 5 -1 6 2 5 5 6 7 5 2 6 -3 5 -2 5 -1 6 -7 5 -12 6 -6 5 4 6 -1 5 2 5 2 6 -7 5 2 6 6 5 5 6 2 5 5 5 7 6 -1 5 -3 6 -4 5 -5 6 -1 5 3 6 1 5 -3 5 1 6 6 5 6 6 10 5 1 6 -7 5 -10 5 -8 6 -5 5 0 6 6 5 6 6 5 5 4 5 -3 6 3 5 6 6 10 5 5 6 2 5 -1 5 3 6 6 5 -2 6 -11 5 -13 6 -6 5 -1 5 9 6 14 5 11 6 -1 5 -9 6 -10 5 -6 5 -4 6 5 5 0 6 -1 5 -4 6 -5 5 -1 6 -1 5 1 5 3 6 -1 5 -2 6 0 5 -2 6 3 5 -1 5 -2 6 1 5 3 6 2 5 -3 6 -10 5 2" fill="none" stroke="url(#zg)" stroke-width="3"/></g>
<g transform="translate(1888.5,862.9)"><path d="M0 -148l5 -5 6 5 5 1 6 4 5 1 6 4 5 1 5 -1 6 1 5 6 6 -3 5 -7 6 -1 5 6 5 10 6 3 5 -8 6 -13 5 -2 6 4 5 6 6 5 5 4 5 6 6 2 5 8 6 -1 5 1 6 1 5 7 5 7 6 -4 5 -10 6 -17 5 -2 6 3 5 -1 5 -4 6 -3 5 0 6 1 5 3 6 1 5 -6 5 -7 6 2 5 4 6 5 5 0 6 -2 5 -6 5 -6 6 3 5 3 6 2 5 -1 6 0 5 4 5 -1 6 -2 5 -7 6 -4 5 4 6 4 5 0 6 -2 5 -3 5 2 6 0 5 3 6 0 5 -4 6 -1 5 1 5 -3 6 -2 5 -1 6 7 5 -2 6 -5 5 -4 5 -2 6 2 5 2 6 1 5 -5 6 -2 5 4 5 1 6 -7 5 -7 6 5 5 18 6 8 5 6 5 2 6 -1 5 -5 6 -8 5 -8 6 -10 5 -4 6 3 5 3 5 5 6 6 5 12 6 6 5 2 6 -2 5 -2 5 -3 6 -6 5 1 6 12 5 8 6 4 5 -10 5 -15 6 -7 5 3 6 1 5 -6 6 0 5 -2 5 -8 6 -9 5 4 6 11 5 7 6 -2 5 6 5 8 6 9 5 3 6 -3 5 -3 6 0 5 0 6 -1 5 -6 5 -2 6 2 5 8 6 3 5 -5 6 -5 5 0 5 8 6 2 5 -5 6 -4 5 10 6 3 5 6 5 4 6 10 5 10 6 3 5 -2 6 -6 5 -1 5 -1 6 3 5 -2 6 -7 5 -9 6 0 5 5 5 1 6 2 5 -1 6 -2 5 -7 6 -6 5 -8 5 5 6 1 5 5 6 1 5 3 6 -3 5 -5 6 -3 5 -4 5 -1 6 -2 5 5 6 0 5 0 6 -5 5 3 5 3 6 0 5 0 6 -2 5 -1 6 -5 5 -4V0H0Z" fill="#000"/><path d="M0 -148l5 -5 6 5 5 1 6 4 5 1 6 4 5 1 5 -1 6 1 5 6 6 -3 5 -7 6 -1 5 6 5 10 6 3 5 -8 6 -13 5 -2 6 4 5 6 6 5 5 4 5 6 6 2 5 8 6 -1 5 1 6 1 5 7 5 7 6 -4 5 -10 6 -17 5 -2 6 3 5 -1 5 -4 6 -3 5 0 6 1 5 3 6 1 5 -6 5 -7 6 2 5 4 6 5 5 0 6 -2 5 -6 5 -6 6 3 5 3 6 2 5 -1 6 0 5 4 5 -1 6 -2 5 -7 6 -4 5 4 6 4 5 0 6 -2 5 -3 5 2 6 0 5 3 6 0 5 -4 6 -1 5 1 5 -3 6 -2 5 -1 6 7 5 -2 6 -5 5 -4 5 -2 6 2 5 2 6 1 5 -5 6 -2 5 4 5 1 6 -7 5 -7 6 5 5 18 6 8 5 6 5 2 6 -1 5 -5 6 -8 5 -8 6 -10 5 -4 6 3 5 3 5 5 6 6 5 12 6 6 5 2 6 -2 5 -2 5 -3 6 -6 5 1 6 12 5 8 6 4 5 -10 5 -15 6 -7 5 3 6 1 5 -6 6 0 5 -2 5 -8 6 -9 5 4 6 11 5 7 6 -2 5 6 5 8 6 9 5 3 6 -3 5 -3 6 0 5 0 6 -1 5 -6 5 -2 6 2 5 8 6 3 5 -5 6 -5 5 0 5 8 6 2 5 -5 6 -4 5 10 6 3 5 6 5 4 6 10 5 10 6 3 5 -2 6 -6 5 -1 5 -1 6 3 5 -2 6 -7 5 -9 6 0 5 5 5 1 6 2 5 -1 6 -2 5 -7 6 -6 5 -8 5 5 6 1 5 5 6 1 5 3 6 -3 5 -5 6 -3 5 -4 5 -1 6 -2 5 5 6 0 5 0 6 -5 5 3 5 3 6 0 5 0 6 -2 5 -1 6 -5 5 -4" fill="none" stroke="url(#zg)" stroke-width="3"/></g>
<g transform="translate(1882.3,871.0)"><path d="M0 -122l5 -11 6 -7 5 -4 6 -2 5 -5 6 -5 5 -3 5 -5 6 0 5 3 6 -4 5 -2 6 7 5 19 5 15 6 6 5 -9 6 -6 5 -9 6 -4 5 0 6 6 5 5 5 9 6 4 5 4 6 13 5 7 6 2 5 -7 5 -1 6 -1 5 -13 6 -14 5 -6 6 -4 5 -3 5 2 6 -4 5 -1 6 2 5 4 6 5 5 3 5 2 6 1 5 4 6 2 5 0 6 2 5 -5 5 1 6 -4 5 -5 6 1 5 -3 6 -7 5 -11 5 1 6 -1 5 -4 6 4 5 5 6 4 5 -2 6 1 5 2 5 -4 6 -8 5 4 6 10 5 2 6 -1 5 -3 5 -1 6 -3 5 2 6 0 5 -4 6 -6 5 -1 5 4 6 8 5 -3 6 -5 5 2 6 -4 5 -9 5 -5 6 -5 5 8 6 3 5 4 6 4 5 8 5 5 6 2 5 -2 6 -8 5 -7 6 -6 5 -2 6 5 5 8 5 2 6 4 5 13 6 10 5 0 6 -6 5 -6 5 3 6 -2 5 -3 6 3 5 10 6 1 5 -6 5 -5 6 -2 5 -3 6 -3 5 3 6 6 5 2 5 -5 6 0 5 3 6 4 5 8 6 4 5 2 5 6 6 1 5 -1 6 4 5 7 6 4 5 2 6 -3 5 -6 5 -6 6 -2 5 -5 6 -8 5 -3 6 2 5 6 5 3 6 2 5 -7 6 1 5 2 6 7 5 5 5 6 6 5 5 8 6 5 5 -3 6 -12 5 -2 5 7 6 -2 5 -1 6 -6 5 -1 6 4 5 3 5 3 6 1 5 -5 6 -7 5 -11 6 -4 5 -1 5 2 6 1 5 0 6 -1 5 4 6 5 5 1 6 -2 5 -5 5 -4 6 -2 5 -1 6 -2 5 -3 6 -4 5 4 5 7 6 5 5 2 6 -2 5 3 6 5 5 2V0H0Z" fill="#000"/><path d="M0 -122l5 -11 6 -7 5 -4 6 -2 5 -5 6 -5 5 -3 5 -5 6 0 5 3 6 -4 5 -2 6 7 5 19 5 15 6 6 5 -9 6 -6 5 -9 6 -4 5 0 6 6 5 5 5 9 6 4 5 4 6 13 5 7 6 2 5 -7 5 -1 6 -1 5 -13 6 -14 5 -6 6 -4 5 -3 5 2 6 -4 5 -1 6 2 5 4 6 5 5 3 5 2 6 1 5 4 6 2 5 0 6 2 5 -5 5 1 6 -4 5 -5 6 1 5 -3 6 -7 5 -11 5 1 6 -1 5 -4 6 4 5 5 6 4 5 -2 6 1 5 2 5 -4 6 -8 5 4 6 10 5 2 6 -1 5 -3 5 -1 6 -3 5 2 6 0 5 -4 6 -6 5 -1 5 4 6 8 5 -3 6 -5 5 2 6 -4 5 -9 5 -5 6 -5 5 8 6 3 5 4 6 4 5 8 5 5 6 2 5 -2 6 -8 5 -7 6 -6 5 -2 6 5 5 8 5 2 6 4 5 13 6 10 5 0 6 -6 5 -6 5 3 6 -2 5 -3 6 3 5 10 6 1 5 -6 5 -5 6 -2 5 -3 6 -3 5 3 6 6 5 2 5 -5 6 0 5 3 6 4 5 8 6 4 5 2 5 6 6 1 5 -1 6 4 5 7 6 4 5 2 6 -3 5 -6 5 -6 6 -2 5 -5 6 -8 5 -3 6 2 5 6 5 3 6 2 5 -7 6 1 5 2 6 7 5 5 5 6 6 5 5 8 6 5 5 -3 6 -12 5 -2 5 7 6 -2 5 -1 6 -6 5 -1 6 4 5 3 5 3 6 1 5 -5 6 -7 5 -11 6 -4 5 -1 5 2 6 1 5 0 6 -1 5 4 6 5 5 1 6 -2 5 -5 5 -4 6 -2 5 -1 6 -2 5 -3 6 -4 5 4 5 7 6 5 5 2 6 -2 5 3 6 5 5 2" fill="none" stroke="url(#zg)" stroke-width="3"/></g>
<g transform="translate(1876.0,879.0)"><path d="M0 -128l5 -6 6 3 5 7 6 0 5 -3 6 -9 5 -1 5 -6 6 0 5 2 6 4 5 6 6 8 5 10 5 -2 6 -7 5 -10 6 -2 5 3 6 -2 5 -1 6 0 5 1 5 9 6 8 5 7 6 12 5 8 6 -3 5 -7 5 -6 6 -2 5 -7 6 -10 5 -11 6 -10 5 -6 5 2 6 8 5 0 6 5 5 2 6 5 5 3 5 3 6 3 5 2 6 -2 5 0 6 3 5 0 5 2 6 -8 5 -14 6 -7 5 -6 6 -11 5 -8 5 0 6 7 5 7 6 6 5 0 6 -3 5 2 6 8 5 4 5 -9 6 -2 5 3 6 6 5 1 6 1 5 -3 5 1 6 -4 5 -4 6 -2 5 -6 6 -2 5 6 5 11 6 8 5 5 6 -6 5 -10 6 -10 5 -7 5 -2 6 5 5 6 6 7 5 6 6 3 5 2 5 -6 6 -10 5 -7 6 0 5 5 6 2 5 -3 6 -2 5 0 5 4 6 6 5 9 6 7 5 -1 6 1 5 3 5 1 6 1 5 2 6 1 5 -2 6 -3 5 -1 5 -6 6 -1 5 1 6 0 5 3 6 10 5 8 5 3 6 -5 5 1 6 -3 5 1 6 -2 5 0 5 2 6 -3 5 6 6 3 5 0 6 -1 5 -3 6 -2 5 -4 5 1 6 1 5 -1 6 3 5 1 6 -2 5 2 5 1 6 -1 5 1 6 1 5 3 6 4 5 2 5 3 6 1 5 2 6 3 5 -1 6 -7 5 -6 5 6 6 2 5 2 6 1 5 -5 6 -3 5 4 5 6 6 -2 5 -1 6 -8 5 -5 6 -6 5 -1 5 -9 6 1 5 4 6 1 5 4 6 8 5 1 6 -5 5 -8 5 0 6 -4 5 -3 6 -9 5 -2 6 6 5 7 5 6 6 8 5 5 6 -4 5 -5 6 2 5 0V0H0Z" fill="#000"/><path d="M0 -128l5 -6 6 3 5 7 6 0 5 -3 6 -9 5 -1 5 -6 6 0 5 2 6 4 5 6 6 8 5 10 5 -2 6 -7 5 -10 6 -2 5 3 6 -2 5 -1 6 0 5 1 5 9 6 8 5 7 6 12 5 8 6 -3 5 -7 5 -6 6 -2 5 -7 6 -10 5 -11 6 -10 5 -6 5 2 6 8 5 0 6 5 5 2 6 5 5 3 5 3 6 3 5 2 6 -2 5 0 6 3 5 0 5 2 6 -8 5 -14 6 -7 5 -6 6 -11 5 -8 5 0 6 7 5 7 6 6 5 0 6 -3 5 2 6 8 5 4 5 -9 6 -2 5 3 6 6 5 1 6 1 5 -3 5 1 6 -4 5 -4 6 -2 5 -6 6 -2 5 6 5 11 6 8 5 5 6 -6 5 -10 6 -10 5 -7 5 -2 6 5 5 6 6 7 5 6 6 3 5 2 5 -6 6 -10 5 -7 6 0 5 5 6 2 5 -3 6 -2 5 0 5 4 6 6 5 9 6 7 5 -1 6 1 5 3 5 1 6 1 5 2 6 1 5 -2 6 -3 5 -1 5 -6 6 -1 5 1 6 0 5 3 6 10 5 8 5 3 6 -5 5 1 6 -3 5 1 6 -2 5 0 5 2 6 -3 5 6 6 3 5 0 6 -1 5 -3 6 -2 5 -4 5 1 6 1 5 -1 6 3 5 1 6 -2 5 2 5 1 6 -1 5 1 6 1 5 3 6 4 5 2 5 3 6 1 5 2 6 3 5 -1 6 -7 5 -6 5 6 6 2 5 2 6 1 5 -5 6 -3 5 4 5 6 6 -2 5 -1 6 -8 5 -5 6 -6 5 -1 5 -9 6 1 5 4 6 1 5 4 6 8 5 1 6 -5 5 -8 5 0 6 -4 5 -3 6 -9 5 -2 6 6 5 7 5 6 6 8 5 5 6 -4 5 -5 6 2 5 0" fill="none" stroke="url(#zg)" stroke-width="3"/></g>
</g>
<path d="M3251.0 385.8V501.0M3246.3 399.5V507.0M3241.7 417.0V513.0M3237.0 428.6V519.0M3232.3 423.4V525.0M3227.7 407.4V531.0M3223.0 405.4V537.0M3218.3 415.6V543.0M3213.7 435.4V549.0M3209.0 447.7V555.0M3204.3 454.7V561.0M3199.7 456.6V567.0M3195.0 453.2V573.0M3190.3 443.0V579.0M3185.7 444.2V585.0M3181.0 453.1V591.0M3176.3 461.6V597.0M3171.7 462.4V603.0M3167.0 471.2V609.0M3162.3 487.4V615.0M3157.7 507.4V621.0M3153.0 511.4V627.0M3148.3 511.3V633.0M3143.7 511.7V639.0M3139.0 520.0V645.0M3134.3 520.6V651.0M3129.7 526.3V657.0M3125.0 539.7V663.0M3120.3 563.5V669.0M3115.7 583.7V675.0M3111.0 586.5V681.0M3106.3 576.4V687.0M3101.7 581.8V693.0M3097.0 585.6V699.0M3092.3 591.8V705.0M3087.7 602.2V711.0M3083.0 620.4V717.0M3078.3 626.9V723.0M3073.7 630.6V729.0M3069.0 634.5V735.0M3064.3 641.8V741.0M3059.7 643.2V747.0M3055.0 640.0V753.0M3050.3 634.7V759.0M3045.7 642.3V765.0M3041.0 656.9V771.0M3036.3 670.8V777.0M3031.7 679.6V783.0M3027.0 676.9V789.0M3022.3 672.9V795.0M3017.7 666.9V801.0M3013.0 659.4V807.0M3008.3 668.0V813.0M3003.7 685.7V819.0M2999.0 701.3V825.0M2994.3 708.5V831.0M2989.7 725.7V837.0M2985.0 731.4V843.0M2980.3 729.7V849.0M2975.7 723.5V855.0M2971.0 726.7V861.0M2966.3 747.9V867.0M2961.7 767.3V873.0M2957.0 767.3V879.0" stroke="#b4b4b4" stroke-width="2.5" fill="none"/>
<path d="M1876 878.5H2957M1876 878.5V900M1984.1 878.5V900M2092.2 878.5V900M2200.3 878.5V900M2308.4 878.5V900M2416.5 878.5V900M2524.6 878.5V900M2632.7 878.5V900M2740.8 878.5V900M2848.9 878.5V900M2957 878.5V900" stroke="#e8e8e8" stroke-width="3.4" fill="none"/>
<path d="M2957 879L3251 501M2957 879H2993M3010 816.5H3044M3058 752H3095M3107 690H3141M3155 627.5H3191M3203 565H3240" stroke="#e8e8e8" stroke-width="3.4" fill="none"/>
<rect x="3251" y="270" width="27" height="231" fill="url(#cb2)"/>
<path d="M3250 270H3291M3250 308.5H3291M3250 347H3291M3250 385.5H3291M3250 424H3291M3250 462.5H3291M3250 501H3291" stroke="#e8e8e8" stroke-width="3.2" fill="none"/>
<path d="M3251 269L3251 502" stroke="#e8e8e8" stroke-width="2.5" fill="none"/>
<text x="3361" y="287" font-family="Liberation Sans" font-size="44" fill="#e4e4e4" textLength="158" lengthAdjust="spacingAndGlyphs">+25.00</text>
<text x="3360" y="403.5" font-family="Liberation Sans" font-size="46" fill="#e4e4e4" textLength="64" lengthAdjust="spacingAndGlyphs">nm</text>
<text x="3347" y="492.5" font-family="Liberation Sans" font-size="44" fill="#e4e4e4" textLength="164" lengthAdjust="spacingAndGlyphs">&#8722;25.00</text>
<text x="3360" y="545.5" font-family="Liberation Sans" font-size="44" fill="#e4e4e4" textLength="125" lengthAdjust="spacingAndGlyphs">0.071</text>
<text x="3230" y="708" font-family="Liberation Sans" font-size="46" fill="#e4e4e4" textLength="75" lengthAdjust="spacingAndGlyphs">mm</text>
<text x="3069" y="897" font-family="Liberation Sans" font-size="46" fill="#e4e4e4" textLength="130" lengthAdjust="spacingAndGlyphs">0.032</text>
<text x="2887" y="967" font-family="Liberation Sans" font-size="46" fill="#e4e4e4" textLength="129" lengthAdjust="spacingAndGlyphs">0.097</text>
<text x="1807" y="967" font-family="Liberation Sans" font-size="46" fill="#e4e4e4" textLength="130" lengthAdjust="spacingAndGlyphs">0.049</text>
<text x="2384" y="967" font-family="Liberation Sans" font-size="46" fill="#e4e4e4" textLength="73" lengthAdjust="spacingAndGlyphs">mm</text>
<path d="M57 1044H911L904 1051H64V1107.5L57 1114.5Z" fill="#024a64"/>
<path d="M911 1114.5H57L64 1107.5H904V1051L911 1044Z" fill="#2f7ca0"/>
<rect x="63" y="1050" width="841" height="57.5" fill="#000"/>
<text x="80" y="1096.5" font-family="Liberation Mono, monospace" font-size="46" fill="#ececec" textLength="61.664" lengthAdjust="spacingAndGlyphs">PV</text>
<text x="402" y="1096.5" font-family="Liberation Mono, monospace" font-size="46" fill="#ececec" textLength="192.864" lengthAdjust="spacingAndGlyphs">42.576</text>
<text x="725" y="1096.5" font-family="Liberation Mono, monospace" font-size="46" fill="#ececec" textLength="61.664" lengthAdjust="spacingAndGlyphs">nm</text>
<path d="M918 1044H1740L1733 1051H925V1107.5L918 1114.5Z" fill="#024a64"/>
<path d="M1740 1114.5H918L925 1107.5H1733V1051L1740 1044Z" fill="#2f7ca0"/>
<rect x="924" y="1050" width="809" height="57.5" fill="#000"/>
<text x="941" y="1096.5" font-family="Liberation Mono, monospace" font-size="46" fill="#ececec" textLength="127.264" lengthAdjust="spacingAndGlyphs">Peak</text>
<text x="1263" y="1096.5" font-family="Liberation Mono, monospace" font-size="46" fill="#ececec" textLength="160.064" lengthAdjust="spacingAndGlyphs">19.48</text>
<text x="1552" y="1096.5" font-family="Liberation Mono, monospace" font-size="46" fill="#ececec" textLength="61.664" lengthAdjust="spacingAndGlyphs">nm</text>
<path d="M57 1137H911L904 1144H64V1201.5L57 1208.5Z" fill="#024a64"/>
<path d="M911 1208.5H57L64 1201.5H904V1144L911 1137Z" fill="#2f7ca0"/>
<rect x="63" y="1143" width="841" height="58.5" fill="#000"/>
<text x="80" y="1190.5" font-family="Liberation Mono, monospace" font-size="46" fill="#ececec" textLength="94.464" lengthAdjust="spacingAndGlyphs">rms</text>
<text x="434.5" y="1190.5" font-family="Liberation Mono, monospace" font-size="46" fill="#ececec" textLength="160.064" lengthAdjust="spacingAndGlyphs">5.510</text>
<text x="725" y="1190.5" font-family="Liberation Mono, monospace" font-size="46" fill="#ececec" textLength="61.664" lengthAdjust="spacingAndGlyphs">nm</text>
<path d="M57 1230H911L904 1237H64V1293.5L57 1300.5Z" fill="#024a64"/>
<path d="M911 1300.5H57L64 1293.5H904V1237L911 1230Z" fill="#2f7ca0"/>
<rect x="63" y="1236" width="841" height="57.5" fill="#000"/>
<text x="80" y="1282.5" font-family="Liberation Mono, monospace" font-size="46" fill="#ececec" textLength="61.664" lengthAdjust="spacingAndGlyphs">Ra</text>
<text x="434.5" y="1282.5" font-family="Liberation Mono, monospace" font-size="46" fill="#ececec" textLength="160.064" lengthAdjust="spacingAndGlyphs">4.331</text>
<text x="725" y="1282.5" font-family="Liberation Mono, monospace" font-size="46" fill="#ececec" textLength="61.664" lengthAdjust="spacingAndGlyphs">nm</text>
<path d="M1494 1321.5H2197L2190 1328.5H1501V1386L1494 1393Z" fill="#024a64"/>
<path d="M2197 1393H1494L1501 1386H2190V1328.5L2197 1321.5Z" fill="#2f7ca0"/>
<rect x="1500" y="1327.5" width="690" height="58.5" fill="#000"/>
<text x="1818" y="1374.5" font-family="Liberation Mono, monospace" font-size="46" fill="#ececec" textLength="160.064" lengthAdjust="spacingAndGlyphs">Plane</text>
<rect x="2479" y="1223" width="1173.5" height="954" fill="#005b78"/>
<path d="M2479 1223H3652.5L3641.5 1234H2490V2166L2479 2177Z" fill="#3a81a8"/>
<path d="M3652.5 2177H2479L2490 2166H3641.5V1234L3652.5 1223Z" fill="#003a52"/>
<rect x="2479" y="1223" width="19.5" height="943" fill="#3a81a8"/>
<path d="M2479 2177L2498.5 2166V2137H2479Z" fill="#3a81a8"/>
<rect x="2491" y="1235" width="52" height="51" fill="#000"/>
<rect x="2502.5" y="1247" width="29" height="29" fill="#fff"/>
<circle cx="2509.75" cy="1254.25" r="3.4" fill="#000"/>
<circle cx="2524.25" cy="1254.25" r="3.4" fill="#000"/>
<circle cx="2517" cy="1261.5" r="3.4" fill="#000"/>
<circle cx="2509.75" cy="1268.75" r="3.4" fill="#000"/>
<circle cx="2524.25" cy="1268.75" r="3.4" fill="#000"/>
<rect x="2593" y="1235" width="145" height="51" fill="#000"/>
<g transform="translate(2593,1235)" fill="none" stroke="#fff" stroke-width="7" stroke-linejoin="round" stroke-linecap="round"><path d="M9 7.5H42V14L22.5 29H42V35.5H9V29.5L28.5 14H9Z" fill="#fff" stroke="none"/><path d="M48.5 10.5V25Q48.5 32 55 32H64M65.5 10.5V38.5Q65.5 45 58 45H52.5"/><path d="M94 32H82.5Q76 32 76 26V17Q76 11 82.5 11H94M94.3 10.5V38.5Q94.3 45 87 45H81.5"/><ellipse cx="115" cy="21.5" rx="10.2" ry="10.6"/></g>
<rect x="3588.5" y="1235" width="52" height="51" fill="#000"/>
<g transform="translate(3588.5,1235) scale(1)" fill="#fff"><path d="M22.5 3H29.5V29H3V22.5H22.5Z"/><path d="M34.5 19L48.5 48.5L31.5 32L18.5 33.5Z"/></g>
<text x="2848.5" y="1279" font-family="Liberation Mono, monospace" font-size="46" fill="#d4eef0" textLength="422.464" lengthAdjust="spacingAndGlyphs">Intensity Map</text>
<rect x="2490" y="1289.5" width="1151.5" height="3.5" fill="#034a66"/>
<rect x="2490" y="1294" width="1151.5" height="4" fill="#2a7698"/>
<rect x="2498.5" y="1301" width="1143" height="11" fill="#3a81a8"/>
<rect x="2498.5" y="1312" width="1148" height="854" fill="#004042"/>
<rect x="2558" y="1366.5" width="1067" height="799.5" fill="#000"/>
<g clip-path="url(#icp)">
<rect x="2563" y="1371" width="1057.5" height="795" fill="url(#ig)" filter="url(#inz)"/>
<rect x="2563" y="1371" width="1057.5" height="795" fill="url(#ivl)"/>
<rect x="2563" y="1371" width="1057.5" height="795" fill="url(#ivt)"/>
<g filter="url(#idb)" fill="#1c1c1c"><circle cx="3039" cy="1383" r="4.2" opacity="0.74"/><circle cx="3036" cy="1413" r="3.2" opacity="0.65"/><circle cx="3013" cy="1467" r="5.2" opacity="0.83"/><circle cx="2981" cy="1493" r="4.2" opacity="0.74"/><circle cx="3016" cy="1549" r="4.7" opacity="0.78"/><circle cx="3189" cy="1547" r="6.3" opacity="0.92"/><circle cx="3608" cy="1536" r="5.8" opacity="0.88"/><circle cx="3558" cy="1417" r="3.7" opacity="0.70"/><circle cx="3538" cy="1421" r="3.2" opacity="0.65"/><circle cx="3428" cy="1388" r="2.6" opacity="0.60"/><circle cx="3180" cy="1455" r="3.2" opacity="0.65"/><circle cx="3558" cy="1472" r="3.2" opacity="0.65"/><circle cx="3480" cy="1470" r="2.6" opacity="0.60"/><circle cx="2594" cy="1505" r="3.2" opacity="0.65"/><circle cx="2594" cy="1601" r="3.7" opacity="0.70"/><circle cx="3328" cy="1604" r="3.7" opacity="0.70"/><circle cx="3303" cy="1662" r="3.7" opacity="0.70"/><circle cx="3610" cy="1668" r="3.7" opacity="0.70"/><circle cx="3108" cy="1725" r="5.2" opacity="0.83"/><circle cx="3434" cy="1731" r="3.7" opacity="0.70"/><circle cx="2597" cy="1770" r="4.2" opacity="0.74"/><circle cx="2600" cy="1802" r="3.7" opacity="0.70"/><circle cx="3027" cy="1796" r="3.7" opacity="0.70"/><circle cx="3177" cy="1786" r="3.2" opacity="0.65"/><circle cx="3258" cy="1816" r="5.8" opacity="0.88"/><circle cx="3500" cy="1824" r="5.8" opacity="0.88"/><circle cx="3515" cy="1860" r="3.7" opacity="0.70"/><circle cx="3111" cy="1853" r="3.7" opacity="0.70"/><circle cx="2851" cy="1884" r="5.2" opacity="0.83"/><circle cx="2738" cy="1872" r="3.7" opacity="0.70"/><circle cx="3229" cy="1906" r="4.2" opacity="0.74"/><circle cx="3387" cy="1928" r="3.7" opacity="0.70"/><circle cx="3232" cy="1954" r="3.7" opacity="0.70"/><circle cx="3270" cy="1954" r="4.2" opacity="0.74"/><circle cx="3084" cy="1948" r="3.7" opacity="0.70"/><circle cx="2661" cy="1935" r="3.7" opacity="0.70"/><circle cx="3367" cy="1997" r="4.2" opacity="0.74"/><circle cx="3030" cy="2003" r="3.7" opacity="0.70"/><circle cx="2770" cy="2004" r="3.7" opacity="0.70"/><circle cx="3113" cy="2055" r="3.7" opacity="0.70"/><circle cx="3088" cy="2090" r="4.2" opacity="0.74"/><circle cx="3420" cy="2085" r="3.7" opacity="0.70"/><circle cx="3480" cy="2094" r="3.2" opacity="0.65"/><circle cx="2753" cy="2144" r="6.8" opacity="0.92"/><circle cx="3405" cy="2145" r="5.8" opacity="0.88"/><circle cx="3545" cy="2149" r="3.7" opacity="0.70"/><circle cx="3149" cy="2147" r="3.7" opacity="0.70"/><circle cx="2890" cy="2146" r="3.2" opacity="0.65"/><circle cx="3056" cy="2143" r="3.2" opacity="0.65"/><circle cx="3469" cy="2130" r="3.7" opacity="0.70"/><circle cx="2642" cy="2139" r="3.7" opacity="0.70"/><circle cx="2590" cy="1987" r="3.7" opacity="0.70"/><circle cx="2897" cy="2033" r="3.2" opacity="0.65"/><circle cx="2701" cy="2048" r="3.2" opacity="0.65"/><circle cx="3336" cy="2068" r="2.6" opacity="0.60"/><circle cx="2828" cy="1669" r="3.2" opacity="0.65"/><circle cx="2718" cy="1698" r="2.6" opacity="0.60"/><circle cx="2793" cy="1750" r="3.2" opacity="0.65"/><circle cx="3140" cy="1635" r="3.2" opacity="0.65"/><circle cx="3281" cy="1583" r="2.6" opacity="0.60"/><circle cx="3463" cy="1551" r="2.6" opacity="0.60"/><circle cx="2920" cy="1600" r="2.6" opacity="0.60"/><circle cx="3070" cy="1739" r="2.6" opacity="0.60"/><circle cx="3001" cy="1710" r="3.2" opacity="0.65"/><circle cx="3215" cy="1869" r="2.6" opacity="0.60"/><circle cx="3336" cy="1903" r="3.2" opacity="0.65"/><circle cx="3151" cy="1869" r="2.6" opacity="0.60"/><circle cx="2949" cy="1941" r="3.2" opacity="0.65"/><circle cx="2880" cy="1973" r="2.6" opacity="0.60"/><circle cx="3584" cy="1805" r="3.2" opacity="0.65"/><circle cx="3567" cy="1952" r="2.6" opacity="0.60"/><circle cx="3521" cy="2056" r="2.6" opacity="0.60"/><circle cx="2988" cy="1432" r="3.2" opacity="0.65"/><circle cx="2996" cy="1437" r="3.2" opacity="0.65"/><circle cx="3004" cy="1444" r="2.6" opacity="0.60"/><circle cx="3010" cy="1459" r="3.7" opacity="0.70"/><circle cx="2978" cy="1467" r="3.2" opacity="0.65"/><circle cx="2992" cy="1502" r="3.2" opacity="0.65"/><circle cx="3024" cy="1392" r="3.0" opacity="0.20"/><circle cx="3008" cy="1634" r="2.3" opacity="0.24"/><circle cx="2880" cy="1583" r="3.2" opacity="0.22"/><circle cx="2705" cy="1779" r="2.2" opacity="0.27"/><circle cx="3466" cy="1764" r="3.7" opacity="0.12"/><circle cx="3097" cy="1423" r="2.7" opacity="0.12"/><circle cx="2697" cy="1845" r="2.3" opacity="0.12"/><circle cx="2796" cy="1649" r="2.8" opacity="0.14"/><circle cx="3240" cy="1755" r="2.9" opacity="0.19"/><circle cx="3402" cy="1832" r="2.2" opacity="0.25"/><circle cx="3583" cy="1769" r="3.8" opacity="0.18"/><circle cx="3163" cy="1711" r="2.8" opacity="0.27"/><circle cx="3129" cy="2129" r="3.0" opacity="0.12"/><circle cx="2950" cy="2047" r="2.7" opacity="0.11"/><circle cx="2824" cy="1424" r="4.0" opacity="0.31"/><circle cx="3409" cy="1849" r="3.5" opacity="0.14"/><circle cx="2873" cy="1788" r="2.6" opacity="0.11"/><circle cx="3603" cy="1722" r="2.9" opacity="0.17"/><circle cx="2838" cy="1679" r="3.6" opacity="0.26"/><circle cx="2964" cy="1381" r="3.6" opacity="0.16"/><circle cx="3179" cy="1391" r="3.3" opacity="0.19"/><circle cx="3089" cy="1701" r="2.6" opacity="0.22"/><circle cx="3592" cy="1461" r="2.5" opacity="0.11"/><circle cx="3344" cy="1894" r="2.3" opacity="0.19"/><circle cx="3244" cy="1897" r="2.2" opacity="0.29"/><circle cx="3386" cy="1477" r="3.7" opacity="0.26"/><circle cx="3408" cy="1803" r="2.3" opacity="0.30"/><circle cx="3189" cy="1646" r="2.4" opacity="0.30"/><circle cx="3007" cy="1800" r="3.1" opacity="0.28"/><circle cx="3222" cy="1511" r="3.1" opacity="0.21"/><circle cx="3142" cy="1927" r="2.3" opacity="0.14"/><circle cx="2680" cy="1589" r="1.8" opacity="0.24"/><circle cx="2875" cy="1520" r="2.0" opacity="0.16"/><circle cx="2790" cy="1598" r="2.8" opacity="0.22"/><circle cx="3457" cy="2157" r="1.9" opacity="0.15"/><circle cx="3243" cy="1499" r="3.7" opacity="0.15"/><circle cx="3347" cy="1890" r="3.6" opacity="0.11"/><circle cx="2806" cy="1931" r="2.0" opacity="0.11"/><circle cx="2941" cy="1840" r="1.9" opacity="0.11"/><circle cx="2609" cy="1685" r="3.3" opacity="0.14"/><circle cx="3490" cy="1715" r="3.2" opacity="0.16"/><circle cx="3214" cy="2129" r="2.8" opacity="0.15"/><circle cx="3013" cy="1724" r="2.9" opacity="0.22"/><circle cx="2608" cy="1502" r="2.8" opacity="0.26"/><circle cx="3385" cy="1989" r="2.9" opacity="0.31"/><circle cx="2914" cy="1754" r="3.4" opacity="0.29"/><circle cx="3001" cy="2046" r="2.8" opacity="0.26"/><circle cx="2572" cy="1391" r="3.9" opacity="0.12"/><circle cx="3263" cy="1596" r="2.2" opacity="0.19"/><circle cx="3542" cy="1824" r="3.8" opacity="0.25"/><circle cx="3093" cy="1773" r="2.3" opacity="0.10"/><circle cx="3005" cy="1819" r="3.7" opacity="0.25"/><circle cx="3454" cy="2107" r="3.9" opacity="0.28"/><circle cx="2702" cy="1647" r="2.3" opacity="0.29"/><circle cx="3401" cy="1648" r="3.1" opacity="0.28"/><circle cx="3444" cy="1535" r="3.4" opacity="0.28"/><circle cx="2609" cy="1456" r="2.8" opacity="0.15"/><circle cx="3494" cy="1943" r="3.4" opacity="0.27"/><circle cx="2913" cy="1553" r="3.2" opacity="0.19"/><circle cx="3554" cy="1882" r="2.7" opacity="0.29"/><circle cx="2966" cy="1513" r="3.5" opacity="0.20"/><circle cx="2837" cy="1921" r="4.0" opacity="0.15"/><circle cx="3399" cy="1977" r="2.1" opacity="0.28"/><circle cx="3051" cy="1471" r="3.0" opacity="0.17"/><circle cx="2749" cy="1434" r="2.2" opacity="0.19"/><circle cx="3242" cy="1440" r="3.4" opacity="0.12"/><circle cx="2749" cy="1938" r="3.7" opacity="0.32"/><circle cx="3253" cy="1751" r="2.0" opacity="0.22"/><circle cx="2755" cy="1780" r="3.1" opacity="0.28"/><circle cx="2905" cy="2157" r="4.0" opacity="0.28"/><circle cx="3297" cy="1954" r="3.7" opacity="0.31"/><circle cx="3464" cy="1881" r="2.0" opacity="0.24"/><circle cx="2937" cy="1502" r="3.8" opacity="0.28"/><circle cx="3120" cy="1739" r="2.9" opacity="0.16"/><circle cx="2989" cy="1718" r="1.8" opacity="0.30"/><circle cx="2594" cy="1667" r="2.0" opacity="0.14"/><circle cx="3560" cy="1666" r="3.4" opacity="0.13"/><circle cx="2829" cy="2072" r="3.8" opacity="0.16"/><circle cx="3586" cy="1902" r="2.9" opacity="0.18"/><circle cx="2920" cy="2128" r="3.3" opacity="0.22"/><circle cx="2609" cy="1568" r="3.9" opacity="0.22"/><circle cx="2941" cy="1379" r="2.4" opacity="0.16"/><circle cx="2743" cy="1645" r="2.2" opacity="0.11"/><circle cx="2667" cy="1766" r="2.0" opacity="0.31"/><circle cx="2781" cy="1740" r="2.7" opacity="0.16"/><circle cx="2905" cy="1539" r="2.4" opacity="0.13"/><circle cx="3292" cy="1883" r="2.5" opacity="0.29"/><circle cx="2972" cy="1857" r="3.0" opacity="0.17"/><circle cx="3546" cy="2045" r="3.7" opacity="0.31"/><circle cx="2566" cy="1762" r="3.9" opacity="0.13"/><circle cx="2822" cy="1773" r="3.3" opacity="0.17"/><circle cx="2887" cy="1988" r="1.9" opacity="0.27"/><circle cx="3016" cy="1871" r="3.4" opacity="0.12"/><circle cx="3519" cy="2025" r="2.6" opacity="0.14"/><circle cx="2629" cy="1616" r="3.4" opacity="0.28"/><circle cx="2908" cy="1546" r="2.5" opacity="0.31"/><circle cx="2665" cy="1500" r="3.3" opacity="0.13"/><circle cx="2845" cy="2010" r="2.5" opacity="0.23"/><circle cx="3169" cy="1582" r="2.3" opacity="0.16"/><circle cx="3489" cy="1386" r="2.0" opacity="0.18"/><circle cx="2796" cy="1818" r="3.0" opacity="0.21"/><circle cx="2881" cy="1778" r="3.5" opacity="0.28"/><circle cx="3126" cy="2012" r="1.9" opacity="0.13"/><circle cx="3354" cy="1677" r="2.5" opacity="0.23"/><circle cx="2957" cy="2094" r="2.7" opacity="0.28"/><circle cx="3199" cy="2096" r="2.9" opacity="0.31"/><circle cx="3173" cy="1393" r="3.4" opacity="0.29"/><circle cx="2667" cy="2137" r="3.0" opacity="0.26"/><circle cx="2800" cy="2119" r="3.2" opacity="0.22"/><circle cx="3580" cy="1814" r="3.0" opacity="0.11"/><circle cx="3141" cy="1963" r="2.6" opacity="0.25"/><circle cx="3160" cy="1536" r="3.0" opacity="0.20"/><circle cx="2920" cy="1898" r="1.9" opacity="0.18"/><circle cx="3022" cy="2145" r="3.3" opacity="0.24"/><circle cx="2728" cy="1717" r="2.6" opacity="0.31"/><circle cx="3042" cy="2051" r="3.2" opacity="0.29"/><circle cx="2567" cy="2106" r="3.9" opacity="0.13"/><circle cx="2632" cy="1623" r="3.1" opacity="0.22"/><circle cx="3023" cy="2097" r="3.1" opacity="0.31"/><circle cx="3172" cy="1518" r="4.0" opacity="0.32"/><circle cx="3035" cy="1977" r="3.2" opacity="0.14"/><circle cx="3176" cy="1891" r="3.1" opacity="0.22"/><circle cx="3189" cy="1935" r="3.5" opacity="0.12"/><circle cx="3529" cy="1728" r="3.3" opacity="0.19"/><circle cx="2617" cy="1899" r="2.6" opacity="0.22"/><circle cx="2845" cy="1533" r="2.5" opacity="0.29"/><circle cx="3540" cy="2149" r="2.7" opacity="0.27"/><circle cx="2741" cy="1963" r="2.7" opacity="0.29"/><circle cx="2771" cy="2022" r="2.0" opacity="0.29"/><circle cx="3011" cy="1483" r="2.5" opacity="0.26"/><circle cx="3035" cy="1556" r="2.3" opacity="0.25"/><circle cx="3248" cy="1422" r="3.6" opacity="0.13"/><circle cx="2817" cy="1382" r="2.9" opacity="0.29"/><circle cx="3546" cy="1739" r="2.0" opacity="0.20"/><circle cx="2870" cy="1617" r="2.3" opacity="0.31"/><circle cx="2983" cy="1374" r="2.9" opacity="0.25"/><circle cx="3425" cy="1970" r="3.3" opacity="0.14"/><circle cx="2933" cy="1736" r="2.1" opacity="0.19"/><circle cx="2670" cy="1440" r="3.6" opacity="0.14"/><circle cx="3063" cy="1868" r="3.9" opacity="0.17"/><circle cx="2755" cy="2067" r="2.5" opacity="0.16"/><circle cx="2722" cy="1725" r="2.3" opacity="0.18"/><circle cx="2916" cy="1868" r="2.8" opacity="0.25"/><circle cx="2881" cy="1627" r="4.0" opacity="0.15"/><circle cx="3370" cy="1927" r="3.2" opacity="0.13"/><circle cx="2569" cy="1964" r="2.0" opacity="0.15"/><circle cx="3609" cy="2139" r="3.8" opacity="0.23"/><circle cx="3045" cy="1739" r="2.5" opacity="0.31"/><circle cx="3426" cy="2160" r="2.5" opacity="0.23"/><circle cx="3284" cy="1676" r="3.1" opacity="0.14"/><circle cx="2895" cy="1478" r="3.2" opacity="0.17"/><circle cx="3012" cy="1674" r="1.9" opacity="0.30"/><circle cx="3332" cy="1629" r="3.8" opacity="0.25"/><circle cx="3612" cy="1739" r="2.0" opacity="0.13"/><circle cx="3352" cy="1831" r="2.3" opacity="0.22"/><circle cx="3123" cy="2053" r="1.9" opacity="0.12"/><circle cx="3031" cy="1482" r="4.0" opacity="0.14"/><circle cx="3218" cy="1724" r="3.5" opacity="0.11"/><circle cx="2906" cy="1744" r="2.0" opacity="0.24"/><circle cx="3128" cy="2028" r="2.8" opacity="0.16"/><circle cx="2897" cy="1558" r="3.9" opacity="0.28"/><circle cx="2926" cy="1729" r="2.0" opacity="0.23"/><circle cx="3334" cy="1552" r="2.8" opacity="0.25"/><circle cx="3031" cy="1809" r="2.2" opacity="0.27"/><circle cx="2679" cy="1745" r="2.4" opacity="0.12"/><circle cx="3468" cy="1530" r="2.8" opacity="0.23"/><circle cx="2848" cy="1752" r="3.0" opacity="0.20"/><circle cx="2947" cy="1575" r="3.8" opacity="0.21"/><circle cx="3305" cy="1796" r="2.4" opacity="0.21"/><circle cx="3434" cy="2067" r="3.9" opacity="0.15"/><circle cx="2928" cy="1466" r="4.0" opacity="0.24"/><circle cx="3308" cy="1713" r="2.3" opacity="0.19"/><circle cx="2868" cy="1794" r="3.6" opacity="0.28"/><circle cx="2866" cy="1512" r="3.4" opacity="0.19"/><circle cx="2755" cy="1851" r="2.0" opacity="0.12"/><circle cx="2576" cy="1536" r="2.9" opacity="0.14"/><circle cx="2636" cy="1763" r="3.8" opacity="0.10"/><circle cx="2804" cy="2088" r="3.2" opacity="0.28"/><circle cx="3525" cy="1545" r="3.4" opacity="0.16"/><circle cx="3555" cy="2132" r="2.2" opacity="0.28"/><circle cx="2613" cy="1848" r="2.9" opacity="0.23"/><circle cx="3367" cy="2063" r="2.9" opacity="0.12"/><circle cx="3529" cy="1419" r="3.5" opacity="0.13"/><circle cx="3518" cy="1875" r="2.5" opacity="0.29"/><circle cx="2754" cy="1542" r="2.5" opacity="0.19"/><circle cx="2794" cy="2102" r="2.8" opacity="0.31"/><circle cx="2831" cy="1743" r="3.6" opacity="0.32"/><circle cx="3039" cy="1745" r="3.9" opacity="0.20"/><circle cx="3029" cy="2129" r="2.9" opacity="0.13"/><circle cx="3559" cy="1770" r="2.6" opacity="0.30"/><circle cx="2581" cy="2124" r="2.0" opacity="0.12"/><circle cx="3559" cy="1751" r="2.2" opacity="0.32"/><circle cx="2917" cy="2119" r="2.8" opacity="0.18"/><circle cx="3169" cy="2095" r="4.0" opacity="0.25"/><circle cx="2952" cy="2058" r="3.8" opacity="0.22"/><circle cx="3315" cy="2064" r="3.3" opacity="0.24"/><circle cx="2966" cy="1848" r="2.3" opacity="0.13"/><circle cx="2836" cy="1726" r="2.6" opacity="0.25"/><circle cx="2968" cy="1772" r="2.4" opacity="0.12"/><circle cx="3321" cy="1549" r="2.8" opacity="0.23"/><circle cx="3274" cy="1701" r="2.4" opacity="0.30"/><circle cx="3244" cy="1568" r="3.5" opacity="0.22"/><circle cx="3007" cy="1448" r="2.3" opacity="0.12"/><circle cx="3300" cy="1965" r="2.8" opacity="0.11"/><circle cx="2743" cy="2122" r="3.8" opacity="0.19"/><circle cx="2713" cy="1724" r="2.8" opacity="0.10"/><circle cx="3323" cy="1894" r="3.1" opacity="0.28"/><circle cx="3431" cy="1541" r="2.0" opacity="0.18"/><circle cx="3495" cy="1988" r="2.4" opacity="0.26"/><circle cx="3162" cy="1591" r="3.4" opacity="0.16"/><circle cx="2924" cy="1532" r="3.0" opacity="0.20"/><circle cx="3232" cy="1379" r="2.7" opacity="0.11"/><circle cx="2886" cy="1440" r="3.0" opacity="0.30"/><circle cx="3466" cy="1762" r="2.6" opacity="0.10"/><circle cx="3245" cy="1627" r="2.7" opacity="0.24"/><circle cx="2758" cy="1817" r="2.8" opacity="0.18"/><circle cx="3449" cy="1952" r="2.1" opacity="0.30"/><circle cx="2565" cy="1564" r="2.1" opacity="0.18"/><circle cx="2719" cy="1595" r="2.7" opacity="0.20"/><circle cx="2848" cy="1425" r="3.0" opacity="0.24"/><circle cx="3257" cy="1394" r="2.0" opacity="0.25"/><circle cx="2671" cy="1424" r="2.8" opacity="0.18"/><circle cx="3275" cy="1403" r="2.3" opacity="0.16"/><circle cx="2907" cy="1377" r="3.0" opacity="0.10"/><circle cx="2881" cy="2094" r="2.1" opacity="0.24"/><circle cx="3046" cy="2106" r="2.8" opacity="0.14"/><circle cx="3616" cy="1947" r="2.1" opacity="0.22"/><circle cx="2887" cy="2072" r="2.2" opacity="0.24"/><circle cx="3576" cy="2094" r="3.8" opacity="0.25"/><circle cx="2883" cy="1431" r="2.2" opacity="0.30"/><circle cx="3312" cy="1454" r="3.9" opacity="0.21"/><circle cx="2745" cy="1752" r="2.7" opacity="0.15"/><circle cx="3232" cy="1789" r="2.4" opacity="0.28"/><circle cx="3133" cy="1641" r="2.1" opacity="0.21"/><circle cx="2726" cy="2099" r="2.9" opacity="0.30"/><circle cx="2901" cy="1737" r="2.9" opacity="0.30"/><circle cx="2697" cy="1688" r="2.0" opacity="0.30"/><circle cx="3427" cy="1689" r="3.3" opacity="0.22"/><circle cx="3210" cy="2048" r="4.0" opacity="0.12"/><circle cx="3164" cy="2089" r="2.7" opacity="0.16"/><circle cx="2702" cy="1868" r="2.3" opacity="0.18"/><circle cx="2987" cy="1867" r="3.9" opacity="0.32"/><circle cx="2879" cy="1581" r="3.4" opacity="0.25"/><circle cx="2850" cy="2123" r="3.6" opacity="0.14"/><circle cx="3088" cy="1444" r="3.0" opacity="0.23"/><circle cx="2755" cy="1430" r="2.2" opacity="0.21"/><circle cx="2622" cy="1509" r="2.2" opacity="0.19"/><circle cx="3130" cy="1663" r="3.2" opacity="0.31"/><circle cx="2809" cy="2158" r="2.5" opacity="0.23"/><circle cx="2943" cy="1912" r="3.7" opacity="0.27"/><circle cx="3221" cy="1821" r="2.1" opacity="0.28"/><circle cx="3603" cy="1875" r="3.1" opacity="0.13"/><circle cx="2856" cy="1658" r="2.2" opacity="0.32"/><circle cx="3539" cy="1667" r="2.1" opacity="0.19"/><circle cx="2737" cy="1799" r="2.2" opacity="0.11"/><circle cx="3213" cy="1674" r="3.3" opacity="0.21"/><circle cx="3227" cy="1624" r="3.1" opacity="0.21"/><circle cx="3191" cy="1377" r="3.9" opacity="0.15"/><circle cx="2644" cy="1605" r="3.3" opacity="0.31"/><circle cx="3456" cy="1631" r="3.6" opacity="0.11"/><circle cx="2661" cy="1519" r="3.5" opacity="0.26"/><circle cx="2702" cy="1934" r="3.5" opacity="0.14"/><circle cx="3272" cy="1693" r="2.0" opacity="0.21"/><circle cx="3084" cy="2072" r="3.0" opacity="0.28"/><circle cx="3042" cy="1940" r="3.9" opacity="0.10"/><circle cx="3040" cy="1713" r="3.5" opacity="0.10"/><circle cx="3176" cy="1593" r="2.8" opacity="0.26"/><circle cx="3229" cy="1567" r="2.3" opacity="0.29"/><circle cx="3100" cy="2150" r="3.3" opacity="0.15"/><circle cx="2742" cy="1629" r="3.5" opacity="0.20"/><circle cx="3164" cy="1844" r="2.2" opacity="0.18"/><circle cx="2874" cy="2115" r="1.8" opacity="0.31"/><circle cx="2712" cy="1804" r="2.4" opacity="0.17"/><circle cx="3370" cy="1920" r="3.5" opacity="0.14"/><circle cx="2777" cy="1973" r="2.1" opacity="0.30"/><circle cx="3540" cy="1773" r="3.3" opacity="0.17"/><circle cx="3236" cy="1391" r="2.3" opacity="0.20"/><circle cx="3081" cy="2155" r="4.0" opacity="0.13"/><circle cx="2855" cy="1437" r="2.6" opacity="0.31"/><circle cx="3166" cy="1403" r="2.9" opacity="0.31"/><circle cx="3592" cy="2096" r="3.5" opacity="0.16"/><circle cx="3515" cy="1607" r="3.7" opacity="0.11"/><circle cx="2623" cy="2010" r="2.0" opacity="0.20"/><circle cx="2926" cy="1592" r="2.6" opacity="0.21"/><circle cx="3448" cy="1862" r="3.8" opacity="0.28"/><circle cx="2718" cy="1707" r="3.0" opacity="0.16"/><circle cx="3162" cy="2146" r="2.3" opacity="0.27"/><circle cx="3615" cy="1573" r="3.7" opacity="0.14"/><circle cx="3538" cy="1613" r="2.4" opacity="0.30"/><circle cx="2871" cy="1548" r="2.5" opacity="0.25"/><circle cx="2586" cy="1493" r="2.0" opacity="0.22"/><circle cx="2617" cy="2103" r="2.8" opacity="0.24"/><circle cx="2775" cy="1924" r="1.9" opacity="0.12"/><circle cx="3528" cy="1542" r="2.9" opacity="0.22"/><circle cx="2759" cy="1840" r="2.4" opacity="0.24"/><circle cx="2835" cy="1715" r="2.9" opacity="0.10"/><circle cx="2678" cy="1441" r="2.8" opacity="0.22"/><circle cx="3596" cy="1645" r="2.2" opacity="0.31"/><circle cx="3129" cy="2136" r="2.6" opacity="0.12"/><circle cx="3043" cy="2149" r="2.0" opacity="0.20"/><circle cx="3461" cy="1539" r="3.5" opacity="0.11"/><circle cx="2896" cy="1507" r="3.9" opacity="0.23"/><circle cx="2858" cy="2104" r="3.0" opacity="0.18"/><circle cx="3312" cy="1908" r="3.9" opacity="0.11"/><circle cx="3491" cy="1889" r="2.1" opacity="0.19"/><circle cx="2623" cy="2063" r="2.0" opacity="0.15"/><circle cx="3312" cy="1976" r="2.3" opacity="0.13"/><circle cx="2590" cy="1435" r="3.7" opacity="0.14"/><circle cx="2990" cy="1983" r="4.0" opacity="0.29"/><circle cx="3539" cy="2032" r="2.6" opacity="0.24"/><circle cx="3311" cy="1699" r="3.1" opacity="0.31"/><circle cx="2908" cy="2103" r="4.0" opacity="0.23"/><circle cx="3531" cy="1962" r="3.4" opacity="0.12"/><circle cx="3352" cy="1513" r="3.5" opacity="0.11"/><circle cx="3489" cy="1520" r="3.7" opacity="0.30"/><circle cx="2671" cy="1463" r="3.9" opacity="0.32"/><circle cx="2665" cy="1877" r="2.6" opacity="0.11"/><circle cx="3464" cy="1899" r="1.9" opacity="0.20"/><circle cx="2993" cy="2154" r="4.0" opacity="0.15"/><circle cx="3370" cy="1898" r="2.8" opacity="0.23"/><circle cx="2997" cy="1402" r="3.5" opacity="0.28"/><circle cx="3552" cy="1785" r="1.9" opacity="0.30"/><circle cx="2828" cy="1476" r="2.1" opacity="0.23"/><circle cx="2976" cy="1934" r="2.0" opacity="0.10"/><circle cx="3578" cy="1443" r="2.6" opacity="0.10"/><circle cx="3497" cy="2044" r="3.1" opacity="0.13"/><circle cx="3411" cy="1425" r="2.8" opacity="0.17"/><circle cx="3617" cy="2148" r="3.6" opacity="0.20"/><circle cx="3094" cy="1810" r="3.0" opacity="0.14"/><circle cx="2776" cy="1932" r="3.7" opacity="0.31"/><circle cx="3368" cy="1812" r="2.0" opacity="0.12"/><circle cx="2724" cy="1932" r="2.4" opacity="0.19"/><circle cx="2724" cy="1559" r="2.6" opacity="0.23"/><circle cx="3597" cy="1472" r="2.4" opacity="0.32"/><circle cx="3497" cy="2131" r="3.0" opacity="0.15"/><circle cx="2776" cy="2010" r="3.8" opacity="0.24"/><circle cx="3289" cy="2074" r="2.4" opacity="0.23"/><circle cx="3162" cy="2105" r="2.5" opacity="0.13"/><circle cx="2673" cy="1596" r="1.9" opacity="0.17"/><circle cx="3175" cy="1726" r="3.2" opacity="0.22"/><circle cx="3363" cy="1731" r="3.5" opacity="0.20"/><circle cx="3331" cy="1987" r="3.7" opacity="0.14"/><circle cx="3328" cy="1380" r="2.7" opacity="0.22"/><circle cx="2594" cy="1402" r="2.3" opacity="0.18"/><circle cx="3304" cy="1523" r="2.7" opacity="0.30"/><circle cx="2904" cy="1980" r="3.1" opacity="0.11"/><circle cx="3592" cy="1459" r="2.6" opacity="0.31"/><circle cx="2820" cy="2126" r="3.3" opacity="0.14"/><circle cx="2712" cy="2152" r="2.8" opacity="0.26"/><circle cx="2703" cy="1774" r="2.0" opacity="0.21"/><circle cx="2573" cy="1404" r="3.8" opacity="0.30"/><circle cx="3380" cy="1792" r="2.2" opacity="0.26"/><circle cx="2789" cy="1417" r="2.5" opacity="0.23"/><circle cx="3178" cy="2032" r="2.7" opacity="0.13"/><circle cx="2605" cy="1528" r="3.9" opacity="0.11"/><circle cx="3238" cy="1718" r="2.2" opacity="0.25"/><circle cx="3192" cy="1424" r="3.3" opacity="0.12"/><circle cx="2800" cy="1824" r="3.4" opacity="0.23"/><circle cx="3512" cy="1928" r="3.9" opacity="0.16"/><circle cx="3604" cy="1526" r="2.2" opacity="0.14"/><circle cx="2688" cy="1868" r="1.8" opacity="0.28"/><circle cx="3196" cy="1612" r="3.8" opacity="0.29"/><circle cx="3231" cy="1431" r="3.9" opacity="0.24"/><circle cx="3508" cy="1501" r="1.9" opacity="0.17"/><circle cx="3392" cy="2026" r="3.8" opacity="0.18"/><circle cx="3428" cy="1494" r="3.0" opacity="0.11"/><circle cx="3324" cy="1659" r="2.0" opacity="0.25"/><circle cx="3013" cy="1625" r="2.6" opacity="0.27"/><circle cx="2994" cy="2071" r="2.1" opacity="0.19"/><circle cx="3482" cy="1846" r="3.4" opacity="0.28"/><circle cx="3118" cy="1469" r="2.5" opacity="0.16"/><circle cx="2727" cy="1852" r="2.3" opacity="0.29"/><circle cx="3044" cy="2009" r="3.7" opacity="0.25"/><circle cx="3429" cy="1999" r="3.1" opacity="0.17"/><circle cx="2999" cy="1612" r="2.9" opacity="0.19"/><circle cx="2915" cy="1460" r="2.7" opacity="0.13"/><circle cx="2948" cy="1457" r="2.6" opacity="0.22"/><circle cx="2642" cy="1575" r="2.7" opacity="0.16"/><circle cx="3159" cy="2016" r="3.5" opacity="0.15"/><circle cx="2773" cy="1815" r="2.6" opacity="0.11"/><circle cx="2808" cy="2138" r="3.9" opacity="0.18"/><circle cx="2607" cy="2007" r="2.4" opacity="0.11"/><circle cx="2822" cy="1492" r="3.8" opacity="0.14"/><circle cx="3355" cy="1483" r="2.0" opacity="0.18"/><circle cx="3208" cy="1793" r="3.7" opacity="0.20"/><circle cx="3210" cy="1418" r="3.4" opacity="0.25"/><circle cx="3422" cy="1454" r="2.8" opacity="0.24"/><circle cx="2572" cy="2048" r="3.6" opacity="0.21"/><circle cx="2929" cy="1951" r="3.8" opacity="0.21"/><circle cx="3499" cy="1488" r="2.5" opacity="0.26"/><circle cx="2944" cy="1786" r="3.2" opacity="0.23"/><circle cx="3016" cy="1483" r="2.7" opacity="0.15"/><circle cx="3422" cy="1999" r="2.3" opacity="0.23"/><circle cx="3261" cy="1711" r="2.0" opacity="0.26"/><circle cx="2653" cy="1913" r="2.0" opacity="0.23"/><circle cx="2856" cy="1692" r="4.0" opacity="0.31"/><circle cx="3174" cy="1919" r="3.6" opacity="0.26"/><circle cx="2701" cy="1735" r="3.6" opacity="0.26"/><circle cx="2814" cy="2057" r="3.1" opacity="0.16"/><circle cx="2624" cy="1961" r="2.8" opacity="0.31"/><circle cx="2843" cy="1426" r="2.3" opacity="0.19"/><circle cx="2602" cy="1679" r="2.3" opacity="0.32"/><circle cx="2744" cy="2042" r="2.2" opacity="0.23"/><circle cx="3260" cy="1796" r="3.9" opacity="0.20"/><circle cx="3251" cy="2063" r="2.3" opacity="0.22"/><circle cx="3604" cy="1976" r="3.4" opacity="0.19"/><circle cx="3463" cy="2039" r="2.8" opacity="0.23"/><circle cx="3281" cy="1998" r="2.8" opacity="0.17"/><circle cx="2711" cy="1945" r="3.4" opacity="0.14"/><circle cx="3470" cy="1501" r="3.6" opacity="0.13"/><circle cx="3242" cy="1784" r="2.1" opacity="0.26"/><circle cx="3374" cy="2079" r="2.9" opacity="0.21"/><circle cx="3255" cy="2092" r="2.6" opacity="0.25"/><circle cx="3190" cy="1515" r="3.3" opacity="0.29"/><circle cx="3061" cy="2127" r="3.0" opacity="0.29"/><circle cx="3366" cy="1699" r="2.5" opacity="0.19"/><circle cx="2927" cy="1408" r="1.8" opacity="0.19"/><circle cx="2762" cy="2047" r="3.9" opacity="0.16"/><circle cx="3320" cy="1662" r="3.7" opacity="0.20"/><circle cx="3557" cy="1895" r="2.0" opacity="0.13"/></g>
<rect x="2563" y="2146.5" width="1057.5" height="3.5" fill="#cfe6d8" opacity="0.25"/>
</g>
<rect x="53.5" y="1295" width="1847.5" height="1078" fill="#005b78"/>
<path d="M53.5 1295H1901L1890.5 1305.5H64V2362.5L53.5 2373Z" fill="#3a81a8"/>
<path d="M1901 2373H53.5L64 2362.5H1890.5V1305.5L1901 1295Z" fill="#003a52"/>
<rect x="67" y="1308" width="52" height="51" fill="#000"/>
<rect x="78.5" y="1320" width="29" height="29" fill="#fff"/>
<circle cx="85.75" cy="1327.25" r="3.4" fill="#000"/>
<circle cx="100.25" cy="1327.25" r="3.4" fill="#000"/>
<circle cx="93" cy="1334.5" r="3.4" fill="#000"/>
<circle cx="85.75" cy="1341.75" r="3.4" fill="#000"/>
<circle cx="100.25" cy="1341.75" r="3.4" fill="#000"/>
<rect x="169" y="1308" width="145" height="51" fill="#000"/>
<g transform="translate(169,1308)" fill="none" stroke="#fff" stroke-width="7" stroke-linejoin="round" stroke-linecap="round"><path d="M9 7.5H42V14L22.5 29H42V35.5H9V29.5L28.5 14H9Z" fill="#fff" stroke="none"/><path d="M48.5 10.5V25Q48.5 32 55 32H64M65.5 10.5V38.5Q65.5 45 58 45H52.5"/><path d="M94 32H82.5Q76 32 76 26V17Q76 11 82.5 11H94M94.3 10.5V38.5Q94.3 45 87 45H81.5"/><ellipse cx="115" cy="21.5" rx="10.2" ry="10.6"/></g>
<rect x="1837" y="1308" width="52" height="51" fill="#000"/>
<g transform="translate(1837,1308) scale(1)" fill="#fff"><path d="M22.5 3H29.5V29H3V22.5H22.5Z"/><path d="M34.5 19L48.5 48.5L31.5 32L18.5 33.5Z"/></g>
<text x="564" y="1352" font-family="Liberation Mono, monospace" font-size="46" fill="#d4eef0" textLength="816.064" lengthAdjust="spacingAndGlyphs">Surface/Wavefront Profile</text>
<rect x="64" y="1361.5" width="1826" height="3.5" fill="#034a66"/>
<rect x="64" y="1369" width="1821" height="994.5" fill="#005b78"/>
<path d="M64 1369H1885L1874 1380H75V2352.5L64 2363.5Z" fill="#3a81a8"/>
<path d="M1885 2363.5H64L75 2352.5H1874V1380L1885 1369Z" fill="#003a52"/>
<rect x="77" y="1385" width="52" height="51" fill="#000"/>
<rect x="88.5" y="1397" width="29" height="29" fill="#fff"/>
<circle cx="95.75" cy="1404.25" r="3.4" fill="#000"/>
<circle cx="110.25" cy="1404.25" r="3.4" fill="#000"/>
<circle cx="103" cy="1411.5" r="3.4" fill="#000"/>
<circle cx="95.75" cy="1418.75" r="3.4" fill="#000"/>
<circle cx="110.25" cy="1418.75" r="3.4" fill="#000"/>
<rect x="179" y="1385" width="145" height="51" fill="#000"/>
<g transform="translate(179,1385)" fill="none" stroke="#fff" stroke-width="7" stroke-linejoin="round" stroke-linecap="round"><path d="M9 7.5H42V14L22.5 29H42V35.5H9V29.5L28.5 14H9Z" fill="#fff" stroke="none"/><path d="M48.5 10.5V25Q48.5 32 55 32H64M65.5 10.5V38.5Q65.5 45 58 45H52.5"/><path d="M94 32H82.5Q76 32 76 26V17Q76 11 82.5 11H94M94.3 10.5V38.5Q94.3 45 87 45H81.5"/><ellipse cx="115" cy="21.5" rx="10.2" ry="10.6"/></g>
<rect x="1820" y="1385" width="52" height="51" fill="#000"/>
<g transform="translate(1820,1385) scale(1)" fill="#fff"><path d="M22.5 3H29.5V29H3V22.5H22.5Z"/><path d="M34.5 19L48.5 48.5L31.5 32L18.5 33.5Z"/></g>
<text x="777" y="1428" font-family="Liberation Mono, monospace" font-size="46" fill="#d4eef0" textLength="389.664" lengthAdjust="spacingAndGlyphs">Profile Plot</text>
<rect x="75" y="1438" width="1799" height="4" fill="#034a66"/>
<rect x="75" y="1443.5" width="1799" height="4.5" fill="#2a7698"/>
<rect x="75" y="1448.5" width="1800" height="905.5" fill="#004042"/>
<rect x="440.5" y="1523" width="1309" height="629" fill="#000"/>
<path d="M414.5 1524.5V2152M385 1526H416M398 1578.1H416M398 1630.2H416M385 1682.3H416M398 1734.4H416M398 1786.5H416M385 1838.6H416M398 1890.7H416M398 1942.8H416M385 1994.9H416M398 2047H416M398 2099.1H416M385 2151.2H416" stroke="#e0ecec" stroke-width="3.4" fill="none"/>
<text x="218" y="1543.5" font-family="Liberation Sans" font-size="47" fill="#d4eef0" textLength="145" lengthAdjust="spacingAndGlyphs">+30.00</text>
<text x="218" y="1699.8" font-family="Liberation Sans" font-size="47" fill="#d4eef0" textLength="145" lengthAdjust="spacingAndGlyphs">+15.00</text>
<text x="245" y="1856.1" font-family="Liberation Sans" font-size="47" fill="#d4eef0" textLength="118" lengthAdjust="spacingAndGlyphs">+0.00</text>
<text x="218" y="2012.4" font-family="Liberation Sans" font-size="47" fill="#d4eef0" textLength="145" lengthAdjust="spacingAndGlyphs">&#8722;15.00</text>
<text x="218" y="2168.7" font-family="Liberation Sans" font-size="47" fill="#d4eef0" textLength="145" lengthAdjust="spacingAndGlyphs">&#8722;30.00</text>
<path d="M440 2185H1750M441.5 2185V2218M532.45 2185V2202M623.4 2185V2202M714.35 2185V2202M805.3 2185V2202M896.25 2185V2218M987.2 2185V2202M1078.15 2185V2202M1169.1 2185V2202M1260.05 2185V2202M1351 2185V2218M1441.95 2185V2202M1532.9 2185V2202M1623.85 2185V2202M1714.8 2185V2202" stroke="#e0ecec" stroke-width="3.4" fill="none"/>
<text x="441.5" y="2275" font-family="Liberation Sans" font-size="47" fill="#d4eef0" text-anchor="middle">0</text>
<text x="895.5" y="2275" font-family="Liberation Sans" font-size="47" fill="#d4eef0" text-anchor="middle">50</text>
<text x="1350" y="2275" font-family="Liberation Sans" font-size="47" fill="#d4eef0" text-anchor="middle">100</text>
<text x="791" y="2347.5" font-family="Liberation Sans" font-size="57" fill="#d4eef0" textLength="365" lengthAdjust="spacingAndGlyphs">Distance (&#181;m)</text>
<text transform="translate(147,2037) rotate(-90)" font-size="57" fill="#d4eef0" textLength="273" lengthAdjust="spacingAndGlyphs">Height (nm)</text>
<path d="M441 1839.5H1750" stroke="#e6e6e6" stroke-width="4.2" stroke-dasharray="36 17.1" fill="none"/>
<path d="M888.5 1959.3L901.2 1979.3L906.0 1975.4L910.9 1912.1L916.7 1882.9L926.5 1874.2L933.8 1912.1L940.1 1933.0L954.7 1914.6L961.5 1935.5L967.8 1917.0L975.1 1844.0L981.4 1822.1L987.3 1844.0L992.1 1878.1L997.0 1887.8L1003.3 1887.8L1010.1 1929.2L1016.5 1955.9L1022.8 1958.3L1032.5 1919.4L1040.8 1955.9L1049.1 1970.5L1060.3 2010.4L1065.1 2002.1L1077.3 1912.1L1083.1 1903.4L1091.9 1946.2L1101.6 1985.1L1107.4 1972.9L1113.8 1904.8L1118.6 1895.1L1130.8 1941.3L1138.1 1966.6L1142.9 1951.0L1150.2 1873.2L1157.5 1846.5L1163.9 1858.6L1174.6 1914.6L1180.4 1912.1L1186.7 1895.1L1191.6 1887.8L1199.9 1846.5L1211.1 1865.9L1217.4 1853.8L1224.2 1810.0L1230.5 1785.7L1234.4 1771.1L1240.2 1785.7L1245.1 1780.8L1251.4 1790.5L1256.3 1813.9L1259.7 1812.4L1264.6 1796.4L1269.4 1812.4L1272.8 1878.1L1277.7 1919.4L1281.6 1940.3L1291.3 1902.4L1297.2 1880.5L1303.5 1882.9L1308.3 1904.8L1313.2 1907.3L1318.1 1929.2" stroke="#10e010" stroke-width="3.6" fill="none" stroke-linejoin="round" stroke-linecap="round"/>
</svg>
</body></html>
